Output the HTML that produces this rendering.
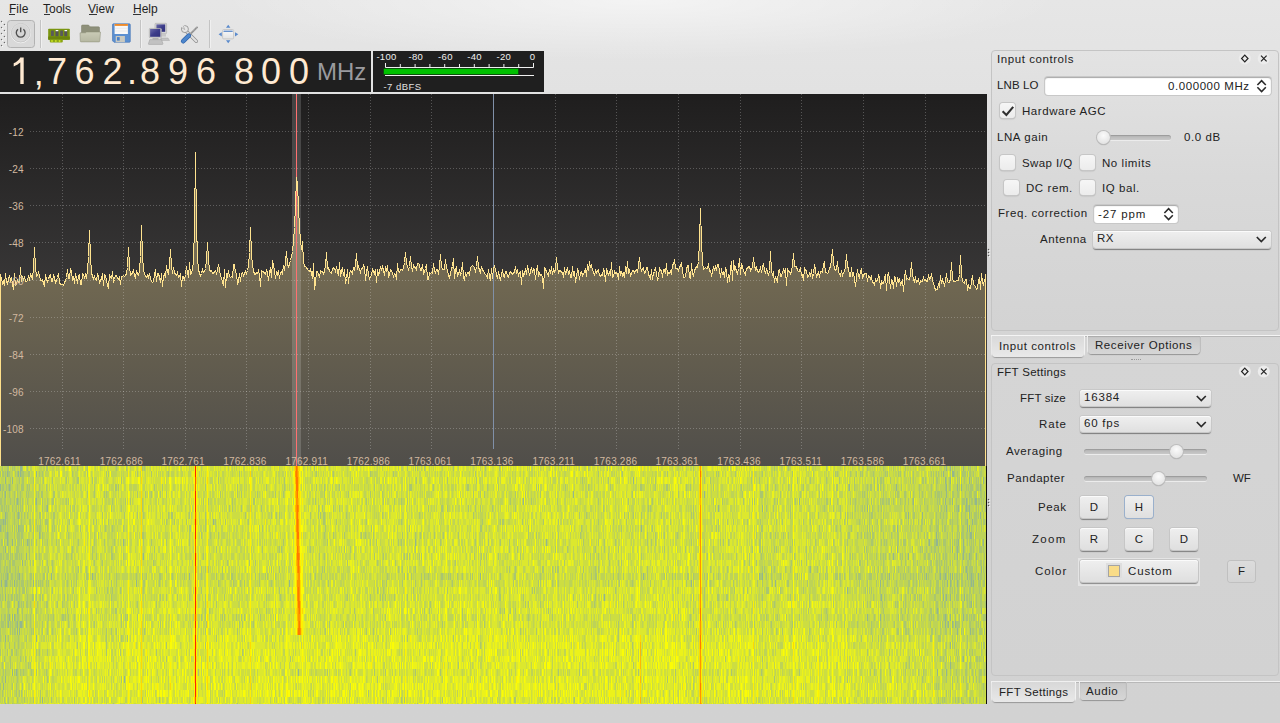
<!DOCTYPE html>
<html><head><meta charset="utf-8">
<style>
*{margin:0;padding:0;box-sizing:border-box}
html,body{width:1280px;height:723px;overflow:hidden}
body{position:relative;font-family:"Liberation Sans",sans-serif;color:#1e1e1e;
 background:
  radial-gradient(ellipse 420px 60px at 640px 0px, rgba(255,255,255,0.55), rgba(255,255,255,0) 100%),
  linear-gradient(to bottom,#e6e6e6 0px,#e2e2e2 90px,#d6d6d6 280px,#d3d3d3 420px,#d2d2d2 723px);}
.a{position:absolute}
.menu{font-size:12px;top:1px;line-height:16px;color:#1e1e1e}
.menu u{text-decoration:none}
.ul{position:absolute;height:1px;top:14px;background:#333}
.t{position:absolute;font-size:11.5px;line-height:14px;color:#222;white-space:nowrap;letter-spacing:0.57px}
.chk{position:absolute;width:15px;height:15px;border-radius:3px;background:linear-gradient(#f6f6f6,#ececec);box-shadow:0 0 0 1px #c6c6c6,0 1px 1.5px rgba(0,0,0,0.3)}
.combo{position:absolute;border-radius:3px;background:linear-gradient(#efefef,#e0e0e0);box-shadow:inset 0 1px 0 #fbfbfb,0 0 0 1px #c8c8c8,0 1.5px 1px rgba(0,0,0,0.42)}
.btn{position:absolute;border-radius:3px;background:linear-gradient(#efefef,#dfdfdf);box-shadow:inset 0 1px 0 #fbfbfb,0 0 0 1px #c6c6c6,0 1.5px 1px rgba(0,0,0,0.4);font-size:11.5px;line-height:22px;text-align:center;color:#222}
.frame{position:absolute;border:1px solid #c4c4c4;border-radius:4px}
.tab{position:absolute;border-radius:0 0 4px 4px}
</style></head><body>

<!-- menu bar -->
<div class="a menu" style="left:9px"><u>F</u>ile</div>
<div class="a menu" style="left:43px"><u>T</u>ools</div>
<div class="a menu" style="left:88px"><u>V</u>iew</div>
<div class="a menu" style="left:133px"><u>H</u>elp</div>
<div class="ul" style="left:9px;width:6px"></div><div class="ul" style="left:44px;width:6px"></div><div class="ul" style="left:89px;width:8px"></div><div class="ul" style="left:133px;width:8px"></div>

<!-- toolbar -->
<svg class="a" style="left:0;top:18px" width="260" height="34" viewBox="0 18 260 34">
 <g fill="#ffffff"><circle cx="2.3" cy="22.3" r="0.6"/><circle cx="5.2" cy="25.3" r="0.6"/><circle cx="2.3" cy="28.3" r="0.6"/><circle cx="5.2" cy="31.3" r="0.6"/><circle cx="2.3" cy="34.3" r="0.6"/><circle cx="5.2" cy="37.3" r="0.6"/><circle cx="2.3" cy="40.3" r="0.6"/><circle cx="5.2" cy="43.3" r="0.6"/><circle cx="2.3" cy="46.3" r="0.6"/></g>
 <g fill="#6a6a6a">
  <circle cx="1.5" cy="21.5" r="0.7"/><circle cx="4.4" cy="24.5" r="0.7"/><circle cx="1.5" cy="27.5" r="0.7"/><circle cx="4.4" cy="30.5" r="0.7"/>
  <circle cx="1.5" cy="33.5" r="0.7"/><circle cx="4.4" cy="36.5" r="0.7"/><circle cx="1.5" cy="39.5" r="0.7"/><circle cx="4.4" cy="42.5" r="0.7"/><circle cx="1.5" cy="45.5" r="0.7"/>
 </g>
 <rect x="7.5" y="20.5" width="27" height="27" rx="3" fill="#d9d9d9" stroke="#b2b2b2"/>
 <circle cx="20.7" cy="33" r="9.8" fill="none" stroke="#f4f4f4" stroke-width="0.9"/>
 <circle cx="20.7" cy="32.6" r="9.4" fill="#dadada" stroke="#c0c0c0" stroke-width="0.7"/>
 <circle cx="20.7" cy="32.6" r="7.6" fill="#d6d6d6"/>
 <path d="M18 29.3 A4.4 4.4 0 1 0 23.4 29.3" fill="none" stroke="#4e4e4e" stroke-width="1.35"/>
 <line x1="20.7" y1="27.6" x2="20.7" y2="32.3" stroke="#4e4e4e" stroke-width="1.35"/>
 <line x1="40.5" y1="20" x2="40.5" y2="48" stroke="#c4c4c4"/><line x1="41.5" y1="20" x2="41.5" y2="48" stroke="#f0f0f0"/>
 <!-- card icon -->
 <defs>
  <linearGradient id="flf" x1="0" y1="0" x2="0" y2="1"><stop offset="0" stop-color="#cacbb6"/><stop offset="1" stop-color="#b6b8a2"/></linearGradient>
  <linearGradient id="scr" x1="0" y1="0" x2="1" y2="1"><stop offset="0" stop-color="#6a6aa8"/><stop offset="0.5" stop-color="#3c3c8a"/><stop offset="1" stop-color="#30307a"/></linearGradient>
  <linearGradient id="win" x1="0" y1="0" x2="0" y2="1"><stop offset="0" stop-color="#fafafa"/><stop offset="1" stop-color="#e2e2e2"/></linearGradient>
 </defs>
 <rect x="48.2" y="28.8" width="21.6" height="10.9" rx="0.8" fill="#7a9510"/>
 <rect x="48.2" y="36.5" width="21.6" height="3.2" fill="#6c840c"/>
 <rect x="49.8" y="39.4" width="13" height="3" rx="1" fill="#8aa414"/>
 <circle cx="52" cy="41" r="1" fill="#c8e020"/><circle cx="55.8" cy="41" r="1" fill="#c8e020"/><circle cx="59.6" cy="41" r="1" fill="#c8e020"/>
 <rect x="51" y="30.5" width="2.8" height="5.6" rx="0.6" fill="#5a5a5a"/><rect x="55.5" y="30.3" width="3" height="6" rx="0.6" fill="#555"/><rect x="55.7" y="30" width="2.6" height="1.2" fill="#fff"/>
 <rect x="60.2" y="30.5" width="2.8" height="5.6" rx="0.6" fill="#5a5a5a"/><rect x="64.3" y="30.3" width="3" height="6" rx="0.6" fill="#555"/><rect x="64.5" y="30" width="2.6" height="1.2" fill="#fff"/>
 <!-- folder -->
 <path d="M81.5 26 Q81.5 25 82.5 25 H88.5 L90 26.8 H98.5 Q99.5 26.8 99.5 27.8 V34 H81.5z" fill="#8e907a" stroke="#7a7c66" stroke-width="0.5"/>
 <path d="M80 32.8 H85.5 L86.5 32 H100.5 L99.8 41.2 Q99.7 41.9 99 41.9 H81 Q80.3 41.9 80.3 41.2z" fill="url(#flf)" stroke="#8a8c76" stroke-width="0.5"/>
 <!-- floppy -->
 <path d="M112.5 24.8 Q112.5 23.8 113.5 23.8 H129.3 Q130.3 23.8 130.3 24.8 V41.3 Q130.3 42.3 129.3 42.3 H114 L112.5 40.8z" fill="#5b8fd0" stroke="#3f70b4" stroke-width="0.6"/>
 <rect x="114.6" y="24" width="13.3" height="10" fill="#f8f8f8"/><rect x="114.6" y="24" width="13.3" height="1.9" fill="#ee8a2a"/>
 <line x1="114.8" y1="28.3" x2="127.8" y2="28.3" stroke="#dcdcdc" stroke-width="0.5"/><line x1="114.8" y1="31" x2="127.8" y2="31" stroke="#dcdcdc" stroke-width="0.5"/>
 <rect x="115.7" y="36" width="9.2" height="6.2" fill="#c9c9c0"/><rect x="117" y="37.1" width="2.7" height="3.5" fill="#4a80c8"/>
 <line x1="140.5" y1="20" x2="140.5" y2="48" stroke="#c4c4c4"/><line x1="141.5" y1="20" x2="141.5" y2="48" stroke="#f0f0f0"/>
 <!-- computers -->
 <rect x="155" y="23.3" width="11.6" height="10.3" rx="0.8" fill="#d6d6d6" stroke="#a8a8a8" stroke-width="0.6"/>
 <rect x="156.4" y="24.4" width="8.8" height="7.4" fill="url(#scr)"/>
 <rect x="160" y="33.6" width="6" height="3" fill="#c8c8c8"/><path d="M161 38 h7 l1.5 2.5 h-9z" fill="#c4c4c4" stroke="#a0a0a0" stroke-width="0.4"/>
 <rect x="149.3" y="28.4" width="12.1" height="9.4" rx="0.8" fill="#dadada" stroke="#a4a4a4" stroke-width="0.6"/>
 <rect x="150.1" y="29" width="10.3" height="7.8" fill="url(#scr)"/>
 <rect x="152.5" y="38" width="6" height="1.6" fill="#b0b0b0"/>
 <path d="M149.8 39.6 H161.5 L163 43.8 Q163 44.4 162.3 44.4 H148.9 Q148.3 44.4 148.4 43.8z" fill="#c2c2c2" stroke="#9c9c9c" stroke-width="0.5"/>
 <!-- tools -->
 <path d="M186.3 31.2 L196.3 41.2" stroke="#8c8c8c" stroke-width="3.4" stroke-linecap="round"/>
 <path d="M186.3 31.2 L196.3 41.2" stroke="#e2e2e2" stroke-width="2" stroke-linecap="round"/>
 <circle cx="184.9" cy="29.1" r="3.5" fill="#e6e6e6" stroke="#8a8a8a" stroke-width="0.8"/>
 <path d="M180.6 26.6 L183 24.2 L186.3 28 L184.8 29.5z" fill="#e5e5e5"/>
 <path d="M181.6 27.6 L184.8 29.6 L183.2 25.8" fill="none" stroke="#9a9a9a" stroke-width="0.6"/>
 <path d="M197 27.4 L188.5 35.9" stroke="#8a8a8a" stroke-width="1.9" stroke-linecap="round"/>
 <path d="M197 27.4 L188.5 35.9" stroke="#d4d4d4" stroke-width="0.8" stroke-dasharray="1 1"/>
 <path d="M188.8 35.6 L183.2 41.2" stroke="#2f64ac" stroke-width="4.6" stroke-linecap="round"/>
 <path d="M188.8 35.6 L183.2 41.2" stroke="#4d86cc" stroke-width="3.2" stroke-linecap="round"/>
 <line x1="209.5" y1="20" x2="209.5" y2="48" stroke="#c4c4c4"/><line x1="210.5" y1="20" x2="210.5" y2="48" stroke="#f0f0f0"/>
 <!-- move icon -->
 <rect x="222.6" y="29.5" width="11" height="9.4" rx="1" fill="url(#win)" stroke="#c0c0c0" stroke-width="0.8"/>
 <rect x="223.5" y="30.6" width="9.2" height="1.3" fill="#5a88c8"/>
 <path d="M228.2 24.8 L230.4 27.8 H226z M228.2 43.2 L230.4 40.2 H226z M218.6 34.3 L221.8 32.2 V36.4z M238.3 34.3 L235 32.2 V36.4z" fill="#5a8acc"/>
</svg>

<!-- frequency display -->
<div class="a" style="left:0;top:51px;width:371px;height:41px;background:#1f1f1f"></div>
<div class="a" id="freq" style="left:0;top:51px;width:371px;height:41px;font-size:36px;color:#ffead2;line-height:41px">
 <svg class="a" style="left:0;top:0" width="30" height="41"><path d="M20.3 6.5 H23.7 V33 H20.3 V11.6 C18.6 13.1 16.2 14.5 13.7 15.5 V12.3 C16.6 11 19.2 8.8 20.3 6.5z" fill="#ffead2"/></svg>
 <span class="a" style="left:33.7px;top:1px">,</span><span class="a" style="left:47px">7</span><span class="a" style="left:74.6px">6</span><span class="a" style="left:102.5px">2</span><span class="a" style="left:127px">.</span><span class="a" style="left:140px">8</span><span class="a" style="left:168px">9</span><span class="a" style="left:196px">6</span><span class="a" style="left:234px">8</span><span class="a" style="left:261px">0</span><span class="a" style="left:289px">0</span>
 <span class="a" style="left:317px;font-size:24px;color:#9a9a9e;top:0px">MHz</span>
</div>

<!-- meter -->
<div class="a" style="left:373px;top:51px;width:171px;height:41px;background:#1f1f1f"></div>
<svg class="a" style="left:373px;top:51px" width="171" height="41" viewBox="373 51 171 41">
 <g font-family="Liberation Sans" font-size="9.5" fill="#f0f0f0" text-anchor="middle" letter-spacing="0.3">
  <text x="386.5" y="60">-100</text><text x="415.8" y="60">-80</text><text x="445.4" y="60">-60</text><text x="474.6" y="60">-40</text><text x="503.8" y="60">-20</text><text x="532.5" y="60">0</text>
 </g>
 <path d="M385.5 63 V67.5 H533.5 V63" fill="none" stroke="#f0f0f0"/>
 <g stroke="#f0f0f0"><line x1="400.3" y1="64" x2="400.3" y2="67"/><line x1="415.1" y1="64" x2="415.1" y2="67"/><line x1="429.9" y1="64" x2="429.9" y2="67"/><line x1="444.7" y1="64" x2="444.7" y2="67"/><line x1="459.5" y1="64" x2="459.5" y2="67"/><line x1="474.3" y1="64" x2="474.3" y2="67"/><line x1="489.1" y1="64" x2="489.1" y2="67"/><line x1="503.9" y1="64" x2="503.9" y2="67"/><line x1="518.7" y1="64" x2="518.7" y2="67"/></g>
 <rect x="383.5" y="68.5" width="135" height="6" fill="#00c000" stroke="#0a3a0a" stroke-width="0.6"/>
 <line x1="385" y1="75.5" x2="534" y2="75.5" stroke="#f0f0f0"/>
 <text x="383.5" y="89.5" font-family="Liberation Sans" font-size="9.5" fill="#e0e0e0" letter-spacing="0.45">-7 dBFS</text>
</svg>

<!-- spectrum -->
<svg class="a" style="left:0;top:94px" width="987" height="372" viewBox="0 0 987 372">
 <defs>
  <linearGradient id="bg" x1="0" y1="0" x2="0" y2="1"><stop offset="0" stop-color="#1f1e1e"/><stop offset="1" stop-color="#504e4e"/></linearGradient>
  <linearGradient id="fl" x1="0" y1="0" x2="0" y2="372" gradientUnits="userSpaceOnUse"><stop offset="0" stop-color="#9c8a60"/><stop offset="0.45" stop-color="#736a52"/><stop offset="1" stop-color="#504e4a"/></linearGradient>
 </defs>
 <rect x="0" y="0" width="987" height="372" fill="url(#bg)"/>
 <path d="M0,372 L0.5,187.5 L1.5,184.5 L2.5,189.5 L3.5,187.5 L4.5,191.5 L5.5,179.5 L6.5,187.5 L7.5,189.5 L8.5,185.5 L9.5,181.5 L10.5,186.5 L11.5,183.5 L12.5,190.5 L13.5,195.5 L14.5,179.5 L15.5,191.5 L16.5,190.5 L17.5,186.5 L18.5,188.5 L19.5,188.5 L20.5,173.5 L21.5,187.5 L22.5,182.5 L23.5,186.5 L24.5,182.5 L25.5,187.5 L26.5,187.5 L27.5,186.5 L28.5,181.5 L29.5,186.5 L30.5,180.5 L31.5,182.5 L32.5,184.5 L33.5,174.5 L34.5,153.5 L35.5,173.5 L36.5,182.5 L37.5,181.5 L38.5,178.5 L39.5,181.5 L40.5,186.5 L41.5,186.5 L42.5,185.5 L43.5,189.5 L44.5,191.5 L45.5,180.5 L46.5,185.5 L47.5,187.5 L48.5,185.5 L49.5,181.5 L50.5,180.5 L51.5,187.5 L52.5,187.5 L53.5,180.5 L54.5,184.5 L55.5,188.5 L56.5,186.5 L57.5,183.5 L58.5,179.5 L59.5,188.5 L60.5,190.5 L61.5,190.5 L62.5,190.5 L63.5,191.5 L64.5,188.5 L65.5,186.5 L66.5,183.5 L67.5,175.5 L68.5,184.5 L69.5,184.5 L70.5,174.5 L71.5,177.5 L72.5,186.5 L73.5,182.5 L74.5,189.5 L75.5,179.5 L76.5,183.5 L77.5,189.5 L78.5,181.5 L79.5,180.5 L80.5,190.5 L81.5,190.5 L82.5,179.5 L83.5,180.5 L84.5,183.5 L85.5,180.5 L86.5,184.5 L87.5,176.5 L88.5,162.5 L89.5,136.5 L90.5,163.5 L91.5,178.5 L92.5,182.5 L93.5,184.5 L94.5,182.5 L95.5,185.5 L96.5,186.5 L97.5,180.5 L98.5,182.5 L99.5,189.5 L100.5,186.5 L101.5,184.5 L102.5,179.5 L103.5,191.5 L104.5,180.5 L105.5,181.5 L106.5,186.5 L107.5,191.5 L108.5,193.5 L109.5,180.5 L110.5,183.5 L111.5,184.5 L112.5,177.5 L113.5,188.5 L114.5,185.5 L115.5,181.5 L116.5,181.5 L117.5,184.5 L118.5,185.5 L119.5,182.5 L120.5,190.5 L121.5,182.5 L122.5,182.5 L123.5,181.5 L124.5,182.5 L125.5,181.5 L126.5,179.5 L127.5,173.5 L128.5,153.5 L129.5,172.5 L130.5,181.5 L131.5,180.5 L132.5,178.5 L133.5,176.5 L134.5,181.5 L135.5,184.5 L136.5,176.5 L137.5,180.5 L138.5,181.5 L139.5,176.5 L140.5,162.5 L141.5,131.5 L142.5,161.5 L143.5,176.5 L144.5,179.5 L145.5,182.5 L146.5,183.5 L147.5,181.5 L148.5,183.5 L149.5,179.5 L150.5,184.5 L151.5,187.5 L152.5,188.5 L153.5,187.5 L154.5,180.5 L155.5,175.5 L156.5,187.5 L157.5,179.5 L158.5,179.5 L159.5,183.5 L160.5,188.5 L161.5,179.5 L162.5,192.5 L163.5,182.5 L164.5,180.5 L165.5,182.5 L166.5,171.5 L167.5,177.5 L168.5,179.5 L169.5,171.5 L170.5,155.5 L171.5,171.5 L172.5,179.5 L173.5,173.5 L174.5,178.5 L175.5,180.5 L176.5,181.5 L177.5,178.5 L178.5,183.5 L179.5,182.5 L180.5,179.5 L181.5,192.5 L182.5,182.5 L183.5,182.5 L184.5,186.5 L185.5,180.5 L186.5,172.5 L187.5,178.5 L188.5,183.5 L189.5,168.5 L190.5,180.5 L191.5,179.5 L192.5,175.5 L193.5,167.5 L194.5,131.5 L195.5,58.5 L196.5,129.5 L197.5,164.5 L198.5,175.5 L199.5,179.5 L200.5,181.5 L201.5,179.5 L202.5,175.5 L203.5,178.5 L204.5,177.5 L205.5,174.5 L206.5,166.5 L207.5,148.5 L208.5,165.5 L209.5,175.5 L210.5,177.5 L211.5,176.5 L212.5,179.5 L213.5,179.5 L214.5,177.5 L215.5,176.5 L216.5,179.5 L217.5,176.5 L218.5,170.5 L219.5,175.5 L220.5,181.5 L221.5,184.5 L222.5,187.5 L223.5,191.5 L224.5,175.5 L225.5,193.5 L226.5,180.5 L227.5,182.5 L228.5,176.5 L229.5,182.5 L230.5,183.5 L231.5,182.5 L232.5,183.5 L233.5,170.5 L234.5,170.5 L235.5,178.5 L236.5,179.5 L237.5,190.5 L238.5,186.5 L239.5,179.5 L240.5,187.5 L241.5,179.5 L242.5,178.5 L243.5,181.5 L244.5,179.5 L245.5,177.5 L246.5,179.5 L247.5,176.5 L248.5,172.5 L249.5,158.5 L250.5,133.5 L251.5,160.5 L252.5,171.5 L253.5,176.5 L254.5,180.5 L255.5,180.5 L256.5,178.5 L257.5,179.5 L258.5,176.5 L259.5,181.5 L260.5,192.5 L261.5,176.5 L262.5,177.5 L263.5,177.5 L264.5,179.5 L265.5,180.5 L266.5,176.5 L267.5,178.5 L268.5,186.5 L269.5,178.5 L270.5,173.5 L271.5,183.5 L272.5,166.5 L273.5,171.5 L274.5,176.5 L275.5,184.5 L276.5,177.5 L277.5,180.5 L278.5,176.5 L279.5,184.5 L280.5,178.5 L281.5,177.5 L282.5,179.5 L283.5,171.5 L284.5,176.5 L285.5,167.5 L286.5,157.5 L287.5,169.5 L288.5,173.5 L289.5,169.5 L290.5,166.5 L291.5,162.5 L292.5,157.5 L293.5,147.5 L294.5,133.5 L295.5,111.5 L296.5,83.5 L297.5,89.5 L298.5,113.5 L299.5,133.5 L300.5,145.5 L301.5,155.5 L302.5,147.5 L303.5,167.5 L304.5,172.5 L305.5,172.5 L306.5,173.5 L307.5,175.5 L308.5,176.5 L309.5,177.5 L310.5,175.5 L311.5,179.5 L312.5,184.5 L313.5,169.5 L314.5,195.5 L315.5,188.5 L316.5,177.5 L317.5,177.5 L318.5,180.5 L319.5,183.5 L320.5,176.5 L321.5,177.5 L322.5,177.5 L323.5,179.5 L324.5,177.5 L325.5,171.5 L326.5,158.5 L327.5,174.5 L328.5,173.5 L329.5,177.5 L330.5,178.5 L331.5,179.5 L332.5,175.5 L333.5,173.5 L334.5,174.5 L335.5,177.5 L336.5,172.5 L337.5,177.5 L338.5,181.5 L339.5,168.5 L340.5,182.5 L341.5,177.5 L342.5,173.5 L343.5,181.5 L344.5,175.5 L345.5,189.5 L346.5,184.5 L347.5,175.5 L348.5,189.5 L349.5,179.5 L350.5,176.5 L351.5,177.5 L352.5,179.5 L353.5,173.5 L354.5,176.5 L355.5,170.5 L356.5,159.5 L357.5,174.5 L358.5,172.5 L359.5,175.5 L360.5,178.5 L361.5,174.5 L362.5,174.5 L363.5,171.5 L364.5,173.5 L365.5,186.5 L366.5,178.5 L367.5,172.5 L368.5,181.5 L369.5,184.5 L370.5,182.5 L371.5,181.5 L372.5,174.5 L373.5,177.5 L374.5,179.5 L375.5,175.5 L376.5,188.5 L377.5,175.5 L378.5,180.5 L379.5,178.5 L380.5,172.5 L381.5,175.5 L382.5,172.5 L383.5,176.5 L384.5,181.5 L385.5,172.5 L386.5,177.5 L387.5,171.5 L388.5,182.5 L389.5,180.5 L390.5,175.5 L391.5,176.5 L392.5,179.5 L393.5,182.5 L394.5,179.5 L395.5,180.5 L396.5,185.5 L397.5,169.5 L398.5,177.5 L399.5,178.5 L400.5,175.5 L401.5,175.5 L402.5,176.5 L403.5,173.5 L404.5,168.5 L405.5,158.5 L406.5,169.5 L407.5,172.5 L408.5,175.5 L409.5,172.5 L410.5,162.5 L411.5,173.5 L412.5,176.5 L413.5,171.5 L414.5,173.5 L415.5,173.5 L416.5,175.5 L417.5,169.5 L418.5,169.5 L419.5,170.5 L420.5,176.5 L421.5,176.5 L422.5,170.5 L423.5,179.5 L424.5,177.5 L425.5,174.5 L426.5,170.5 L427.5,185.5 L428.5,185.5 L429.5,178.5 L430.5,179.5 L431.5,178.5 L432.5,179.5 L433.5,169.5 L434.5,176.5 L435.5,178.5 L436.5,175.5 L437.5,175.5 L438.5,180.5 L439.5,171.5 L440.5,160.5 L441.5,172.5 L442.5,175.5 L443.5,175.5 L444.5,175.5 L445.5,165.5 L446.5,173.5 L447.5,176.5 L448.5,181.5 L449.5,183.5 L450.5,179.5 L451.5,174.5 L452.5,172.5 L453.5,164.5 L454.5,184.5 L455.5,176.5 L456.5,172.5 L457.5,182.5 L458.5,179.5 L459.5,176.5 L460.5,180.5 L461.5,178.5 L462.5,168.5 L463.5,182.5 L464.5,186.5 L465.5,178.5 L466.5,181.5 L467.5,178.5 L468.5,178.5 L469.5,181.5 L470.5,173.5 L471.5,172.5 L472.5,171.5 L473.5,172.5 L474.5,173.5 L475.5,178.5 L476.5,172.5 L477.5,162.5 L478.5,172.5 L479.5,176.5 L480.5,178.5 L481.5,172.5 L482.5,176.5 L483.5,176.5 L484.5,179.5 L485.5,180.5 L486.5,181.5 L487.5,183.5 L488.5,175.5 L489.5,182.5 L490.5,186.5 L491.5,174.5 L492.5,184.5 L493.5,174.5 L494.5,172.5 L495.5,175.5 L496.5,180.5 L497.5,184.5 L498.5,177.5 L499.5,182.5 L500.5,186.5 L501.5,180.5 L502.5,175.5 L503.5,182.5 L504.5,183.5 L505.5,177.5 L506.5,177.5 L507.5,182.5 L508.5,183.5 L509.5,179.5 L510.5,177.5 L511.5,178.5 L512.5,180.5 L513.5,179.5 L514.5,177.5 L515.5,172.5 L516.5,178.5 L517.5,176.5 L518.5,181.5 L519.5,178.5 L520.5,177.5 L521.5,190.5 L522.5,176.5 L523.5,181.5 L524.5,179.5 L525.5,174.5 L526.5,180.5 L527.5,171.5 L528.5,176.5 L529.5,181.5 L530.5,177.5 L531.5,173.5 L532.5,178.5 L533.5,174.5 L534.5,175.5 L535.5,185.5 L536.5,177.5 L537.5,171.5 L538.5,182.5 L539.5,179.5 L540.5,181.5 L541.5,180.5 L542.5,183.5 L543.5,194.5 L544.5,173.5 L545.5,174.5 L546.5,178.5 L547.5,179.5 L548.5,181.5 L549.5,175.5 L550.5,179.5 L551.5,172.5 L552.5,180.5 L553.5,175.5 L554.5,177.5 L555.5,175.5 L556.5,163.5 L557.5,173.5 L558.5,178.5 L559.5,176.5 L560.5,176.5 L561.5,178.5 L562.5,178.5 L563.5,183.5 L564.5,173.5 L565.5,180.5 L566.5,176.5 L567.5,174.5 L568.5,179.5 L569.5,176.5 L570.5,183.5 L571.5,183.5 L572.5,172.5 L573.5,181.5 L574.5,177.5 L575.5,188.5 L576.5,182.5 L577.5,175.5 L578.5,177.5 L579.5,185.5 L580.5,178.5 L581.5,177.5 L582.5,181.5 L583.5,179.5 L584.5,178.5 L585.5,174.5 L586.5,182.5 L587.5,170.5 L588.5,176.5 L589.5,167.5 L590.5,173.5 L591.5,170.5 L592.5,176.5 L593.5,177.5 L594.5,181.5 L595.5,176.5 L596.5,178.5 L597.5,176.5 L598.5,175.5 L599.5,181.5 L600.5,182.5 L601.5,180.5 L602.5,181.5 L603.5,175.5 L604.5,177.5 L605.5,187.5 L606.5,175.5 L607.5,177.5 L608.5,181.5 L609.5,177.5 L610.5,181.5 L611.5,168.5 L612.5,183.5 L613.5,182.5 L614.5,177.5 L615.5,179.5 L616.5,178.5 L617.5,180.5 L618.5,185.5 L619.5,172.5 L620.5,181.5 L621.5,177.5 L622.5,181.5 L623.5,179.5 L624.5,183.5 L625.5,172.5 L626.5,179.5 L627.5,167.5 L628.5,179.5 L629.5,175.5 L630.5,181.5 L631.5,179.5 L632.5,176.5 L633.5,176.5 L634.5,178.5 L635.5,176.5 L636.5,175.5 L637.5,178.5 L638.5,171.5 L639.5,163.5 L640.5,171.5 L641.5,177.5 L642.5,174.5 L643.5,173.5 L644.5,179.5 L645.5,178.5 L646.5,173.5 L647.5,173.5 L648.5,180.5 L649.5,182.5 L650.5,185.5 L651.5,175.5 L652.5,185.5 L653.5,179.5 L654.5,177.5 L655.5,173.5 L656.5,179.5 L657.5,186.5 L658.5,183.5 L659.5,173.5 L660.5,176.5 L661.5,176.5 L662.5,183.5 L663.5,175.5 L664.5,175.5 L665.5,179.5 L666.5,169.5 L667.5,181.5 L668.5,178.5 L669.5,179.5 L670.5,177.5 L671.5,179.5 L672.5,170.5 L673.5,170.5 L674.5,165.5 L675.5,174.5 L676.5,174.5 L677.5,174.5 L678.5,176.5 L679.5,173.5 L680.5,171.5 L681.5,169.5 L682.5,176.5 L683.5,183.5 L684.5,183.5 L685.5,182.5 L686.5,175.5 L687.5,171.5 L688.5,171.5 L689.5,183.5 L690.5,184.5 L691.5,169.5 L692.5,179.5 L693.5,182.5 L694.5,176.5 L695.5,174.5 L696.5,172.5 L697.5,173.5 L698.5,167.5 L699.5,146.5 L700.5,114.5 L701.5,147.5 L702.5,168.5 L703.5,175.5 L704.5,174.5 L705.5,173.5 L706.5,174.5 L707.5,174.5 L708.5,169.5 L709.5,177.5 L710.5,176.5 L711.5,181.5 L712.5,178.5 L713.5,172.5 L714.5,176.5 L715.5,172.5 L716.5,175.5 L717.5,170.5 L718.5,170.5 L719.5,176.5 L720.5,183.5 L721.5,174.5 L722.5,180.5 L723.5,177.5 L724.5,183.5 L725.5,173.5 L726.5,176.5 L727.5,188.5 L728.5,180.5 L729.5,187.5 L730.5,175.5 L731.5,167.5 L732.5,186.5 L733.5,166.5 L734.5,175.5 L735.5,173.5 L736.5,177.5 L737.5,180.5 L738.5,174.5 L739.5,164.5 L740.5,180.5 L741.5,169.5 L742.5,172.5 L743.5,177.5 L744.5,178.5 L745.5,180.5 L746.5,174.5 L747.5,174.5 L748.5,172.5 L749.5,172.5 L750.5,176.5 L751.5,174.5 L752.5,173.5 L753.5,163.5 L754.5,171.5 L755.5,175.5 L756.5,173.5 L757.5,177.5 L758.5,178.5 L759.5,176.5 L760.5,173.5 L761.5,178.5 L762.5,173.5 L763.5,169.5 L764.5,176.5 L765.5,178.5 L766.5,175.5 L767.5,177.5 L768.5,181.5 L769.5,176.5 L770.5,157.5 L771.5,177.5 L772.5,180.5 L773.5,178.5 L774.5,188.5 L775.5,182.5 L776.5,185.5 L777.5,188.5 L778.5,176.5 L779.5,175.5 L780.5,182.5 L781.5,182.5 L782.5,178.5 L783.5,175.5 L784.5,177.5 L785.5,175.5 L786.5,191.5 L787.5,175.5 L788.5,177.5 L789.5,177.5 L790.5,179.5 L791.5,177.5 L792.5,170.5 L793.5,159.5 L794.5,172.5 L795.5,172.5 L796.5,172.5 L797.5,176.5 L798.5,177.5 L799.5,177.5 L800.5,173.5 L801.5,181.5 L802.5,180.5 L803.5,186.5 L804.5,174.5 L805.5,176.5 L806.5,176.5 L807.5,183.5 L808.5,182.5 L809.5,179.5 L810.5,182.5 L811.5,175.5 L812.5,184.5 L813.5,179.5 L814.5,170.5 L815.5,175.5 L816.5,183.5 L817.5,180.5 L818.5,178.5 L819.5,183.5 L820.5,177.5 L821.5,177.5 L822.5,178.5 L823.5,170.5 L824.5,168.5 L825.5,178.5 L826.5,178.5 L827.5,179.5 L828.5,178.5 L829.5,173.5 L830.5,173.5 L831.5,165.5 L832.5,155.5 L833.5,167.5 L834.5,175.5 L835.5,176.5 L836.5,174.5 L837.5,167.5 L838.5,178.5 L839.5,179.5 L840.5,182.5 L841.5,176.5 L842.5,181.5 L843.5,178.5 L844.5,177.5 L845.5,172.5 L846.5,160.5 L847.5,173.5 L848.5,173.5 L849.5,182.5 L850.5,182.5 L851.5,173.5 L852.5,181.5 L853.5,179.5 L854.5,184.5 L855.5,192.5 L856.5,183.5 L857.5,175.5 L858.5,181.5 L859.5,183.5 L860.5,177.5 L861.5,175.5 L862.5,183.5 L863.5,181.5 L864.5,179.5 L865.5,179.5 L866.5,179.5 L867.5,187.5 L868.5,181.5 L869.5,182.5 L870.5,184.5 L871.5,182.5 L872.5,188.5 L873.5,188.5 L874.5,191.5 L875.5,185.5 L876.5,187.5 L877.5,186.5 L878.5,181.5 L879.5,183.5 L880.5,194.5 L881.5,187.5 L882.5,189.5 L883.5,189.5 L884.5,184.5 L885.5,180.5 L886.5,196.5 L887.5,182.5 L888.5,178.5 L889.5,184.5 L890.5,194.5 L891.5,185.5 L892.5,186.5 L893.5,194.5 L894.5,182.5 L895.5,183.5 L896.5,192.5 L897.5,183.5 L898.5,187.5 L899.5,184.5 L900.5,191.5 L901.5,188.5 L902.5,185.5 L903.5,197.5 L904.5,184.5 L905.5,176.5 L906.5,185.5 L907.5,184.5 L908.5,185.5 L909.5,185.5 L910.5,180.5 L911.5,168.5 L912.5,181.5 L913.5,184.5 L914.5,188.5 L915.5,182.5 L916.5,188.5 L917.5,187.5 L918.5,185.5 L919.5,190.5 L920.5,186.5 L921.5,187.5 L922.5,187.5 L923.5,183.5 L924.5,186.5 L925.5,185.5 L926.5,187.5 L927.5,187.5 L928.5,180.5 L929.5,185.5 L930.5,184.5 L931.5,179.5 L932.5,186.5 L933.5,189.5 L934.5,192.5 L935.5,196.5 L936.5,195.5 L937.5,195.5 L938.5,189.5 L939.5,193.5 L940.5,181.5 L941.5,189.5 L942.5,185.5 L943.5,188.5 L944.5,191.5 L945.5,186.5 L946.5,179.5 L947.5,187.5 L948.5,188.5 L949.5,188.5 L950.5,184.5 L951.5,168.5 L952.5,184.5 L953.5,187.5 L954.5,187.5 L955.5,187.5 L956.5,186.5 L957.5,186.5 L958.5,186.5 L959.5,180.5 L960.5,161.5 L961.5,179.5 L962.5,187.5 L963.5,188.5 L964.5,189.5 L965.5,185.5 L966.5,185.5 L967.5,196.5 L968.5,191.5 L969.5,194.5 L970.5,194.5 L971.5,187.5 L972.5,181.5 L973.5,190.5 L974.5,191.5 L975.5,192.5 L976.5,195.5 L977.5,194.5 L978.5,186.5 L979.5,184.5 L980.5,195.5 L981.5,179.5 L982.5,188.5 L983.5,191.5 L984.5,185.5 L985.5,185.5 L986,372 Z" fill="url(#fl)"/>
 <g stroke="#ffffff" stroke-opacity="0.24" stroke-width="1" stroke-dasharray="1 2" shape-rendering="crispEdges"><line x1="62.5" y1="0" x2="62.5" y2="355" /><line x1="123.5" y1="0" x2="123.5" y2="355" /><line x1="185.5" y1="0" x2="185.5" y2="355" /><line x1="246.5" y1="0" x2="246.5" y2="355" /><line x1="308.5" y1="0" x2="308.5" y2="355" /><line x1="370.5" y1="0" x2="370.5" y2="355" /><line x1="431.5" y1="0" x2="431.5" y2="355" /><line x1="493.5" y1="0" x2="493.5" y2="355" /><line x1="555.5" y1="0" x2="555.5" y2="355" /><line x1="616.5" y1="0" x2="616.5" y2="355" /><line x1="678.5" y1="0" x2="678.5" y2="355" /><line x1="740.5" y1="0" x2="740.5" y2="355" /><line x1="801.5" y1="0" x2="801.5" y2="355" /><line x1="863.5" y1="0" x2="863.5" y2="355" /><line x1="925.5" y1="0" x2="925.5" y2="355" /><line x1="30" y1="37.5" x2="986" y2="37.5" /><line x1="30" y1="74.5" x2="986" y2="74.5" /><line x1="30" y1="111.5" x2="986" y2="111.5" /><line x1="30" y1="148.5" x2="986" y2="148.5" /><line x1="30" y1="186.5" x2="986" y2="186.5" /><line x1="30" y1="223.5" x2="986" y2="223.5" /><line x1="30" y1="260.5" x2="986" y2="260.5" /><line x1="30" y1="297.5" x2="986" y2="297.5" /><line x1="30" y1="334.5" x2="986" y2="334.5" /></g>
 <rect x="292" y="0" width="9" height="372" fill="#ffffff" opacity="0.16"/>
 <line x1="296.5" y1="0" x2="296.5" y2="372" stroke="#ff7070"/>
 <line x1="493.5" y1="0" x2="493.5" y2="355" stroke="#8090a8"/>
 <polyline points="0.5,187.5 1.5,184.5 2.5,189.5 3.5,187.5 4.5,191.5 5.5,179.5 6.5,187.5 7.5,189.5 8.5,185.5 9.5,181.5 10.5,186.5 11.5,183.5 12.5,190.5 13.5,195.5 14.5,179.5 15.5,191.5 16.5,190.5 17.5,186.5 18.5,188.5 19.5,188.5 20.5,173.5 21.5,187.5 22.5,182.5 23.5,186.5 24.5,182.5 25.5,187.5 26.5,187.5 27.5,186.5 28.5,181.5 29.5,186.5 30.5,180.5 31.5,182.5 32.5,184.5 33.5,174.5 34.5,153.5 35.5,173.5 36.5,182.5 37.5,181.5 38.5,178.5 39.5,181.5 40.5,186.5 41.5,186.5 42.5,185.5 43.5,189.5 44.5,191.5 45.5,180.5 46.5,185.5 47.5,187.5 48.5,185.5 49.5,181.5 50.5,180.5 51.5,187.5 52.5,187.5 53.5,180.5 54.5,184.5 55.5,188.5 56.5,186.5 57.5,183.5 58.5,179.5 59.5,188.5 60.5,190.5 61.5,190.5 62.5,190.5 63.5,191.5 64.5,188.5 65.5,186.5 66.5,183.5 67.5,175.5 68.5,184.5 69.5,184.5 70.5,174.5 71.5,177.5 72.5,186.5 73.5,182.5 74.5,189.5 75.5,179.5 76.5,183.5 77.5,189.5 78.5,181.5 79.5,180.5 80.5,190.5 81.5,190.5 82.5,179.5 83.5,180.5 84.5,183.5 85.5,180.5 86.5,184.5 87.5,176.5 88.5,162.5 89.5,136.5 90.5,163.5 91.5,178.5 92.5,182.5 93.5,184.5 94.5,182.5 95.5,185.5 96.5,186.5 97.5,180.5 98.5,182.5 99.5,189.5 100.5,186.5 101.5,184.5 102.5,179.5 103.5,191.5 104.5,180.5 105.5,181.5 106.5,186.5 107.5,191.5 108.5,193.5 109.5,180.5 110.5,183.5 111.5,184.5 112.5,177.5 113.5,188.5 114.5,185.5 115.5,181.5 116.5,181.5 117.5,184.5 118.5,185.5 119.5,182.5 120.5,190.5 121.5,182.5 122.5,182.5 123.5,181.5 124.5,182.5 125.5,181.5 126.5,179.5 127.5,173.5 128.5,153.5 129.5,172.5 130.5,181.5 131.5,180.5 132.5,178.5 133.5,176.5 134.5,181.5 135.5,184.5 136.5,176.5 137.5,180.5 138.5,181.5 139.5,176.5 140.5,162.5 141.5,131.5 142.5,161.5 143.5,176.5 144.5,179.5 145.5,182.5 146.5,183.5 147.5,181.5 148.5,183.5 149.5,179.5 150.5,184.5 151.5,187.5 152.5,188.5 153.5,187.5 154.5,180.5 155.5,175.5 156.5,187.5 157.5,179.5 158.5,179.5 159.5,183.5 160.5,188.5 161.5,179.5 162.5,192.5 163.5,182.5 164.5,180.5 165.5,182.5 166.5,171.5 167.5,177.5 168.5,179.5 169.5,171.5 170.5,155.5 171.5,171.5 172.5,179.5 173.5,173.5 174.5,178.5 175.5,180.5 176.5,181.5 177.5,178.5 178.5,183.5 179.5,182.5 180.5,179.5 181.5,192.5 182.5,182.5 183.5,182.5 184.5,186.5 185.5,180.5 186.5,172.5 187.5,178.5 188.5,183.5 189.5,168.5 190.5,180.5 191.5,179.5 192.5,175.5 193.5,167.5 194.5,131.5 195.5,58.5 196.5,129.5 197.5,164.5 198.5,175.5 199.5,179.5 200.5,181.5 201.5,179.5 202.5,175.5 203.5,178.5 204.5,177.5 205.5,174.5 206.5,166.5 207.5,148.5 208.5,165.5 209.5,175.5 210.5,177.5 211.5,176.5 212.5,179.5 213.5,179.5 214.5,177.5 215.5,176.5 216.5,179.5 217.5,176.5 218.5,170.5 219.5,175.5 220.5,181.5 221.5,184.5 222.5,187.5 223.5,191.5 224.5,175.5 225.5,193.5 226.5,180.5 227.5,182.5 228.5,176.5 229.5,182.5 230.5,183.5 231.5,182.5 232.5,183.5 233.5,170.5 234.5,170.5 235.5,178.5 236.5,179.5 237.5,190.5 238.5,186.5 239.5,179.5 240.5,187.5 241.5,179.5 242.5,178.5 243.5,181.5 244.5,179.5 245.5,177.5 246.5,179.5 247.5,176.5 248.5,172.5 249.5,158.5 250.5,133.5 251.5,160.5 252.5,171.5 253.5,176.5 254.5,180.5 255.5,180.5 256.5,178.5 257.5,179.5 258.5,176.5 259.5,181.5 260.5,192.5 261.5,176.5 262.5,177.5 263.5,177.5 264.5,179.5 265.5,180.5 266.5,176.5 267.5,178.5 268.5,186.5 269.5,178.5 270.5,173.5 271.5,183.5 272.5,166.5 273.5,171.5 274.5,176.5 275.5,184.5 276.5,177.5 277.5,180.5 278.5,176.5 279.5,184.5 280.5,178.5 281.5,177.5 282.5,179.5 283.5,171.5 284.5,176.5 285.5,167.5 286.5,157.5 287.5,169.5 288.5,173.5 289.5,169.5 290.5,166.5 291.5,162.5 292.5,157.5 293.5,147.5 294.5,133.5 295.5,111.5 296.5,83.5 297.5,89.5 298.5,113.5 299.5,133.5 300.5,145.5 301.5,155.5 302.5,147.5 303.5,167.5 304.5,172.5 305.5,172.5 306.5,173.5 307.5,175.5 308.5,176.5 309.5,177.5 310.5,175.5 311.5,179.5 312.5,184.5 313.5,169.5 314.5,195.5 315.5,188.5 316.5,177.5 317.5,177.5 318.5,180.5 319.5,183.5 320.5,176.5 321.5,177.5 322.5,177.5 323.5,179.5 324.5,177.5 325.5,171.5 326.5,158.5 327.5,174.5 328.5,173.5 329.5,177.5 330.5,178.5 331.5,179.5 332.5,175.5 333.5,173.5 334.5,174.5 335.5,177.5 336.5,172.5 337.5,177.5 338.5,181.5 339.5,168.5 340.5,182.5 341.5,177.5 342.5,173.5 343.5,181.5 344.5,175.5 345.5,189.5 346.5,184.5 347.5,175.5 348.5,189.5 349.5,179.5 350.5,176.5 351.5,177.5 352.5,179.5 353.5,173.5 354.5,176.5 355.5,170.5 356.5,159.5 357.5,174.5 358.5,172.5 359.5,175.5 360.5,178.5 361.5,174.5 362.5,174.5 363.5,171.5 364.5,173.5 365.5,186.5 366.5,178.5 367.5,172.5 368.5,181.5 369.5,184.5 370.5,182.5 371.5,181.5 372.5,174.5 373.5,177.5 374.5,179.5 375.5,175.5 376.5,188.5 377.5,175.5 378.5,180.5 379.5,178.5 380.5,172.5 381.5,175.5 382.5,172.5 383.5,176.5 384.5,181.5 385.5,172.5 386.5,177.5 387.5,171.5 388.5,182.5 389.5,180.5 390.5,175.5 391.5,176.5 392.5,179.5 393.5,182.5 394.5,179.5 395.5,180.5 396.5,185.5 397.5,169.5 398.5,177.5 399.5,178.5 400.5,175.5 401.5,175.5 402.5,176.5 403.5,173.5 404.5,168.5 405.5,158.5 406.5,169.5 407.5,172.5 408.5,175.5 409.5,172.5 410.5,162.5 411.5,173.5 412.5,176.5 413.5,171.5 414.5,173.5 415.5,173.5 416.5,175.5 417.5,169.5 418.5,169.5 419.5,170.5 420.5,176.5 421.5,176.5 422.5,170.5 423.5,179.5 424.5,177.5 425.5,174.5 426.5,170.5 427.5,185.5 428.5,185.5 429.5,178.5 430.5,179.5 431.5,178.5 432.5,179.5 433.5,169.5 434.5,176.5 435.5,178.5 436.5,175.5 437.5,175.5 438.5,180.5 439.5,171.5 440.5,160.5 441.5,172.5 442.5,175.5 443.5,175.5 444.5,175.5 445.5,165.5 446.5,173.5 447.5,176.5 448.5,181.5 449.5,183.5 450.5,179.5 451.5,174.5 452.5,172.5 453.5,164.5 454.5,184.5 455.5,176.5 456.5,172.5 457.5,182.5 458.5,179.5 459.5,176.5 460.5,180.5 461.5,178.5 462.5,168.5 463.5,182.5 464.5,186.5 465.5,178.5 466.5,181.5 467.5,178.5 468.5,178.5 469.5,181.5 470.5,173.5 471.5,172.5 472.5,171.5 473.5,172.5 474.5,173.5 475.5,178.5 476.5,172.5 477.5,162.5 478.5,172.5 479.5,176.5 480.5,178.5 481.5,172.5 482.5,176.5 483.5,176.5 484.5,179.5 485.5,180.5 486.5,181.5 487.5,183.5 488.5,175.5 489.5,182.5 490.5,186.5 491.5,174.5 492.5,184.5 493.5,174.5 494.5,172.5 495.5,175.5 496.5,180.5 497.5,184.5 498.5,177.5 499.5,182.5 500.5,186.5 501.5,180.5 502.5,175.5 503.5,182.5 504.5,183.5 505.5,177.5 506.5,177.5 507.5,182.5 508.5,183.5 509.5,179.5 510.5,177.5 511.5,178.5 512.5,180.5 513.5,179.5 514.5,177.5 515.5,172.5 516.5,178.5 517.5,176.5 518.5,181.5 519.5,178.5 520.5,177.5 521.5,190.5 522.5,176.5 523.5,181.5 524.5,179.5 525.5,174.5 526.5,180.5 527.5,171.5 528.5,176.5 529.5,181.5 530.5,177.5 531.5,173.5 532.5,178.5 533.5,174.5 534.5,175.5 535.5,185.5 536.5,177.5 537.5,171.5 538.5,182.5 539.5,179.5 540.5,181.5 541.5,180.5 542.5,183.5 543.5,194.5 544.5,173.5 545.5,174.5 546.5,178.5 547.5,179.5 548.5,181.5 549.5,175.5 550.5,179.5 551.5,172.5 552.5,180.5 553.5,175.5 554.5,177.5 555.5,175.5 556.5,163.5 557.5,173.5 558.5,178.5 559.5,176.5 560.5,176.5 561.5,178.5 562.5,178.5 563.5,183.5 564.5,173.5 565.5,180.5 566.5,176.5 567.5,174.5 568.5,179.5 569.5,176.5 570.5,183.5 571.5,183.5 572.5,172.5 573.5,181.5 574.5,177.5 575.5,188.5 576.5,182.5 577.5,175.5 578.5,177.5 579.5,185.5 580.5,178.5 581.5,177.5 582.5,181.5 583.5,179.5 584.5,178.5 585.5,174.5 586.5,182.5 587.5,170.5 588.5,176.5 589.5,167.5 590.5,173.5 591.5,170.5 592.5,176.5 593.5,177.5 594.5,181.5 595.5,176.5 596.5,178.5 597.5,176.5 598.5,175.5 599.5,181.5 600.5,182.5 601.5,180.5 602.5,181.5 603.5,175.5 604.5,177.5 605.5,187.5 606.5,175.5 607.5,177.5 608.5,181.5 609.5,177.5 610.5,181.5 611.5,168.5 612.5,183.5 613.5,182.5 614.5,177.5 615.5,179.5 616.5,178.5 617.5,180.5 618.5,185.5 619.5,172.5 620.5,181.5 621.5,177.5 622.5,181.5 623.5,179.5 624.5,183.5 625.5,172.5 626.5,179.5 627.5,167.5 628.5,179.5 629.5,175.5 630.5,181.5 631.5,179.5 632.5,176.5 633.5,176.5 634.5,178.5 635.5,176.5 636.5,175.5 637.5,178.5 638.5,171.5 639.5,163.5 640.5,171.5 641.5,177.5 642.5,174.5 643.5,173.5 644.5,179.5 645.5,178.5 646.5,173.5 647.5,173.5 648.5,180.5 649.5,182.5 650.5,185.5 651.5,175.5 652.5,185.5 653.5,179.5 654.5,177.5 655.5,173.5 656.5,179.5 657.5,186.5 658.5,183.5 659.5,173.5 660.5,176.5 661.5,176.5 662.5,183.5 663.5,175.5 664.5,175.5 665.5,179.5 666.5,169.5 667.5,181.5 668.5,178.5 669.5,179.5 670.5,177.5 671.5,179.5 672.5,170.5 673.5,170.5 674.5,165.5 675.5,174.5 676.5,174.5 677.5,174.5 678.5,176.5 679.5,173.5 680.5,171.5 681.5,169.5 682.5,176.5 683.5,183.5 684.5,183.5 685.5,182.5 686.5,175.5 687.5,171.5 688.5,171.5 689.5,183.5 690.5,184.5 691.5,169.5 692.5,179.5 693.5,182.5 694.5,176.5 695.5,174.5 696.5,172.5 697.5,173.5 698.5,167.5 699.5,146.5 700.5,114.5 701.5,147.5 702.5,168.5 703.5,175.5 704.5,174.5 705.5,173.5 706.5,174.5 707.5,174.5 708.5,169.5 709.5,177.5 710.5,176.5 711.5,181.5 712.5,178.5 713.5,172.5 714.5,176.5 715.5,172.5 716.5,175.5 717.5,170.5 718.5,170.5 719.5,176.5 720.5,183.5 721.5,174.5 722.5,180.5 723.5,177.5 724.5,183.5 725.5,173.5 726.5,176.5 727.5,188.5 728.5,180.5 729.5,187.5 730.5,175.5 731.5,167.5 732.5,186.5 733.5,166.5 734.5,175.5 735.5,173.5 736.5,177.5 737.5,180.5 738.5,174.5 739.5,164.5 740.5,180.5 741.5,169.5 742.5,172.5 743.5,177.5 744.5,178.5 745.5,180.5 746.5,174.5 747.5,174.5 748.5,172.5 749.5,172.5 750.5,176.5 751.5,174.5 752.5,173.5 753.5,163.5 754.5,171.5 755.5,175.5 756.5,173.5 757.5,177.5 758.5,178.5 759.5,176.5 760.5,173.5 761.5,178.5 762.5,173.5 763.5,169.5 764.5,176.5 765.5,178.5 766.5,175.5 767.5,177.5 768.5,181.5 769.5,176.5 770.5,157.5 771.5,177.5 772.5,180.5 773.5,178.5 774.5,188.5 775.5,182.5 776.5,185.5 777.5,188.5 778.5,176.5 779.5,175.5 780.5,182.5 781.5,182.5 782.5,178.5 783.5,175.5 784.5,177.5 785.5,175.5 786.5,191.5 787.5,175.5 788.5,177.5 789.5,177.5 790.5,179.5 791.5,177.5 792.5,170.5 793.5,159.5 794.5,172.5 795.5,172.5 796.5,172.5 797.5,176.5 798.5,177.5 799.5,177.5 800.5,173.5 801.5,181.5 802.5,180.5 803.5,186.5 804.5,174.5 805.5,176.5 806.5,176.5 807.5,183.5 808.5,182.5 809.5,179.5 810.5,182.5 811.5,175.5 812.5,184.5 813.5,179.5 814.5,170.5 815.5,175.5 816.5,183.5 817.5,180.5 818.5,178.5 819.5,183.5 820.5,177.5 821.5,177.5 822.5,178.5 823.5,170.5 824.5,168.5 825.5,178.5 826.5,178.5 827.5,179.5 828.5,178.5 829.5,173.5 830.5,173.5 831.5,165.5 832.5,155.5 833.5,167.5 834.5,175.5 835.5,176.5 836.5,174.5 837.5,167.5 838.5,178.5 839.5,179.5 840.5,182.5 841.5,176.5 842.5,181.5 843.5,178.5 844.5,177.5 845.5,172.5 846.5,160.5 847.5,173.5 848.5,173.5 849.5,182.5 850.5,182.5 851.5,173.5 852.5,181.5 853.5,179.5 854.5,184.5 855.5,192.5 856.5,183.5 857.5,175.5 858.5,181.5 859.5,183.5 860.5,177.5 861.5,175.5 862.5,183.5 863.5,181.5 864.5,179.5 865.5,179.5 866.5,179.5 867.5,187.5 868.5,181.5 869.5,182.5 870.5,184.5 871.5,182.5 872.5,188.5 873.5,188.5 874.5,191.5 875.5,185.5 876.5,187.5 877.5,186.5 878.5,181.5 879.5,183.5 880.5,194.5 881.5,187.5 882.5,189.5 883.5,189.5 884.5,184.5 885.5,180.5 886.5,196.5 887.5,182.5 888.5,178.5 889.5,184.5 890.5,194.5 891.5,185.5 892.5,186.5 893.5,194.5 894.5,182.5 895.5,183.5 896.5,192.5 897.5,183.5 898.5,187.5 899.5,184.5 900.5,191.5 901.5,188.5 902.5,185.5 903.5,197.5 904.5,184.5 905.5,176.5 906.5,185.5 907.5,184.5 908.5,185.5 909.5,185.5 910.5,180.5 911.5,168.5 912.5,181.5 913.5,184.5 914.5,188.5 915.5,182.5 916.5,188.5 917.5,187.5 918.5,185.5 919.5,190.5 920.5,186.5 921.5,187.5 922.5,187.5 923.5,183.5 924.5,186.5 925.5,185.5 926.5,187.5 927.5,187.5 928.5,180.5 929.5,185.5 930.5,184.5 931.5,179.5 932.5,186.5 933.5,189.5 934.5,192.5 935.5,196.5 936.5,195.5 937.5,195.5 938.5,189.5 939.5,193.5 940.5,181.5 941.5,189.5 942.5,185.5 943.5,188.5 944.5,191.5 945.5,186.5 946.5,179.5 947.5,187.5 948.5,188.5 949.5,188.5 950.5,184.5 951.5,168.5 952.5,184.5 953.5,187.5 954.5,187.5 955.5,187.5 956.5,186.5 957.5,186.5 958.5,186.5 959.5,180.5 960.5,161.5 961.5,179.5 962.5,187.5 963.5,188.5 964.5,189.5 965.5,185.5 966.5,185.5 967.5,196.5 968.5,191.5 969.5,194.5 970.5,194.5 971.5,187.5 972.5,181.5 973.5,190.5 974.5,191.5 975.5,192.5 976.5,195.5 977.5,194.5 978.5,186.5 979.5,184.5 980.5,195.5 981.5,179.5 982.5,188.5 983.5,191.5 984.5,185.5 985.5,185.5" fill="none" stroke="#ffe38f" stroke-width="1" shape-rendering="crispEdges"/>
 <line x1="0.5" y1="180" x2="0.5" y2="372" stroke="#ffe08a"/>
 <line x1="985.5" y1="180" x2="985.5" y2="372" stroke="#ffe08a"/>
 <g font-family="Liberation Sans" font-size="10" fill="#d2b9a0"><text x="23.8" y="42.2" text-anchor="end" letter-spacing="0.2">-12</text><text x="23.8" y="79.2" text-anchor="end" letter-spacing="0.2">-24</text><text x="23.8" y="116.2" text-anchor="end" letter-spacing="0.2">-36</text><text x="23.8" y="153.2" text-anchor="end" letter-spacing="0.2">-48</text><text x="23.8" y="191.2" text-anchor="end" letter-spacing="0.2">-60</text><text x="23.8" y="228.2" text-anchor="end" letter-spacing="0.2">-72</text><text x="23.8" y="265.2" text-anchor="end" letter-spacing="0.2">-84</text><text x="23.8" y="302.2" text-anchor="end" letter-spacing="0.2">-96</text><text x="23.8" y="339.2" text-anchor="end" letter-spacing="0.2">-108</text><text x="59.6" y="370.8" text-anchor="middle" letter-spacing="0.2">1762.611</text><text x="121.4" y="370.8" text-anchor="middle" letter-spacing="0.2">1762.686</text><text x="183.1" y="370.8" text-anchor="middle" letter-spacing="0.2">1762.761</text><text x="244.9" y="370.8" text-anchor="middle" letter-spacing="0.2">1762.836</text><text x="306.7" y="370.8" text-anchor="middle" letter-spacing="0.2">1762.911</text><text x="368.4" y="370.8" text-anchor="middle" letter-spacing="0.2">1762.986</text><text x="430.2" y="370.8" text-anchor="middle" letter-spacing="0.2">1763.061</text><text x="491.9" y="370.8" text-anchor="middle" letter-spacing="0.2">1763.136</text><text x="553.7" y="370.8" text-anchor="middle" letter-spacing="0.2">1763.211</text><text x="615.5" y="370.8" text-anchor="middle" letter-spacing="0.2">1763.286</text><text x="677.2" y="370.8" text-anchor="middle" letter-spacing="0.2">1763.361</text><text x="739.0" y="370.8" text-anchor="middle" letter-spacing="0.2">1763.436</text><text x="800.8" y="370.8" text-anchor="middle" letter-spacing="0.2">1763.511</text><text x="862.5" y="370.8" text-anchor="middle" letter-spacing="0.2">1763.586</text><text x="924.3" y="370.8" text-anchor="middle" letter-spacing="0.2">1763.661</text></g>
</svg>

<!-- waterfall -->
<svg class="a" style="left:0;top:466px" width="987" height="238" viewBox="0 0 987 238" shape-rendering="crispEdges">
 <rect x="0" y="0" width="986" height="238" fill="#d8e040"/>
 <g fill="none"><path stroke="#92b68f" stroke-width="5" d="M20 2.5h2m924 0h1m3 0h1m12 0h1"/><path stroke="#92b68f" stroke-width="6" d="M7 8h1m10 0h1m1 0h1m15 0h1m906 0h1m8 0h2m-951 48h1m1 0h1m207 0h1m753 0h1m4 0h1m-951 41h1m-6 48h1m919 0h1m43 0h1m-19 48h1m-922 41h1"/><path stroke="#92b68f" stroke-width="7" d="M5 14.5h1m6 0h1m620 0h1m311 0h1m4 0h1m18 0h1m13 0h1m-984 7h1m8 0h1m839 0h1m46 0h1m49 0h1m10 0h1m3 0h1m18 0h1m-976 7h1m567 0h1m130 0h1m241 0h1m-930 7h1m18 0h1m486 0h1m275 0h1m113 0h1m31 0h1m6 0h1m13 0h1m8 0h2m-930 7h1m670 0h1m43 0h1m104 0h1m78 0h1m11 0h1m7 0h1m2 0h1m-965 7h1m12 0h1m889 0h1m13 0h1m46 0h1m10 0h1m-981 13h1m17 0h1m622 0h1m255 0h1m69 0h1m1 0h1m-963 7h1m31 0h1m896 0h1m33 0h2m-965 7h1m4 0h1m14 0h1m95 0h1m291 0h1m130 0h1m382 0h1m6 0h2m20 0h1m4 0h1m19 0h1m-979 7h1m891 0h1m54 0h1m4 0h1m5 0h1m-938 7h1m116 0h1m749 0h1m14 0h1m48 0h1m5 0h1m5 0h1m6 0h1m-167 13h1m155 0h1m14 0h1m-975 7h1m11 0h1m31 0h1m40 0h1m96 0h1m290 0h1m162 0h1m115 0h1m2 0h1m126 0h1m36 0h1m13 0h1m4 0h1m4 0h1m1 0h1m14 0h1m3 0h1m6 0h1m-978 7h1m3 0h2m7 0h1m18 0h1m102 0h1m152 0h1m401 0h1m83 0h1m104 0h1m66 0h1m2 0h1m6 0h1m13 0h1m1 0h1m-127 7h1m-843 7h1m598 0h1m276 0h1m61 0h1m2 0h1m3 0h1m13 0h1m-947 7h1m952 0h1m-963 13h1m2 0h1m1 0h1m852 0h1m12 0h1m64 0h1m4 0h1m12 0h1m-956 7h1m8 0h1m2 0h2m923 0h1m2 0h1m3 0h1m2 0h1m-939 7h1m1 0h1m937 0h1m12 0h1m-966 7h1m30 0h1m913 7h1m-1 20h1m-939 7h1m3 0h1m281 0h1m638 0h1m8 0h1m-942 7h1m118 0h1m-122 7h1"/><path stroke="#92b68f" stroke-width="1" d="M5 237.5h1m957 0h1"/><path stroke="#a9c670" stroke-width="5" d="M2 2.5h1m4 0h2m3 0h1m1 0h1m7 0h1m4 0h1m18 0h2m29 0h1m9 0h1m28 0h1m9 0h1m15 0h1m1 0h1m169 0h1m92 0h1m7 0h1m1 0h1m6 0h1m28 0h1m31 0h1m13 0h1m88 0h1m18 0h1m85 0h1m80 0h1m13 0h1m37 0h1m40 0h1m15 0h1m9 0h1m11 0h1m38 0h1m7 0h1m1 0h1m13 0h1m1 0h1m5 0h1m4 0h1"/><path stroke="#a9c670" stroke-width="6" d="M0 8h1m1 0h2m1 0h1m2 0h2m5 0h1m1 0h1m3 0h3m4 0h2m9 0h1m2 0h1m29 0h1m14 0h1m18 0h1m1 0h1m28 0h1m13 0h1m16 0h1m70 0h1m76 0h1m16 0h1m36 0h1m22 0h1m81 0h1m122 0h1m23 0h1m44 0h1m48 0h1m1 0h1m16 0h1m26 0h1m29 0h1m20 0h1m21 0h1m1 0h1m12 0h1m5 0h1m3 0h1m1 0h1m10 0h1m11 0h1m1 0h1m10 0h1m1 0h1m3 0h1m8 0h1m17 0h1m1 0h1m2 0h1m1 0h1m2 0h1m8 0h1m3 0h1m2 0h1m4 0h4m1 0h1m1 0h2m2 0h1m6 0h2m-982 48h3m1 0h1m2 0h1m6 0h1m3 0h1m2 0h1m7 0h2m5 0h1m3 0h1m4 0h3m5 0h1m15 0h1m23 0h1m2 0h1m11 0h1m57 0h1m7 0h1m11 0h1m18 0h1m9 0h1m9 0h1m22 0h1m74 0h2m11 0h1m29 0h1m34 0h1m80 0h1m17 0h1m1 0h2m18 0h1m20 0h1m14 0h1m39 0h1m14 0h1m12 0h1m43 0h1m47 0h1m8 0h1m5 0h1m13 0h1m12 0h1m15 0h1m5 0h1m20 0h1m6 0h1m33 0h1m2 0h1m11 0h1m4 0h1m4 0h1m7 0h1m3 0h1m19 0h1m6 0h1m4 0h1m4 0h1m2 0h2m1 0h1m6 0h1m4 0h1m1 0h1m3 0h1m3 0h1m3 0h1m1 0h1m4 0h1m3 0h1m3 0h2m7 0h3m4 0h1m1 0h2m-985 41h1m4 0h1m3 0h2m1 0h3m10 0h1m4 0h1m2 0h1m8 0h1m4 0h1m4 0h1m41 0h1m7 0h1m50 0h1m73 0h1m21 0h1m5 0h1m91 0h1m29 0h1m17 0h1m59 0h1m24 0h1m83 0h1m44 0h1m8 0h1m2 0h1m122 0h1m4 0h1m6 0h1m34 0h1m9 0h1m4 0h1m34 0h1m17 0h2m6 0h1m15 0h1m17 0h1m3 0h1m7 0h1m3 0h1m12 0h2m4 0h2m1 0h1m1 0h1m2 0h1m1 0h1m3 0h1m1 0h1m4 0h1m4 0h1m4 0h2m1 0h1m5 0h1m3 0h2m1 0h1m-976 48h1m9 0h1m3 0h1m8 0h1m4 0h1m30 0h1m28 0h1m18 0h2m88 0h1m3 0h1m56 0h1m87 0h1m18 0h1m50 0h1m4 0h1m32 0h1m37 0h1m3 0h1m5 0h1m4 0h1m32 0h1m129 0h1m14 0h1m41 0h1m72 0h1m17 0h1m29 0h1m26 0h1m17 0h1m3 0h1m2 0h1m21 0h2m4 0h1m1 0h1m15 0h1m2 0h1m4 0h2m8 0h1m-969 48h1m5 0h1m9 0h1m4 0h1m140 0h1m123 0h1m434 0h1m36 0h1m146 0h1m30 0h1m2 0h1m2 0h1m3 0h1m6 0h1m4 0h1m4 0h1m2 0h1m5 0h2m1 0h1m3 0h1m-980 41h1m3 0h1m8 0h1m6 0h1m8 0h1m6 0h1m10 0h1m22 0h1m67 0h1m16 0h1m241 0h1m2 0h1m37 0h1m71 0h2m58 0h1m312 0h1m25 0h1m24 0h1m3 0h1m1 0h1m10 0h1m2 0h1m2 0h1m7 0h2m2 0h1m2 0h1"/><path stroke="#a9c670" stroke-width="7" d="M10 14.5h1m8 0h1m2 0h2m9 0h1m9 0h1m8 0h1m13 0h1m10 0h2m13 0h1m28 0h1m96 0h1m65 0h1m131 0h1m30 0h1m28 0h1m105 0h1m25 0h1m46 0h1m48 0h1m5 0h1m40 0h1m7 0h1m37 0h1m12 0h1m15 0h1m12 0h1m14 0h1m19 0h1m2 0h1m2 0h2m1 0h1m6 0h1m19 0h1m2 0h1m8 0h2m1 0h1m7 0h1m2 0h2m8 0h1m2 0h1m7 0h1m1 0h1m1 0h1m2 0h1m6 0h1m4 0h1m1 0h1m1 0h1m-979 7h2m2 0h1m1 0h1m1 0h1m6 0h1m3 0h3m3 0h1m1 0h1m9 0h1m6 0h1m47 0h1m20 0h2m1 0h1m35 0h1m7 0h1m42 0h1m31 0h1m28 0h1m17 0h1m31 0h1m7 0h1m14 0h1m34 0h1m34 0h3m21 0h1m33 0h2m18 0h1m10 0h1m37 0h1m1 0h1m26 0h1m22 0h1m21 0h1m29 0h2m13 0h1m10 0h2m18 0h1m3 0h1m22 0h1m27 0h1m25 0h1m7 0h1m12 0h1m2 0h1m11 0h1m32 0h2m10 0h1m5 0h1m12 0h1m2 0h2m2 0h1m2 0h2m1 0h1m2 0h1m17 0h1m17 0h1m11 0h1m4 0h1m8 0h1m3 0h2m8 0h1m6 0h1m1 0h1m1 0h3m3 0h3m2 0h1m-980 7h1m1 0h1m4 0h1m4 0h1m2 0h1m2 0h1m5 0h1m1 0h1m7 0h1m1 0h1m2 0h2m10 0h2m32 0h1m6 0h1m9 0h1m1 0h1m30 0h1m7 0h1m5 0h1m8 0h1m5 0h1m53 0h1m16 0h1m3 0h1m15 0h1m17 0h1m7 0h1m40 0h1m23 0h1m21 0h1m11 0h1m90 0h1m6 0h1m3 0h1m30 0h1m9 0h1m14 0h1m91 0h1m45 0h1m63 0h1m17 0h3m17 0h1m19 0h1m18 0h1m42 0h1m1 0h1m2 0h1m15 0h1m11 0h1m1 0h2m5 0h2m4 0h1m2 0h1m5 0h1m2 0h1m8 0h1m3 0h1m1 0h3m1 0h1m10 0h2m3 0h2m6 0h1m3 0h3m2 0h3m3 0h2m2 0h1m-985 7h2m2 0h2m4 0h1m3 0h1m1 0h1m1 0h1m1 0h1m1 0h1m4 0h1m7 0h1m6 0h1m4 0h1m4 0h2m12 0h1m1 0h1m43 0h1m12 0h1m4 0h1m11 0h1m60 0h1m4 0h1m23 0h1m20 0h2m60 0h1m50 0h1m16 0h1m10 0h1m6 0h1m5 0h1m102 0h1m20 0h1m25 0h1m40 0h1m29 0h1m23 0h1m60 0h1m8 0h1m20 0h1m8 0h1m1 0h1m19 0h1m2 0h1m17 0h1m30 0h2m2 0h1m6 0h1m12 0h1m4 0h1m11 0h1m3 0h1m8 0h1m1 0h2m2 0h1m1 0h2m3 0h1m6 0h1m4 0h1m2 0h1m3 0h1m11 0h1m12 0h1m1 0h1m3 0h1m5 0h2m5 0h1m5 0h3m2 0h1m1 0h1m1 0h2m1 0h1m3 0h2m1 0h1m1 0h1m-983 7h2m1 0h1m1 0h1m1 0h1m3 0h1m3 0h1m1 0h1m1 0h1m1 0h1m5 0h1m7 0h1m5 0h1m3 0h1m23 0h1m3 0h1m36 0h1m9 0h1m20 0h1m86 0h1m2 0h1m8 0h1m19 0h1m56 0h1m3 0h1m10 0h1m5 0h1m88 0h1m12 0h2m4 0h1m20 0h1m6 0h1m4 0h1m11 0h1m22 0h1m87 0h1m44 0h1m1 0h1m42 0h1m21 0h1m50 0h1m6 0h1m16 0h1m33 0h1m8 0h1m6 0h1m14 0h1m6 0h1m1 0h1m4 0h1m2 0h1m5 0h1m2 0h1m22 0h1m8 0h1m6 0h1m6 0h1m10 0h1m2 0h1m2 0h1m9 0h1m1 0h2m4 0h1m2 0h1m1 0h2m7 0h1m1 0h1m3 0h1m2 0h1m-980 7h2m6 0h1m2 0h1m1 0h1m1 0h1m2 0h1m2 0h1m11 0h2m12 0h2m47 0h1m21 0h1m12 0h1m5 0h1m24 0h1m2 0h2m16 0h1m15 0h1m39 0h1m25 0h1m4 0h1m2 0h1m30 0h1m7 0h1m1 0h1m2 0h2m21 0h1m35 0h1m36 0h1m53 0h1m105 0h1m6 0h1m37 0h1m3 0h1m4 0h1m7 0h1m19 0h1m29 0h1m1 0h1m96 0h1m27 0h1m21 0h1m4 0h1m1 0h1m4 0h1m16 0h1m1 0h2m10 0h1m21 0h2m6 0h2m21 0h1m3 0h1m2 0h1m2 0h1m5 0h1m4 0h1m3 0h1m3 0h1m5 0h1m2 0h3m1 0h1m4 0h1m-983 13h1m1 0h1m1 0h1m1 0h1m4 0h1m1 0h1m1 0h1m2 0h5m2 0h1m3 0h1m2 0h1m3 0h1m1 0h2m6 0h1m4 0h1m1 0h1m12 0h1m12 0h1m24 0h1m6 0h1m10 0h1m65 0h2m14 0h1m53 0h1m2 0h1m62 0h1m45 0h1m37 0h1m70 0h2m46 0h1m52 0h1m39 0h1m30 0h1m63 0h1m1 0h1m42 0h2m56 0h1m16 0h1m3 0h1m10 0h1m15 0h1m1 0h1m2 0h1m8 0h1m11 0h2m15 0h1m10 0h1m8 0h1m5 0h3m3 0h1m1 0h2m6 0h1m4 0h2m3 0h2m7 0h1m4 0h1m4 0h1m-977 7h2m1 0h1m5 0h1m2 0h3m1 0h2m10 0h1m6 0h1m1 0h1m25 0h1m25 0h1m3 0h1m43 0h2m45 0h1m11 0h1m8 0h1m7 0h1m105 0h1m8 0h1m10 0h1m16 0h1m3 0h1m7 0h1m28 0h1m4 0h1m7 0h1m4 0h1m13 0h1m8 0h1m14 0h1m69 0h1m7 0h1m21 0h1m21 0h1m66 0h1m7 0h1m8 0h1m12 0h1m78 0h1m3 0h1m9 0h1m4 0h1m7 0h1m4 0h1m59 0h2m7 0h1m3 0h1m2 0h1m2 0h1m2 0h1m1 0h2m9 0h1m7 0h1m5 0h2m19 0h1m5 0h1m2 0h1m10 0h1m8 0h1m4 0h1m4 0h1m1 0h1m1 0h3m2 0h2m1 0h1m3 0h1m1 0h1m-975 7h2m1 0h1m3 0h1m6 0h1m1 0h3m1 0h1m1 0h1m4 0h2m1 0h1m4 0h1m5 0h1m4 0h1m8 0h1m21 0h1m15 0h1m9 0h1m9 0h1m28 0h1m7 0h1m14 0h1m22 0h1m93 0h1m43 0h1m42 0h1m5 0h1m21 0h1m2 0h1m38 0h1m34 0h1m12 0h1m11 0h1m8 0h1m73 0h1m14 0h1m5 0h1m10 0h1m31 0h1m3 0h1m3 0h1m35 0h1m12 0h1m15 0h1m2 0h1m4 0h1m30 0h2m31 0h1m22 0h1m17 0h1m13 0h1m23 0h2m8 0h1m2 0h1m1 0h1m10 0h2m4 0h3m22 0h1m5 0h2m3 0h1m3 0h3m4 0h1m1 0h1m1 0h1m1 0h2m9 0h1m1 0h1m1 0h1m1 0h1m1 0h1m3 0h1m2 0h1m-980 7h1m4 0h1m1 0h1m5 0h3m10 0h1m42 0h1m19 0h1m18 0h1m42 0h1m61 0h1m45 0h1m16 0h1m1 0h1m28 0h1m33 0h1m5 0h1m64 0h1m93 0h1m7 0h1m37 0h1m11 0h1m27 0h1m8 0h1m13 0h1m45 0h1m20 0h1m18 0h1m8 0h1m38 0h1m6 0h2m1 0h1m11 0h1m1 0h1m13 0h1m15 0h1m38 0h1m18 0h1m1 0h1m24 0h1m20 0h1m7 0h1m1 0h1m3 0h1m4 0h1m2 0h2m2 0h1m6 0h1m4 0h1m5 0h1m1 0h1m5 0h1m5 0h2m1 0h1m5 0h3m1 0h1m-984 7h2m1 0h1m2 0h3m1 0h1m1 0h1m2 0h3m1 0h1m1 0h1m7 0h1m6 0h1m2 0h1m26 0h1m4 0h1m20 0h1m3 0h1m14 0h2m10 0h1m79 0h1m115 0h1m4 0h1m29 0h1m19 0h1m8 0h1m20 0h1m2 0h1m1 0h1m9 0h1m1 0h1m52 0h1m6 0h1m4 0h1m11 0h1m21 0h1m69 0h1m7 0h1m9 0h1m32 0h1m65 0h1m28 0h1m12 0h1m11 0h1m32 0h1m11 0h1m20 0h1m22 0h1m1 0h1m14 0h1m8 0h1m3 0h1m2 0h1m1 0h1m3 0h1m10 0h1m1 0h1m2 0h1m7 0h1m10 0h2m2 0h2m4 0h1m1 0h1m2 0h1m3 0h1m1 0h2m7 0h1m7 0h1m3 0h1m3 0h2m12 0h1m-985 13h1m3 0h1m1 0h2m1 0h2m4 0h1m2 0h1m29 0h1m3 0h1m25 0h1m7 0h1m79 0h1m34 0h1m3 0h1m2 0h1m13 0h1m48 0h1m7 0h1m42 0h1m1 0h1m73 0h1m3 0h1m12 0h1m93 0h1m5 0h1m26 0h2m8 0h1m2 0h1m1 0h2m24 0h1m11 0h1m2 0h1m48 0h1m62 0h1m16 0h1m34 0h1m1 0h1m6 0h1m2 0h1m10 0h1m4 0h1m18 0h1m7 0h1m8 0h1m22 0h1m24 0h1m3 0h1m4 0h1m10 0h1m3 0h1m5 0h1m3 0h1m11 0h2m2 0h1m4 0h1m1 0h1m4 0h2m1 0h2m3 0h1m1 0h1m1 0h1m8 0h1m5 0h1m1 0h1m1 0h1m1 0h4m3 0h1m6 0h1m-983 7h1m1 0h1m1 0h2m1 0h1m2 0h2m2 0h1m1 0h2m3 0h1m7 0h2m1 0h1m9 0h2m2 0h1m17 0h1m10 0h1m9 0h2m7 0h1m13 0h1m6 0h1m19 0h1m5 0h1m3 0h1m12 0h2m11 0h1m11 0h1m16 0h1m14 0h1m5 0h1m8 0h2m22 0h1m3 0h1m5 0h1m1 0h1m7 0h1m34 0h1m4 0h1m5 0h1m65 0h1m16 0h1m2 0h1m3 0h1m9 0h1m2 0h1m3 0h1m12 0h2m5 0h1m1 0h1m6 0h1m4 0h1m7 0h1m1 0h1m27 0h1m13 0h2m24 0h1m41 0h1m8 0h1m3 0h2m16 0h1m4 0h1m4 0h1m17 0h1m5 0h1m16 0h1m1 0h1m5 0h1m2 0h1m11 0h2m4 0h1m10 0h1m2 0h1m5 0h1m4 0h1m41 0h2m4 0h1m4 0h1m8 0h1m16 0h1m3 0h1m17 0h1m5 0h1m1 0h1m7 0h3m1 0h2m3 0h1m4 0h1m6 0h1m1 0h3m8 0h3m5 0h1m3 0h2m2 0h1m1 0h1m5 0h1m6 0h1m2 0h1m1 0h1m4 0h1m2 0h1m2 0h1m1 0h1m3 0h1m1 0h1m3 0h1m6 0h1m3 0h1m3 0h2m1 0h1m1 0h1m5 0h1m1 0h2m1 0h1m1 0h2m6 0h2m1 0h2m1 0h1m4 0h2m2 0h1m-981 7h1m2 0h1m2 0h1m1 0h1m3 0h2m1 0h1m1 0h3m3 0h1m2 0h1m5 0h1m1 0h1m1 0h1m1 0h1m3 0h1m1 0h1m18 0h1m3 0h1m4 0h1m34 0h1m4 0h1m26 0h2m14 0h1m58 0h1m14 0h1m6 0h1m3 0h1m14 0h1m11 0h1m56 0h1m53 0h1m3 0h1m15 0h1m12 0h1m5 0h1m30 0h1m60 0h1m24 0h1m1 0h1m11 0h1m5 0h1m49 0h1m10 0h1m12 0h1m17 0h1m35 0h1m6 0h1m12 0h1m3 0h1m22 0h1m23 0h1m4 0h1m9 0h1m14 0h2m18 0h1m32 0h1m18 0h1m7 0h1m8 0h1m6 0h1m3 0h1m8 0h1m11 0h2m3 0h1m2 0h1m2 0h1m10 0h1m5 0h3m3 0h1m1 0h1m6 0h1m2 0h1m3 0h1m2 0h2m2 0h1m2 0h1m1 0h1m1 0h1m5 0h3m2 0h2m-983 7h1m2 0h1m6 0h1m3 0h1m2 0h1m2 0h3m1 0h1m9 0h1m15 0h1m20 0h1m22 0h1m10 0h1m4 0h1m7 0h1m22 0h1m57 0h1m77 0h1m97 0h1m5 0h1m29 0h1m33 0h1m51 0h1m32 0h1m1 0h1m80 0h1m88 0h1m29 0h1m8 0h1m3 0h1m18 0h3m11 0h1m22 0h1m61 0h1m1 0h1m1 0h1m1 0h1m8 0h1m13 0h1m2 0h1m10 0h1m3 0h1m3 0h1m7 0h1m5 0h1m5 0h3m1 0h1m1 0h2m6 0h1m1 0h1m1 0h1m2 0h2m5 0h1m4 0h2m2 0h1m5 0h1m1 0h1m-982 7h1m1 0h1m5 0h1m2 0h2m1 0h1m1 0h2m1 0h1m7 0h1m4 0h2m2 0h1m3 0h1m1 0h1m21 0h1m2 0h1m43 0h1m48 0h1m5 0h1m10 0h1m11 0h1m15 0h1m18 0h1m41 0h1m13 0h1m66 0h1m22 0h1m9 0h1m1 0h1m2 0h1m8 0h1m12 0h1m91 0h2m22 0h1m49 0h1m21 0h1m97 0h1m10 0h1m12 0h2m7 0h2m34 0h1m27 0h1m18 0h1m63 0h1m6 0h1m3 0h1m16 0h1m3 0h1m4 0h1m3 0h2m1 0h1m1 0h1m1 0h1m12 0h2m4 0h1m4 0h1m8 0h1m1 0h3m2 0h1m4 0h2m1 0h1m1 0h1m4 0h1m3 0h2m-981 7h1m5 0h3m4 0h1m4 0h1m1 0h1m1 0h1m2 0h2m2 0h1m6 0h1m8 0h2m9 0h1m4 0h1m11 0h1m62 0h1m18 0h1m48 0h1m10 0h1m213 0h1m94 0h1m2 0h1m11 0h1m36 0h1m16 0h1m28 0h1m80 0h1m69 0h1m34 0h1m23 0h1m29 0h1m3 0h1m2 0h1m11 0h1m12 0h1m1 0h1m5 0h1m1 0h1m17 0h1m12 0h2m4 0h1m1 0h2m6 0h1m9 0h2m3 0h1m1 0h2m2 0h1m2 0h1m3 0h2m3 0h1m-985 13h1m2 0h2m1 0h2m6 0h1m1 0h2m3 0h1m3 0h1m3 0h1m17 0h1m4 0h1m8 0h2m1 0h1m2 0h1m5 0h1m46 0h1m3 0h1m1 0h1m9 0h1m63 0h1m3 0h1m16 0h1m1 0h1m11 0h1m4 0h1m2 0h1m15 0h1m14 0h1m79 0h1m29 0h1m76 0h1m45 0h1m19 0h1m23 0h1m79 0h1m57 0h1m75 0h1m10 0h1m8 0h1m12 0h1m21 0h1m5 0h1m46 0h1m9 0h1m13 0h1m3 0h1m4 0h1m13 0h1m7 0h1m1 0h1m1 0h1m3 0h2m4 0h2m1 0h1m8 0h1m3 0h1m6 0h2m1 0h1m1 0h1m1 0h2m3 0h1m4 0h3m-985 7h3m1 0h1m1 0h1m2 0h1m1 0h1m2 0h2m2 0h1m2 0h1m3 0h1m3 0h1m11 0h1m4 0h1m20 0h1m25 0h1m26 0h1m38 0h1m37 0h1m7 0h1m32 0h1m2 0h1m10 0h1m75 0h1m13 0h1m98 0h1m41 0h1m55 0h1m77 0h1m13 0h1m55 0h1m4 0h1m22 0h1m6 0h1m11 0h1m18 0h1m16 0h1m20 0h1m26 0h1m16 0h1m7 0h1m12 0h1m13 0h1m8 0h1m13 0h1m9 0h2m7 0h1m1 0h1m14 0h1m9 0h1m1 0h1m4 0h1m5 0h1m2 0h4m2 0h1m6 0h2m5 0h1m1 0h1m1 0h1m-981 7h1m9 0h1m1 0h1m1 0h2m15 0h1m1 0h1m8 0h1m4 0h1m4 0h1m23 0h1m29 0h1m4 0h1m4 0h1m27 0h1m60 0h1m31 0h1m87 0h1m40 0h1m6 0h1m16 0h1m26 0h1m102 0h1m15 0h1m81 0h1m77 0h1m65 0h1m13 0h1m5 0h1m8 0h1m17 0h1m37 0h1m23 0h1m10 0h2m13 0h2m6 0h2m1 0h1m4 0h1m17 0h2m2 0h1m4 0h1m4 0h2m3 0h1m10 0h1m1 0h1m8 0h2m2 0h1m2 0h3m2 0h1m-985 7h1m7 0h1m9 0h1m7 0h1m79 0h1m14 0h1m5 0h1m88 0h1m190 0h1m45 0h1m164 0h1m242 0h1m10 0h1m5 0h1m2 0h1m27 0h1m20 0h2m6 0h3m11 0h1m4 0h1m9 0h1m8 0h1m-972 7h1m3 0h1m4 0h1m3 0h1m58 0h1m28 0h1m59 0h1m38 0h1m274 0h1m151 0h1m313 0h1m5 0h1m1 0h1m12 0h1m13 0h1m1 0h2m-985 7h1m6 0h1m3 0h2m3 0h1m19 0h1m2 0h1m7 0h1m58 0h1m13 0h1m35 0h1m85 0h1m112 0h1m511 0h1m21 0h1m29 0h1m17 0h1m7 0h1m10 0h1m1 0h1m7 0h1m2 0h1m2 0h1m8 0h1m-980 13h1m7 0h1m17 0h1m1 0h1m427 0h1m174 0h1m59 0h1m195 0h1m16 0h1m2 0h1m35 0h1m20 0h1m2 0h2m-968 7h1m1 0h1m8 0h1m2 0h1m2 0h1m2 0h1m7 0h1m4 0h1m9 0h1m151 0h1m128 0h1m22 0h1m23 0h1m10 0h1m29 0h1m24 0h1m117 0h1m20 0h1m58 0h1m36 0h1m55 0h1m29 0h1m37 0h1m70 0h1m3 0h1m5 0h1m9 0h1m14 0h1m12 0h1m4 0h1m18 0h1m7 0h1m5 0h1m8 0h2m5 0h1m2 0h1m3 0h3m2 0h1m-983 7h1m14 0h1m29 0h1m73 0h1m255 0h1m289 0h1m106 0h1m72 0h1m32 0h1m41 0h1m23 0h1m5 0h1m4 0h1m5 0h1m2 0h1m2 0h1m3 0h1m2 0h1m2 0h1m-980 7h1m11 0h1m3 0h1m5 0h1m670 0h1m242 0h1m1 0h1m13 0h1m13 0h2m15 0h1m-982 7h1m13 0h1m2 0h1m1 0h1m18 0h1m327 0h1m577 0h1m3 0h1m15 0h1"/><path stroke="#a9c670" stroke-width="1" d="M8 237.5h1m3 0h1m100 0h1m123 0h1m179 0h1m255 0h1m49 0h1m125 0h1m81 0h1m5 0h2m1 0h1m21 0h1m8 0h1"/><path stroke="#bdd357" stroke-width="5" d="M1 2.5h1m2 0h3m3 0h1m2 0h1m1 0h1m1 0h2m7 0h1m3 0h2m7 0h3m1 0h2m7 0h2m2 0h1m1 0h1m4 0h2m7 0h1m1 0h1m7 0h1m2 0h2m8 0h1m4 0h1m6 0h1m7 0h1m1 0h1m9 0h1m2 0h1m6 0h1m5 0h1m1 0h1m4 0h1m30 0h1m7 0h1m11 0h1m26 0h1m3 0h1m1 0h1m1 0h1m6 0h2m13 0h1m11 0h1m8 0h1m23 0h1m3 0h1m2 0h1m18 0h1m17 0h1m29 0h1m4 0h1m15 0h1m2 0h2m10 0h1m7 0h1m3 0h1m3 0h1m3 0h1m8 0h1m15 0h1m14 0h1m6 0h1m19 0h1m1 0h1m24 0h1m1 0h1m1 0h2m7 0h1m2 0h1m5 0h1m5 0h1m2 0h1m2 0h1m5 0h1m1 0h1m9 0h1m4 0h2m3 0h1m7 0h1m2 0h1m2 0h1m5 0h1m8 0h1m2 0h1m36 0h1m13 0h1m4 0h2m3 0h1m3 0h1m3 0h2m10 0h2m23 0h1m2 0h1m5 0h1m27 0h1m1 0h1m4 0h2m3 0h2m3 0h2m4 0h1m1 0h2m15 0h1m2 0h1m2 0h2m1 0h1m11 0h1m6 0h1m5 0h1m3 0h1m7 0h1m5 0h2m2 0h2m4 0h3m1 0h1m1 0h1m2 0h1m2 0h1m3 0h2m3 0h1m1 0h1m3 0h1m1 0h2m1 0h1m6 0h2m1 0h1m2 0h1m1 0h1m3 0h1m1 0h4m5 0h1m1 0h1m6 0h3m3 0h1m1 0h1m1 0h1m5 0h5m1 0h1m2 0h2m3 0h1m2 0h1m1 0h2m3 0h2m1 0h2m1 0h1"/><path stroke="#bdd357" stroke-width="6" d="M4 8h1m1 0h1m3 0h3m3 0h1m2 0h1m4 0h4m3 0h2m5 0h1m1 0h2m1 0h1m1 0h4m3 0h1m1 0h1m3 0h2m3 0h2m1 0h2m5 0h1m1 0h3m6 0h2m5 0h1m19 0h6m4 0h1m1 0h1m3 0h1m2 0h1m4 0h1m4 0h1m4 0h1m10 0h1m1 0h1m1 0h1m1 0h1m3 0h2m3 0h3m3 0h1m3 0h2m5 0h3m8 0h1m1 0h1m14 0h1m1 0h1m3 0h2m8 0h1m8 0h1m2 0h1m6 0h2m9 0h1m13 0h1m1 0h2m2 0h2m1 0h1m4 0h1m21 0h1m2 0h1m2 0h1m4 0h1m8 0h1m14 0h1m2 0h1m20 0h2m1 0h4m6 0h1m1 0h1m8 0h2m11 0h2m9 0h2m4 0h1m1 0h1m1 0h1m5 0h1m1 0h1m2 0h2m2 0h1m8 0h1m8 0h1m6 0h1m3 0h1m8 0h1m1 0h2m13 0h2m11 0h1m2 0h1m4 0h1m2 0h1m5 0h1m1 0h2m1 0h1m3 0h1m8 0h1m4 0h1m2 0h1m3 0h1m4 0h2m8 0h1m28 0h1m7 0h2m1 0h1m1 0h1m4 0h1m9 0h2m10 0h1m8 0h1m2 0h2m3 0h1m3 0h2m7 0h1m4 0h1m7 0h1m6 0h1m1 0h1m7 0h2m1 0h2m5 0h1m8 0h1m2 0h1m5 0h1m17 0h1m1 0h2m1 0h3m2 0h1m1 0h1m3 0h1m5 0h2m1 0h1m2 0h1m3 0h1m1 0h1m22 0h1m1 0h1m15 0h1m1 0h1m1 0h1m4 0h1m2 0h1m1 0h1m5 0h1m2 0h1m3 0h1m3 0h1m5 0h1m4 0h2m2 0h3m1 0h1m4 0h1m1 0h1m1 0h2m1 0h1m2 0h1m3 0h1m1 0h2m2 0h1m5 0h1m1 0h1m1 0h2m1 0h1m3 0h3m2 0h1m2 0h2m2 0h1m1 0h1m4 0h1m3 0h1m4 0h4m7 0h2m1 0h2m1 0h1m9 0h2m2 0h1m3 0h1m2 0h2m-978 48h1m1 0h2m2 0h2m1 0h3m2 0h1m1 0h4m6 0h2m1 0h1m2 0h1m3 0h1m5 0h1m3 0h1m1 0h1m2 0h1m1 0h1m2 0h1m4 0h2m4 0h2m27 0h1m1 0h1m8 0h1m1 0h2m1 0h4m2 0h1m17 0h1m19 0h1m1 0h1m2 0h1m4 0h1m5 0h1m3 0h1m16 0h1m6 0h1m7 0h1m5 0h1m17 0h2m7 0h1m6 0h1m11 0h1m3 0h1m5 0h1m2 0h1m4 0h1m22 0h1m2 0h1m2 0h1m5 0h1m5 0h1m4 0h1m9 0h1m6 0h1m6 0h1m7 0h1m2 0h1m12 0h1m7 0h1m11 0h2m2 0h1m4 0h1m17 0h1m3 0h1m9 0h1m1 0h1m1 0h1m6 0h1m2 0h2m3 0h1m21 0h2m16 0h2m8 0h2m5 0h1m9 0h1m1 0h1m5 0h2m25 0h2m1 0h1m3 0h1m2 0h1m13 0h1m5 0h1m3 0h1m8 0h1m16 0h1m10 0h1m9 0h1m2 0h1m2 0h1m15 0h2m14 0h1m1 0h1m6 0h1m4 0h2m8 0h3m1 0h1m2 0h2m2 0h1m8 0h1m13 0h1m5 0h2m12 0h2m3 0h1m4 0h1m3 0h1m2 0h1m4 0h1m10 0h3m6 0h1m9 0h1m3 0h1m9 0h1m2 0h2m2 0h2m1 0h2m2 0h1m1 0h1m5 0h1m10 0h3m1 0h1m1 0h1m4 0h1m2 0h2m3 0h2m3 0h1m1 0h2m3 0h1m9 0h2m1 0h1m3 0h1m1 0h1m3 0h2m14 0h1m1 0h1m1 0h1m1 0h1m2 0h1m1 0h1m3 0h1m1 0h3m3 0h1m1 0h1m1 0h4m1 0h1m3 0h3m5 0h2m1 0h1m3 0h1m1 0h2m4 0h1m-985 41h2m1 0h1m2 0h2m6 0h6m3 0h1m2 0h1m4 0h1m6 0h2m5 0h1m4 0h1m1 0h1m8 0h2m3 0h1m4 0h1m2 0h1m4 0h1m12 0h1m7 0h1m4 0h1m6 0h1m2 0h1m1 0h1m2 0h1m1 0h1m3 0h1m6 0h1m8 0h1m3 0h1m6 0h2m4 0h1m5 0h1m5 0h1m4 0h1m4 0h1m6 0h1m2 0h1m5 0h1m1 0h1m8 0h1m3 0h1m2 0h1m1 0h1m4 0h1m4 0h1m9 0h1m14 0h1m5 0h1m8 0h1m1 0h1m4 0h1m2 0h1m2 0h1m2 0h1m4 0h2m19 0h1m8 0h1m4 0h1m2 0h1m3 0h1m25 0h1m2 0h1m5 0h1m1 0h1m9 0h1m1 0h1m1 0h1m6 0h1m12 0h1m16 0h1m1 0h1m10 0h1m8 0h1m6 0h2m4 0h1m14 0h1m2 0h1m11 0h1m1 0h1m6 0h1m5 0h1m2 0h2m15 0h1m8 0h1m9 0h3m5 0h1m10 0h1m16 0h1m2 0h1m1 0h1m10 0h1m2 0h1m4 0h2m2 0h1m25 0h1m2 0h1m18 0h1m16 0h1m5 0h1m1 0h1m1 0h2m1 0h1m5 0h1m3 0h1m3 0h1m2 0h1m5 0h1m11 0h1m18 0h1m24 0h4m1 0h1m3 0h4m1 0h1m3 0h1m12 0h1m6 0h1m1 0h1m10 0h1m8 0h1m6 0h1m8 0h2m1 0h3m4 0h1m2 0h2m2 0h1m9 0h1m1 0h1m6 0h3m2 0h1m1 0h1m1 0h2m2 0h1m5 0h2m14 0h1m3 0h1m3 0h2m3 0h1m3 0h1m2 0h1m1 0h2m3 0h1m1 0h1m2 0h1m1 0h1m1 0h1m2 0h1m1 0h1m1 0h1m6 0h1m1 0h2m5 0h2m2 0h1m1 0h1m1 0h1m1 0h1m2 0h2m4 0h1m-984 48h5m1 0h1m1 0h1m2 0h1m8 0h1m5 0h1m1 0h2m4 0h1m1 0h2m1 0h2m4 0h2m4 0h2m11 0h1m5 0h1m9 0h1m5 0h1m3 0h1m6 0h1m2 0h1m3 0h2m4 0h3m6 0h1m2 0h1m1 0h1m7 0h1m4 0h1m17 0h1m29 0h1m15 0h1m1 0h1m5 0h1m1 0h1m10 0h1m33 0h1m1 0h1m8 0h2m2 0h1m6 0h1m1 0h1m1 0h1m26 0h1m13 0h1m18 0h1m6 0h1m15 0h1m13 0h1m18 0h1m1 0h2m4 0h1m3 0h1m3 0h1m4 0h1m1 0h1m8 0h1m6 0h1m9 0h1m32 0h1m3 0h1m13 0h1m2 0h1m6 0h1m3 0h1m15 0h1m16 0h1m3 0h1m1 0h1m11 0h1m4 0h1m39 0h1m18 0h1m1 0h3m7 0h1m15 0h1m9 0h1m31 0h1m11 0h2m1 0h1m9 0h1m3 0h1m2 0h1m12 0h1m7 0h2m6 0h1m2 0h1m2 0h1m7 0h1m4 0h1m12 0h2m8 0h1m1 0h1m2 0h1m14 0h1m2 0h2m1 0h1m7 0h2m7 0h1m14 0h2m11 0h2m4 0h1m2 0h2m14 0h1m2 0h1m3 0h1m7 0h1m5 0h2m4 0h3m2 0h1m3 0h1m1 0h1m4 0h1m1 0h5m1 0h1m1 0h1m1 0h2m1 0h2m7 0h2m1 0h2m4 0h1m2 0h5m-979 48h1m2 0h1m3 0h1m7 0h1m3 0h1m1 0h1m2 0h1m2 0h1m1 0h1m4 0h1m2 0h1m25 0h1m10 0h1m34 0h1m1 0h1m22 0h1m10 0h1m12 0h1m14 0h1m5 0h1m9 0h1m9 0h1m3 0h1m3 0h1m29 0h2m19 0h1m9 0h1m21 0h1m16 0h1m56 0h1m74 0h1m20 0h1m18 0h1m38 0h1m31 0h1m41 0h1m13 0h1m23 0h1m5 0h1m14 0h1m32 0h1m18 0h1m7 0h1m31 0h1m53 0h1m16 0h1m2 0h1m7 0h1m12 0h1m6 0h1m1 0h1m19 0h1m14 0h1m3 0h1m9 0h1m9 0h1m3 0h1m2 0h1m5 0h1m1 0h2m7 0h1m1 0h2m1 0h1m1 0h1m1 0h2m1 0h1m3 0h1m6 0h1m2 0h2m15 0h1m2 0h1m1 0h2m-982 41h1m1 0h1m2 0h1m1 0h1m4 0h2m4 0h1m2 0h2m4 0h1m2 0h1m13 0h1m3 0h1m7 0h1m5 0h2m30 0h1m2 0h1m4 0h1m1 0h1m1 0h1m4 0h1m13 0h2m3 0h1m25 0h1m5 0h1m4 0h1m21 0h1m20 0h1m8 0h1m13 0h1m36 0h1m3 0h1m1 0h1m7 0h1m4 0h1m8 0h1m1 0h1m17 0h1m3 0h2m5 0h1m19 0h1m7 0h1m24 0h2m2 0h1m15 0h1m21 0h1m15 0h1m21 0h1m3 0h1m25 0h1m4 0h1m1 0h1m10 0h1m29 0h1m1 0h1m8 0h1m2 0h2m2 0h1m14 0h1m6 0h1m9 0h1m3 0h1m9 0h1m16 0h1m6 0h1m2 0h1m1 0h1m10 0h1m4 0h1m23 0h1m4 0h1m18 0h1m6 0h1m1 0h1m11 0h1m21 0h1m6 0h1m8 0h1m1 0h2m2 0h1m13 0h1m12 0h1m11 0h1m11 0h1m11 0h1m5 0h1m2 0h1m6 0h1m3 0h1m8 0h1m1 0h1m9 0h2m5 0h2m1 0h1m1 0h1m1 0h1m1 0h3m5 0h2m9 0h1m1 0h3m3 0h1m6 0h1m4 0h1m3 0h1m4 0h1m5 0h1m3 0h1m2 0h1m1 0h2m2 0h2m1 0h2m3 0h1m1 0h1m2 0h2m2 0h2m11 0h1m3 0h1"/><path stroke="#bdd357" stroke-width="7" d="M1 14.5h3m2 0h1m1 0h2m6 0h3m2 0h1m6 0h1m1 0h3m3 0h3m1 0h1m1 0h1m22 0h1m2 0h1m4 0h2m1 0h1m17 0h3m9 0h2m5 0h1m9 0h2m20 0h1m20 0h1m36 0h1m1 0h1m4 0h3m7 0h1m2 0h1m15 0h1m4 0h1m8 0h2m4 0h1m2 0h1m12 0h1m3 0h1m25 0h1m1 0h1m2 0h1m11 0h1m5 0h1m4 0h1m8 0h1m7 0h1m1 0h1m13 0h2m6 0h1m1 0h2m1 0h1m3 0h1m1 0h1m15 0h2m3 0h1m2 0h1m5 0h1m3 0h3m6 0h2m9 0h1m2 0h1m15 0h1m7 0h1m12 0h2m1 0h1m14 0h2m1 0h1m8 0h2m4 0h1m7 0h1m2 0h1m2 0h1m20 0h1m2 0h3m2 0h2m4 0h1m11 0h1m3 0h1m3 0h1m1 0h1m4 0h1m6 0h1m2 0h1m1 0h1m13 0h1m1 0h1m8 0h1m1 0h1m5 0h1m10 0h1m3 0h1m28 0h1m12 0h2m7 0h1m10 0h1m3 0h1m10 0h1m3 0h1m14 0h1m6 0h1m1 0h1m10 0h1m5 0h2m5 0h1m2 0h2m3 0h1m2 0h1m13 0h1m3 0h1m3 0h1m6 0h1m6 0h1m5 0h1m11 0h1m1 0h1m1 0h1m9 0h1m2 0h1m2 0h1m5 0h1m1 0h1m8 0h1m11 0h1m2 0h1m3 0h1m2 0h3m1 0h1m3 0h1m2 0h1m10 0h1m2 0h1m1 0h1m6 0h2m1 0h1m1 0h1m4 0h1m5 0h2m2 0h1m4 0h1m1 0h2m3 0h1m2 0h3m1 0h1m3 0h1m2 0h2m-985 7h1m2 0h2m1 0h1m3 0h2m2 0h2m1 0h2m6 0h1m1 0h1m3 0h2m1 0h1m4 0h1m1 0h1m4 0h1m1 0h1m3 0h1m3 0h1m4 0h2m1 0h1m4 0h1m1 0h2m2 0h1m3 0h2m3 0h1m1 0h1m13 0h1m7 0h1m1 0h3m10 0h2m3 0h3m1 0h4m6 0h2m11 0h1m9 0h1m6 0h2m5 0h2m6 0h1m23 0h1m2 0h1m7 0h1m1 0h1m14 0h2m2 0h1m1 0h1m6 0h2m20 0h1m6 0h1m2 0h1m3 0h1m11 0h1m3 0h1m5 0h2m6 0h1m1 0h1m3 0h1m1 0h1m4 0h1m2 0h2m1 0h1m5 0h1m9 0h1m3 0h1m5 0h1m3 0h1m11 0h2m1 0h1m3 0h1m3 0h1m2 0h1m6 0h2m4 0h1m12 0h1m3 0h1m3 0h1m3 0h1m8 0h2m4 0h2m2 0h3m1 0h1m10 0h1m6 0h1m1 0h2m3 0h1m1 0h1m5 0h1m4 0h1m10 0h1m2 0h1m10 0h1m9 0h1m11 0h2m5 0h1m4 0h1m6 0h1m3 0h1m3 0h1m6 0h1m7 0h2m1 0h2m2 0h1m1 0h1m2 0h1m3 0h1m9 0h1m3 0h1m20 0h1m1 0h2m5 0h3m5 0h1m2 0h2m8 0h2m4 0h1m8 0h1m8 0h2m4 0h1m13 0h1m3 0h1m5 0h1m3 0h2m13 0h1m3 0h1m2 0h1m3 0h1m1 0h1m1 0h2m3 0h1m3 0h1m4 0h1m6 0h1m3 0h2m4 0h1m6 0h1m8 0h1m2 0h2m3 0h3m7 0h1m1 0h2m4 0h1m1 0h1m2 0h1m3 0h1m11 0h1m9 0h3m1 0h1m2 0h2m1 0h2m1 0h1m12 0h1m2 0h1m2 0h1m3 0h1m1 0h3m1 0h2m6 0h1m2 0h2m1 0h1m1 0h2m3 0h1m1 0h2m1 0h1m2 0h3m1 0h1m1 0h1m4 0h2m1 0h5m3 0h1m4 0h4m1 0h1m3 0h4m1 0h1m1 0h1m3 0h1m1 0h1m3 0h1m2 0h2m1 0h1m-986 7h2m5 0h2m1 0h1m1 0h2m1 0h1m2 0h2m1 0h2m4 0h1m1 0h5m3 0h1m1 0h1m6 0h2m10 0h2m14 0h1m6 0h2m10 0h1m13 0h2m4 0h1m1 0h1m2 0h1m2 0h1m8 0h1m2 0h1m13 0h1m1 0h2m4 0h3m4 0h1m8 0h1m9 0h1m4 0h1m2 0h1m8 0h1m4 0h2m5 0h1m1 0h2m8 0h1m2 0h1m5 0h3m5 0h1m4 0h1m10 0h1m3 0h1m2 0h1m6 0h1m2 0h2m5 0h1m4 0h1m22 0h1m1 0h2m4 0h1m4 0h3m6 0h1m2 0h1m1 0h1m5 0h1m5 0h1m17 0h2m8 0h1m4 0h1m3 0h1m5 0h1m1 0h1m4 0h2m3 0h1m4 0h2m1 0h1m7 0h1m2 0h1m1 0h1m1 0h1m1 0h4m1 0h1m10 0h1m5 0h1m3 0h1m7 0h1m17 0h1m8 0h1m9 0h1m4 0h2m2 0h1m2 0h3m5 0h1m9 0h2m2 0h1m2 0h1m2 0h1m8 0h3m6 0h1m1 0h2m6 0h1m3 0h1m15 0h3m6 0h1m1 0h2m2 0h1m2 0h2m8 0h1m1 0h1m10 0h1m4 0h1m3 0h1m24 0h1m2 0h1m6 0h1m1 0h1m10 0h1m2 0h1m8 0h1m6 0h1m4 0h1m3 0h1m5 0h1m3 0h1m1 0h1m7 0h3m2 0h1m3 0h2m12 0h1m10 0h2m20 0h1m2 0h2m7 0h1m1 0h1m4 0h1m2 0h1m2 0h1m9 0h1m1 0h1m1 0h1m7 0h1m1 0h1m2 0h4m4 0h1m2 0h1m5 0h1m1 0h3m2 0h1m1 0h1m3 0h1m4 0h2m2 0h1m2 0h1m3 0h2m3 0h1m2 0h1m5 0h1m6 0h1m7 0h1m6 0h1m1 0h1m1 0h1m2 0h3m3 0h1m1 0h1m3 0h1m1 0h4m1 0h2m1 0h1m3 0h3m2 0h1m1 0h2m1 0h1m1 0h3m4 0h1m4 0h1m3 0h2m-982 7h2m3 0h3m1 0h3m5 0h1m3 0h1m1 0h1m2 0h1m3 0h2m3 0h4m3 0h2m2 0h1m2 0h1m3 0h1m4 0h1m1 0h2m1 0h1m8 0h2m10 0h1m9 0h1m5 0h1m2 0h2m1 0h2m3 0h1m2 0h1m3 0h2m1 0h1m3 0h1m4 0h1m10 0h1m6 0h1m4 0h2m1 0h1m3 0h2m2 0h1m5 0h1m1 0h1m5 0h2m7 0h1m11 0h1m8 0h2m2 0h2m2 0h1m5 0h2m8 0h2m13 0h1m12 0h1m15 0h2m13 0h1m14 0h2m2 0h2m4 0h1m5 0h2m1 0h1m1 0h1m5 0h1m21 0h1m4 0h1m2 0h1m2 0h1m4 0h2m7 0h1m2 0h1m1 0h2m9 0h2m2 0h3m4 0h1m4 0h2m8 0h2m1 0h1m12 0h1m1 0h1m4 0h2m8 0h1m3 0h1m4 0h1m6 0h1m1 0h2m4 0h1m8 0h2m6 0h1m1 0h3m6 0h1m3 0h3m4 0h1m1 0h1m2 0h1m2 0h1m4 0h1m1 0h1m10 0h2m1 0h1m14 0h2m14 0h1m19 0h1m2 0h1m4 0h1m6 0h1m5 0h1m10 0h3m3 0h1m4 0h1m3 0h2m2 0h1m6 0h1m1 0h1m6 0h1m4 0h1m2 0h1m11 0h1m5 0h1m10 0h1m6 0h1m4 0h1m7 0h1m1 0h2m6 0h1m1 0h1m12 0h1m9 0h1m1 0h2m1 0h2m1 0h1m7 0h1m4 0h1m6 0h2m1 0h1m1 0h1m1 0h1m2 0h1m5 0h1m1 0h1m2 0h1m8 0h3m1 0h1m2 0h1m8 0h1m4 0h1m6 0h1m2 0h1m3 0h3m1 0h1m1 0h2m2 0h2m1 0h2m1 0h1m4 0h2m2 0h2m2 0h1m2 0h2m1 0h1m3 0h1m2 0h1m2 0h2m2 0h2m1 0h1m14 0h4m2 0h4m1 0h3m1 0h3m1 0h1m1 0h1m1 0h1m3 0h3m6 0h1m1 0h3m1 0h1m3 0h1m4 0h1m2 0h1m3 0h1m2 0h1m1 0h1m1 0h2m-986 7h1m2 0h1m1 0h1m1 0h1m1 0h1m3 0h3m5 0h1m4 0h1m3 0h2m1 0h1m1 0h1m1 0h1m6 0h2m6 0h1m2 0h2m2 0h1m6 0h1m5 0h2m3 0h1m3 0h1m5 0h2m3 0h3m1 0h1m4 0h1m2 0h2m7 0h2m5 0h1m2 0h1m1 0h1m11 0h1m5 0h1m4 0h1m2 0h1m4 0h1m9 0h1m10 0h1m3 0h1m3 0h1m3 0h1m2 0h1m10 0h1m1 0h1m2 0h1m2 0h1m6 0h1m3 0h1m1 0h1m1 0h1m8 0h1m11 0h3m1 0h1m3 0h1m11 0h1m3 0h1m7 0h1m4 0h1m3 0h1m15 0h1m3 0h1m10 0h1m4 0h1m10 0h1m6 0h1m3 0h2m5 0h1m1 0h1m5 0h1m4 0h1m3 0h1m3 0h1m5 0h1m8 0h2m2 0h1m7 0h1m4 0h1m2 0h1m1 0h1m5 0h1m13 0h1m2 0h1m1 0h1m6 0h1m4 0h2m2 0h1m2 0h1m2 0h2m10 0h1m11 0h1m10 0h1m1 0h1m2 0h1m1 0h1m7 0h1m4 0h1m28 0h1m1 0h1m5 0h1m6 0h2m1 0h1m4 0h1m9 0h1m1 0h1m6 0h2m4 0h2m3 0h1m2 0h1m5 0h1m1 0h1m8 0h1m2 0h1m10 0h1m1 0h3m8 0h3m2 0h1m3 0h1m10 0h1m12 0h1m3 0h3m4 0h1m1 0h1m1 0h2m3 0h1m8 0h1m4 0h1m3 0h1m5 0h1m10 0h2m2 0h1m1 0h1m12 0h1m2 0h1m6 0h1m4 0h1m2 0h1m8 0h1m1 0h1m3 0h2m2 0h1m1 0h1m3 0h1m6 0h3m6 0h2m5 0h1m4 0h1m1 0h2m1 0h2m2 0h1m6 0h1m1 0h2m7 0h1m4 0h1m1 0h1m2 0h2m1 0h2m3 0h1m7 0h2m2 0h1m2 0h1m2 0h2m1 0h1m2 0h2m3 0h8m3 0h1m1 0h2m3 0h1m2 0h1m1 0h1m6 0h3m1 0h1m2 0h1m2 0h4m2 0h1m1 0h2m1 0h1m1 0h1m1 0h2m1 0h1m2 0h1m3 0h1m1 0h1m8 0h4m1 0h1m5 0h1m2 0h1m-983 7h3m3 0h3m1 0h2m2 0h1m5 0h1m2 0h1m2 0h1m1 0h1m1 0h2m2 0h2m4 0h2m2 0h1m1 0h1m2 0h1m5 0h1m6 0h1m1 0h1m3 0h1m3 0h1m1 0h2m2 0h1m5 0h2m7 0h1m10 0h1m26 0h1m10 0h1m11 0h1m3 0h1m1 0h1m6 0h1m18 0h1m2 0h1m7 0h1m10 0h1m1 0h1m6 0h1m7 0h1m26 0h2m6 0h1m5 0h2m5 0h1m5 0h1m2 0h1m4 0h1m35 0h1m3 0h1m17 0h1m1 0h1m4 0h1m11 0h1m7 0h1m1 0h1m1 0h1m4 0h1m1 0h1m3 0h1m12 0h2m3 0h1m3 0h1m8 0h1m1 0h1m1 0h1m5 0h1m9 0h2m1 0h1m32 0h1m1 0h1m1 0h3m2 0h1m2 0h1m5 0h1m3 0h1m11 0h1m12 0h1m4 0h1m2 0h2m3 0h1m3 0h1m10 0h1m9 0h1m7 0h1m3 0h1m10 0h1m2 0h1m1 0h1m3 0h1m4 0h1m2 0h1m1 0h1m5 0h1m6 0h1m1 0h1m13 0h1m2 0h1m8 0h1m2 0h2m1 0h1m3 0h1m8 0h2m1 0h2m2 0h1m7 0h1m2 0h1m14 0h1m13 0h2m1 0h2m8 0h1m8 0h1m16 0h1m1 0h1m4 0h1m2 0h1m2 0h1m1 0h2m2 0h1m2 0h1m1 0h1m1 0h1m3 0h1m1 0h1m6 0h1m3 0h1m13 0h1m2 0h2m1 0h1m1 0h1m12 0h1m7 0h1m12 0h1m1 0h1m3 0h2m2 0h1m1 0h1m1 0h2m1 0h1m1 0h1m2 0h1m3 0h2m2 0h1m1 0h2m3 0h4m2 0h1m7 0h2m9 0h1m1 0h1m3 0h1m1 0h1m6 0h2m2 0h5m1 0h1m1 0h3m1 0h2m1 0h2m1 0h1m2 0h1m3 0h3m1 0h1m3 0h3m1 0h2m2 0h1m2 0h1m3 0h1m3 0h1m-980 13h1m1 0h1m3 0h3m18 0h1m1 0h1m3 0h2m1 0h1m2 0h1m3 0h1m2 0h1m4 0h1m2 0h1m1 0h1m16 0h3m8 0h2m2 0h1m3 0h3m3 0h1m3 0h1m1 0h1m1 0h2m1 0h1m1 0h2m2 0h1m6 0h1m1 0h1m6 0h1m3 0h1m5 0h1m21 0h1m5 0h1m5 0h1m4 0h1m4 0h1m12 0h2m1 0h1m5 0h2m4 0h2m4 0h2m6 0h1m4 0h1m1 0h2m4 0h1m5 0h1m17 0h1m2 0h1m5 0h1m34 0h1m3 0h1m3 0h2m15 0h1m2 0h1m6 0h3m1 0h1m4 0h1m2 0h1m7 0h1m7 0h1m8 0h1m11 0h1m2 0h1m9 0h1m13 0h1m6 0h2m4 0h1m5 0h1m6 0h2m6 0h1m11 0h1m2 0h1m15 0h1m2 0h1m7 0h2m3 0h1m3 0h1m6 0h1m17 0h1m25 0h2m12 0h1m2 0h1m7 0h1m3 0h1m3 0h1m5 0h1m1 0h1m4 0h1m6 0h1m2 0h1m2 0h1m1 0h2m6 0h2m2 0h1m1 0h1m2 0h1m2 0h1m1 0h1m2 0h1m3 0h1m3 0h1m2 0h1m9 0h1m2 0h1m10 0h1m3 0h1m4 0h2m2 0h1m1 0h1m10 0h2m5 0h2m12 0h1m6 0h1m3 0h1m7 0h1m2 0h1m6 0h1m1 0h1m2 0h1m8 0h1m4 0h1m2 0h1m13 0h2m9 0h1m4 0h1m3 0h2m10 0h1m3 0h1m4 0h1m1 0h1m1 0h1m1 0h1m10 0h3m8 0h1m1 0h1m1 0h1m1 0h1m8 0h1m1 0h3m1 0h1m1 0h2m1 0h2m1 0h2m5 0h1m2 0h1m1 0h1m1 0h1m1 0h5m3 0h2m1 0h1m1 0h2m1 0h1m1 0h1m3 0h1m2 0h1m1 0h2m1 0h2m10 0h3m2 0h1m9 0h1m2 0h3m5 0h2m4 0h2m3 0h1m-984 7h3m1 0h1m4 0h4m3 0h1m3 0h1m2 0h1m4 0h2m2 0h1m10 0h2m1 0h3m2 0h3m2 0h1m3 0h1m5 0h1m2 0h1m3 0h1m1 0h1m5 0h1m5 0h1m2 0h1m4 0h1m5 0h1m5 0h3m1 0h2m1 0h1m3 0h1m11 0h1m4 0h1m1 0h1m1 0h1m4 0h2m8 0h1m3 0h2m5 0h3m3 0h2m26 0h1m2 0h1m6 0h1m1 0h1m2 0h1m6 0h4m2 0h1m1 0h1m3 0h1m2 0h1m5 0h1m4 0h2m10 0h1m2 0h1m7 0h1m1 0h1m7 0h1m3 0h1m3 0h1m4 0h1m9 0h1m1 0h1m4 0h1m7 0h1m4 0h1m1 0h1m3 0h1m5 0h1m6 0h1m17 0h1m2 0h2m1 0h1m1 0h2m27 0h1m18 0h1m2 0h1m1 0h1m1 0h2m2 0h1m2 0h1m9 0h1m1 0h1m4 0h1m21 0h1m3 0h1m1 0h1m3 0h2m1 0h1m1 0h1m3 0h1m13 0h1m1 0h1m25 0h1m1 0h2m4 0h2m12 0h1m2 0h1m14 0h1m10 0h1m1 0h1m2 0h1m11 0h2m3 0h1m10 0h1m2 0h1m3 0h1m7 0h1m1 0h2m7 0h1m2 0h1m9 0h1m2 0h1m4 0h1m1 0h1m3 0h1m7 0h2m1 0h1m9 0h1m1 0h2m1 0h1m1 0h1m2 0h1m3 0h3m5 0h1m9 0h1m4 0h1m4 0h2m2 0h1m14 0h1m4 0h1m4 0h1m2 0h1m3 0h1m4 0h1m1 0h1m3 0h2m2 0h1m3 0h1m4 0h2m14 0h1m1 0h1m1 0h1m4 0h1m2 0h4m1 0h1m2 0h1m10 0h1m2 0h2m5 0h1m10 0h1m1 0h1m4 0h2m1 0h2m4 0h1m2 0h1m2 0h1m6 0h1m1 0h1m2 0h1m1 0h2m7 0h1m1 0h1m1 0h5m2 0h1m2 0h1m2 0h1m5 0h1m4 0h1m3 0h1m1 0h1m1 0h2m2 0h4m2 0h2m3 0h1m1 0h1m1 0h1m5 0h2m2 0h1m3 0h1m3 0h10m-986 7h1m4 0h2m2 0h3m2 0h1m5 0h1m4 0h2m5 0h2m5 0h1m4 0h3m4 0h2m5 0h2m3 0h1m4 0h1m4 0h1m3 0h1m9 0h1m2 0h1m4 0h2m10 0h2m3 0h2m1 0h1m2 0h1m1 0h1m3 0h2m1 0h1m2 0h2m5 0h1m25 0h1m10 0h1m6 0h1m20 0h1m5 0h4m6 0h1m2 0h1m4 0h2m1 0h1m3 0h1m3 0h4m3 0h1m7 0h1m4 0h1m1 0h2m1 0h1m1 0h1m1 0h1m3 0h1m4 0h1m33 0h1m6 0h1m6 0h3m4 0h1m16 0h3m4 0h1m11 0h1m6 0h1m6 0h1m7 0h1m2 0h1m1 0h1m6 0h1m2 0h2m2 0h1m1 0h1m6 0h1m2 0h1m4 0h1m1 0h1m5 0h1m8 0h1m10 0h2m4 0h2m1 0h2m1 0h1m3 0h1m5 0h1m4 0h2m1 0h1m1 0h1m6 0h2m6 0h1m13 0h2m1 0h1m3 0h1m6 0h3m1 0h1m4 0h1m1 0h1m1 0h1m2 0h1m3 0h1m7 0h1m1 0h2m4 0h1m1 0h1m3 0h1m18 0h1m2 0h1m4 0h1m6 0h1m12 0h1m1 0h2m11 0h1m1 0h1m6 0h1m4 0h1m10 0h1m7 0h1m5 0h1m2 0h1m1 0h2m9 0h1m2 0h1m3 0h1m2 0h1m13 0h1m2 0h1m4 0h1m10 0h1m7 0h1m9 0h1m1 0h1m1 0h1m3 0h2m5 0h1m8 0h1m1 0h2m4 0h2m2 0h1m4 0h1m1 0h1m3 0h1m11 0h1m3 0h1m5 0h1m1 0h1m6 0h3m6 0h1m5 0h2m2 0h2m6 0h1m2 0h3m5 0h1m3 0h4m2 0h1m1 0h1m1 0h1m2 0h1m2 0h1m1 0h1m1 0h1m2 0h1m1 0h1m2 0h1m4 0h2m6 0h3m4 0h3m1 0h1m1 0h1m3 0h2m3 0h2m6 0h1m1 0h2m4 0h2m1 0h1m5 0h1m5 0h2m1 0h1m1 0h1m3 0h1m1 0h1m7 0h1m4 0h1m-986 7h3m1 0h1m4 0h1m4 0h1m4 0h5m2 0h1m1 0h1m3 0h1m5 0h2m2 0h1m3 0h3m4 0h1m3 0h3m4 0h1m1 0h1m4 0h1m1 0h1m2 0h2m7 0h1m7 0h2m1 0h1m7 0h2m2 0h2m2 0h1m2 0h2m4 0h1m1 0h1m6 0h1m4 0h1m7 0h2m5 0h1m7 0h2m6 0h1m5 0h1m3 0h1m4 0h1m2 0h1m4 0h1m3 0h1m9 0h1m5 0h1m3 0h1m5 0h1m6 0h1m9 0h1m3 0h2m2 0h1m2 0h1m3 0h1m1 0h1m23 0h2m3 0h1m24 0h1m1 0h1m3 0h1m5 0h1m16 0h1m2 0h1m1 0h1m4 0h1m7 0h2m4 0h1m4 0h1m4 0h1m6 0h1m4 0h1m6 0h1m11 0h1m5 0h1m6 0h1m3 0h1m6 0h1m2 0h2m3 0h2m1 0h1m13 0h1m11 0h1m2 0h1m5 0h2m1 0h1m1 0h1m1 0h1m1 0h1m6 0h1m2 0h1m23 0h1m5 0h1m2 0h1m12 0h1m1 0h1m5 0h1m6 0h1m5 0h2m3 0h1m5 0h1m4 0h1m3 0h1m4 0h1m1 0h1m8 0h2m6 0h1m6 0h2m11 0h1m10 0h2m3 0h1m3 0h1m5 0h2m2 0h1m2 0h2m3 0h1m2 0h1m5 0h1m8 0h1m2 0h1m8 0h1m5 0h2m1 0h1m3 0h2m14 0h1m15 0h1m6 0h1m9 0h1m15 0h1m3 0h1m6 0h1m1 0h1m6 0h1m1 0h1m1 0h2m5 0h2m5 0h1m3 0h2m2 0h2m1 0h1m14 0h1m2 0h2m11 0h1m2 0h1m5 0h3m8 0h2m1 0h1m1 0h1m3 0h2m2 0h2m3 0h3m7 0h1m2 0h1m3 0h1m1 0h2m3 0h2m7 0h2m1 0h1m2 0h2m1 0h1m1 0h2m1 0h2m2 0h2m3 0h1m1 0h2m1 0h4m5 0h1m3 0h1m1 0h2m2 0h1m1 0h1m1 0h1m2 0h1m1 0h1m1 0h2m4 0h1m1 0h2m-984 7h1m1 0h2m5 0h1m2 0h1m3 0h1m1 0h1m1 0h2m11 0h1m2 0h1m1 0h2m2 0h4m8 0h2m5 0h1m3 0h2m3 0h1m1 0h1m3 0h1m21 0h2m4 0h1m6 0h2m9 0h2m16 0h1m6 0h1m1 0h2m1 0h1m1 0h1m5 0h2m8 0h1m8 0h1m3 0h2m2 0h2m7 0h1m3 0h1m2 0h1m4 0h1m9 0h2m4 0h1m4 0h3m5 0h1m3 0h2m3 0h1m3 0h1m9 0h1m3 0h1m2 0h2m1 0h1m2 0h2m5 0h1m6 0h1m22 0h1m10 0h1m3 0h1m5 0h1m1 0h1m6 0h1m2 0h2m2 0h2m19 0h1m11 0h1m2 0h2m14 0h1m1 0h1m2 0h1m6 0h1m1 0h1m1 0h1m7 0h1m5 0h1m10 0h1m23 0h1m3 0h1m7 0h1m1 0h1m2 0h2m15 0h1m4 0h1m1 0h1m7 0h1m7 0h1m8 0h1m5 0h1m1 0h1m2 0h1m5 0h1m15 0h1m7 0h1m9 0h1m2 0h1m6 0h2m1 0h1m4 0h1m14 0h1m4 0h1m6 0h1m1 0h1m7 0h1m4 0h1m11 0h1m8 0h1m3 0h1m21 0h1m2 0h1m1 0h2m9 0h1m3 0h1m2 0h2m4 0h2m1 0h2m4 0h1m2 0h1m11 0h1m3 0h1m6 0h1m5 0h1m1 0h2m2 0h1m1 0h1m1 0h1m2 0h1m8 0h2m2 0h1m5 0h1m2 0h1m12 0h1m2 0h1m1 0h1m11 0h2m2 0h1m6 0h1m1 0h4m3 0h1m3 0h1m4 0h2m3 0h1m1 0h2m2 0h1m3 0h4m1 0h1m2 0h1m3 0h2m1 0h1m1 0h1m3 0h1m1 0h1m1 0h2m1 0h1m3 0h1m5 0h1m4 0h1m1 0h2m4 0h1m2 0h1m3 0h1m2 0h1m1 0h1m4 0h2m1 0h1m1 0h1m1 0h1m2 0h1m1 0h2m1 0h1m2 0h2m2 0h2m3 0h2m1 0h2m3 0h2m1 0h1m1 0h2m1 0h2m1 0h1m-983 13h3m1 0h1m2 0h1m3 0h3m1 0h2m4 0h2m2 0h2m2 0h1m6 0h3m2 0h1m1 0h2m1 0h1m5 0h1m8 0h2m3 0h1m4 0h2m1 0h3m2 0h2m3 0h1m1 0h1m2 0h1m4 0h2m3 0h1m1 0h1m2 0h2m2 0h1m1 0h1m4 0h1m8 0h1m4 0h1m6 0h2m10 0h3m4 0h1m1 0h1m21 0h1m17 0h1m4 0h1m6 0h1m1 0h1m5 0h1m6 0h1m2 0h2m1 0h1m1 0h1m1 0h1m3 0h1m5 0h1m8 0h1m4 0h1m6 0h2m1 0h1m3 0h1m8 0h1m1 0h1m3 0h2m1 0h1m21 0h1m1 0h1m3 0h1m7 0h1m1 0h1m7 0h3m3 0h1m3 0h3m11 0h1m1 0h2m1 0h1m13 0h1m1 0h2m1 0h2m12 0h1m1 0h1m5 0h1m1 0h2m2 0h2m8 0h2m4 0h1m4 0h2m13 0h1m3 0h1m30 0h1m1 0h1m19 0h2m6 0h1m1 0h1m6 0h2m8 0h1m6 0h1m12 0h1m8 0h1m12 0h2m3 0h1m8 0h1m1 0h1m1 0h2m1 0h1m2 0h1m4 0h1m3 0h2m3 0h1m2 0h1m1 0h2m1 0h1m6 0h1m5 0h1m1 0h1m3 0h2m10 0h1m10 0h1m3 0h2m9 0h1m8 0h1m3 0h2m10 0h1m7 0h1m6 0h2m3 0h1m4 0h1m3 0h1m18 0h2m1 0h1m5 0h2m3 0h2m6 0h1m1 0h1m10 0h1m4 0h1m16 0h1m5 0h3m3 0h1m2 0h1m3 0h1m3 0h1m3 0h3m6 0h1m5 0h1m3 0h2m1 0h1m2 0h4m6 0h1m1 0h1m4 0h1m2 0h1m3 0h2m1 0h1m2 0h2m4 0h2m1 0h4m3 0h2m1 0h2m2 0h3m2 0h2m3 0h1m3 0h2m1 0h1m1 0h1m10 0h1m1 0h1m1 0h1m2 0h1m1 0h2m4 0h2m1 0h2m5 0h1m5 0h2m4 0h1m3 0h2m-986 7h1m1 0h1m1 0h1m5 0h1m2 0h2m1 0h1m3 0h2m1 0h1m2 0h2m1 0h1m5 0h3m1 0h2m1 0h1m3 0h1m6 0h2m2 0h2m3 0h1m4 0h2m1 0h1m2 0h2m2 0h1m6 0h1m3 0h1m1 0h1m2 0h2m3 0h1m3 0h1m1 0h1m1 0h1m7 0h1m2 0h3m2 0h6m2 0h2m1 0h1m1 0h1m1 0h1m1 0h1m4 0h2m5 0h2m1 0h1m6 0h2m3 0h1m1 0h1m2 0h1m1 0h1m3 0h1m2 0h1m1 0h1m3 0h1m11 0h1m1 0h1m1 0h1m1 0h2m5 0h4m5 0h2m1 0h1m3 0h3m3 0h3m2 0h2m1 0h2m4 0h1m3 0h1m9 0h3m4 0h1m4 0h1m2 0h1m1 0h1m1 0h1m2 0h1m6 0h1m14 0h1m1 0h1m6 0h1m3 0h2m5 0h1m1 0h1m1 0h2m1 0h2m1 0h2m4 0h3m1 0h1m2 0h1m5 0h2m6 0h1m2 0h1m3 0h2m6 0h1m2 0h1m1 0h1m3 0h1m1 0h2m1 0h1m3 0h1m2 0h1m3 0h1m5 0h1m4 0h1m1 0h1m9 0h3m1 0h1m2 0h1m1 0h1m2 0h1m2 0h1m2 0h2m1 0h1m2 0h1m3 0h1m4 0h1m2 0h1m4 0h2m10 0h1m4 0h1m2 0h1m1 0h1m2 0h1m2 0h1m4 0h1m13 0h1m9 0h1m2 0h2m4 0h1m1 0h1m1 0h1m2 0h1m1 0h1m1 0h1m2 0h1m1 0h1m1 0h1m1 0h2m3 0h2m5 0h2m4 0h1m1 0h1m2 0h1m9 0h1m7 0h2m3 0h1m2 0h4m1 0h1m3 0h1m6 0h1m1 0h2m7 0h3m1 0h2m2 0h1m7 0h2m5 0h1m3 0h1m5 0h3m5 0h1m7 0h4m1 0h1m2 0h1m5 0h1m2 0h5m3 0h1m3 0h1m9 0h1m2 0h2m2 0h1m1 0h3m2 0h3m1 0h4m5 0h1m2 0h1m1 0h1m16 0h1m2 0h1m3 0h1m1 0h1m1 0h4m1 0h1m1 0h1m4 0h4m2 0h2m3 0h1m4 0h1m3 0h3m1 0h2m6 0h1m2 0h1m2 0h1m6 0h1m8 0h1m2 0h1m4 0h3m2 0h1m5 0h2m1 0h1m1 0h3m4 0h3m4 0h1m2 0h2m3 0h1m2 0h1m4 0h2m3 0h2m1 0h1m1 0h4m1 0h2m1 0h2m3 0h2m4 0h1m1 0h1m1 0h4m3 0h3m2 0h2m6 0h1m5 0h1m2 0h1m5 0h3m1 0h1m5 0h1m2 0h1m1 0h1m2 0h2m-984 7h1m1 0h2m4 0h2m1 0h1m3 0h1m2 0h1m1 0h1m4 0h2m1 0h2m1 0h1m3 0h1m3 0h1m1 0h1m1 0h1m3 0h1m6 0h2m6 0h3m1 0h1m1 0h1m4 0h2m10 0h1m1 0h1m5 0h2m1 0h1m7 0h1m3 0h1m5 0h1m8 0h1m8 0h1m5 0h1m9 0h1m4 0h1m2 0h1m1 0h1m1 0h1m1 0h1m2 0h2m5 0h1m1 0h1m2 0h1m2 0h1m2 0h1m4 0h3m9 0h1m3 0h2m4 0h1m8 0h2m4 0h1m4 0h2m2 0h3m4 0h1m5 0h2m6 0h1m1 0h1m11 0h2m1 0h1m3 0h1m1 0h1m2 0h1m1 0h1m8 0h1m12 0h1m2 0h1m1 0h2m2 0h1m3 0h2m2 0h3m5 0h1m2 0h2m5 0h2m1 0h1m10 0h1m19 0h1m1 0h2m5 0h2m14 0h1m11 0h1m12 0h1m5 0h1m1 0h1m7 0h3m8 0h1m6 0h1m10 0h1m5 0h1m2 0h2m3 0h3m2 0h1m7 0h1m1 0h2m3 0h1m12 0h2m1 0h1m2 0h1m6 0h1m13 0h1m2 0h1m6 0h1m1 0h1m1 0h1m6 0h1m4 0h3m7 0h1m2 0h1m2 0h2m1 0h1m7 0h2m1 0h1m3 0h1m1 0h1m5 0h2m3 0h1m1 0h1m7 0h2m2 0h2m1 0h1m7 0h2m11 0h1m6 0h1m6 0h1m3 0h1m9 0h1m7 0h1m14 0h1m3 0h1m1 0h1m1 0h1m5 0h1m3 0h3m4 0h1m5 0h2m1 0h1m4 0h1m4 0h2m15 0h2m3 0h1m20 0h1m3 0h1m2 0h1m1 0h1m1 0h1m5 0h4m1 0h1m3 0h2m2 0h1m4 0h1m6 0h1m6 0h1m8 0h1m3 0h1m1 0h2m3 0h3m2 0h1m2 0h3m6 0h1m3 0h1m3 0h1m1 0h2m1 0h1m2 0h2m1 0h1m1 0h4m1 0h4m4 0h1m1 0h2m1 0h1m3 0h1m1 0h2m1 0h4m1 0h1m1 0h1m6 0h1m2 0h1m1 0h2m6 0h1m2 0h1m2 0h1m3 0h2m1 0h2m1 0h1m4 0h3m5 0h1m-983 7h2m2 0h1m2 0h1m1 0h1m5 0h1m2 0h1m1 0h1m6 0h2m3 0h1m7 0h2m2 0h1m1 0h2m3 0h1m6 0h1m3 0h2m3 0h1m4 0h1m8 0h1m3 0h2m12 0h1m4 0h1m3 0h1m1 0h2m3 0h2m4 0h1m20 0h1m1 0h1m4 0h1m1 0h1m22 0h2m13 0h2m2 0h1m15 0h1m3 0h2m1 0h1m5 0h1m2 0h1m6 0h1m5 0h1m2 0h1m2 0h1m3 0h1m3 0h2m12 0h1m6 0h1m10 0h1m3 0h1m3 0h1m12 0h1m1 0h1m2 0h1m2 0h1m2 0h1m6 0h1m6 0h1m7 0h1m5 0h1m2 0h1m7 0h1m3 0h1m5 0h3m5 0h2m3 0h1m1 0h1m3 0h1m3 0h1m8 0h1m5 0h1m7 0h1m5 0h1m1 0h2m3 0h1m4 0h1m7 0h2m5 0h1m41 0h1m1 0h1m2 0h1m8 0h1m3 0h1m4 0h1m7 0h1m18 0h3m1 0h1m5 0h1m11 0h1m5 0h1m4 0h1m4 0h1m8 0h1m2 0h1m4 0h1m3 0h1m20 0h1m23 0h1m1 0h1m4 0h2m4 0h1m10 0h1m7 0h1m2 0h1m1 0h2m14 0h1m8 0h1m7 0h1m7 0h1m4 0h1m6 0h3m18 0h1m7 0h1m2 0h1m1 0h1m11 0h1m4 0h2m9 0h1m6 0h1m1 0h1m3 0h1m3 0h2m1 0h4m5 0h1m15 0h1m6 0h2m2 0h3m1 0h1m1 0h3m2 0h1m1 0h1m1 0h2m8 0h1m2 0h1m2 0h1m2 0h4m6 0h1m2 0h1m2 0h1m6 0h1m1 0h1m3 0h1m1 0h1m15 0h1m2 0h2m1 0h1m3 0h1m4 0h4m1 0h1m1 0h1m3 0h1m5 0h1m1 0h1m1 0h3m4 0h1m1 0h5m1 0h1m-980 7h1m1 0h1m3 0h1m1 0h2m4 0h1m2 0h1m1 0h2m3 0h2m1 0h4m3 0h1m3 0h1m3 0h1m3 0h2m2 0h1m6 0h1m3 0h2m4 0h1m1 0h1m1 0h1m1 0h1m1 0h1m17 0h2m9 0h2m2 0h1m2 0h5m6 0h1m18 0h2m1 0h1m5 0h1m2 0h1m1 0h1m2 0h1m2 0h2m8 0h1m17 0h1m7 0h2m2 0h1m5 0h3m3 0h1m16 0h2m4 0h1m1 0h1m2 0h1m3 0h2m4 0h1m15 0h2m9 0h1m1 0h1m2 0h1m5 0h1m2 0h1m11 0h1m18 0h2m3 0h1m1 0h1m13 0h2m2 0h1m7 0h1m1 0h1m7 0h1m6 0h1m8 0h1m5 0h1m1 0h1m10 0h1m8 0h1m1 0h3m1 0h2m1 0h1m21 0h1m10 0h1m16 0h1m7 0h1m13 0h1m10 0h1m5 0h1m11 0h1m14 0h1m1 0h1m1 0h1m2 0h2m1 0h1m11 0h1m2 0h1m2 0h1m2 0h1m11 0h1m4 0h1m1 0h1m1 0h1m1 0h1m3 0h1m3 0h2m1 0h1m1 0h1m9 0h1m2 0h1m1 0h1m4 0h1m7 0h2m7 0h1m5 0h1m12 0h1m2 0h1m9 0h2m8 0h1m1 0h1m5 0h2m6 0h1m4 0h1m3 0h1m11 0h1m3 0h1m6 0h1m2 0h1m3 0h1m2 0h1m2 0h1m12 0h1m1 0h2m1 0h1m13 0h1m1 0h2m8 0h2m5 0h2m3 0h1m13 0h3m1 0h1m4 0h1m1 0h2m2 0h1m1 0h1m2 0h1m1 0h1m3 0h1m7 0h1m4 0h1m3 0h1m2 0h1m5 0h1m1 0h1m2 0h2m2 0h1m1 0h1m5 0h1m2 0h2m2 0h1m1 0h1m5 0h1m2 0h1m3 0h1m1 0h1m1 0h1m4 0h1m6 0h1m5 0h1m2 0h5m2 0h4m2 0h1m4 0h3m2 0h1m9 0h2m4 0h1m1 0h1m2 0h1m1 0h1m1 0h3m4 0h2m-986 7h1m4 0h1m4 0h1m6 0h1m2 0h1m1 0h1m5 0h2m1 0h1m6 0h1m1 0h1m3 0h1m11 0h1m6 0h2m1 0h2m2 0h1m6 0h1m8 0h2m21 0h1m1 0h1m1 0h1m3 0h1m3 0h1m3 0h1m4 0h1m5 0h1m6 0h1m15 0h1m13 0h1m13 0h1m10 0h1m4 0h1m9 0h1m14 0h1m9 0h2m7 0h1m16 0h1m1 0h1m8 0h1m5 0h2m23 0h1m3 0h1m1 0h1m5 0h1m3 0h2m10 0h1m9 0h1m21 0h1m6 0h1m3 0h1m4 0h2m6 0h1m10 0h1m5 0h1m7 0h1m8 0h2m3 0h1m11 0h2m6 0h1m2 0h1m31 0h1m6 0h1m1 0h1m6 0h1m8 0h2m2 0h1m1 0h1m7 0h1m19 0h1m4 0h1m3 0h1m8 0h1m2 0h1m19 0h1m6 0h2m2 0h1m3 0h2m15 0h1m1 0h1m8 0h1m5 0h1m19 0h1m1 0h1m8 0h1m3 0h1m4 0h1m4 0h1m7 0h2m2 0h1m2 0h1m1 0h1m7 0h1m6 0h2m1 0h1m4 0h1m4 0h1m6 0h1m3 0h1m11 0h1m5 0h1m1 0h1m1 0h1m2 0h1m2 0h1m3 0h1m5 0h2m1 0h1m15 0h1m7 0h1m3 0h1m2 0h1m3 0h1m25 0h1m7 0h1m2 0h1m5 0h1m2 0h1m12 0h1m6 0h1m1 0h1m1 0h2m2 0h1m1 0h1m9 0h1m1 0h1m7 0h1m1 0h2m2 0h2m1 0h1m3 0h1m2 0h1m4 0h1m1 0h2m2 0h1m1 0h1m2 0h1m1 0h2m5 0h2m1 0h1m4 0h1m1 0h1m8 0h1m1 0h1m6 0h1m1 0h3m2 0h3m-983 13h2m6 0h1m5 0h1m2 0h1m4 0h2m1 0h3m1 0h1m1 0h1m1 0h2m1 0h3m2 0h1m1 0h1m1 0h1m2 0h3m8 0h1m2 0h1m2 0h1m5 0h1m1 0h1m4 0h2m10 0h1m7 0h1m1 0h1m1 0h1m1 0h1m2 0h1m1 0h1m1 0h1m2 0h1m6 0h1m2 0h1m3 0h1m12 0h1m1 0h1m1 0h1m1 0h2m3 0h1m1 0h1m3 0h1m5 0h1m2 0h1m7 0h2m6 0h2m2 0h1m3 0h1m4 0h2m2 0h1m1 0h1m4 0h1m5 0h1m4 0h1m7 0h1m3 0h2m4 0h2m5 0h1m3 0h1m3 0h1m4 0h1m5 0h1m1 0h1m3 0h1m2 0h1m4 0h1m10 0h1m15 0h1m4 0h1m5 0h1m3 0h1m3 0h1m5 0h1m5 0h1m3 0h1m6 0h2m13 0h1m3 0h1m6 0h2m5 0h1m1 0h1m18 0h2m3 0h2m5 0h2m6 0h1m2 0h1m1 0h1m2 0h1m4 0h1m2 0h1m3 0h1m6 0h5m2 0h1m8 0h2m6 0h2m1 0h2m3 0h1m2 0h2m17 0h1m10 0h3m3 0h1m2 0h1m4 0h1m1 0h1m3 0h1m3 0h1m2 0h1m8 0h1m14 0h2m4 0h1m2 0h1m10 0h1m1 0h1m4 0h1m2 0h1m3 0h1m4 0h1m6 0h1m8 0h1m1 0h1m12 0h2m5 0h1m2 0h1m4 0h2m1 0h1m3 0h1m7 0h2m7 0h1m1 0h1m4 0h1m8 0h1m1 0h1m4 0h1m5 0h2m2 0h1m5 0h1m5 0h3m4 0h1m1 0h1m2 0h1m8 0h2m4 0h1m5 0h1m2 0h1m1 0h1m3 0h2m1 0h2m2 0h2m4 0h1m1 0h2m2 0h1m9 0h1m1 0h2m10 0h1m2 0h1m11 0h2m5 0h2m7 0h1m2 0h2m1 0h2m2 0h2m6 0h3m3 0h1m6 0h1m2 0h2m3 0h1m1 0h1m2 0h1m2 0h1m1 0h1m2 0h4m2 0h1m3 0h2m2 0h2m1 0h2m3 0h2m3 0h2m1 0h3m4 0h3m2 0h1m1 0h1m1 0h1m1 0h1m4 0h3m5 0h1m1 0h1m2 0h1m1 0h1m3 0h1m2 0h2m1 0h2m4 0h1m1 0h1m2 0h2m4 0h2m-983 7h1m3 0h1m4 0h1m1 0h1m1 0h2m3 0h1m4 0h1m3 0h1m1 0h1m1 0h1m1 0h1m1 0h3m1 0h1m8 0h1m2 0h3m3 0h3m1 0h1m7 0h1m3 0h3m4 0h1m6 0h1m3 0h1m1 0h1m2 0h1m6 0h1m19 0h1m1 0h2m15 0h1m2 0h1m5 0h2m5 0h1m3 0h1m3 0h1m1 0h1m2 0h1m11 0h1m4 0h1m1 0h1m12 0h2m15 0h1m1 0h1m6 0h1m2 0h1m1 0h1m13 0h1m2 0h2m18 0h1m3 0h1m2 0h2m3 0h2m25 0h1m1 0h1m2 0h1m7 0h2m2 0h1m17 0h2m2 0h1m2 0h1m1 0h1m4 0h1m2 0h1m7 0h1m3 0h1m2 0h1m2 0h1m2 0h1m2 0h1m5 0h1m1 0h1m1 0h1m5 0h1m5 0h2m5 0h1m3 0h1m1 0h1m7 0h1m8 0h1m5 0h1m12 0h1m4 0h2m1 0h1m1 0h1m6 0h1m1 0h1m3 0h1m18 0h2m13 0h1m8 0h1m4 0h1m4 0h1m9 0h1m14 0h1m2 0h1m3 0h1m7 0h1m17 0h1m1 0h3m1 0h1m18 0h1m16 0h1m8 0h1m4 0h1m1 0h1m3 0h1m2 0h1m6 0h2m8 0h1m4 0h1m11 0h1m12 0h2m13 0h1m6 0h1m2 0h1m3 0h1m3 0h1m8 0h1m1 0h1m2 0h3m6 0h1m2 0h1m7 0h1m9 0h2m8 0h2m2 0h1m2 0h1m11 0h1m3 0h1m11 0h2m2 0h1m3 0h1m7 0h1m6 0h2m1 0h4m3 0h1m3 0h1m1 0h1m2 0h3m2 0h3m1 0h3m2 0h1m1 0h3m1 0h1m5 0h1m3 0h2m4 0h1m2 0h1m1 0h1m1 0h1m7 0h2m1 0h3m1 0h1m2 0h2m3 0h5m5 0h2m1 0h1m3 0h1m15 0h1m4 0h3m1 0h1m1 0h1m5 0h2m-983 7h4m7 0h1m7 0h1m2 0h1m2 0h1m1 0h2m1 0h1m5 0h2m1 0h1m4 0h1m1 0h1m2 0h1m1 0h1m1 0h1m6 0h2m7 0h1m1 0h2m6 0h2m2 0h1m1 0h1m14 0h1m12 0h1m8 0h1m8 0h1m8 0h1m2 0h1m14 0h1m5 0h1m1 0h1m17 0h1m4 0h1m9 0h1m1 0h1m5 0h2m7 0h1m2 0h2m4 0h1m11 0h1m25 0h1m6 0h1m7 0h1m2 0h2m29 0h1m5 0h1m3 0h1m4 0h1m10 0h1m3 0h1m2 0h2m7 0h1m13 0h1m5 0h1m31 0h1m6 0h1m5 0h1m7 0h1m7 0h1m17 0h1m45 0h1m4 0h1m2 0h1m4 0h1m8 0h1m1 0h1m17 0h1m10 0h2m2 0h2m8 0h1m22 0h1m5 0h3m1 0h1m26 0h1m3 0h1m14 0h2m6 0h1m6 0h2m11 0h1m10 0h1m17 0h1m5 0h2m4 0h1m2 0h1m1 0h1m2 0h1m5 0h1m5 0h1m10 0h1m3 0h1m3 0h1m10 0h1m4 0h2m4 0h1m32 0h1m13 0h1m23 0h1m3 0h1m4 0h1m4 0h1m2 0h2m1 0h1m1 0h1m1 0h1m2 0h1m4 0h1m5 0h1m1 0h1m7 0h1m3 0h1m2 0h1m3 0h1m1 0h1m7 0h1m1 0h2m1 0h2m1 0h2m2 0h1m6 0h2m3 0h1m1 0h2m4 0h1m2 0h5m1 0h1m3 0h1m3 0h1m2 0h1m1 0h1m2 0h2m6 0h1m-982 7h1m1 0h1m3 0h1m4 0h1m1 0h4m1 0h1m4 0h2m3 0h3m9 0h1m1 0h2m1 0h1m1 0h1m7 0h1m5 0h1m5 0h2m4 0h1m11 0h1m7 0h1m10 0h1m5 0h3m2 0h1m1 0h1m3 0h2m1 0h1m4 0h1m12 0h1m45 0h1m7 0h1m24 0h1m14 0h1m4 0h1m1 0h1m8 0h1m12 0h2m3 0h1m3 0h1m3 0h1m3 0h1m26 0h1m20 0h1m41 0h1m3 0h2m3 0h1m3 0h1m15 0h1m1 0h1m14 0h2m12 0h1m33 0h1m10 0h1m1 0h1m32 0h1m14 0h1m9 0h1m45 0h1m32 0h1m12 0h2m52 0h1m2 0h1m2 0h1m7 0h1m23 0h1m4 0h1m31 0h1m2 0h1m26 0h2m10 0h1m6 0h2m2 0h1m6 0h1m3 0h1m1 0h2m20 0h1m9 0h1m9 0h1m16 0h2m4 0h1m2 0h1m6 0h2m1 0h1m6 0h1m7 0h1m6 0h1m9 0h3m4 0h2m2 0h1m7 0h2m3 0h1m2 0h3m1 0h1m2 0h3m1 0h1m1 0h1m1 0h1m5 0h1m-984 7h1m3 0h1m10 0h1m1 0h1m1 0h1m1 0h3m2 0h1m4 0h1m7 0h1m12 0h2m8 0h1m24 0h1m6 0h1m24 0h1m16 0h1m43 0h1m67 0h1m23 0h1m1 0h1m26 0h1m74 0h1m9 0h1m49 0h1m1 0h1m23 0h1m7 0h1m10 0h1m2 0h1m22 0h1m38 0h1m24 0h1m10 0h1m2 0h1m18 0h1m11 0h1m25 0h1m9 0h1m35 0h1m4 0h1m10 0h1m11 0h1m48 0h1m9 0h1m2 0h1m1 0h3m23 0h1m9 0h1m31 0h1m4 0h2m4 0h1m11 0h1m6 0h1m1 0h2m1 0h1m11 0h1m4 0h1m3 0h1m13 0h1m3 0h2m1 0h1m9 0h3m5 0h1m1 0h1m3 0h1m6 0h1m4 0h1m4 0h1m3 0h2m4 0h1m1 0h2m-978 7h1m2 0h1m8 0h2m1 0h2m1 0h2m3 0h1m12 0h1m3 0h1m9 0h2m19 0h1m6 0h1m4 0h1m1 0h1m23 0h2m2 0h1m7 0h1m19 0h1m42 0h1m2 0h1m22 0h1m11 0h1m18 0h1m31 0h1m7 0h2m8 0h1m1 0h1m25 0h2m6 0h1m69 0h1m1 0h1m17 0h1m9 0h1m11 0h1m34 0h1m7 0h1m12 0h1m22 0h1m1 0h1m25 0h1m9 0h1m5 0h2m19 0h1m12 0h1m14 0h1m2 0h1m9 0h1m5 0h2m4 0h1m2 0h1m5 0h1m3 0h1m66 0h1m11 0h1m18 0h1m4 0h1m1 0h1m2 0h1m4 0h3m5 0h2m1 0h1m22 0h1m27 0h1m17 0h1m35 0h2m1 0h1m8 0h1m3 0h2m2 0h1m2 0h1m4 0h1m3 0h1m1 0h1m10 0h1m1 0h1m7 0h1m2 0h1m4 0h2m1 0h1m7 0h1m7 0h3m5 0h2m2 0h2m6 0h1m2 0h1m-985 13h1m1 0h1m1 0h4m3 0h1m4 0h1m1 0h1m5 0h2m2 0h1m8 0h2m2 0h2m4 0h1m6 0h1m10 0h1m6 0h1m13 0h1m8 0h1m16 0h1m2 0h1m6 0h1m13 0h1m26 0h1m12 0h1m23 0h1m10 0h1m3 0h1m11 0h1m3 0h1m32 0h1m14 0h1m3 0h1m4 0h1m45 0h1m15 0h1m22 0h1m8 0h2m14 0h1m1 0h1m28 0h1m1 0h1m15 0h1m21 0h1m1 0h1m7 0h2m33 0h1m15 0h1m20 0h1m26 0h1m2 0h1m32 0h2m4 0h1m57 0h1m10 0h1m60 0h1m10 0h1m3 0h2m6 0h1m5 0h3m28 0h1m15 0h1m8 0h2m9 0h1m11 0h1m1 0h1m9 0h2m1 0h1m3 0h1m1 0h1m22 0h1m1 0h1m2 0h1m5 0h2m6 0h1m1 0h1m10 0h2m7 0h1m1 0h1m1 0h1m2 0h4m2 0h1m7 0h1m1 0h1m3 0h1m2 0h1m1 0h2m1 0h1m3 0h3m-986 7h1m1 0h1m3 0h4m5 0h1m2 0h1m2 0h2m1 0h3m3 0h1m1 0h2m5 0h1m4 0h1m2 0h1m4 0h1m4 0h1m9 0h1m5 0h1m1 0h2m3 0h1m6 0h1m6 0h1m13 0h1m16 0h1m4 0h1m12 0h1m3 0h1m9 0h1m8 0h1m6 0h1m27 0h1m13 0h1m6 0h1m1 0h1m3 0h1m3 0h1m21 0h1m2 0h1m8 0h1m15 0h3m7 0h1m2 0h1m15 0h1m3 0h2m7 0h2m3 0h1m6 0h1m1 0h1m7 0h1m2 0h1m33 0h1m8 0h1m2 0h1m3 0h1m13 0h1m11 0h1m5 0h1m30 0h1m7 0h1m15 0h1m10 0h1m11 0h1m1 0h1m3 0h1m7 0h1m7 0h2m7 0h1m10 0h1m11 0h1m3 0h1m1 0h1m12 0h1m10 0h2m5 0h1m20 0h1m1 0h1m11 0h1m19 0h1m37 0h1m1 0h1m1 0h1m6 0h1m4 0h1m2 0h1m4 0h2m8 0h1m6 0h1m19 0h1m7 0h1m12 0h1m6 0h1m6 0h1m1 0h1m53 0h1m1 0h1m1 0h1m6 0h1m3 0h2m5 0h1m7 0h2m4 0h1m7 0h1m7 0h1m3 0h1m1 0h1m6 0h1m1 0h2m1 0h1m3 0h1m4 0h3m3 0h1m12 0h2m2 0h1m5 0h3m1 0h3m1 0h2m4 0h1m1 0h1m1 0h1m1 0h1m4 0h1m4 0h1m1 0h1m-985 7h1m1 0h1m4 0h1m2 0h1m1 0h1m2 0h1m1 0h1m2 0h1m5 0h1m4 0h1m11 0h1m3 0h1m3 0h2m33 0h1m8 0h1m5 0h1m1 0h1m6 0h1m1 0h1m11 0h1m25 0h1m6 0h1m9 0h1m7 0h1m33 0h1m11 0h1m11 0h1m9 0h1m4 0h1m3 0h1m30 0h1m81 0h1m34 0h1m11 0h1m28 0h1m31 0h1m5 0h1m21 0h1m35 0h1m15 0h1m53 0h1m7 0h1m15 0h1m10 0h1m29 0h1m1 0h1m10 0h1m6 0h2m17 0h1m6 0h1m6 0h2m34 0h1m27 0h1m19 0h1m19 0h1m5 0h1m3 0h1m3 0h1m6 0h1m10 0h1m14 0h1m3 0h1m8 0h2m5 0h1m6 0h2m3 0h1m7 0h1m5 0h1m1 0h1m6 0h1m3 0h4m2 0h4m4 0h1m3 0h1m3 0h1m2 0h1m3 0h1m12 0h1m1 0h2m-977 7h1m1 0h1m3 0h1m5 0h2m9 0h2m1 0h1m10 0h1m8 0h1m35 0h1m23 0h1m4 0h1m8 0h1m11 0h1m30 0h1m32 0h1m3 0h1m4 0h1m12 0h1m11 0h1m15 0h1m44 0h1m14 0h1m38 0h1m32 0h1m1 0h1m38 0h1m8 0h1m66 0h1m54 0h1m2 0h1m25 0h3m21 0h1m6 0h1m26 0h1m43 0h1m3 0h1m20 0h1m11 0h1m38 0h1m8 0h1m29 0h1m1 0h1m1 0h1m20 0h1m17 0h1m9 0h1m12 0h1m12 0h2m1 0h1m1 0h1m11 0h1m3 0h1m6 0h1m12 0h1m6 0h1m1 0h1m3 0h2m1 0h1m1 0h1m2 0h1m1 0h1m5 0h1m5 0h1m1 0h2m8 0h1m3 0h1m4 0h1m1 0h1m1 0h2m1 0h1m-985 7h1m2 0h1m1 0h1m1 0h1m2 0h1m1 0h1m1 0h2m2 0h1m3 0h1m1 0h1m1 0h1m19 0h2m5 0h1m22 0h1m18 0h1m8 0h1m40 0h1m9 0h1m42 0h1m11 0h1m11 0h1m1 0h1m50 0h1m3 0h1m28 0h1m1 0h1m2 0h1m35 0h1m36 0h1m12 0h1m2 0h1m4 0h1m49 0h1m4 0h1m35 0h1m1 0h1m125 0h1m2 0h1m3 0h1m29 0h1m5 0h1m3 0h1m4 0h1m7 0h1m5 0h2m22 0h1m23 0h1m30 0h1m3 0h1m4 0h1m1 0h1m7 0h1m34 0h1m10 0h1m20 0h2m8 0h1m15 0h1m20 0h1m2 0h1m6 0h2m6 0h1m1 0h1m12 0h1m10 0h1m6 0h1m8 0h2m4 0h3m6 0h3m1 0h2"/><path stroke="#bdd357" stroke-width="1" d="M1 237.5h1m5 0h1m5 0h2m1 0h5m1 0h1m6 0h1m6 0h1m5 0h1m4 0h1m16 0h1m9 0h1m3 0h1m27 0h1m13 0h1m3 0h1m41 0h1m92 0h1m24 0h1m8 0h1m24 0h2m34 0h1m22 0h1m24 0h1m21 0h1m3 0h1m11 0h1m16 0h1m3 0h1m37 0h1m28 0h1m32 0h1m21 0h1m34 0h1m36 0h1m47 0h2m1 0h1m6 0h1m22 0h1m2 0h1m12 0h1m19 0h1m12 0h1m13 0h1m9 0h2m8 0h1m2 0h1m1 0h2m1 0h1m20 0h1m9 0h1m5 0h1m2 0h1m4 0h1m5 0h1m7 0h1m18 0h1m4 0h1m2 0h1m1 0h2m1 0h1m9 0h2m9 0h1m2 0h2m2 0h1m5 0h1m4 0h1m3 0h1m3 0h1m3 0h1m9 0h1m1 0h1m2 0h2"/><path stroke="#ccdd42" stroke-width="5" d="M0 2.5h1m2 0h1m7 0h1m4 0h1m2 0h1m8 0h1m6 0h1m1 0h2m3 0h1m6 0h3m2 0h1m2 0h1m1 0h1m2 0h1m4 0h1m3 0h1m1 0h1m1 0h2m1 0h1m1 0h2m12 0h1m2 0h1m3 0h2m1 0h1m3 0h1m1 0h5m3 0h1m2 0h3m7 0h3m2 0h1m10 0h1m1 0h1m3 0h1m2 0h1m2 0h1m1 0h1m3 0h2m1 0h2m2 0h3m1 0h2m2 0h1m5 0h1m4 0h1m1 0h1m3 0h1m4 0h1m7 0h4m1 0h1m2 0h1m1 0h1m3 0h2m5 0h1m7 0h1m11 0h3m5 0h1m2 0h3m2 0h3m4 0h1m5 0h3m1 0h1m4 0h1m2 0h1m11 0h1m11 0h1m1 0h1m1 0h1m3 0h2m2 0h1m1 0h1m2 0h1m1 0h1m5 0h3m1 0h2m1 0h1m4 0h1m2 0h2m2 0h1m2 0h1m10 0h1m1 0h1m2 0h1m7 0h1m1 0h1m5 0h1m7 0h1m7 0h1m6 0h2m2 0h1m8 0h1m3 0h1m5 0h1m6 0h1m1 0h1m1 0h1m4 0h1m5 0h1m2 0h3m1 0h1m1 0h1m1 0h1m1 0h1m5 0h1m1 0h1m1 0h1m5 0h2m14 0h1m1 0h1m2 0h1m1 0h1m4 0h1m2 0h1m10 0h1m3 0h1m2 0h1m4 0h3m3 0h1m1 0h1m9 0h1m9 0h1m1 0h1m1 0h1m3 0h2m6 0h1m1 0h3m3 0h1m2 0h2m1 0h1m1 0h1m3 0h1m1 0h3m1 0h2m1 0h2m3 0h1m2 0h3m11 0h1m2 0h1m2 0h2m1 0h2m9 0h2m6 0h3m3 0h2m2 0h2m6 0h2m5 0h2m1 0h2m5 0h3m5 0h1m4 0h1m3 0h1m1 0h3m5 0h1m5 0h1m1 0h1m1 0h1m2 0h1m1 0h1m2 0h2m3 0h1m4 0h1m1 0h3m1 0h1m7 0h1m1 0h1m3 0h2m3 0h1m14 0h1m1 0h1m1 0h1m1 0h1m8 0h1m1 0h4m10 0h1m2 0h1m3 0h3m1 0h2m2 0h1m2 0h1m1 0h1m2 0h3m10 0h1m4 0h1m1 0h1m1 0h1m3 0h1m1 0h2m3 0h2m2 0h1m3 0h1m8 0h2m1 0h1m2 0h1m1 0h2m1 0h1m1 0h1m1 0h1m1 0h1m4 0h1m7 0h5m4 0h2m4 0h1m2 0h1m1 0h1m8 0h1m3 0h2m3 0h1m1 0h1m10 0h1"/><path stroke="#ccdd42" stroke-width="6" d="M14 8h1m15 0h1m2 0h1m3 0h1m15 0h1m8 0h1m2 0h1m2 0h1m5 0h1m5 0h2m1 0h1m8 0h1m1 0h5m1 0h1m3 0h1m12 0h3m2 0h1m1 0h3m2 0h1m8 0h1m3 0h1m1 0h1m2 0h1m1 0h1m4 0h1m4 0h1m3 0h1m5 0h1m4 0h1m1 0h1m1 0h1m1 0h1m3 0h1m18 0h1m1 0h1m3 0h1m2 0h1m1 0h2m3 0h1m4 0h2m2 0h1m1 0h2m1 0h3m1 0h1m5 0h1m1 0h3m1 0h1m4 0h1m1 0h2m1 0h3m4 0h2m1 0h3m3 0h1m4 0h2m5 0h2m12 0h1m1 0h2m2 0h1m2 0h2m2 0h1m5 0h2m3 0h1m1 0h1m1 0h2m3 0h1m1 0h2m1 0h1m1 0h2m1 0h3m1 0h2m4 0h1m2 0h1m1 0h2m2 0h5m5 0h1m5 0h1m7 0h1m1 0h1m2 0h1m1 0h1m2 0h1m1 0h1m1 0h4m2 0h1m2 0h2m1 0h1m1 0h1m1 0h1m8 0h1m4 0h2m1 0h1m4 0h1m2 0h1m4 0h1m1 0h1m1 0h2m3 0h4m4 0h5m1 0h1m1 0h1m3 0h1m1 0h2m1 0h1m4 0h1m1 0h1m1 0h4m4 0h1m3 0h1m1 0h1m3 0h3m2 0h2m4 0h1m4 0h1m3 0h1m1 0h1m5 0h1m3 0h1m3 0h1m1 0h1m10 0h2m1 0h1m1 0h2m2 0h4m3 0h1m6 0h1m1 0h2m2 0h1m1 0h1m4 0h2m1 0h2m2 0h1m1 0h1m3 0h1m2 0h1m3 0h1m4 0h2m8 0h1m1 0h1m2 0h2m5 0h3m1 0h2m1 0h5m1 0h2m3 0h2m3 0h1m7 0h2m2 0h1m3 0h1m1 0h1m1 0h1m1 0h1m10 0h2m4 0h1m5 0h5m4 0h1m1 0h1m3 0h1m6 0h1m1 0h3m1 0h1m1 0h1m1 0h1m3 0h1m2 0h1m9 0h2m1 0h1m5 0h2m1 0h1m6 0h1m5 0h1m3 0h3m1 0h2m5 0h1m1 0h1m2 0h1m4 0h1m1 0h3m2 0h1m3 0h5m2 0h1m3 0h1m9 0h1m2 0h1m2 0h1m2 0h2m2 0h3m3 0h2m3 0h1m1 0h1m3 0h1m5 0h4m1 0h1m1 0h1m7 0h3m1 0h1m2 0h1m3 0h1m1 0h1m10 0h2m3 0h1m2 0h1m3 0h1m2 0h1m2 0h1m1 0h1m2 0h1m2 0h1m1 0h1m6 0h1m16 0h1m7 0h1m1 0h2m6 0h2m-976 48h2m14 0h3m2 0h1m5 0h1m1 0h1m1 0h1m2 0h1m6 0h1m4 0h1m8 0h1m9 0h2m4 0h2m1 0h2m1 0h1m2 0h2m2 0h1m3 0h1m6 0h1m3 0h3m13 0h3m1 0h1m2 0h1m2 0h4m1 0h1m4 0h1m9 0h5m8 0h2m1 0h1m1 0h1m2 0h2m10 0h1m2 0h1m8 0h4m4 0h1m1 0h1m1 0h1m3 0h1m1 0h1m4 0h1m3 0h1m1 0h2m1 0h1m3 0h1m5 0h1m1 0h2m6 0h1m2 0h2m1 0h1m2 0h2m1 0h1m2 0h1m9 0h2m4 0h1m4 0h1m5 0h1m9 0h1m1 0h1m1 0h1m3 0h1m1 0h3m1 0h1m2 0h2m4 0h1m6 0h2m2 0h2m2 0h1m1 0h3m1 0h2m3 0h1m2 0h1m1 0h1m2 0h1m2 0h1m7 0h3m2 0h1m1 0h2m1 0h1m5 0h1m5 0h1m1 0h1m3 0h1m2 0h1m2 0h1m2 0h2m4 0h1m1 0h5m2 0h1m1 0h1m1 0h1m4 0h1m1 0h1m4 0h1m1 0h1m4 0h1m4 0h1m4 0h1m2 0h1m2 0h3m3 0h1m1 0h1m1 0h1m2 0h1m6 0h3m5 0h6m7 0h1m1 0h2m2 0h3m1 0h1m2 0h1m5 0h1m7 0h1m4 0h1m2 0h4m5 0h1m2 0h1m3 0h1m8 0h3m1 0h1m2 0h2m1 0h2m7 0h1m1 0h1m5 0h1m4 0h2m1 0h3m2 0h1m9 0h1m1 0h2m1 0h1m1 0h1m6 0h2m2 0h3m3 0h1m1 0h1m4 0h2m1 0h1m1 0h1m1 0h3m3 0h2m5 0h1m5 0h1m1 0h2m1 0h1m1 0h1m7 0h1m3 0h2m4 0h2m4 0h1m3 0h1m1 0h2m3 0h1m2 0h2m2 0h1m1 0h1m2 0h1m2 0h1m2 0h1m3 0h1m2 0h2m5 0h2m1 0h1m2 0h1m4 0h1m2 0h1m1 0h1m1 0h4m3 0h1m6 0h1m3 0h1m4 0h1m11 0h1m2 0h1m2 0h3m5 0h1m2 0h3m2 0h2m6 0h2m5 0h2m3 0h1m1 0h1m8 0h5m5 0h1m6 0h1m4 0h2m10 0h1m2 0h2m3 0h2m7 0h1m2 0h1m1 0h1m6 0h1m1 0h1m2 0h1m3 0h1m15 0h2m18 0h1m8 0h2m8 0h1m3 0h1m-980 41h1m2 0h1m4 0h1m11 0h1m2 0h1m2 0h1m6 0h3m9 0h2m4 0h1m1 0h1m1 0h1m5 0h1m1 0h1m1 0h3m2 0h2m1 0h2m3 0h2m2 0h1m1 0h1m3 0h1m3 0h2m3 0h1m3 0h2m1 0h3m1 0h2m7 0h1m3 0h2m4 0h1m5 0h1m3 0h1m1 0h1m1 0h2m2 0h4m4 0h1m5 0h1m1 0h1m3 0h1m2 0h1m6 0h1m2 0h1m4 0h1m18 0h1m2 0h1m3 0h1m6 0h2m4 0h2m3 0h1m2 0h3m1 0h1m3 0h2m1 0h1m12 0h1m2 0h2m4 0h2m3 0h2m9 0h2m1 0h1m6 0h1m11 0h2m1 0h1m1 0h1m2 0h2m2 0h1m1 0h1m3 0h2m1 0h1m2 0h2m2 0h1m3 0h1m1 0h1m3 0h4m8 0h2m5 0h2m2 0h1m1 0h1m8 0h1m2 0h1m3 0h1m4 0h1m2 0h1m4 0h2m3 0h1m1 0h2m1 0h1m2 0h1m2 0h1m2 0h1m2 0h1m1 0h1m3 0h2m1 0h1m3 0h1m2 0h1m1 0h1m5 0h1m4 0h1m2 0h1m1 0h2m3 0h2m1 0h1m2 0h2m2 0h1m5 0h1m1 0h2m1 0h1m8 0h1m9 0h1m2 0h2m4 0h2m1 0h3m1 0h1m1 0h1m1 0h1m3 0h1m9 0h1m5 0h1m5 0h1m1 0h1m4 0h2m2 0h2m2 0h1m1 0h2m5 0h1m7 0h2m6 0h5m4 0h1m3 0h1m6 0h2m3 0h1m1 0h1m1 0h2m1 0h1m1 0h1m1 0h1m3 0h1m6 0h1m1 0h2m2 0h3m1 0h2m1 0h1m11 0h2m3 0h2m7 0h2m8 0h1m2 0h1m8 0h1m1 0h1m8 0h1m1 0h4m3 0h1m4 0h1m1 0h1m3 0h1m1 0h2m5 0h2m2 0h3m1 0h2m2 0h1m1 0h1m1 0h2m2 0h1m2 0h2m7 0h1m1 0h3m6 0h3m1 0h1m1 0h1m8 0h1m2 0h1m2 0h1m8 0h1m4 0h1m3 0h1m1 0h2m1 0h1m3 0h3m5 0h1m2 0h2m9 0h1m2 0h1m2 0h2m2 0h2m1 0h1m3 0h1m1 0h1m4 0h2m4 0h2m1 0h1m1 0h1m2 0h1m2 0h2m2 0h1m6 0h3m1 0h1m1 0h3m3 0h2m6 0h1m1 0h1m1 0h3m1 0h2m8 0h1m8 0h1m4 0h1m4 0h3m5 0h1m1 0h2m7 0h1m1 0h1m7 0h1m2 0h1m-986 48h1m5 0h1m3 0h2m1 0h4m2 0h1m3 0h4m5 0h1m6 0h1m2 0h3m3 0h2m6 0h1m1 0h3m1 0h1m5 0h2m3 0h3m9 0h1m4 0h1m8 0h1m4 0h1m2 0h3m4 0h1m4 0h1m2 0h1m1 0h1m6 0h1m3 0h1m1 0h1m5 0h1m2 0h1m4 0h1m2 0h2m1 0h2m3 0h1m3 0h2m6 0h1m1 0h1m5 0h1m6 0h1m13 0h1m7 0h1m3 0h2m1 0h1m3 0h1m1 0h1m2 0h1m1 0h2m1 0h1m3 0h1m2 0h1m3 0h4m1 0h1m2 0h1m1 0h1m1 0h2m3 0h3m4 0h1m2 0h1m4 0h2m1 0h1m1 0h1m3 0h1m5 0h2m1 0h2m17 0h2m3 0h3m2 0h1m2 0h1m1 0h1m1 0h1m8 0h1m3 0h1m6 0h1m5 0h1m11 0h2m5 0h5m4 0h1m2 0h1m5 0h1m4 0h1m5 0h1m6 0h1m5 0h2m10 0h1m11 0h1m1 0h1m4 0h1m1 0h3m2 0h3m7 0h1m1 0h1m4 0h1m1 0h1m1 0h2m3 0h1m1 0h1m8 0h1m2 0h1m2 0h1m3 0h1m1 0h1m4 0h1m5 0h1m5 0h2m5 0h2m2 0h1m6 0h1m1 0h2m1 0h2m12 0h1m3 0h2m3 0h1m5 0h1m2 0h1m3 0h1m3 0h1m2 0h1m1 0h1m2 0h1m1 0h1m1 0h1m1 0h1m1 0h3m4 0h2m6 0h2m2 0h1m4 0h2m1 0h2m8 0h1m1 0h2m3 0h3m7 0h1m9 0h1m3 0h1m5 0h2m5 0h1m4 0h1m1 0h2m1 0h1m3 0h3m5 0h8m8 0h1m1 0h2m3 0h2m6 0h2m1 0h2m6 0h1m3 0h2m6 0h1m3 0h1m5 0h2m2 0h2m3 0h3m4 0h4m2 0h1m5 0h1m4 0h1m4 0h2m4 0h2m2 0h2m7 0h1m4 0h1m1 0h1m6 0h1m1 0h3m1 0h1m4 0h3m1 0h1m1 0h1m6 0h1m1 0h2m1 0h4m1 0h1m8 0h1m3 0h6m4 0h1m1 0h1m1 0h1m3 0h2m3 0h1m1 0h3m2 0h2m1 0h1m4 0h2m3 0h2m3 0h1m8 0h1m16 0h2m1 0h1m4 0h1m2 0h2m13 0h2m-986 48h1m2 0h1m2 0h3m2 0h6m1 0h2m2 0h1m12 0h1m2 0h1m1 0h4m4 0h1m2 0h1m2 0h1m3 0h1m13 0h3m2 0h2m1 0h2m4 0h2m5 0h1m12 0h1m5 0h1m3 0h1m1 0h1m2 0h1m2 0h1m7 0h2m11 0h1m11 0h1m4 0h2m9 0h2m2 0h1m2 0h1m1 0h2m5 0h1m2 0h2m9 0h1m11 0h2m15 0h1m5 0h1m2 0h1m1 0h1m11 0h1m1 0h1m3 0h1m1 0h1m5 0h1m5 0h1m1 0h1m4 0h1m1 0h2m19 0h1m1 0h1m5 0h1m4 0h2m4 0h2m12 0h2m3 0h1m1 0h1m6 0h1m2 0h1m6 0h1m1 0h1m5 0h1m2 0h2m2 0h1m2 0h1m2 0h1m2 0h1m2 0h2m10 0h2m1 0h1m3 0h1m1 0h2m4 0h1m9 0h1m2 0h1m5 0h1m4 0h1m6 0h1m9 0h2m4 0h1m5 0h2m4 0h1m2 0h3m1 0h1m1 0h1m8 0h2m3 0h2m10 0h1m14 0h1m10 0h1m3 0h3m1 0h1m17 0h1m6 0h2m2 0h2m1 0h1m3 0h1m4 0h1m10 0h1m1 0h1m2 0h1m1 0h1m17 0h1m7 0h1m1 0h1m17 0h1m11 0h1m8 0h1m16 0h1m10 0h1m5 0h1m6 0h1m19 0h1m8 0h1m7 0h1m5 0h1m1 0h1m3 0h1m3 0h1m1 0h2m2 0h1m2 0h1m10 0h1m1 0h1m2 0h1m1 0h1m9 0h1m4 0h1m2 0h1m2 0h1m1 0h1m5 0h2m2 0h1m1 0h1m17 0h1m5 0h1m1 0h1m4 0h1m2 0h1m1 0h1m1 0h1m1 0h2m2 0h2m1 0h1m3 0h3m1 0h2m4 0h1m3 0h2m2 0h1m1 0h1m1 0h1m6 0h2m5 0h2m2 0h2m1 0h1m5 0h1m2 0h1m1 0h1m4 0h1m1 0h1m6 0h1m6 0h2m2 0h1m4 0h1m2 0h1m6 0h1m1 0h1m8 0h1m2 0h1m-985 41h1m7 0h3m4 0h1m2 0h2m2 0h1m1 0h2m2 0h1m1 0h2m3 0h2m1 0h1m5 0h3m4 0h2m4 0h2m7 0h3m1 0h2m3 0h1m1 0h2m3 0h2m2 0h2m2 0h1m1 0h1m1 0h2m4 0h1m5 0h2m3 0h5m20 0h1m10 0h1m11 0h1m2 0h1m2 0h1m1 0h1m3 0h1m1 0h1m2 0h1m3 0h2m4 0h1m2 0h1m14 0h1m6 0h1m3 0h2m5 0h2m1 0h2m1 0h1m4 0h2m1 0h2m4 0h1m2 0h1m10 0h1m1 0h2m2 0h1m17 0h1m6 0h1m1 0h2m1 0h1m3 0h1m1 0h1m10 0h2m3 0h1m3 0h2m3 0h1m2 0h1m5 0h1m1 0h1m1 0h2m3 0h1m3 0h1m7 0h1m1 0h1m2 0h1m8 0h1m1 0h1m2 0h2m2 0h1m2 0h1m13 0h1m1 0h3m7 0h2m2 0h1m2 0h1m3 0h1m1 0h3m7 0h1m4 0h2m14 0h1m3 0h2m19 0h2m3 0h1m2 0h2m1 0h1m3 0h1m7 0h1m1 0h1m2 0h2m4 0h1m12 0h3m4 0h1m1 0h1m5 0h3m7 0h1m4 0h1m6 0h1m6 0h1m2 0h1m14 0h2m3 0h1m2 0h1m5 0h1m9 0h1m4 0h1m1 0h1m1 0h2m13 0h1m8 0h2m3 0h2m6 0h1m1 0h1m2 0h1m4 0h1m4 0h1m18 0h1m1 0h1m2 0h2m1 0h1m1 0h1m3 0h1m2 0h1m3 0h2m2 0h1m1 0h1m6 0h2m1 0h1m9 0h1m2 0h1m5 0h1m6 0h1m8 0h1m3 0h1m3 0h1m1 0h1m2 0h2m2 0h2m1 0h1m1 0h3m1 0h1m1 0h1m1 0h3m5 0h1m4 0h1m1 0h2m1 0h1m1 0h1m12 0h1m9 0h1m1 0h2m2 0h2m2 0h2m4 0h1m5 0h1m4 0h3m1 0h1m3 0h2m2 0h1m8 0h1m3 0h1m3 0h1m8 0h1m7 0h1m4 0h2m1 0h2m3 0h1m2 0h1m1 0h1m4 0h1m1 0h1m2 0h1m2 0h1m1 0h1m1 0h1m5 0h2m5 0h1m1 0h1m7 0h2m2 0h1m2 0h2m2 0h1m1 0h1m2 0h3m1 0h2"/><path stroke="#ccdd42" stroke-width="7" d="M0 14.5h1m3 0h1m2 0h1m3 0h1m1 0h3m4 0h1m3 0h3m2 0h1m5 0h1m3 0h1m7 0h1m1 0h1m1 0h1m3 0h5m1 0h1m10 0h1m2 0h1m4 0h1m3 0h2m1 0h2m2 0h1m6 0h1m5 0h2m2 0h1m3 0h1m1 0h2m1 0h1m7 0h1m4 0h1m9 0h1m2 0h2m6 0h1m1 0h1m1 0h6m3 0h1m2 0h2m3 0h3m6 0h1m3 0h1m2 0h2m2 0h1m4 0h1m2 0h1m1 0h1m6 0h1m4 0h2m5 0h2m1 0h1m2 0h1m2 0h1m14 0h2m1 0h1m3 0h1m2 0h1m1 0h1m2 0h1m8 0h2m2 0h1m2 0h1m1 0h1m2 0h1m1 0h1m5 0h1m1 0h1m11 0h1m2 0h1m1 0h2m1 0h2m2 0h1m3 0h1m4 0h1m4 0h1m17 0h1m1 0h1m4 0h1m4 0h4m1 0h2m2 0h2m2 0h2m4 0h1m3 0h1m3 0h1m5 0h1m1 0h1m2 0h2m1 0h1m3 0h1m2 0h1m3 0h2m14 0h1m2 0h1m4 0h1m4 0h2m2 0h1m6 0h1m1 0h1m1 0h1m13 0h1m2 0h1m1 0h1m6 0h1m5 0h2m2 0h1m14 0h2m4 0h3m12 0h2m3 0h1m3 0h1m6 0h1m3 0h2m3 0h1m10 0h1m4 0h2m3 0h2m2 0h1m3 0h1m1 0h1m1 0h1m6 0h1m1 0h1m1 0h2m7 0h1m1 0h1m2 0h1m4 0h2m1 0h1m3 0h2m7 0h1m8 0h2m3 0h1m2 0h2m2 0h2m2 0h1m6 0h1m6 0h3m4 0h1m3 0h1m6 0h1m1 0h1m6 0h2m4 0h1m1 0h1m5 0h2m1 0h3m1 0h1m2 0h1m3 0h1m1 0h1m3 0h1m3 0h1m1 0h1m1 0h1m3 0h1m4 0h3m1 0h1m4 0h2m1 0h3m1 0h1m3 0h1m2 0h2m2 0h3m7 0h2m3 0h1m1 0h1m5 0h2m1 0h1m1 0h1m2 0h1m4 0h2m1 0h1m1 0h1m2 0h1m4 0h2m2 0h4m8 0h2m1 0h2m5 0h1m1 0h1m3 0h2m2 0h1m3 0h1m2 0h4m7 0h2m4 0h1m1 0h1m4 0h3m2 0h1m1 0h1m1 0h1m2 0h1m3 0h1m1 0h1m4 0h1m1 0h3m2 0h1m2 0h1m5 0h1m1 0h1m2 0h1m6 0h1m1 0h1m2 0h1m4 0h1m9 0h1m4 0h2m10 0h1m-967 7h2m5 0h1m3 0h2m4 0h2m4 0h1m1 0h1m2 0h1m1 0h2m6 0h2m2 0h1m2 0h4m2 0h1m1 0h2m1 0h1m5 0h1m2 0h1m4 0h1m6 0h3m2 0h1m4 0h1m3 0h1m1 0h1m3 0h1m6 0h1m2 0h2m10 0h1m4 0h2m3 0h1m3 0h1m2 0h1m3 0h1m1 0h1m2 0h3m3 0h2m1 0h2m3 0h1m2 0h1m1 0h2m5 0h2m4 0h1m1 0h2m3 0h1m2 0h4m9 0h1m2 0h1m1 0h2m1 0h2m1 0h1m3 0h1m3 0h1m1 0h2m3 0h1m2 0h1m2 0h1m2 0h2m2 0h1m4 0h2m2 0h1m1 0h2m2 0h3m4 0h1m1 0h1m2 0h1m3 0h1m3 0h1m3 0h2m10 0h1m3 0h3m4 0h1m5 0h1m1 0h1m5 0h1m1 0h1m6 0h1m3 0h3m3 0h3m1 0h2m2 0h3m2 0h3m2 0h3m1 0h2m2 0h1m2 0h1m1 0h2m4 0h1m1 0h1m1 0h2m5 0h1m1 0h2m5 0h1m1 0h1m5 0h2m1 0h2m1 0h1m2 0h2m6 0h1m4 0h1m2 0h2m1 0h1m3 0h2m3 0h1m6 0h1m1 0h1m3 0h2m1 0h1m3 0h2m3 0h1m6 0h1m1 0h1m5 0h4m3 0h1m3 0h4m4 0h4m2 0h1m4 0h1m2 0h1m2 0h3m1 0h3m11 0h1m5 0h3m3 0h1m1 0h2m2 0h2m1 0h1m1 0h1m2 0h1m3 0h1m5 0h3m8 0h1m1 0h1m10 0h2m4 0h1m1 0h1m1 0h1m2 0h1m1 0h2m6 0h2m3 0h2m1 0h1m3 0h1m7 0h3m3 0h1m4 0h1m1 0h1m1 0h1m3 0h1m2 0h1m2 0h1m13 0h1m3 0h1m1 0h1m2 0h5m3 0h2m6 0h1m4 0h2m1 0h1m1 0h1m2 0h4m2 0h3m1 0h2m3 0h1m5 0h3m1 0h1m1 0h1m8 0h1m6 0h1m1 0h1m1 0h2m2 0h1m3 0h1m1 0h1m2 0h1m1 0h2m3 0h1m3 0h2m13 0h1m3 0h1m1 0h1m5 0h1m3 0h1m1 0h1m2 0h1m3 0h1m4 0h1m2 0h1m4 0h1m3 0h2m5 0h1m5 0h1m4 0h1m2 0h2m8 0h1m2 0h1m2 0h2m2 0h1m6 0h2m2 0h2m2 0h1m2 0h1m1 0h1m2 0h3m4 0h1m1 0h2m3 0h1m3 0h1m1 0h1m3 0h1m7 0h1m4 0h1m21 0h1m9 0h1m-982 7h1m2 0h1m4 0h1m11 0h3m9 0h1m4 0h1m2 0h3m2 0h1m3 0h1m4 0h1m3 0h1m2 0h1m1 0h2m2 0h1m1 0h2m2 0h3m1 0h1m5 0h1m3 0h3m2 0h1m4 0h1m2 0h1m1 0h1m5 0h2m1 0h1m1 0h1m5 0h4m1 0h1m3 0h1m3 0h1m3 0h2m1 0h2m2 0h1m5 0h1m1 0h1m4 0h1m8 0h1m3 0h1m2 0h1m1 0h1m2 0h1m1 0h3m5 0h1m8 0h3m3 0h2m2 0h1m4 0h1m1 0h1m1 0h1m5 0h1m2 0h1m1 0h2m4 0h1m2 0h1m6 0h2m1 0h2m1 0h4m3 0h1m1 0h1m5 0h3m1 0h2m6 0h1m2 0h2m7 0h2m11 0h2m7 0h1m3 0h1m1 0h1m4 0h1m3 0h2m4 0h1m3 0h2m5 0h2m1 0h1m3 0h1m7 0h1m3 0h1m2 0h1m1 0h1m3 0h1m3 0h3m5 0h1m1 0h2m11 0h1m2 0h2m8 0h1m1 0h2m3 0h1m1 0h1m8 0h1m1 0h2m5 0h1m1 0h1m5 0h1m1 0h1m1 0h1m1 0h1m2 0h1m5 0h2m1 0h1m1 0h1m2 0h1m8 0h1m5 0h2m1 0h1m1 0h1m1 0h1m1 0h1m3 0h2m1 0h1m6 0h1m3 0h3m3 0h1m1 0h1m2 0h1m6 0h1m1 0h2m1 0h1m2 0h1m5 0h1m6 0h1m9 0h1m2 0h1m1 0h3m3 0h1m3 0h2m2 0h1m1 0h1m6 0h2m2 0h1m1 0h1m2 0h2m2 0h1m3 0h4m2 0h1m5 0h1m3 0h2m14 0h1m4 0h1m1 0h4m1 0h4m4 0h2m2 0h1m1 0h2m1 0h1m5 0h1m5 0h1m2 0h1m5 0h1m1 0h1m1 0h2m4 0h1m4 0h1m1 0h1m4 0h1m1 0h5m1 0h1m1 0h1m1 0h1m2 0h1m1 0h1m1 0h2m3 0h2m3 0h1m6 0h3m3 0h1m3 0h1m2 0h1m3 0h1m3 0h2m1 0h2m2 0h2m1 0h2m2 0h1m1 0h3m2 0h1m5 0h1m1 0h1m1 0h1m4 0h1m6 0h2m1 0h3m2 0h1m8 0h1m5 0h1m1 0h1m8 0h2m2 0h2m1 0h2m1 0h2m1 0h1m3 0h1m4 0h1m4 0h3m2 0h2m4 0h1m1 0h1m2 0h2m2 0h2m3 0h1m4 0h3m3 0h2m3 0h1m2 0h4m1 0h1m3 0h1m2 0h1m4 0h2m15 0h1m13 0h1m8 0h1m6 0h1m5 0h1m-980 7h1m8 0h1m5 0h1m4 0h1m2 0h3m11 0h1m2 0h1m2 0h1m6 0h1m1 0h2m1 0h1m2 0h1m2 0h1m2 0h1m2 0h1m3 0h1m3 0h1m1 0h3m1 0h1m2 0h2m2 0h1m2 0h1m6 0h1m2 0h1m2 0h2m2 0h1m3 0h2m2 0h1m1 0h1m8 0h1m11 0h1m3 0h1m1 0h1m1 0h2m9 0h2m3 0h1m3 0h1m4 0h1m3 0h2m2 0h1m1 0h1m2 0h1m1 0h1m5 0h1m5 0h1m3 0h1m2 0h1m4 0h1m1 0h5m4 0h1m2 0h1m1 0h1m4 0h2m1 0h2m4 0h2m2 0h1m4 0h3m1 0h1m2 0h2m1 0h2m3 0h1m9 0h2m1 0h1m3 0h2m1 0h1m14 0h2m2 0h1m5 0h1m3 0h1m2 0h1m9 0h2m3 0h1m3 0h1m4 0h1m1 0h2m2 0h3m2 0h2m1 0h1m8 0h2m4 0h2m1 0h1m9 0h1m2 0h1m2 0h2m3 0h1m10 0h1m1 0h1m3 0h1m2 0h1m5 0h1m2 0h1m4 0h1m1 0h2m3 0h1m1 0h2m1 0h1m2 0h3m2 0h1m3 0h1m6 0h1m3 0h1m1 0h2m4 0h1m2 0h1m4 0h3m4 0h1m2 0h3m1 0h1m3 0h1m4 0h1m2 0h2m3 0h2m1 0h1m6 0h1m2 0h2m1 0h1m1 0h1m2 0h2m4 0h1m4 0h1m3 0h1m2 0h1m2 0h3m6 0h1m1 0h1m1 0h1m2 0h1m3 0h2m1 0h3m1 0h2m2 0h1m3 0h3m1 0h1m1 0h1m4 0h1m1 0h1m3 0h1m2 0h1m2 0h4m3 0h1m3 0h1m2 0h1m5 0h1m4 0h2m1 0h1m8 0h1m1 0h1m3 0h1m2 0h1m1 0h1m1 0h1m2 0h1m3 0h1m2 0h1m1 0h2m2 0h1m1 0h1m1 0h1m1 0h4m4 0h1m1 0h1m3 0h2m1 0h3m1 0h1m2 0h1m5 0h2m3 0h1m1 0h1m2 0h1m4 0h1m6 0h1m3 0h1m2 0h1m8 0h1m3 0h1m5 0h1m1 0h3m2 0h1m2 0h1m2 0h1m1 0h3m2 0h1m2 0h1m1 0h1m4 0h1m4 0h1m4 0h2m2 0h1m1 0h2m1 0h1m4 0h1m1 0h2m1 0h1m2 0h2m4 0h3m4 0h1m5 0h1m1 0h1m7 0h1m2 0h2m2 0h1m4 0h1m6 0h1m15 0h1m2 0h1m3 0h1m3 0h1m2 0h2m1 0h3m3 0h1m1 0h2m10 0h1m3 0h1m10 0h1m6 0h1m2 0h1m13 0h1m-959 7h2m5 0h1m1 0h1m3 0h1m1 0h1m3 0h1m8 0h2m3 0h1m4 0h1m2 0h1m2 0h1m3 0h1m1 0h1m1 0h3m2 0h2m7 0h1m1 0h1m12 0h1m3 0h1m1 0h2m1 0h1m5 0h2m4 0h1m3 0h2m1 0h1m2 0h1m1 0h1m5 0h2m2 0h2m13 0h1m3 0h1m1 0h1m3 0h2m1 0h1m2 0h1m2 0h1m2 0h1m1 0h1m4 0h3m1 0h1m3 0h1m3 0h1m2 0h1m4 0h1m1 0h3m6 0h2m1 0h2m1 0h2m3 0h1m4 0h1m2 0h1m1 0h1m2 0h2m2 0h2m1 0h1m1 0h1m3 0h1m7 0h1m1 0h2m2 0h1m1 0h3m1 0h1m1 0h1m1 0h1m1 0h2m1 0h1m4 0h4m5 0h3m13 0h2m4 0h2m3 0h1m6 0h1m10 0h1m2 0h1m2 0h2m3 0h1m5 0h1m2 0h1m2 0h1m2 0h1m3 0h1m2 0h1m1 0h1m2 0h2m1 0h4m3 0h2m7 0h1m2 0h1m3 0h2m2 0h2m3 0h1m6 0h1m1 0h1m3 0h2m2 0h3m3 0h1m1 0h2m16 0h1m2 0h1m2 0h2m3 0h3m1 0h3m3 0h1m2 0h1m1 0h1m1 0h1m4 0h4m2 0h3m5 0h1m8 0h1m3 0h2m2 0h1m1 0h1m2 0h3m1 0h2m2 0h1m1 0h1m2 0h1m4 0h2m1 0h1m5 0h1m1 0h2m4 0h1m4 0h1m1 0h1m2 0h1m1 0h1m3 0h2m1 0h2m1 0h1m2 0h2m1 0h2m2 0h1m5 0h2m3 0h1m1 0h2m6 0h3m3 0h2m1 0h1m2 0h1m1 0h1m5 0h1m2 0h1m5 0h1m2 0h1m1 0h1m3 0h1m3 0h1m2 0h1m1 0h3m4 0h1m1 0h2m6 0h1m1 0h1m11 0h1m1 0h1m1 0h1m6 0h1m1 0h1m3 0h1m2 0h1m1 0h2m1 0h3m4 0h1m4 0h5m5 0h2m3 0h2m2 0h1m2 0h1m1 0h3m5 0h1m3 0h1m1 0h2m3 0h1m2 0h1m1 0h1m1 0h1m1 0h2m8 0h1m2 0h1m1 0h1m5 0h2m7 0h1m1 0h2m2 0h1m3 0h1m3 0h2m1 0h1m5 0h1m2 0h2m2 0h1m2 0h1m3 0h2m2 0h1m2 0h3m5 0h1m2 0h1m3 0h1m2 0h1m3 0h1m4 0h2m2 0h1m5 0h1m1 0h2m2 0h3m8 0h1m3 0h1m2 0h3m4 0h1m1 0h2m1 0h3m5 0h2m1 0h2m14 0h1m2 0h1m11 0h2m9 0h1m2 0h1m1 0h2m2 0h1m-984 7h1m10 0h1m3 0h1m4 0h1m2 0h1m2 0h1m2 0h1m5 0h1m2 0h1m5 0h1m2 0h1m2 0h1m1 0h1m2 0h2m1 0h1m3 0h2m3 0h2m2 0h2m2 0h1m7 0h1m1 0h1m5 0h4m1 0h1m7 0h2m2 0h2m3 0h3m1 0h1m1 0h1m1 0h3m5 0h1m6 0h1m2 0h2m1 0h1m2 0h1m2 0h1m2 0h1m3 0h1m10 0h1m7 0h2m4 0h1m4 0h2m5 0h1m8 0h1m4 0h1m2 0h1m5 0h1m4 0h1m1 0h1m1 0h1m3 0h2m2 0h8m1 0h1m1 0h2m1 0h1m1 0h2m1 0h2m8 0h1m2 0h2m1 0h1m2 0h1m1 0h1m4 0h1m2 0h1m1 0h2m4 0h1m1 0h1m2 0h1m7 0h1m1 0h1m7 0h1m2 0h2m5 0h2m4 0h1m2 0h2m1 0h1m3 0h1m1 0h2m1 0h2m1 0h1m2 0h1m6 0h1m9 0h1m4 0h1m1 0h2m1 0h1m1 0h1m1 0h1m6 0h2m2 0h1m6 0h1m1 0h1m1 0h1m6 0h2m2 0h1m1 0h5m2 0h1m3 0h1m1 0h3m2 0h1m5 0h1m3 0h1m5 0h1m2 0h1m3 0h1m2 0h1m3 0h2m3 0h2m5 0h2m3 0h1m3 0h2m6 0h1m1 0h1m1 0h1m3 0h5m5 0h1m1 0h1m1 0h1m3 0h1m1 0h2m1 0h1m2 0h1m1 0h1m7 0h1m5 0h1m4 0h1m5 0h1m3 0h1m2 0h2m1 0h1m1 0h2m5 0h1m9 0h1m3 0h1m2 0h1m2 0h1m3 0h1m1 0h1m1 0h2m1 0h1m4 0h1m2 0h1m2 0h2m4 0h1m1 0h1m4 0h2m2 0h2m5 0h2m3 0h2m9 0h1m1 0h1m3 0h2m7 0h1m4 0h1m1 0h3m2 0h1m4 0h2m1 0h1m1 0h1m1 0h1m1 0h1m3 0h1m3 0h4m1 0h1m12 0h1m5 0h1m1 0h1m1 0h1m2 0h5m3 0h1m13 0h1m4 0h2m1 0h1m2 0h2m2 0h1m1 0h1m3 0h1m1 0h1m3 0h3m2 0h1m3 0h1m2 0h2m2 0h1m2 0h1m1 0h3m5 0h1m1 0h1m5 0h4m1 0h3m1 0h1m7 0h1m4 0h1m7 0h1m1 0h1m4 0h2m1 0h1m4 0h1m1 0h1m1 0h1m4 0h1m2 0h2m1 0h1m4 0h1m4 0h1m3 0h1m1 0h1m1 0h2m2 0h1m2 0h1m2 0h1m1 0h1m5 0h1m1 0h1m1 0h1m1 0h1m1 0h2m2 0h2m24 0h1m18 0h1m6 0h1m2 0h1m1 0h2m-980 13h1m4 0h1m3 0h1m1 0h1m24 0h2m7 0h1m3 0h1m3 0h1m1 0h4m3 0h2m4 0h1m3 0h1m3 0h1m2 0h1m5 0h1m5 0h1m4 0h1m4 0h1m7 0h2m1 0h3m4 0h1m1 0h1m2 0h1m3 0h1m3 0h1m3 0h1m1 0h2m4 0h2m1 0h1m2 0h1m1 0h1m1 0h2m4 0h3m9 0h1m1 0h2m1 0h2m13 0h1m5 0h1m1 0h1m5 0h1m5 0h1m8 0h2m1 0h2m1 0h1m6 0h2m1 0h1m1 0h1m1 0h1m3 0h1m1 0h1m9 0h1m4 0h1m3 0h1m3 0h1m2 0h2m2 0h2m2 0h3m17 0h3m5 0h1m4 0h1m2 0h2m1 0h3m1 0h1m8 0h1m2 0h2m6 0h1m11 0h1m3 0h3m5 0h1m3 0h1m1 0h2m1 0h1m2 0h2m2 0h1m2 0h1m7 0h2m1 0h1m1 0h1m4 0h1m2 0h1m1 0h2m6 0h4m5 0h1m3 0h1m3 0h4m1 0h1m4 0h3m2 0h1m1 0h2m1 0h2m5 0h2m3 0h1m1 0h1m6 0h1m1 0h2m2 0h1m1 0h2m7 0h2m3 0h1m10 0h1m2 0h1m1 0h1m2 0h1m2 0h1m6 0h2m1 0h2m1 0h2m1 0h1m3 0h1m1 0h1m1 0h1m1 0h1m1 0h1m4 0h1m4 0h1m4 0h1m5 0h1m3 0h1m3 0h3m5 0h1m1 0h3m1 0h1m1 0h2m1 0h1m2 0h1m6 0h1m1 0h2m4 0h1m2 0h1m4 0h1m4 0h1m2 0h2m4 0h1m1 0h1m4 0h1m11 0h1m1 0h1m2 0h1m1 0h1m2 0h1m1 0h1m1 0h1m3 0h3m3 0h2m7 0h2m2 0h1m4 0h1m3 0h4m3 0h2m3 0h2m1 0h2m5 0h1m7 0h1m4 0h1m5 0h1m1 0h3m7 0h1m5 0h1m5 0h1m2 0h1m1 0h1m1 0h1m2 0h1m1 0h1m1 0h4m2 0h1m1 0h2m2 0h3m2 0h3m1 0h1m1 0h1m3 0h1m3 0h2m1 0h2m2 0h1m2 0h1m10 0h2m1 0h1m4 0h2m4 0h1m1 0h3m3 0h1m1 0h1m1 0h1m1 0h1m3 0h2m3 0h1m8 0h1m2 0h1m2 0h1m1 0h1m6 0h1m3 0h1m5 0h1m1 0h1m2 0h1m1 0h1m2 0h1m3 0h3m2 0h1m4 0h1m6 0h2m1 0h1m5 0h2m2 0h4m2 0h1m8 0h1m1 0h1m3 0h2m1 0h1m2 0h1m1 0h1m2 0h1m-983 7h1m9 0h1m1 0h1m8 0h3m3 0h2m3 0h4m2 0h1m3 0h1m9 0h1m5 0h3m3 0h1m2 0h2m2 0h1m1 0h3m1 0h1m4 0h1m2 0h1m2 0h2m3 0h1m3 0h1m1 0h1m1 0h1m5 0h1m2 0h1m1 0h2m4 0h3m2 0h2m1 0h1m1 0h1m1 0h1m2 0h1m13 0h2m1 0h1m2 0h1m3 0h1m1 0h3m3 0h2m4 0h1m3 0h1m1 0h1m1 0h2m2 0h1m3 0h1m1 0h1m5 0h1m5 0h2m6 0h2m2 0h1m2 0h1m5 0h2m5 0h1m1 0h2m1 0h2m1 0h2m2 0h1m4 0h1m1 0h2m1 0h1m2 0h1m2 0h2m1 0h1m2 0h1m2 0h1m5 0h1m2 0h1m3 0h2m1 0h1m3 0h1m2 0h1m8 0h1m2 0h1m1 0h2m4 0h2m1 0h2m2 0h2m1 0h1m3 0h2m2 0h1m3 0h1m1 0h1m2 0h1m5 0h3m2 0h1m3 0h1m2 0h1m9 0h1m2 0h2m2 0h1m1 0h3m1 0h2m1 0h5m1 0h1m3 0h1m4 0h3m3 0h1m3 0h1m2 0h1m2 0h1m2 0h1m7 0h2m1 0h1m4 0h1m1 0h1m1 0h3m4 0h1m3 0h1m1 0h1m2 0h3m1 0h1m3 0h1m1 0h1m2 0h2m8 0h1m4 0h1m1 0h1m6 0h3m3 0h1m1 0h2m3 0h1m2 0h1m3 0h1m2 0h4m1 0h6m5 0h1m1 0h1m8 0h2m1 0h2m3 0h1m1 0h1m2 0h1m6 0h2m1 0h1m1 0h1m2 0h1m4 0h1m1 0h2m1 0h1m3 0h1m1 0h1m2 0h2m2 0h1m1 0h2m1 0h1m3 0h2m3 0h1m3 0h1m2 0h2m2 0h1m1 0h2m5 0h4m4 0h1m1 0h1m1 0h2m2 0h2m1 0h1m3 0h4m5 0h1m1 0h1m8 0h1m4 0h1m5 0h2m1 0h1m2 0h3m4 0h1m4 0h1m7 0h3m1 0h1m4 0h1m3 0h1m3 0h2m3 0h1m5 0h1m2 0h1m3 0h1m3 0h1m1 0h2m2 0h2m5 0h2m2 0h1m2 0h2m1 0h1m1 0h1m4 0h1m1 0h1m5 0h1m1 0h1m2 0h1m1 0h1m2 0h1m5 0h4m1 0h1m3 0h1m1 0h1m2 0h3m2 0h1m6 0h2m2 0h1m1 0h1m2 0h1m2 0h1m1 0h1m5 0h2m4 0h1m3 0h3m2 0h1m2 0h1m13 0h1m1 0h1m2 0h2m1 0h2m2 0h1m1 0h1m2 0h1m2 0h1m4 0h1m2 0h1m8 0h1m1 0h1m3 0h1m1 0h3m4 0h1m1 0h1m1 0h1m1 0h1m7 0h1m5 0h1m2 0h1m3 0h1m-943 7h1m10 0h1m5 0h1m4 0h1m1 0h2m4 0h1m4 0h2m3 0h3m1 0h1m3 0h2m1 0h4m1 0h1m1 0h1m2 0h3m2 0h4m2 0h1m7 0h1m4 0h1m2 0h3m1 0h1m3 0h3m5 0h1m3 0h1m7 0h1m5 0h2m1 0h1m1 0h1m3 0h3m2 0h2m1 0h4m1 0h1m2 0h1m1 0h1m4 0h2m4 0h1m1 0h1m1 0h1m1 0h1m8 0h1m1 0h1m1 0h2m4 0h2m3 0h3m6 0h2m3 0h1m2 0h1m1 0h1m5 0h1m1 0h1m3 0h1m1 0h1m5 0h1m2 0h1m1 0h1m5 0h2m13 0h2m1 0h1m1 0h2m1 0h2m1 0h1m1 0h2m1 0h2m2 0h2m3 0h1m9 0h3m4 0h1m3 0h2m2 0h2m1 0h2m3 0h1m4 0h2m2 0h2m1 0h1m3 0h1m1 0h1m1 0h1m3 0h3m11 0h1m2 0h1m1 0h1m2 0h1m1 0h1m6 0h4m4 0h1m7 0h1m1 0h1m2 0h1m3 0h1m3 0h3m5 0h1m1 0h2m3 0h1m4 0h2m2 0h1m1 0h1m6 0h1m3 0h3m19 0h2m5 0h1m4 0h1m11 0h1m2 0h1m7 0h1m2 0h1m7 0h1m2 0h1m4 0h1m2 0h1m3 0h1m1 0h3m2 0h1m3 0h1m3 0h1m2 0h1m1 0h3m1 0h1m4 0h1m2 0h1m1 0h1m3 0h1m1 0h1m6 0h1m1 0h1m1 0h1m2 0h4m4 0h3m7 0h1m4 0h1m5 0h2m6 0h1m1 0h1m1 0h2m3 0h1m3 0h1m2 0h2m4 0h2m1 0h1m1 0h1m1 0h1m1 0h2m4 0h2m6 0h3m3 0h1m4 0h3m2 0h1m1 0h2m1 0h2m1 0h1m3 0h2m2 0h1m3 0h2m2 0h2m3 0h1m5 0h1m4 0h1m2 0h1m6 0h2m2 0h1m2 0h2m3 0h1m1 0h1m5 0h1m1 0h1m3 0h1m6 0h4m3 0h1m2 0h1m1 0h1m3 0h2m1 0h1m1 0h1m2 0h1m1 0h1m7 0h1m1 0h1m6 0h1m2 0h2m4 0h1m4 0h1m1 0h1m4 0h1m7 0h1m1 0h1m6 0h1m1 0h4m2 0h1m3 0h5m2 0h2m7 0h1m3 0h1m3 0h1m5 0h2m1 0h1m2 0h1m1 0h1m9 0h1m7 0h1m3 0h1m3 0h1m1 0h1m2 0h1m4 0h2m8 0h1m5 0h1m4 0h1m5 0h1m5 0h1m2 0h1m5 0h1m1 0h3m5 0h1m-979 7h1m5 0h1m2 0h1m8 0h2m1 0h1m2 0h2m1 0h1m1 0h2m4 0h1m1 0h1m1 0h1m6 0h1m1 0h1m8 0h1m1 0h1m8 0h1m3 0h1m2 0h1m5 0h1m2 0h1m4 0h1m6 0h1m4 0h1m2 0h1m2 0h1m3 0h1m6 0h2m3 0h1m1 0h1m4 0h2m4 0h1m2 0h1m6 0h1m9 0h1m4 0h2m5 0h1m2 0h3m2 0h1m2 0h2m3 0h1m1 0h1m4 0h2m1 0h3m2 0h1m5 0h2m1 0h1m5 0h1m1 0h1m2 0h1m2 0h2m1 0h5m1 0h1m4 0h2m2 0h1m7 0h1m6 0h1m6 0h3m1 0h1m1 0h1m8 0h2m4 0h2m2 0h1m14 0h1m2 0h2m2 0h1m1 0h1m2 0h5m1 0h2m3 0h1m1 0h1m1 0h1m2 0h1m9 0h2m1 0h1m4 0h1m1 0h1m2 0h1m4 0h2m5 0h4m2 0h1m1 0h1m1 0h3m1 0h1m2 0h2m2 0h3m1 0h1m3 0h3m3 0h1m2 0h2m6 0h2m19 0h1m1 0h1m1 0h1m2 0h3m3 0h1m1 0h2m2 0h2m2 0h1m4 0h1m1 0h1m4 0h1m8 0h3m2 0h1m1 0h1m1 0h1m5 0h1m3 0h2m3 0h1m1 0h1m4 0h1m2 0h1m2 0h1m3 0h1m3 0h4m1 0h1m4 0h3m4 0h1m5 0h2m5 0h3m1 0h1m5 0h2m7 0h2m3 0h1m1 0h6m5 0h1m1 0h1m4 0h1m1 0h1m5 0h1m1 0h1m1 0h2m6 0h2m5 0h1m7 0h1m3 0h3m5 0h1m7 0h1m1 0h1m6 0h1m3 0h2m2 0h1m2 0h2m2 0h1m3 0h1m4 0h1m1 0h2m2 0h1m7 0h3m2 0h3m1 0h4m2 0h2m1 0h1m1 0h1m10 0h1m2 0h2m2 0h1m2 0h3m1 0h1m3 0h1m1 0h1m7 0h3m2 0h1m2 0h2m1 0h1m1 0h1m7 0h2m8 0h1m5 0h1m1 0h1m11 0h1m2 0h3m4 0h1m1 0h1m1 0h1m2 0h2m2 0h3m1 0h2m2 0h1m4 0h1m1 0h2m1 0h2m3 0h4m6 0h1m1 0h1m2 0h2m6 0h3m3 0h1m4 0h2m4 0h3m1 0h1m3 0h2m2 0h1m3 0h1m1 0h1m10 0h1m10 0h2m1 0h1m11 0h1m11 0h1m1 0h1m6 0h1m2 0h1m-970 7h1m3 0h1m10 0h2m1 0h2m1 0h4m3 0h1m5 0h1m4 0h2m2 0h2m1 0h1m4 0h1m3 0h2m3 0h2m4 0h1m5 0h2m1 0h2m4 0h2m1 0h3m1 0h2m3 0h3m2 0h3m5 0h4m2 0h1m4 0h2m2 0h1m5 0h2m1 0h1m4 0h1m2 0h1m2 0h1m9 0h2m3 0h3m1 0h1m3 0h2m1 0h2m2 0h1m1 0h1m4 0h2m2 0h1m1 0h1m7 0h1m6 0h2m1 0h3m2 0h4m2 0h1m1 0h2m2 0h2m4 0h1m2 0h2m1 0h3m3 0h2m1 0h1m1 0h1m2 0h2m3 0h1m3 0h2m6 0h1m1 0h1m4 0h1m5 0h1m5 0h3m11 0h1m2 0h2m1 0h1m4 0h2m1 0h1m3 0h1m2 0h1m2 0h1m1 0h1m6 0h2m1 0h1m2 0h1m3 0h2m6 0h2m4 0h4m2 0h1m1 0h1m7 0h1m1 0h2m7 0h2m2 0h1m1 0h2m14 0h1m7 0h1m5 0h1m1 0h1m2 0h1m2 0h1m5 0h1m1 0h2m1 0h2m2 0h1m1 0h1m3 0h1m1 0h1m1 0h1m1 0h2m4 0h1m3 0h1m5 0h2m11 0h1m4 0h1m3 0h1m1 0h1m2 0h3m1 0h1m1 0h1m1 0h1m3 0h1m1 0h2m4 0h1m5 0h1m2 0h1m2 0h4m3 0h2m3 0h3m1 0h3m1 0h1m4 0h1m3 0h2m1 0h1m2 0h2m3 0h1m2 0h3m4 0h1m3 0h1m3 0h1m4 0h1m1 0h1m2 0h4m3 0h4m2 0h1m2 0h1m5 0h1m1 0h1m2 0h1m2 0h3m7 0h1m1 0h2m1 0h1m1 0h1m1 0h1m1 0h1m2 0h2m1 0h1m3 0h1m3 0h1m4 0h2m1 0h2m3 0h2m2 0h3m7 0h1m8 0h2m6 0h1m3 0h4m6 0h3m1 0h2m1 0h2m3 0h1m3 0h1m9 0h1m3 0h1m8 0h1m4 0h1m2 0h1m1 0h2m2 0h1m5 0h1m4 0h2m7 0h2m4 0h1m4 0h2m3 0h1m2 0h2m1 0h1m2 0h1m6 0h2m3 0h1m8 0h1m2 0h1m5 0h1m2 0h1m1 0h1m1 0h1m3 0h1m1 0h1m6 0h1m1 0h1m2 0h1m9 0h1m2 0h1m4 0h1m2 0h1m3 0h2m1 0h1m11 0h2m1 0h2m3 0h1m6 0h1m14 0h1m2 0h1m1 0h1m7 0h1m17 0h1m2 0h1m2 0h1m-975 13h1m7 0h3m2 0h2m2 0h1m2 0h3m2 0h1m4 0h1m1 0h1m2 0h1m7 0h1m3 0h2m4 0h1m1 0h1m1 0h1m2 0h1m22 0h1m2 0h1m6 0h1m5 0h1m1 0h3m3 0h1m1 0h1m3 0h1m1 0h1m6 0h1m2 0h1m3 0h1m1 0h1m1 0h4m9 0h1m1 0h1m4 0h1m3 0h1m3 0h3m1 0h1m1 0h1m2 0h1m2 0h3m1 0h6m3 0h1m4 0h1m1 0h1m4 0h1m4 0h1m1 0h1m2 0h1m12 0h1m1 0h1m2 0h1m4 0h1m1 0h1m3 0h1m2 0h3m1 0h1m1 0h1m2 0h2m13 0h2m1 0h1m2 0h1m1 0h1m2 0h1m3 0h1m12 0h2m2 0h2m1 0h1m3 0h1m1 0h1m1 0h1m1 0h2m1 0h1m4 0h1m1 0h2m1 0h2m6 0h1m2 0h3m8 0h1m1 0h1m2 0h1m1 0h1m5 0h1m1 0h1m2 0h3m1 0h1m1 0h1m1 0h1m7 0h2m1 0h1m2 0h1m1 0h1m13 0h1m6 0h5m2 0h1m6 0h1m3 0h1m1 0h4m2 0h1m3 0h1m5 0h2m2 0h2m2 0h1m3 0h1m2 0h2m2 0h1m1 0h2m1 0h3m1 0h1m4 0h6m3 0h2m1 0h2m1 0h3m5 0h1m14 0h1m4 0h3m1 0h1m3 0h2m6 0h1m1 0h3m12 0h2m2 0h8m10 0h2m1 0h1m1 0h1m1 0h1m10 0h1m3 0h1m2 0h1m9 0h1m2 0h1m7 0h2m5 0h1m3 0h1m3 0h1m1 0h3m5 0h2m3 0h1m4 0h1m3 0h1m1 0h1m2 0h1m3 0h1m2 0h1m2 0h2m3 0h1m2 0h2m1 0h1m1 0h1m3 0h1m1 0h3m6 0h2m1 0h1m5 0h1m1 0h1m1 0h1m4 0h1m7 0h2m2 0h2m1 0h2m2 0h1m8 0h1m3 0h1m3 0h1m4 0h1m3 0h2m1 0h3m5 0h3m2 0h1m1 0h1m3 0h1m2 0h2m1 0h2m5 0h1m1 0h1m4 0h1m3 0h1m10 0h1m5 0h2m2 0h1m1 0h1m1 0h1m3 0h2m3 0h1m1 0h1m5 0h1m1 0h2m1 0h1m3 0h1m2 0h1m5 0h1m3 0h1m2 0h1m2 0h2m9 0h1m8 0h1m3 0h1m5 0h1m2 0h2m6 0h1m1 0h1m2 0h1m2 0h2m6 0h1m1 0h1m2 0h1m1 0h1m7 0h1m8 0h1m3 0h3m2 0h1m-974 7h1m14 0h1m3 0h1m3 0h1m5 0h1m2 0h1m7 0h2m1 0h1m6 0h1m1 0h1m1 0h2m4 0h1m1 0h2m2 0h1m2 0h1m1 0h2m9 0h1m5 0h1m2 0h2m3 0h1m1 0h2m1 0h1m1 0h2m1 0h1m4 0h2m7 0h1m2 0h1m1 0h1m3 0h1m1 0h1m2 0h1m4 0h2m5 0h4m5 0h1m2 0h1m1 0h1m4 0h2m2 0h2m1 0h1m1 0h1m1 0h1m2 0h1m1 0h2m1 0h1m3 0h1m1 0h1m3 0h1m4 0h3m6 0h2m5 0h1m1 0h1m10 0h1m5 0h2m1 0h1m1 0h2m2 0h1m4 0h2m1 0h1m3 0h1m5 0h2m5 0h1m3 0h2m1 0h2m2 0h1m2 0h3m9 0h2m3 0h2m1 0h1m4 0h2m2 0h1m1 0h3m1 0h1m4 0h1m5 0h1m1 0h1m4 0h1m2 0h1m1 0h2m1 0h1m3 0h1m1 0h1m1 0h1m3 0h1m1 0h2m3 0h1m1 0h1m2 0h1m1 0h2m3 0h3m6 0h3m4 0h3m1 0h1m8 0h1m1 0h1m1 0h5m1 0h2m6 0h1m2 0h1m1 0h1m2 0h2m5 0h1m1 0h1m3 0h2m2 0h1m3 0h2m2 0h1m4 0h1m5 0h1m1 0h1m2 0h1m2 0h1m1 0h2m6 0h1m3 0h1m4 0h3m4 0h2m2 0h1m6 0h3m6 0h3m4 0h1m1 0h2m3 0h1m1 0h1m9 0h1m4 0h1m1 0h2m4 0h2m2 0h1m1 0h2m2 0h1m1 0h3m2 0h1m1 0h1m1 0h3m1 0h1m7 0h1m6 0h3m1 0h2m2 0h2m4 0h1m4 0h2m7 0h1m1 0h1m2 0h1m1 0h1m5 0h2m2 0h2m5 0h2m7 0h1m1 0h2m1 0h2m6 0h1m2 0h1m1 0h1m3 0h1m12 0h1m1 0h1m3 0h2m3 0h1m2 0h1m21 0h1m2 0h1m1 0h1m2 0h1m1 0h1m1 0h2m1 0h4m5 0h2m2 0h1m2 0h1m2 0h1m1 0h1m9 0h1m1 0h1m4 0h1m3 0h1m6 0h1m7 0h1m2 0h4m3 0h2m11 0h1m6 0h1m11 0h2m2 0h1m5 0h1m8 0h1m5 0h2m6 0h1m3 0h1m3 0h2m2 0h2m21 0h1m1 0h1m9 0h2m12 0h1m3 0h1m1 0h1m6 0h1m2 0h1m12 0h1m8 0h1m-973 7h1m10 0h1m7 0h1m4 0h1m6 0h2m3 0h1m1 0h3m2 0h4m9 0h1m5 0h1m2 0h1m3 0h1m1 0h1m1 0h1m4 0h2m2 0h1m2 0h1m1 0h1m5 0h2m5 0h1m1 0h1m1 0h3m1 0h1m2 0h3m3 0h2m1 0h2m2 0h1m1 0h1m2 0h1m2 0h1m3 0h4m1 0h1m12 0h2m4 0h1m4 0h1m2 0h1m2 0h2m1 0h1m3 0h1m5 0h1m1 0h1m1 0h2m5 0h2m1 0h2m1 0h3m4 0h2m1 0h1m4 0h1m9 0h1m2 0h1m3 0h1m4 0h4m1 0h1m1 0h1m1 0h1m3 0h3m1 0h1m4 0h1m1 0h1m1 0h1m1 0h2m1 0h1m1 0h1m3 0h1m1 0h2m11 0h2m2 0h1m5 0h1m2 0h2m3 0h1m3 0h1m1 0h1m1 0h1m6 0h4m2 0h1m1 0h1m1 0h4m2 0h1m3 0h1m2 0h1m1 0h1m2 0h2m2 0h6m5 0h2m4 0h1m3 0h3m2 0h4m2 0h2m5 0h3m3 0h1m2 0h3m1 0h1m1 0h1m5 0h2m1 0h1m1 0h2m2 0h1m1 0h1m4 0h2m1 0h4m2 0h2m1 0h2m2 0h1m1 0h2m1 0h1m1 0h2m1 0h2m2 0h1m1 0h1m3 0h3m3 0h1m3 0h1m1 0h1m1 0h2m1 0h1m2 0h3m1 0h1m3 0h2m5 0h1m4 0h1m4 0h2m1 0h1m1 0h1m2 0h5m13 0h1m2 0h1m4 0h5m1 0h4m3 0h1m1 0h2m1 0h1m2 0h1m2 0h2m5 0h2m1 0h1m1 0h1m2 0h1m3 0h1m1 0h1m1 0h1m2 0h1m4 0h1m6 0h1m3 0h1m3 0h1m4 0h2m2 0h1m1 0h1m3 0h1m1 0h3m6 0h2m1 0h1m1 0h1m6 0h1m1 0h1m3 0h1m1 0h1m2 0h1m8 0h3m5 0h4m3 0h3m7 0h1m1 0h1m7 0h1m3 0h4m4 0h1m7 0h2m2 0h2m3 0h1m3 0h2m1 0h3m2 0h3m2 0h1m5 0h1m1 0h1m1 0h2m1 0h2m1 0h1m1 0h1m2 0h3m2 0h2m2 0h1m1 0h1m3 0h3m6 0h1m1 0h2m4 0h1m3 0h1m5 0h1m1 0h1m1 0h1m1 0h1m1 0h1m2 0h1m2 0h2m2 0h1m3 0h1m1 0h1m2 0h1m5 0h2m6 0h4m1 0h1m3 0h1m2 0h2m6 0h2m4 0h1m4 0h1m6 0h1m9 0h1m1 0h1m2 0h1m6 0h1m1 0h2m3 0h1m1 0h1m6 0h2m2 0h1m2 0h1m21 0h1m3 0h1m-979 7h1m2 0h1m1 0h1m1 0h1m2 0h1m3 0h1m3 0h1m7 0h2m12 0h1m1 0h1m2 0h2m5 0h1m8 0h1m1 0h1m1 0h2m1 0h1m3 0h2m3 0h1m2 0h1m3 0h1m6 0h1m2 0h1m3 0h2m2 0h2m6 0h2m2 0h1m1 0h1m3 0h4m2 0h1m2 0h2m3 0h1m1 0h1m7 0h2m1 0h1m3 0h5m1 0h1m5 0h1m1 0h2m1 0h1m1 0h1m2 0h1m1 0h1m5 0h1m3 0h1m2 0h1m6 0h3m4 0h1m5 0h1m3 0h1m3 0h3m1 0h2m2 0h1m1 0h1m3 0h2m2 0h1m1 0h1m2 0h1m6 0h1m5 0h1m2 0h1m1 0h1m7 0h1m1 0h1m1 0h1m3 0h1m1 0h1m2 0h1m5 0h1m16 0h1m1 0h1m1 0h2m4 0h2m3 0h1m1 0h2m1 0h2m3 0h1m2 0h2m1 0h2m2 0h1m2 0h1m2 0h1m2 0h2m3 0h2m3 0h1m1 0h1m1 0h1m6 0h1m1 0h1m9 0h2m2 0h2m7 0h1m4 0h4m1 0h1m2 0h2m5 0h2m5 0h1m5 0h1m4 0h2m7 0h1m8 0h1m1 0h1m4 0h1m9 0h4m1 0h2m4 0h2m5 0h1m1 0h1m9 0h2m4 0h1m2 0h1m3 0h1m1 0h1m1 0h1m6 0h1m1 0h1m1 0h1m3 0h1m1 0h1m7 0h1m1 0h2m4 0h1m2 0h4m3 0h1m2 0h2m4 0h3m6 0h2m5 0h1m1 0h1m2 0h1m2 0h1m5 0h1m2 0h1m4 0h1m1 0h1m1 0h1m4 0h1m4 0h1m3 0h1m2 0h1m1 0h3m4 0h1m6 0h1m1 0h3m3 0h1m4 0h3m1 0h1m1 0h1m2 0h1m3 0h1m1 0h1m10 0h1m1 0h1m1 0h1m6 0h2m10 0h1m1 0h1m1 0h1m5 0h1m2 0h2m2 0h1m4 0h1m1 0h2m4 0h1m5 0h1m4 0h1m3 0h1m6 0h1m1 0h2m1 0h2m3 0h1m7 0h1m1 0h1m2 0h1m4 0h1m3 0h2m1 0h2m2 0h2m4 0h1m1 0h1m1 0h1m1 0h1m1 0h1m2 0h1m4 0h1m3 0h1m4 0h3m1 0h1m4 0h1m1 0h1m2 0h4m8 0h1m8 0h1m1 0h1m7 0h1m1 0h1m1 0h2m1 0h1m3 0h1m4 0h1m1 0h1m1 0h2m1 0h1m2 0h1m3 0h2m2 0h1m4 0h2m3 0h2m2 0h2m1 0h2m3 0h1m1 0h1m24 0h1m2 0h1m2 0h1m8 0h1m2 0h1m10 0h2m1 0h1m-982 7h1m1 0h1m6 0h1m8 0h1m1 0h1m13 0h1m10 0h1m3 0h3m1 0h1m1 0h2m8 0h1m1 0h1m3 0h1m1 0h1m2 0h3m7 0h4m2 0h3m1 0h4m3 0h2m8 0h2m1 0h2m3 0h3m1 0h1m3 0h1m1 0h4m1 0h1m6 0h4m1 0h2m1 0h1m1 0h1m9 0h1m5 0h1m5 0h3m1 0h3m1 0h1m3 0h2m4 0h1m2 0h1m12 0h1m1 0h2m1 0h5m3 0h1m1 0h3m3 0h1m1 0h1m3 0h2m2 0h2m2 0h2m1 0h1m1 0h1m2 0h2m1 0h1m1 0h2m1 0h1m2 0h1m2 0h4m1 0h1m6 0h2m1 0h1m2 0h1m3 0h1m10 0h2m2 0h1m1 0h4m1 0h3m1 0h2m2 0h2m3 0h1m2 0h1m1 0h1m1 0h2m4 0h1m1 0h1m1 0h1m6 0h1m2 0h1m1 0h1m1 0h1m3 0h1m1 0h2m3 0h1m1 0h3m1 0h1m1 0h1m1 0h1m4 0h1m2 0h2m1 0h1m1 0h2m1 0h1m2 0h2m1 0h1m2 0h1m1 0h1m16 0h1m1 0h2m1 0h2m2 0h1m1 0h1m2 0h5m1 0h1m2 0h2m1 0h3m2 0h3m1 0h2m1 0h1m1 0h2m2 0h2m4 0h1m1 0h2m2 0h1m2 0h1m1 0h1m1 0h1m1 0h1m1 0h1m5 0h1m1 0h1m11 0h1m2 0h1m8 0h1m2 0h1m3 0h3m3 0h1m3 0h1m8 0h5m4 0h1m1 0h1m3 0h1m2 0h1m2 0h1m4 0h2m1 0h1m4 0h1m10 0h1m2 0h1m8 0h1m2 0h3m10 0h1m2 0h1m1 0h1m1 0h2m3 0h2m6 0h4m3 0h3m1 0h1m3 0h1m8 0h1m1 0h1m7 0h1m1 0h1m9 0h1m8 0h1m5 0h1m2 0h2m4 0h2m8 0h2m1 0h2m2 0h1m2 0h2m1 0h1m1 0h1m9 0h1m2 0h3m2 0h2m4 0h1m2 0h4m3 0h2m2 0h1m1 0h1m2 0h2m2 0h1m1 0h1m3 0h1m1 0h2m4 0h1m2 0h2m3 0h3m2 0h1m1 0h1m3 0h1m1 0h2m1 0h1m1 0h1m2 0h1m4 0h1m4 0h3m1 0h1m3 0h2m2 0h4m1 0h3m2 0h1m1 0h2m1 0h1m2 0h1m1 0h2m2 0h1m2 0h1m1 0h3m3 0h1m3 0h2m1 0h1m4 0h2m2 0h1m3 0h1m3 0h1m1 0h1m2 0h1m5 0h1m4 0h2m2 0h2m15 0h1m6 0h1m1 0h1m1 0h1m3 0h1m5 0h1m6 0h1m9 0h2m-982 7h1m1 0h1m1 0h1m4 0h1m1 0h1m1 0h2m7 0h2m6 0h2m1 0h2m2 0h1m2 0h2m1 0h1m2 0h1m2 0h3m1 0h1m9 0h1m2 0h1m4 0h1m2 0h1m4 0h1m3 0h1m5 0h1m2 0h2m2 0h1m3 0h1m1 0h1m1 0h1m1 0h1m3 0h1m5 0h1m1 0h1m3 0h1m2 0h1m4 0h2m1 0h1m2 0h1m3 0h1m2 0h3m2 0h1m4 0h1m2 0h1m1 0h1m3 0h1m1 0h1m1 0h1m3 0h1m1 0h3m3 0h1m8 0h1m9 0h1m2 0h1m7 0h1m7 0h1m3 0h1m6 0h1m2 0h6m3 0h4m3 0h1m9 0h2m3 0h1m4 0h1m11 0h1m2 0h1m6 0h1m2 0h1m13 0h1m3 0h1m1 0h1m5 0h1m5 0h1m1 0h1m1 0h1m3 0h1m1 0h2m5 0h1m2 0h1m3 0h2m3 0h1m2 0h1m1 0h1m2 0h1m2 0h1m1 0h2m1 0h2m14 0h2m1 0h1m1 0h2m4 0h1m1 0h1m2 0h3m3 0h2m7 0h1m1 0h3m4 0h2m3 0h1m1 0h1m4 0h1m1 0h1m2 0h2m6 0h1m1 0h1m3 0h1m1 0h1m2 0h1m4 0h1m1 0h1m3 0h4m3 0h1m6 0h2m6 0h1m2 0h2m1 0h4m3 0h1m3 0h1m1 0h1m3 0h1m2 0h2m4 0h1m3 0h2m4 0h2m2 0h2m3 0h1m11 0h1m1 0h1m8 0h1m3 0h1m7 0h1m4 0h1m6 0h1m2 0h1m1 0h1m2 0h1m2 0h1m4 0h1m3 0h1m1 0h1m5 0h1m2 0h1m4 0h1m1 0h1m2 0h1m7 0h2m5 0h1m2 0h1m1 0h1m2 0h1m4 0h1m3 0h1m8 0h1m4 0h1m1 0h2m4 0h1m5 0h1m3 0h1m6 0h1m1 0h1m1 0h1m5 0h1m1 0h1m1 0h1m2 0h1m2 0h1m9 0h2m3 0h1m4 0h1m1 0h1m1 0h1m8 0h1m1 0h1m6 0h1m2 0h1m5 0h4m1 0h2m1 0h1m12 0h2m2 0h1m2 0h1m13 0h1m2 0h1m3 0h1m1 0h1m3 0h1m3 0h1m1 0h1m1 0h1m1 0h1m6 0h1m1 0h2m5 0h1m1 0h3m3 0h2m1 0h1m5 0h1m8 0h1m1 0h1m1 0h1m3 0h1m1 0h2m5 0h2m2 0h1m2 0h1m2 0h1m5 0h3m1 0h2m2 0h3m1 0h1m2 0h2m6 0h1m3 0h1m2 0h1m4 0h1m1 0h2m1 0h1m1 0h2m4 0h2m-966 13h1m5 0h1m13 0h2m1 0h1m8 0h1m8 0h2m1 0h1m1 0h1m2 0h1m4 0h1m1 0h2m1 0h2m5 0h1m2 0h2m1 0h1m5 0h1m4 0h1m1 0h3m2 0h2m2 0h3m1 0h1m6 0h1m2 0h1m6 0h1m1 0h1m2 0h1m3 0h1m6 0h1m10 0h1m3 0h1m1 0h1m2 0h1m3 0h1m3 0h1m1 0h3m4 0h1m3 0h1m6 0h2m1 0h2m3 0h1m2 0h1m1 0h1m4 0h1m13 0h1m4 0h1m1 0h1m2 0h1m3 0h1m8 0h2m1 0h1m4 0h1m5 0h1m5 0h1m6 0h3m4 0h1m2 0h1m8 0h1m1 0h1m5 0h1m2 0h1m1 0h1m10 0h1m1 0h1m1 0h1m3 0h1m1 0h1m3 0h2m1 0h3m1 0h1m1 0h1m1 0h1m1 0h1m5 0h2m2 0h2m3 0h1m2 0h1m2 0h2m4 0h1m2 0h1m3 0h1m1 0h2m1 0h1m7 0h2m4 0h1m9 0h1m3 0h1m4 0h2m5 0h2m3 0h1m2 0h1m1 0h1m2 0h1m1 0h1m4 0h1m1 0h2m6 0h1m1 0h1m4 0h1m5 0h1m3 0h3m3 0h1m2 0h1m1 0h1m2 0h1m2 0h1m3 0h1m3 0h1m2 0h1m2 0h1m1 0h2m5 0h2m1 0h1m15 0h1m1 0h1m4 0h1m2 0h1m3 0h1m1 0h1m1 0h1m6 0h1m8 0h2m2 0h2m2 0h1m2 0h1m1 0h1m5 0h1m4 0h1m5 0h1m2 0h1m1 0h1m1 0h1m5 0h1m2 0h1m2 0h2m3 0h5m2 0h8m7 0h1m1 0h1m4 0h1m3 0h2m6 0h1m1 0h2m4 0h1m1 0h1m2 0h1m1 0h1m8 0h2m6 0h2m8 0h2m4 0h1m1 0h1m2 0h1m5 0h2m4 0h1m2 0h1m1 0h1m1 0h1m5 0h2m1 0h1m1 0h1m2 0h1m2 0h5m3 0h3m4 0h1m12 0h1m8 0h2m5 0h1m4 0h1m4 0h1m1 0h1m3 0h5m2 0h1m2 0h2m1 0h3m1 0h3m2 0h2m2 0h1m2 0h2m3 0h4m1 0h1m5 0h1m7 0h2m1 0h1m4 0h1m1 0h1m1 0h4m1 0h1m1 0h1m3 0h3m9 0h1m2 0h1m5 0h1m1 0h3m9 0h2m3 0h1m1 0h1m2 0h1m3 0h1m2 0h1m3 0h2m7 0h2m5 0h1m13 0h1m11 0h1m10 0h1m-974 7h1m18 0h1m2 0h1m3 0h1m5 0h1m1 0h2m1 0h2m1 0h1m7 0h1m8 0h1m3 0h1m3 0h1m14 0h1m3 0h1m11 0h1m1 0h3m1 0h1m3 0h1m2 0h1m1 0h1m2 0h1m8 0h3m1 0h1m1 0h1m1 0h1m5 0h1m3 0h1m5 0h1m11 0h1m3 0h1m3 0h1m3 0h1m2 0h3m1 0h1m4 0h1m2 0h1m6 0h1m1 0h1m3 0h1m3 0h2m1 0h1m5 0h2m3 0h2m1 0h3m1 0h1m6 0h1m2 0h1m5 0h1m2 0h1m4 0h1m2 0h1m1 0h4m1 0h2m2 0h1m7 0h2m3 0h2m2 0h1m2 0h1m1 0h2m1 0h1m17 0h1m1 0h1m4 0h1m1 0h1m1 0h1m11 0h2m1 0h2m2 0h2m4 0h2m1 0h2m3 0h1m5 0h1m1 0h1m1 0h3m4 0h2m2 0h1m2 0h1m7 0h3m5 0h1m2 0h2m1 0h1m1 0h2m1 0h2m3 0h1m2 0h1m2 0h2m5 0h1m2 0h1m2 0h1m4 0h1m1 0h1m2 0h2m6 0h5m2 0h2m2 0h1m6 0h1m14 0h2m2 0h1m1 0h1m2 0h2m5 0h2m6 0h2m1 0h1m1 0h1m2 0h1m6 0h1m10 0h2m1 0h1m1 0h1m2 0h1m5 0h2m2 0h2m1 0h1m1 0h1m2 0h1m1 0h1m3 0h2m4 0h1m1 0h2m3 0h2m1 0h2m1 0h3m2 0h1m1 0h1m2 0h1m3 0h1m1 0h1m1 0h1m2 0h1m4 0h1m1 0h2m2 0h1m4 0h1m1 0h3m2 0h1m3 0h2m3 0h2m3 0h2m1 0h1m4 0h1m1 0h3m2 0h1m11 0h2m1 0h1m1 0h1m2 0h2m5 0h1m2 0h3m3 0h1m14 0h2m3 0h1m1 0h3m4 0h1m5 0h1m7 0h1m2 0h1m1 0h3m1 0h1m5 0h1m7 0h1m3 0h1m1 0h2m1 0h1m1 0h1m3 0h3m1 0h1m1 0h1m3 0h3m1 0h1m2 0h1m5 0h1m4 0h1m2 0h6m3 0h1m1 0h1m1 0h1m3 0h4m3 0h1m11 0h2m1 0h1m7 0h1m4 0h2m2 0h3m1 0h1m1 0h1m4 0h1m4 0h1m6 0h1m3 0h1m1 0h5m3 0h1m2 0h2m6 0h1m4 0h1m7 0h1m3 0h1m1 0h2m3 0h2m5 0h2m9 0h1m4 0h1m6 0h1m1 0h3m1 0h2m5 0h1m4 0h1m1 0h1m3 0h1m-985 7h1m4 0h2m1 0h1m1 0h1m4 0h1m1 0h1m1 0h1m1 0h2m1 0h2m1 0h1m6 0h2m8 0h1m8 0h1m2 0h1m3 0h1m4 0h2m4 0h1m2 0h1m1 0h1m2 0h1m10 0h1m2 0h1m1 0h1m1 0h1m1 0h1m2 0h3m2 0h3m1 0h2m4 0h1m1 0h1m2 0h1m6 0h1m4 0h3m2 0h1m2 0h1m3 0h1m3 0h2m2 0h1m1 0h1m1 0h1m2 0h1m1 0h2m5 0h1m2 0h1m5 0h1m7 0h2m7 0h2m1 0h1m7 0h1m3 0h1m1 0h1m1 0h1m7 0h1m8 0h2m6 0h1m4 0h1m4 0h4m5 0h3m3 0h2m3 0h1m1 0h1m1 0h2m4 0h1m6 0h1m17 0h2m1 0h1m1 0h1m1 0h1m1 0h1m1 0h1m4 0h1m4 0h1m5 0h1m3 0h1m4 0h1m6 0h1m10 0h1m1 0h1m1 0h2m6 0h1m1 0h1m4 0h2m4 0h4m5 0h1m1 0h1m4 0h1m5 0h1m1 0h2m3 0h1m4 0h2m3 0h1m1 0h3m4 0h3m2 0h1m2 0h2m1 0h1m2 0h2m9 0h1m2 0h2m10 0h1m6 0h1m1 0h1m3 0h1m6 0h1m8 0h1m4 0h1m2 0h1m4 0h1m5 0h1m6 0h1m1 0h4m6 0h1m5 0h3m2 0h2m10 0h2m1 0h2m5 0h2m1 0h1m1 0h1m6 0h2m1 0h1m4 0h1m8 0h2m4 0h2m3 0h1m1 0h1m1 0h1m4 0h1m1 0h1m2 0h1m5 0h1m1 0h1m10 0h1m5 0h2m6 0h1m18 0h1m2 0h1m5 0h1m1 0h1m1 0h3m3 0h1m4 0h1m2 0h1m6 0h1m9 0h1m1 0h1m1 0h1m4 0h1m2 0h1m5 0h1m1 0h3m2 0h1m5 0h1m1 0h1m1 0h1m9 0h1m1 0h1m2 0h1m4 0h1m1 0h1m7 0h3m1 0h1m1 0h1m3 0h2m2 0h1m2 0h3m3 0h1m1 0h1m2 0h1m1 0h2m5 0h4m6 0h1m5 0h1m2 0h1m4 0h1m3 0h1m4 0h3m8 0h1m3 0h1m2 0h1m1 0h2m1 0h1m2 0h1m4 0h2m10 0h1m2 0h1m5 0h1m3 0h3m1 0h1m9 0h1m1 0h1m2 0h2m3 0h2m2 0h1m4 0h2m10 0h1m5 0h1m1 0h2m8 0h2m6 0h1m-984 7h1m1 0h1m1 0h1m2 0h2m2 0h1m6 0h3m5 0h1m10 0h2m1 0h1m7 0h1m1 0h2m1 0h1m2 0h1m4 0h1m1 0h3m8 0h2m9 0h1m5 0h1m1 0h2m4 0h3m4 0h2m10 0h1m12 0h1m3 0h1m4 0h1m4 0h3m1 0h1m1 0h1m1 0h1m2 0h1m17 0h4m6 0h1m4 0h1m8 0h2m3 0h2m7 0h1m3 0h1m5 0h1m14 0h1m1 0h1m10 0h1m2 0h2m5 0h2m1 0h1m3 0h2m11 0h1m10 0h1m1 0h1m1 0h2m1 0h1m2 0h1m3 0h1m1 0h1m3 0h1m1 0h1m2 0h1m6 0h1m1 0h1m1 0h1m7 0h1m3 0h1m4 0h2m2 0h1m5 0h1m3 0h1m7 0h2m5 0h1m7 0h1m4 0h1m12 0h1m15 0h2m2 0h1m3 0h1m1 0h3m7 0h1m1 0h1m2 0h1m2 0h1m2 0h1m6 0h1m2 0h2m3 0h1m4 0h1m6 0h1m5 0h2m5 0h1m3 0h2m13 0h1m1 0h1m10 0h1m2 0h1m1 0h2m2 0h1m6 0h1m3 0h1m2 0h2m13 0h1m3 0h1m1 0h1m2 0h1m1 0h1m3 0h1m5 0h1m2 0h2m1 0h1m7 0h2m2 0h2m8 0h1m3 0h3m12 0h1m16 0h2m3 0h1m1 0h1m13 0h1m2 0h1m3 0h1m1 0h3m2 0h2m6 0h1m1 0h2m1 0h1m1 0h1m1 0h2m5 0h1m1 0h1m2 0h1m2 0h2m1 0h2m3 0h1m4 0h1m1 0h1m7 0h1m1 0h1m5 0h1m1 0h1m10 0h1m1 0h1m3 0h2m3 0h1m1 0h2m1 0h1m1 0h3m1 0h1m3 0h4m7 0h2m5 0h1m7 0h1m3 0h1m3 0h1m7 0h1m7 0h2m2 0h3m4 0h1m2 0h1m3 0h2m2 0h1m3 0h1m1 0h1m1 0h1m7 0h1m1 0h1m3 0h3m3 0h1m1 0h2m2 0h1m1 0h2m1 0h2m1 0h1m1 0h4m4 0h3m1 0h1m2 0h4m1 0h1m2 0h1m1 0h3m2 0h1m5 0h1m1 0h1m9 0h1m2 0h1m1 0h3m1 0h1m4 0h1m6 0h1m2 0h1m3 0h1m1 0h1m4 0h2m1 0h1m1 0h2m-985 7h2m3 0h3m1 0h4m2 0h1m3 0h1m3 0h1m2 0h4m2 0h1m1 0h1m2 0h1m1 0h1m6 0h1m3 0h1m9 0h1m3 0h1m10 0h1m3 0h1m4 0h1m21 0h1m3 0h1m1 0h2m1 0h1m3 0h1m16 0h1m2 0h1m5 0h1m4 0h2m7 0h1m20 0h1m5 0h1m1 0h1m13 0h1m5 0h2m7 0h1m5 0h1m6 0h2m3 0h1m3 0h1m1 0h1m4 0h1m17 0h2m2 0h1m9 0h1m3 0h1m8 0h1m2 0h1m2 0h1m4 0h1m4 0h1m1 0h1m3 0h2m2 0h2m2 0h4m4 0h1m1 0h1m13 0h1m1 0h1m1 0h1m9 0h1m1 0h1m1 0h1m1 0h2m6 0h1m7 0h1m2 0h1m3 0h1m9 0h1m2 0h1m12 0h1m6 0h1m3 0h1m5 0h1m2 0h1m5 0h1m2 0h1m9 0h1m2 0h1m9 0h1m6 0h1m27 0h1m5 0h1m1 0h1m3 0h1m10 0h1m1 0h1m1 0h1m6 0h1m3 0h1m8 0h1m5 0h1m1 0h1m15 0h2m4 0h1m4 0h1m8 0h1m2 0h1m1 0h4m1 0h1m4 0h1m4 0h1m4 0h1m5 0h1m3 0h1m4 0h1m12 0h1m2 0h1m3 0h1m6 0h1m1 0h1m12 0h1m4 0h1m5 0h2m1 0h1m5 0h1m2 0h1m7 0h1m3 0h1m6 0h1m7 0h1m2 0h1m3 0h1m4 0h1m1 0h1m14 0h1m1 0h1m1 0h3m1 0h1m3 0h1m1 0h1m2 0h1m1 0h1m3 0h1m1 0h1m10 0h2m3 0h2m2 0h1m3 0h1m9 0h2m5 0h1m5 0h3m1 0h1m2 0h2m1 0h2m2 0h1m4 0h1m3 0h1m1 0h1m3 0h3m2 0h6m1 0h1m1 0h2m1 0h1m1 0h1m1 0h2m4 0h1m1 0h2m4 0h1m3 0h1m3 0h1m2 0h1m3 0h1m2 0h1m1 0h1m2 0h1m2 0h1m2 0h1m1 0h1m4 0h1m1 0h4m2 0h1m4 0h2m1 0h1m4 0h2m4 0h1m1 0h1m1 0h3m2 0h2m1 0h1m3 0h1m2 0h2m3 0h1m-975 7h2m1 0h1m2 0h2m8 0h1m2 0h1m1 0h1m2 0h1m1 0h2m2 0h1m3 0h1m2 0h1m2 0h4m1 0h2m4 0h3m5 0h1m3 0h4m16 0h1m5 0h1m1 0h1m7 0h1m11 0h1m3 0h1m5 0h2m5 0h1m12 0h1m5 0h1m8 0h2m1 0h1m5 0h2m6 0h2m3 0h1m15 0h2m1 0h4m1 0h1m10 0h1m14 0h2m6 0h1m5 0h1m3 0h1m2 0h1m1 0h1m6 0h2m7 0h1m18 0h1m9 0h1m7 0h1m1 0h1m2 0h2m10 0h1m2 0h1m2 0h1m7 0h1m1 0h1m4 0h1m1 0h1m1 0h1m1 0h1m14 0h2m2 0h1m12 0h1m2 0h1m4 0h1m5 0h2m3 0h1m1 0h1m2 0h2m1 0h1m2 0h1m10 0h2m5 0h1m1 0h1m1 0h1m6 0h1m1 0h1m9 0h1m2 0h1m4 0h1m1 0h1m1 0h1m1 0h1m4 0h1m7 0h2m15 0h3m1 0h2m5 0h1m3 0h1m1 0h1m12 0h1m7 0h1m2 0h2m1 0h2m3 0h1m4 0h1m1 0h1m2 0h1m2 0h1m8 0h1m3 0h1m15 0h1m5 0h1m12 0h1m9 0h1m11 0h1m22 0h1m2 0h1m7 0h1m2 0h1m20 0h1m1 0h2m1 0h1m2 0h1m6 0h2m8 0h1m10 0h1m2 0h1m3 0h1m12 0h1m5 0h1m9 0h1m1 0h1m6 0h1m10 0h1m9 0h3m8 0h1m3 0h2m12 0h1m1 0h1m5 0h1m2 0h1m7 0h1m1 0h1m6 0h1m8 0h2m1 0h2m7 0h1m1 0h1m2 0h3m3 0h1m2 0h1m1 0h1m1 0h1m4 0h1m2 0h1m12 0h1m1 0h2m10 0h2m1 0h1m1 0h1m1 0h4m2 0h1m4 0h2m1 0h1m5 0h3m1 0h1m2 0h1m1 0h1m3 0h1m5 0h1m5 0h1m2 0h4m3 0h2m-985 13h1m8 0h1m1 0h1m2 0h1m1 0h1m1 0h1m1 0h1m1 0h3m2 0h1m8 0h1m4 0h1m4 0h1m6 0h1m8 0h1m13 0h2m3 0h1m8 0h2m2 0h1m9 0h1m4 0h1m7 0h1m6 0h1m4 0h2m12 0h1m1 0h1m8 0h1m1 0h1m3 0h2m4 0h1m14 0h1m6 0h1m16 0h1m12 0h1m3 0h1m1 0h1m11 0h1m14 0h1m14 0h2m1 0h1m1 0h1m3 0h1m19 0h3m7 0h1m5 0h2m1 0h2m8 0h1m7 0h1m13 0h1m1 0h3m14 0h1m7 0h1m12 0h1m2 0h1m1 0h1m11 0h1m2 0h2m1 0h1m14 0h4m12 0h1m1 0h1m1 0h1m5 0h1m6 0h1m5 0h1m4 0h1m4 0h1m4 0h1m8 0h2m1 0h1m4 0h1m6 0h1m5 0h1m5 0h1m11 0h1m13 0h1m2 0h1m2 0h1m11 0h1m4 0h1m2 0h1m4 0h1m14 0h1m11 0h1m5 0h1m8 0h1m12 0h2m7 0h1m11 0h1m4 0h1m4 0h1m9 0h2m13 0h2m4 0h1m14 0h2m1 0h1m2 0h2m2 0h1m2 0h1m2 0h2m11 0h5m2 0h1m2 0h1m6 0h1m4 0h4m2 0h1m24 0h1m9 0h1m2 0h2m4 0h3m2 0h1m5 0h1m3 0h1m3 0h1m6 0h1m12 0h1m5 0h1m4 0h1m7 0h2m5 0h2m4 0h1m5 0h1m2 0h1m3 0h1m5 0h1m2 0h1m2 0h1m6 0h1m3 0h1m4 0h4m3 0h1m2 0h1m1 0h3m1 0h1m1 0h1m2 0h4m1 0h2m3 0h1m1 0h1m5 0h2m1 0h2m2 0h3m7 0h2m4 0h1m2 0h2m-982 7h1m2 0h1m5 0h1m8 0h1m7 0h1m1 0h1m8 0h1m1 0h1m1 0h2m1 0h1m2 0h1m4 0h1m1 0h2m2 0h1m2 0h1m1 0h1m9 0h1m6 0h2m2 0h2m1 0h1m2 0h1m1 0h1m1 0h2m2 0h1m1 0h1m9 0h2m1 0h1m1 0h1m1 0h1m4 0h2m1 0h1m6 0h1m2 0h2m4 0h1m2 0h1m5 0h1m4 0h1m5 0h2m4 0h1m7 0h1m4 0h1m2 0h1m2 0h2m2 0h2m10 0h1m4 0h3m9 0h1m10 0h1m6 0h2m1 0h3m1 0h1m1 0h3m1 0h3m14 0h2m3 0h1m1 0h2m2 0h1m1 0h1m8 0h2m1 0h1m3 0h1m1 0h3m3 0h1m3 0h2m1 0h2m3 0h6m11 0h2m3 0h2m2 0h1m7 0h1m2 0h1m3 0h5m3 0h2m3 0h2m4 0h1m2 0h2m7 0h2m10 0h2m1 0h1m1 0h2m6 0h1m2 0h1m1 0h1m4 0h1m1 0h1m1 0h2m2 0h2m7 0h1m5 0h1m5 0h2m2 0h1m3 0h1m1 0h2m1 0h1m4 0h1m2 0h1m1 0h1m4 0h2m4 0h1m8 0h1m1 0h2m20 0h1m7 0h2m4 0h1m1 0h3m2 0h1m2 0h1m1 0h1m5 0h1m4 0h1m2 0h2m3 0h1m2 0h1m7 0h1m6 0h4m1 0h1m9 0h2m3 0h1m2 0h3m1 0h4m2 0h3m6 0h1m5 0h2m3 0h1m4 0h1m2 0h1m2 0h3m1 0h1m1 0h1m7 0h1m2 0h2m1 0h1m3 0h3m8 0h1m5 0h1m3 0h1m3 0h1m1 0h1m3 0h2m1 0h2m3 0h1m2 0h1m1 0h1m4 0h1m2 0h1m2 0h1m1 0h1m3 0h2m1 0h2m4 0h1m2 0h1m5 0h1m1 0h1m3 0h1m2 0h2m2 0h1m8 0h1m1 0h1m2 0h2m1 0h1m2 0h2m1 0h3m1 0h1m1 0h1m3 0h3m11 0h1m1 0h2m5 0h1m2 0h1m1 0h3m2 0h2m3 0h4m6 0h1m3 0h1m1 0h3m1 0h2m3 0h1m2 0h1m1 0h2m3 0h1m3 0h1m9 0h2m1 0h2m8 0h1m1 0h1m5 0h1m2 0h3m4 0h1m6 0h1m6 0h1m2 0h2m2 0h2m4 0h1m3 0h1m2 0h2m1 0h1m11 0h2m3 0h1m7 0h2m4 0h1m-983 7h1m3 0h1m1 0h2m1 0h2m1 0h1m1 0h2m3 0h2m1 0h1m3 0h1m1 0h2m3 0h1m4 0h5m3 0h1m4 0h1m2 0h3m3 0h1m2 0h1m10 0h1m7 0h1m1 0h1m6 0h2m1 0h2m3 0h2m5 0h1m10 0h1m1 0h1m3 0h1m5 0h1m12 0h1m13 0h1m5 0h1m2 0h1m18 0h1m1 0h1m2 0h1m11 0h1m3 0h1m5 0h2m5 0h2m1 0h1m2 0h1m7 0h2m7 0h2m9 0h1m2 0h1m1 0h1m11 0h2m1 0h1m12 0h1m2 0h1m6 0h1m12 0h1m3 0h1m4 0h1m1 0h1m2 0h1m5 0h2m8 0h1m2 0h1m2 0h1m1 0h1m20 0h1m3 0h1m11 0h1m1 0h1m4 0h1m3 0h1m7 0h1m4 0h1m7 0h1m1 0h3m1 0h2m1 0h1m2 0h1m13 0h1m8 0h2m10 0h1m4 0h2m1 0h1m17 0h1m1 0h1m5 0h2m2 0h1m5 0h1m2 0h2m2 0h1m17 0h1m1 0h1m2 0h1m5 0h2m2 0h1m3 0h3m2 0h1m8 0h2m7 0h1m4 0h1m9 0h1m4 0h3m2 0h1m2 0h1m2 0h1m5 0h1m4 0h1m3 0h1m1 0h1m4 0h2m5 0h1m7 0h1m10 0h1m12 0h1m12 0h1m9 0h1m1 0h1m5 0h1m6 0h1m1 0h1m1 0h1m15 0h1m10 0h1m1 0h1m2 0h1m10 0h2m2 0h1m1 0h1m10 0h1m8 0h1m1 0h1m9 0h1m2 0h2m1 0h1m10 0h1m6 0h1m1 0h1m1 0h1m2 0h1m1 0h1m2 0h3m4 0h1m5 0h1m1 0h1m5 0h1m3 0h1m5 0h2m2 0h1m5 0h9m1 0h1m7 0h2m2 0h1m1 0h1m4 0h1m1 0h1m1 0h1m1 0h2m1 0h1m4 0h1m2 0h1m3 0h1m3 0h1m1 0h1m2 0h1m5 0h2m2 0h2m11 0h3m3 0h1m1 0h2m2 0h1m2 0h1m1 0h1m2 0h1m2 0h1m1 0h1m2 0h1m1 0h1m6 0h1m-984 7h2m1 0h1m1 0h1m1 0h3m3 0h2m3 0h1m1 0h1m4 0h1m9 0h1m3 0h2m2 0h1m1 0h2m4 0h3m3 0h2m2 0h2m3 0h3m2 0h1m3 0h1m18 0h2m9 0h1m1 0h1m5 0h1m2 0h1m2 0h2m1 0h1m9 0h1m13 0h1m3 0h1m12 0h2m7 0h1m9 0h4m11 0h1m3 0h1m9 0h1m3 0h1m3 0h1m3 0h1m9 0h1m2 0h1m4 0h1m19 0h1m5 0h1m1 0h1m1 0h1m2 0h1m2 0h2m3 0h2m8 0h1m1 0h1m2 0h1m1 0h1m9 0h1m2 0h1m8 0h2m3 0h1m1 0h1m2 0h1m6 0h1m2 0h1m5 0h1m8 0h1m6 0h1m5 0h1m3 0h1m2 0h1m3 0h1m4 0h2m1 0h1m9 0h1m1 0h1m2 0h1m9 0h1m2 0h1m21 0h1m7 0h1m5 0h1m8 0h1m25 0h1m3 0h1m3 0h1m2 0h1m2 0h1m17 0h1m19 0h1m6 0h1m18 0h1m1 0h1m10 0h2m7 0h1m3 0h1m6 0h1m3 0h2m9 0h1m2 0h1m3 0h1m1 0h1m5 0h2m1 0h2m4 0h1m5 0h1m3 0h1m3 0h1m5 0h1m5 0h1m1 0h1m6 0h1m4 0h1m1 0h1m1 0h1m4 0h1m1 0h1m4 0h1m8 0h1m1 0h1m1 0h1m4 0h2m1 0h1m5 0h1m8 0h3m2 0h1m3 0h1m4 0h1m5 0h3m1 0h1m3 0h2m1 0h1m8 0h1m5 0h1m7 0h1m1 0h1m1 0h1m3 0h1m2 0h1m10 0h1m12 0h1m1 0h1m3 0h1m1 0h1m7 0h3m1 0h1m11 0h2m2 0h1m2 0h2m1 0h1m3 0h1m3 0h4m1 0h1m1 0h3m3 0h1m1 0h1m1 0h1m7 0h2m11 0h1m1 0h2m1 0h1m3 0h2m1 0h1m2 0h1m1 0h1m1 0h2m1 0h1m2 0h1m10 0h1m1 0h5m5 0h1m1 0h1m4 0h4m4 0h1m3 0h3m1 0h1m1 0h1m4 0h1m-985 7h1m6 0h2m7 0h1m10 0h1m1 0h1m1 0h2m2 0h1m1 0h1m3 0h1m2 0h1m3 0h1m1 0h1m3 0h1m6 0h1m7 0h1m3 0h1m2 0h1m9 0h1m4 0h2m2 0h2m7 0h2m6 0h2m1 0h2m1 0h3m4 0h1m3 0h2m2 0h1m1 0h1m5 0h2m3 0h1m8 0h1m11 0h1m4 0h2m4 0h1m9 0h1m3 0h1m8 0h1m2 0h1m6 0h1m2 0h1m2 0h4m10 0h1m3 0h1m11 0h1m2 0h1m5 0h1m4 0h1m8 0h1m11 0h1m6 0h1m2 0h1m9 0h1m16 0h1m1 0h2m1 0h1m1 0h1m1 0h1m9 0h1m1 0h1m8 0h1m4 0h1m10 0h1m3 0h1m2 0h2m1 0h1m3 0h1m9 0h1m10 0h1m2 0h1m13 0h1m1 0h2m3 0h1m2 0h2m2 0h1m7 0h1m3 0h1m3 0h2m3 0h1m1 0h1m9 0h1m4 0h2m3 0h1m12 0h2m9 0h1m15 0h2m6 0h1m7 0h1m6 0h1m1 0h1m2 0h1m4 0h1m3 0h1m4 0h1m2 0h1m16 0h1m3 0h2m1 0h1m6 0h1m5 0h1m3 0h1m2 0h1m1 0h1m8 0h1m16 0h1m2 0h1m5 0h1m5 0h2m2 0h1m3 0h1m4 0h1m16 0h1m7 0h1m2 0h1m2 0h1m6 0h1m5 0h1m5 0h1m2 0h1m9 0h1m1 0h2m3 0h1m5 0h1m14 0h2m6 0h3m4 0h2m4 0h1m11 0h1m3 0h1m16 0h2m3 0h4m12 0h2m15 0h1m7 0h1m3 0h1m3 0h2m3 0h2m8 0h1m3 0h1m1 0h1m1 0h1m1 0h1m1 0h1m4 0h1m2 0h1m1 0h2m3 0h1m3 0h1m2 0h2m3 0h1m7 0h1m6 0h1m3 0h1m2 0h2m1 0h1m1 0h1m1 0h2m1 0h1m3 0h1m2 0h3m2 0h3m2 0h2m3 0h1m1 0h1m3 0h1m2 0h3m3 0h1m2 0h1"/><path stroke="#ccdd42" stroke-width="1" d="M2 237.5h3m1 0h1m2 0h2m4 0h1m7 0h1m3 0h1m2 0h4m5 0h2m2 0h1m10 0h1m4 0h1m1 0h2m5 0h1m1 0h1m1 0h1m3 0h1m10 0h1m2 0h1m3 0h1m6 0h1m10 0h1m1 0h1m6 0h3m10 0h2m7 0h3m5 0h1m1 0h1m13 0h2m19 0h2m11 0h3m1 0h1m4 0h1m1 0h1m9 0h1m2 0h2m2 0h1m2 0h1m1 0h1m1 0h1m2 0h1m4 0h1m1 0h1m2 0h1m10 0h1m9 0h1m7 0h1m1 0h2m6 0h1m3 0h1m2 0h1m2 0h1m1 0h1m8 0h2m4 0h1m6 0h1m6 0h1m19 0h1m12 0h1m11 0h1m8 0h1m1 0h2m1 0h1m4 0h1m3 0h1m3 0h1m7 0h1m4 0h2m16 0h1m14 0h1m4 0h1m2 0h1m2 0h1m3 0h1m5 0h1m5 0h1m1 0h1m5 0h1m3 0h1m8 0h1m4 0h1m1 0h1m5 0h1m1 0h1m4 0h1m13 0h1m4 0h1m2 0h2m2 0h1m1 0h1m2 0h1m7 0h1m2 0h1m4 0h1m10 0h2m1 0h1m11 0h1m5 0h1m3 0h1m6 0h1m4 0h1m9 0h2m8 0h3m8 0h1m5 0h1m5 0h1m3 0h1m10 0h1m1 0h1m7 0h1m1 0h1m6 0h1m2 0h2m1 0h1m13 0h1m1 0h1m1 0h1m3 0h1m4 0h3m4 0h1m12 0h1m7 0h1m5 0h2m4 0h1m1 0h1m7 0h2m1 0h1m3 0h1m6 0h1m4 0h2m4 0h1m2 0h1m4 0h1m3 0h2m2 0h1m1 0h1m2 0h1m3 0h2m4 0h1m2 0h1m3 0h1m3 0h1m3 0h1m2 0h1m17 0h2m2 0h1m1 0h2m1 0h1m5 0h1m4 0h4m4 0h1m4 0h1m2 0h1m2 0h1m1 0h2m2 0h2m3 0h1m9 0h2m1 0h2m3 0h1m1 0h1m2 0h2m8 0h1m1 0h3m3 0h1m1 0h2m1 0h1m5 0h1m2 0h2m1 0h1m1 0h2m1 0h2m3 0h1m1 0h2"/><path stroke="#dce82e" stroke-width="5" d="M9 2.5h1m13 0h2m4 0h1m2 0h2m2 0h1m8 0h1m2 0h1m6 0h1m5 0h1m4 0h1m1 0h1m10 0h1m3 0h1m7 0h2m3 0h1m2 0h1m3 0h1m1 0h1m3 0h1m10 0h1m3 0h1m4 0h1m4 0h1m3 0h1m1 0h1m5 0h1m1 0h1m3 0h1m1 0h2m1 0h2m3 0h3m6 0h1m3 0h1m2 0h1m4 0h2m2 0h2m1 0h1m1 0h1m7 0h1m2 0h4m1 0h2m6 0h2m1 0h1m1 0h3m3 0h1m1 0h1m3 0h1m1 0h1m1 0h2m2 0h1m4 0h2m1 0h1m5 0h2m3 0h2m3 0h2m4 0h2m2 0h3m5 0h1m3 0h2m1 0h1m2 0h1m11 0h1m2 0h2m1 0h1m1 0h1m5 0h1m1 0h3m7 0h2m1 0h1m2 0h4m3 0h1m4 0h1m1 0h2m2 0h1m5 0h1m2 0h1m1 0h2m1 0h2m1 0h2m1 0h1m2 0h1m1 0h1m2 0h3m4 0h3m1 0h1m1 0h1m8 0h2m1 0h2m2 0h1m7 0h1m7 0h1m1 0h1m1 0h1m4 0h1m1 0h2m2 0h4m2 0h1m1 0h1m2 0h1m5 0h1m1 0h1m1 0h1m4 0h1m1 0h1m3 0h1m2 0h1m2 0h1m5 0h2m1 0h2m2 0h2m1 0h2m4 0h4m4 0h1m2 0h1m1 0h1m1 0h2m1 0h1m2 0h2m2 0h1m4 0h1m2 0h2m4 0h1m7 0h1m5 0h2m1 0h2m1 0h1m5 0h1m1 0h2m1 0h1m1 0h1m5 0h1m4 0h1m8 0h1m3 0h1m15 0h1m9 0h1m5 0h3m1 0h1m1 0h1m2 0h1m2 0h1m1 0h1m6 0h5m3 0h1m2 0h5m5 0h1m7 0h1m1 0h1m1 0h1m3 0h1m2 0h1m3 0h1m10 0h1m3 0h1m1 0h1m1 0h1m3 0h1m2 0h1m3 0h1m1 0h1m4 0h1m1 0h1m2 0h1m4 0h1m3 0h1m3 0h2m3 0h3m8 0h2m1 0h1m12 0h1m2 0h1m4 0h2m1 0h2m1 0h1m2 0h1m1 0h1m1 0h1m3 0h1m2 0h1m8 0h1m1 0h4m5 0h1m3 0h2m9 0h2m1 0h1m1 0h1m4 0h2m2 0h2m2 0h2m12 0h1m13 0h1m3 0h1m2 0h1m1 0h2m23 0h4m1 0h1m6 0h1m39 0h1"/><path stroke="#dce82e" stroke-width="6" d="M1 8h1m11 0h1m21 0h1m8 0h1m4 0h1m1 0h1m4 0h1m12 0h1m1 0h1m6 0h1m3 0h1m7 0h1m8 0h1m1 0h2m2 0h1m1 0h1m1 0h1m10 0h1m10 0h1m1 0h1m2 0h1m2 0h1m3 0h1m2 0h1m1 0h1m1 0h1m1 0h2m1 0h1m5 0h1m2 0h2m4 0h1m4 0h1m3 0h1m3 0h1m1 0h3m3 0h1m5 0h2m1 0h1m1 0h1m1 0h1m1 0h1m3 0h2m1 0h1m6 0h2m4 0h2m1 0h1m6 0h1m1 0h1m1 0h1m1 0h1m5 0h1m4 0h1m1 0h1m2 0h1m4 0h1m1 0h1m2 0h1m3 0h1m4 0h1m6 0h1m4 0h1m1 0h2m12 0h1m2 0h2m3 0h1m3 0h1m1 0h1m2 0h1m1 0h1m1 0h1m8 0h1m2 0h1m1 0h1m10 0h2m2 0h1m5 0h2m6 0h1m8 0h1m1 0h4m1 0h1m2 0h1m1 0h2m8 0h1m5 0h1m7 0h1m1 0h1m1 0h1m2 0h4m3 0h1m1 0h1m2 0h1m2 0h1m1 0h1m4 0h1m1 0h2m3 0h1m3 0h2m5 0h1m1 0h1m7 0h1m15 0h1m1 0h1m4 0h1m2 0h1m3 0h1m1 0h1m2 0h2m3 0h1m4 0h3m2 0h2m2 0h1m1 0h1m5 0h1m1 0h1m3 0h1m2 0h2m1 0h1m2 0h2m4 0h1m6 0h1m13 0h1m2 0h2m1 0h1m3 0h1m3 0h4m2 0h1m3 0h1m5 0h1m4 0h1m4 0h1m1 0h1m5 0h2m1 0h2m1 0h1m6 0h1m1 0h1m7 0h1m19 0h1m1 0h3m5 0h1m5 0h1m1 0h1m2 0h6m5 0h1m6 0h1m8 0h2m4 0h1m3 0h1m1 0h1m1 0h2m12 0h2m1 0h1m2 0h1m14 0h2m3 0h1m1 0h1m2 0h1m1 0h1m2 0h1m1 0h1m3 0h2m3 0h1m4 0h1m1 0h1m1 0h1m2 0h1m1 0h3m9 0h2m6 0h1m3 0h1m2 0h2m2 0h1m5 0h2m15 0h1m6 0h1m3 0h1m19 0h1m13 0h1m3 0h1m1 0h1m11 0h1m2 0h1m27 0h1m16 0h1m9 0h1m-960 48h1m23 0h1m11 0h1m2 0h1m1 0h1m2 0h2m1 0h1m4 0h2m4 0h1m5 0h1m2 0h1m1 0h1m3 0h1m2 0h1m1 0h1m1 0h1m1 0h1m4 0h1m5 0h1m1 0h1m2 0h1m5 0h1m6 0h2m7 0h1m3 0h2m1 0h1m2 0h2m1 0h3m5 0h1m2 0h1m16 0h2m1 0h3m3 0h2m1 0h2m3 0h1m6 0h1m4 0h1m1 0h1m5 0h1m1 0h1m2 0h1m5 0h1m4 0h3m1 0h1m5 0h1m2 0h1m2 0h1m1 0h1m1 0h1m3 0h1m1 0h2m2 0h1m4 0h2m1 0h2m1 0h1m10 0h1m1 0h1m1 0h2m1 0h1m8 0h1m7 0h1m1 0h1m16 0h2m2 0h2m3 0h1m3 0h1m1 0h1m6 0h1m1 0h1m2 0h1m1 0h1m2 0h1m2 0h1m3 0h1m1 0h3m3 0h2m6 0h3m1 0h1m1 0h4m2 0h1m1 0h1m6 0h1m6 0h3m2 0h1m10 0h1m2 0h3m1 0h1m2 0h1m6 0h1m1 0h1m1 0h1m6 0h2m2 0h1m1 0h2m3 0h3m1 0h1m1 0h1m2 0h1m2 0h2m6 0h2m13 0h1m3 0h1m7 0h1m2 0h1m2 0h3m4 0h1m1 0h2m2 0h1m4 0h2m7 0h2m4 0h1m4 0h1m11 0h1m6 0h2m1 0h4m3 0h4m3 0h1m1 0h1m6 0h1m5 0h2m1 0h2m2 0h1m6 0h2m1 0h1m1 0h1m2 0h1m6 0h1m5 0h1m5 0h1m1 0h1m3 0h2m3 0h1m6 0h2m6 0h1m1 0h1m2 0h1m1 0h1m2 0h1m1 0h1m7 0h1m2 0h1m13 0h1m11 0h1m4 0h2m1 0h1m1 0h1m1 0h1m3 0h2m8 0h1m1 0h1m1 0h2m13 0h1m2 0h2m1 0h1m2 0h1m4 0h2m2 0h3m4 0h4m2 0h1m6 0h2m5 0h1m3 0h2m4 0h1m13 0h1m2 0h1m6 0h3m12 0h1m1 0h2m11 0h2m4 0h1m5 0h2m3 0h2m12 0h1m2 0h1m2 0h1m1 0h1m2 0h1m6 0h1m1 0h1m3 0h2m12 0h2m-928 41h1m6 0h1m2 0h1m9 0h1m1 0h1m1 0h1m4 0h1m4 0h1m1 0h1m2 0h1m4 0h1m5 0h1m14 0h1m1 0h1m3 0h1m4 0h3m3 0h1m6 0h1m3 0h2m1 0h1m4 0h1m8 0h1m5 0h2m7 0h1m5 0h1m4 0h3m1 0h1m1 0h1m1 0h1m3 0h1m3 0h4m2 0h2m2 0h3m1 0h1m2 0h2m1 0h1m3 0h1m1 0h1m1 0h4m5 0h2m3 0h1m1 0h1m4 0h1m1 0h1m6 0h1m7 0h2m2 0h1m1 0h1m2 0h1m2 0h2m1 0h1m1 0h1m5 0h4m8 0h1m1 0h1m2 0h2m6 0h2m14 0h1m4 0h1m2 0h1m2 0h2m1 0h1m2 0h2m11 0h3m1 0h1m2 0h1m8 0h1m2 0h1m3 0h1m1 0h2m4 0h1m4 0h6m9 0h2m4 0h1m3 0h1m3 0h2m7 0h2m1 0h2m2 0h1m2 0h1m8 0h1m2 0h1m5 0h1m1 0h1m1 0h2m2 0h3m13 0h1m1 0h2m2 0h2m3 0h2m2 0h1m4 0h1m1 0h3m1 0h1m2 0h1m1 0h3m3 0h1m1 0h1m5 0h2m2 0h1m3 0h1m1 0h1m1 0h1m1 0h1m1 0h1m1 0h6m1 0h2m1 0h1m1 0h3m4 0h2m1 0h1m7 0h2m2 0h1m8 0h2m4 0h1m1 0h1m4 0h1m1 0h3m5 0h1m2 0h1m2 0h2m1 0h1m2 0h1m4 0h3m3 0h1m2 0h1m1 0h1m5 0h1m2 0h1m3 0h1m4 0h1m9 0h2m1 0h3m1 0h1m1 0h1m8 0h4m2 0h1m3 0h1m8 0h1m1 0h2m4 0h1m2 0h1m2 0h2m1 0h1m9 0h1m1 0h1m1 0h3m4 0h2m2 0h1m2 0h4m3 0h1m12 0h1m3 0h1m6 0h2m13 0h1m6 0h1m2 0h1m1 0h1m2 0h2m9 0h1m3 0h2m1 0h1m1 0h1m3 0h1m5 0h1m2 0h2m3 0h1m1 0h2m2 0h1m11 0h1m9 0h1m2 0h1m8 0h2m3 0h1m16 0h2m4 0h3m3 0h1m7 0h1m3 0h2m19 0h1m18 0h1m8 0h1m16 0h1m-958 48h1m7 0h1m21 0h1m3 0h2m1 0h1m3 0h1m1 0h2m1 0h1m3 0h1m1 0h1m6 0h1m2 0h2m8 0h1m1 0h2m1 0h1m2 0h1m1 0h2m13 0h2m2 0h1m4 0h1m7 0h1m1 0h1m2 0h1m4 0h2m1 0h2m1 0h1m2 0h1m5 0h3m9 0h3m1 0h1m1 0h1m2 0h2m1 0h2m3 0h1m1 0h1m2 0h1m3 0h2m2 0h1m4 0h1m6 0h2m2 0h1m2 0h1m5 0h1m1 0h1m2 0h1m1 0h3m1 0h1m2 0h1m1 0h1m4 0h1m1 0h1m2 0h1m1 0h1m8 0h3m5 0h1m14 0h4m2 0h1m12 0h5m1 0h1m2 0h2m4 0h2m1 0h1m4 0h1m2 0h2m2 0h1m1 0h1m1 0h3m2 0h5m3 0h2m2 0h2m1 0h2m2 0h3m3 0h2m8 0h1m1 0h2m2 0h1m2 0h1m1 0h2m2 0h3m12 0h1m2 0h1m6 0h1m3 0h1m1 0h1m1 0h1m2 0h1m1 0h5m4 0h1m1 0h2m12 0h1m1 0h1m1 0h1m1 0h1m1 0h1m4 0h1m3 0h1m3 0h1m4 0h1m3 0h2m3 0h1m5 0h1m17 0h3m3 0h4m6 0h3m1 0h1m10 0h1m1 0h1m1 0h1m2 0h1m1 0h1m2 0h1m5 0h1m1 0h1m6 0h1m2 0h2m2 0h2m1 0h2m1 0h1m2 0h1m1 0h1m1 0h1m3 0h1m4 0h1m4 0h1m1 0h3m3 0h1m2 0h4m2 0h1m3 0h1m3 0h3m1 0h1m8 0h4m1 0h1m3 0h1m1 0h1m2 0h3m1 0h1m3 0h2m2 0h1m2 0h1m3 0h1m11 0h2m4 0h1m14 0h1m2 0h1m1 0h1m1 0h1m2 0h1m1 0h1m3 0h1m3 0h1m5 0h3m1 0h1m2 0h3m2 0h1m3 0h2m1 0h1m5 0h2m3 0h2m2 0h1m1 0h1m4 0h3m4 0h2m1 0h2m4 0h4m1 0h1m1 0h1m6 0h1m2 0h1m3 0h5m1 0h1m6 0h1m1 0h1m2 0h1m7 0h1m4 0h1m3 0h1m1 0h1m1 0h1m1 0h2m3 0h1m2 0h1m4 0h1m3 0h4m12 0h4m1 0h1m3 0h1m6 0h1m13 0h2m12 0h1m4 0h1m7 0h1m1 0h1m1 0h1m8 0h1m10 0h1m2 0h2m6 0h2m-960 48h1m2 0h2m1 0h1m2 0h1m3 0h1m6 0h1m1 0h2m4 0h2m1 0h1m6 0h3m1 0h2m1 0h2m24 0h1m2 0h1m3 0h1m1 0h1m3 0h1m5 0h2m3 0h1m3 0h1m1 0h2m2 0h3m2 0h1m4 0h1m2 0h3m4 0h1m1 0h2m3 0h1m1 0h1m5 0h1m2 0h1m4 0h1m3 0h1m10 0h2m8 0h2m3 0h1m1 0h1m1 0h1m3 0h3m1 0h1m2 0h2m4 0h3m1 0h1m3 0h1m1 0h1m1 0h1m8 0h1m2 0h2m2 0h2m1 0h1m7 0h1m8 0h1m6 0h4m1 0h1m4 0h2m3 0h2m2 0h1m2 0h1m7 0h1m1 0h1m1 0h1m2 0h2m3 0h1m1 0h1m4 0h2m2 0h1m1 0h4m4 0h1m2 0h1m1 0h2m1 0h1m4 0h1m1 0h2m1 0h1m1 0h1m5 0h2m2 0h1m7 0h1m2 0h1m2 0h1m1 0h2m2 0h1m1 0h1m1 0h4m4 0h1m2 0h2m5 0h3m1 0h6m10 0h2m3 0h1m3 0h2m7 0h1m1 0h1m1 0h1m5 0h1m2 0h2m1 0h1m5 0h2m1 0h1m8 0h1m1 0h1m3 0h2m3 0h1m4 0h1m1 0h1m5 0h1m5 0h1m5 0h1m1 0h1m4 0h5m1 0h1m3 0h2m3 0h1m2 0h3m1 0h2m2 0h2m1 0h2m1 0h2m2 0h2m2 0h1m9 0h1m3 0h3m4 0h5m1 0h1m1 0h1m1 0h1m4 0h1m1 0h2m2 0h1m1 0h1m2 0h2m1 0h3m2 0h1m1 0h2m6 0h1m1 0h2m4 0h1m1 0h1m2 0h3m1 0h1m1 0h1m2 0h2m2 0h1m4 0h1m1 0h1m1 0h1m6 0h1m3 0h5m1 0h1m2 0h2m3 0h3m11 0h2m3 0h1m3 0h4m1 0h3m2 0h2m4 0h1m2 0h3m1 0h1m2 0h2m2 0h2m1 0h4m2 0h1m2 0h1m2 0h1m3 0h1m5 0h2m1 0h1m1 0h8m4 0h1m1 0h1m1 0h1m1 0h1m3 0h1m3 0h4m2 0h1m1 0h2m1 0h1m1 0h1m6 0h1m7 0h2m1 0h1m3 0h1m1 0h1m3 0h1m1 0h1m7 0h1m1 0h2m1 0h2m1 0h1m1 0h1m4 0h1m3 0h1m1 0h1m1 0h1m3 0h1m2 0h1m2 0h1m2 0h1m4 0h1m1 0h1m4 0h5m4 0h2m4 0h1m2 0h1m5 0h1m2 0h1m1 0h1m20 0h1m14 0h1m1 0h2m2 0h1m-970 41h1m10 0h2m12 0h1m6 0h1m5 0h1m1 0h1m5 0h2m3 0h2m1 0h1m6 0h2m4 0h1m4 0h1m4 0h1m9 0h1m8 0h2m4 0h1m11 0h1m2 0h1m2 0h2m2 0h1m3 0h1m1 0h3m2 0h3m2 0h4m4 0h3m1 0h1m1 0h2m5 0h1m8 0h1m1 0h2m2 0h2m3 0h1m1 0h1m1 0h1m3 0h1m4 0h2m4 0h2m1 0h1m4 0h1m2 0h2m5 0h2m5 0h1m3 0h1m6 0h4m1 0h1m2 0h3m1 0h1m1 0h4m1 0h1m2 0h2m1 0h1m1 0h2m3 0h2m2 0h1m1 0h1m1 0h1m3 0h1m3 0h1m4 0h1m2 0h2m4 0h2m3 0h1m1 0h1m4 0h2m1 0h2m7 0h1m4 0h1m1 0h1m6 0h1m4 0h1m2 0h1m3 0h1m3 0h1m2 0h1m2 0h3m1 0h3m1 0h1m1 0h1m6 0h1m5 0h2m2 0h1m1 0h1m4 0h1m4 0h1m7 0h2m2 0h1m2 0h1m2 0h1m3 0h1m2 0h1m4 0h1m1 0h2m4 0h2m1 0h1m3 0h1m2 0h1m2 0h1m1 0h1m3 0h1m3 0h1m1 0h1m3 0h3m1 0h2m5 0h2m1 0h1m3 0h1m1 0h1m3 0h1m10 0h1m4 0h2m4 0h1m3 0h2m1 0h2m3 0h4m3 0h1m1 0h1m6 0h1m1 0h2m3 0h1m8 0h1m4 0h2m1 0h1m2 0h1m2 0h1m7 0h1m3 0h1m2 0h2m3 0h1m1 0h1m1 0h3m2 0h1m1 0h1m3 0h2m2 0h2m4 0h1m2 0h1m3 0h1m2 0h2m1 0h2m4 0h1m2 0h1m4 0h1m1 0h1m2 0h1m2 0h1m3 0h1m2 0h1m1 0h1m2 0h1m4 0h1m1 0h2m3 0h1m4 0h1m2 0h3m3 0h1m1 0h1m11 0h1m3 0h1m3 0h2m3 0h1m3 0h1m5 0h3m1 0h3m1 0h1m1 0h1m4 0h1m4 0h1m2 0h2m1 0h1m1 0h2m5 0h1m1 0h1m1 0h3m3 0h2m6 0h1m5 0h1m8 0h2m3 0h2m1 0h1m4 0h1m9 0h1m1 0h2m3 0h1m1 0h4m7 0h1m10 0h1m2 0h3m3 0h3m5 0h1m5 0h1m3 0h1m1 0h1m1 0h1m8 0h1m3 0h4m1 0h1m4 0h1m4 0h2m1 0h1m9 0h1m2 0h1m2 0h3m4 0h1m1 0h1m24 0h1m13 0h1m3 0h1"/><path stroke="#dce82e" stroke-width="7" d="M41 14.5h1m2 0h1m1 0h1m1 0h1m1 0h1m2 0h2m7 0h3m2 0h1m1 0h3m9 0h3m2 0h1m3 0h1m6 0h1m2 0h2m1 0h1m5 0h3m4 0h1m2 0h1m2 0h1m6 0h1m1 0h1m2 0h4m4 0h1m3 0h2m1 0h2m1 0h1m1 0h1m7 0h2m7 0h1m5 0h1m2 0h1m2 0h1m6 0h2m6 0h2m1 0h1m2 0h1m3 0h1m7 0h1m2 0h1m5 0h2m1 0h2m1 0h2m1 0h4m2 0h4m3 0h1m13 0h1m1 0h3m5 0h2m4 0h1m2 0h1m1 0h1m2 0h1m1 0h2m1 0h1m1 0h1m8 0h1m2 0h1m12 0h2m1 0h1m2 0h1m1 0h1m1 0h1m7 0h1m2 0h4m1 0h4m1 0h1m2 0h1m3 0h4m11 0h1m16 0h1m1 0h1m1 0h1m7 0h1m8 0h1m1 0h1m2 0h1m3 0h2m3 0h1m1 0h1m1 0h1m4 0h2m1 0h1m1 0h2m8 0h1m1 0h3m1 0h1m4 0h1m3 0h2m4 0h2m2 0h1m3 0h1m8 0h1m5 0h1m1 0h4m3 0h1m5 0h1m2 0h1m9 0h1m1 0h3m1 0h1m6 0h1m2 0h1m2 0h2m5 0h1m1 0h1m2 0h1m6 0h1m5 0h1m3 0h1m3 0h3m5 0h2m7 0h1m1 0h2m2 0h1m1 0h1m3 0h2m3 0h1m1 0h1m2 0h1m3 0h1m7 0h1m5 0h1m1 0h1m2 0h1m1 0h1m2 0h3m4 0h1m1 0h1m13 0h1m3 0h1m2 0h2m4 0h1m4 0h1m3 0h3m1 0h1m2 0h1m1 0h1m3 0h2m9 0h3m10 0h2m1 0h3m5 0h1m2 0h1m2 0h1m5 0h1m1 0h3m8 0h1m7 0h1m1 0h2m3 0h1m8 0h1m1 0h2m11 0h2m6 0h1m1 0h1m2 0h2m6 0h1m2 0h1m2 0h3m11 0h4m7 0h1m4 0h1m1 0h1m1 0h1m2 0h1m2 0h1m1 0h1m2 0h1m5 0h1m2 0h2m8 0h1m1 0h3m5 0h1m3 0h1m2 0h1m8 0h1m7 0h1m7 0h2m5 0h1m5 0h1m12 0h1m2 0h1m15 0h1m9 0h1m-946 7h1m7 0h1m2 0h1m5 0h1m1 0h1m11 0h1m2 0h1m2 0h1m2 0h1m1 0h1m2 0h1m1 0h1m1 0h1m6 0h1m2 0h2m1 0h1m2 0h1m2 0h1m2 0h1m5 0h1m4 0h1m3 0h1m2 0h2m12 0h1m4 0h1m1 0h2m1 0h1m1 0h1m4 0h1m3 0h1m1 0h1m5 0h1m1 0h1m4 0h1m6 0h1m3 0h1m1 0h1m1 0h1m7 0h1m4 0h1m1 0h1m1 0h3m9 0h1m6 0h1m1 0h1m1 0h1m1 0h1m4 0h1m4 0h1m3 0h1m7 0h2m2 0h2m1 0h1m2 0h1m4 0h1m1 0h2m3 0h2m1 0h2m4 0h1m1 0h1m1 0h1m2 0h1m6 0h1m5 0h1m6 0h1m1 0h1m1 0h2m4 0h1m5 0h1m3 0h2m10 0h2m3 0h1m2 0h1m5 0h1m3 0h1m7 0h2m4 0h1m4 0h1m2 0h1m4 0h1m1 0h1m6 0h1m8 0h1m5 0h1m2 0h1m1 0h1m3 0h1m1 0h3m7 0h2m9 0h1m3 0h1m3 0h1m4 0h1m1 0h1m9 0h2m6 0h1m4 0h3m7 0h1m4 0h1m5 0h2m5 0h2m6 0h1m3 0h1m7 0h1m1 0h1m7 0h1m5 0h1m4 0h2m13 0h1m1 0h2m3 0h4m5 0h1m2 0h1m5 0h1m1 0h3m1 0h4m2 0h1m9 0h1m1 0h1m2 0h6m2 0h3m6 0h1m1 0h1m5 0h1m3 0h1m1 0h1m4 0h1m3 0h1m1 0h1m9 0h2m1 0h1m3 0h2m1 0h2m8 0h1m11 0h2m2 0h2m2 0h1m14 0h1m7 0h1m1 0h1m1 0h1m2 0h1m14 0h1m3 0h2m1 0h1m8 0h1m5 0h1m1 0h1m2 0h1m2 0h1m9 0h1m1 0h2m3 0h2m4 0h3m1 0h1m2 0h1m5 0h1m4 0h1m2 0h1m6 0h1m1 0h2m1 0h1m6 0h1m2 0h1m6 0h2m14 0h1m9 0h1m3 0h1m11 0h1m3 0h1m27 0h1m16 0h1m8 0h1m-945 7h1m32 0h1m1 0h1m3 0h2m3 0h1m2 0h1m1 0h1m2 0h2m1 0h1m3 0h1m3 0h1m3 0h1m1 0h1m10 0h1m1 0h1m2 0h2m6 0h1m7 0h1m1 0h2m5 0h1m5 0h1m1 0h1m1 0h1m1 0h1m5 0h1m16 0h1m2 0h1m2 0h1m6 0h1m1 0h1m10 0h2m3 0h1m4 0h1m4 0h1m5 0h1m2 0h1m3 0h1m5 0h1m1 0h1m2 0h1m1 0h1m11 0h1m1 0h2m3 0h1m8 0h1m4 0h1m2 0h1m9 0h1m1 0h2m7 0h1m6 0h2m7 0h2m3 0h1m1 0h1m2 0h1m1 0h1m3 0h1m1 0h1m11 0h1m3 0h2m2 0h1m2 0h2m5 0h1m2 0h1m1 0h1m2 0h1m4 0h1m4 0h1m1 0h1m1 0h1m1 0h1m1 0h1m9 0h1m4 0h1m1 0h2m4 0h1m1 0h1m3 0h2m5 0h1m1 0h1m2 0h1m1 0h1m4 0h1m10 0h2m1 0h1m2 0h1m2 0h2m9 0h2m2 0h1m9 0h2m1 0h1m3 0h2m5 0h2m5 0h1m1 0h1m1 0h1m6 0h1m3 0h1m2 0h1m11 0h1m1 0h1m7 0h1m6 0h1m2 0h1m3 0h1m1 0h1m3 0h1m2 0h3m4 0h2m1 0h2m6 0h2m2 0h2m2 0h2m3 0h2m16 0h1m9 0h1m2 0h1m1 0h2m1 0h2m3 0h1m2 0h4m5 0h1m4 0h1m2 0h1m4 0h1m5 0h3m3 0h1m4 0h1m1 0h1m2 0h1m3 0h1m4 0h2m5 0h1m3 0h1m2 0h1m2 0h1m8 0h1m1 0h2m9 0h1m6 0h1m1 0h1m8 0h2m4 0h1m6 0h2m3 0h1m1 0h2m5 0h1m4 0h1m6 0h1m2 0h1m9 0h1m2 0h1m2 0h1m1 0h1m7 0h1m1 0h2m7 0h1m4 0h1m1 0h1m1 0h1m2 0h4m5 0h1m5 0h1m24 0h1m1 0h1m8 0h2m8 0h1m4 0h1m5 0h1m8 0h1m16 0h1m24 0h1m-928 7h1m25 0h1m6 0h1m13 0h1m4 0h1m1 0h3m1 0h1m5 0h1m3 0h2m1 0h1m2 0h4m15 0h1m11 0h1m1 0h1m2 0h4m2 0h1m3 0h1m1 0h3m3 0h1m6 0h3m5 0h2m2 0h1m3 0h3m1 0h1m4 0h1m2 0h1m4 0h1m5 0h1m3 0h1m3 0h1m6 0h1m2 0h1m9 0h2m1 0h1m6 0h2m2 0h1m2 0h4m5 0h1m6 0h1m1 0h1m3 0h1m2 0h1m1 0h1m3 0h3m3 0h1m2 0h1m6 0h1m10 0h1m1 0h3m5 0h1m2 0h1m2 0h1m1 0h1m1 0h2m5 0h1m3 0h1m3 0h1m2 0h2m3 0h3m1 0h1m3 0h1m3 0h1m7 0h1m2 0h1m1 0h1m8 0h1m1 0h1m5 0h1m3 0h2m1 0h1m3 0h1m12 0h1m5 0h1m2 0h1m1 0h3m7 0h2m2 0h1m3 0h1m5 0h1m6 0h2m2 0h1m2 0h1m4 0h1m2 0h2m1 0h1m7 0h2m2 0h3m3 0h2m3 0h1m10 0h1m1 0h1m11 0h1m8 0h1m8 0h1m2 0h2m1 0h1m7 0h2m1 0h1m2 0h1m5 0h2m2 0h1m1 0h1m1 0h1m1 0h2m3 0h1m6 0h1m2 0h1m2 0h1m1 0h1m3 0h1m4 0h1m3 0h1m3 0h1m1 0h2m1 0h1m5 0h1m3 0h2m3 0h1m1 0h1m5 0h1m1 0h2m4 0h2m7 0h1m1 0h1m8 0h1m2 0h1m1 0h2m5 0h1m2 0h2m1 0h1m1 0h1m6 0h1m1 0h1m2 0h1m10 0h1m1 0h1m6 0h1m2 0h1m8 0h4m4 0h1m1 0h1m1 0h2m3 0h1m3 0h1m4 0h1m2 0h1m4 0h1m7 0h2m11 0h1m15 0h1m1 0h1m1 0h1m9 0h1m1 0h1m22 0h2m1 0h3m6 0h1m18 0h1m1 0h1m2 0h1m3 0h1m10 0h1m25 0h1m6 0h1m17 0h1m11 0h1m6 0h1m-934 7h1m4 0h1m7 0h2m11 0h1m3 0h1m3 0h1m7 0h1m5 0h1m3 0h1m2 0h1m1 0h3m3 0h1m8 0h1m2 0h2m4 0h2m5 0h1m2 0h1m7 0h2m4 0h2m2 0h1m1 0h3m3 0h3m3 0h1m1 0h1m1 0h1m2 0h1m3 0h1m5 0h1m1 0h1m4 0h3m6 0h2m2 0h2m8 0h1m1 0h1m4 0h1m1 0h1m7 0h1m2 0h1m3 0h1m1 0h1m7 0h1m4 0h1m2 0h1m4 0h2m6 0h2m5 0h1m16 0h2m7 0h1m1 0h1m4 0h1m8 0h1m1 0h1m3 0h1m2 0h1m2 0h2m6 0h1m6 0h1m1 0h2m4 0h1m1 0h1m5 0h1m3 0h1m1 0h1m5 0h1m2 0h1m2 0h1m2 0h1m2 0h1m2 0h1m9 0h1m3 0h1m1 0h1m8 0h2m6 0h1m3 0h1m1 0h1m1 0h2m1 0h1m3 0h1m7 0h1m1 0h1m5 0h1m1 0h4m3 0h2m5 0h1m12 0h1m4 0h1m2 0h2m3 0h1m1 0h1m1 0h1m5 0h2m5 0h1m1 0h1m2 0h1m2 0h3m4 0h1m2 0h1m5 0h1m3 0h1m2 0h1m2 0h1m1 0h1m2 0h2m1 0h1m6 0h1m1 0h1m1 0h1m4 0h2m1 0h2m5 0h2m3 0h1m1 0h1m2 0h1m5 0h1m2 0h1m5 0h3m4 0h1m1 0h1m4 0h1m10 0h1m4 0h1m2 0h1m1 0h3m3 0h1m5 0h2m1 0h2m1 0h1m5 0h1m6 0h1m3 0h4m5 0h5m1 0h1m1 0h1m1 0h3m3 0h3m7 0h1m1 0h1m2 0h1m5 0h1m2 0h1m7 0h1m1 0h1m3 0h2m5 0h2m6 0h1m3 0h1m2 0h2m6 0h2m3 0h2m12 0h1m1 0h1m7 0h1m1 0h1m9 0h1m2 0h1m2 0h2m3 0h2m7 0h3m3 0h1m14 0h1m2 0h1m7 0h2m6 0h1m1 0h1m17 0h1m10 0h1m20 0h1m10 0h1m24 0h1m13 0h1m-953 7h1m29 0h1m17 0h1m9 0h1m1 0h1m3 0h1m7 0h1m7 0h2m1 0h1m3 0h1m1 0h1m7 0h1m1 0h2m9 0h2m3 0h1m1 0h1m1 0h1m4 0h3m2 0h1m4 0h1m10 0h1m3 0h1m1 0h3m2 0h3m3 0h3m1 0h1m2 0h1m2 0h1m3 0h1m1 0h1m2 0h3m2 0h1m5 0h1m4 0h1m1 0h1m1 0h3m8 0h1m3 0h2m4 0h1m1 0h2m3 0h2m8 0h1m1 0h1m10 0h1m3 0h2m1 0h1m2 0h1m2 0h1m11 0h1m8 0h1m4 0h1m9 0h1m3 0h4m2 0h2m2 0h2m1 0h1m6 0h1m1 0h1m5 0h3m1 0h1m5 0h1m5 0h3m4 0h7m3 0h3m1 0h1m8 0h1m3 0h1m6 0h5m2 0h1m11 0h1m15 0h1m4 0h1m1 0h1m1 0h2m2 0h1m5 0h3m4 0h2m2 0h2m1 0h1m4 0h1m1 0h1m2 0h4m4 0h1m8 0h2m1 0h1m2 0h1m3 0h1m7 0h1m3 0h1m6 0h1m5 0h1m2 0h1m1 0h1m2 0h1m3 0h1m3 0h3m2 0h3m2 0h1m1 0h2m2 0h1m1 0h1m2 0h1m7 0h1m1 0h1m1 0h1m1 0h1m1 0h2m1 0h2m1 0h1m1 0h2m6 0h1m1 0h1m1 0h1m9 0h1m1 0h1m1 0h1m3 0h1m2 0h1m1 0h1m4 0h1m2 0h1m10 0h1m3 0h1m5 0h1m2 0h1m1 0h2m3 0h3m3 0h1m2 0h1m5 0h1m10 0h1m1 0h1m2 0h1m1 0h1m5 0h1m1 0h1m8 0h1m2 0h1m2 0h1m3 0h4m2 0h1m1 0h2m1 0h1m1 0h1m1 0h1m8 0h1m1 0h7m1 0h1m3 0h1m25 0h1m5 0h1m2 0h1m6 0h2m1 0h2m1 0h1m4 0h1m7 0h1m1 0h1m5 0h1m5 0h1m1 0h1m2 0h1m2 0h3m3 0h2m8 0h1m7 0h1m20 0h1m7 0h1m1 0h1m1 0h1m1 0h1m5 0h2m7 0h1m8 0h1m13 0h1m13 0h2m1 0h1m7 0h2m7 0h1m-956 13h1m11 0h1m1 0h1m4 0h1m11 0h1m1 0h1m19 0h1m3 0h1m1 0h2m7 0h1m16 0h1m2 0h1m1 0h1m6 0h1m10 0h1m7 0h1m1 0h1m3 0h2m2 0h2m6 0h3m2 0h1m1 0h2m1 0h1m1 0h1m2 0h3m4 0h1m2 0h5m8 0h2m1 0h1m2 0h1m1 0h1m5 0h1m2 0h1m8 0h1m5 0h1m1 0h2m2 0h3m9 0h1m2 0h2m4 0h1m1 0h1m7 0h1m2 0h1m2 0h2m3 0h1m4 0h2m1 0h2m2 0h2m2 0h2m2 0h2m4 0h3m9 0h2m1 0h1m4 0h2m3 0h1m5 0h1m6 0h1m1 0h1m1 0h2m1 0h2m2 0h2m2 0h1m3 0h1m3 0h2m1 0h2m1 0h1m5 0h1m4 0h2m8 0h1m11 0h1m3 0h1m2 0h3m2 0h1m4 0h1m10 0h2m1 0h1m7 0h3m2 0h2m1 0h1m6 0h1m4 0h1m3 0h1m2 0h1m5 0h4m4 0h1m2 0h1m1 0h1m1 0h2m3 0h1m3 0h1m4 0h2m1 0h2m6 0h1m3 0h6m3 0h2m6 0h2m1 0h1m4 0h1m2 0h1m2 0h1m2 0h1m1 0h3m1 0h1m1 0h1m1 0h1m1 0h1m1 0h1m4 0h2m1 0h1m1 0h4m4 0h1m2 0h3m1 0h1m6 0h3m14 0h1m1 0h1m1 0h1m8 0h1m4 0h1m1 0h2m3 0h1m1 0h1m2 0h1m11 0h1m1 0h1m4 0h1m1 0h2m2 0h1m2 0h1m2 0h1m4 0h1m1 0h1m1 0h1m1 0h2m5 0h1m5 0h2m6 0h1m4 0h1m3 0h1m6 0h1m3 0h1m6 0h1m2 0h1m3 0h1m1 0h2m3 0h4m1 0h1m2 0h1m2 0h1m5 0h1m2 0h1m4 0h3m1 0h1m3 0h1m2 0h1m3 0h1m1 0h1m2 0h1m13 0h1m4 0h1m5 0h1m5 0h1m1 0h1m8 0h1m2 0h1m1 0h1m1 0h1m1 0h1m7 0h4m7 0h1m3 0h2m9 0h1m4 0h1m17 0h1m35 0h1m11 0h1m20 0h1m23 0h1m-958 7h1m21 0h2m3 0h1m2 0h1m1 0h1m4 0h1m7 0h1m6 0h1m2 0h2m2 0h1m6 0h1m5 0h1m3 0h1m1 0h2m12 0h2m3 0h2m6 0h1m5 0h1m1 0h1m5 0h4m23 0h1m1 0h1m1 0h1m3 0h1m2 0h2m1 0h2m2 0h1m1 0h1m3 0h1m5 0h1m2 0h1m1 0h1m6 0h1m1 0h1m2 0h1m7 0h1m1 0h2m7 0h1m3 0h1m1 0h1m7 0h1m1 0h1m8 0h2m2 0h1m2 0h1m2 0h1m4 0h1m1 0h1m5 0h1m2 0h1m17 0h2m1 0h1m2 0h1m6 0h1m9 0h2m4 0h2m1 0h1m2 0h1m4 0h2m2 0h2m2 0h1m1 0h1m3 0h1m16 0h1m2 0h1m7 0h2m2 0h1m1 0h1m4 0h1m1 0h1m2 0h1m2 0h2m2 0h1m4 0h1m10 0h1m1 0h2m8 0h1m10 0h1m3 0h1m2 0h1m2 0h1m2 0h1m2 0h1m1 0h2m2 0h1m3 0h1m8 0h1m1 0h1m4 0h2m1 0h1m2 0h2m3 0h1m1 0h1m1 0h1m1 0h1m5 0h1m6 0h2m9 0h1m1 0h1m8 0h1m2 0h1m1 0h1m2 0h1m2 0h1m1 0h1m2 0h1m1 0h1m4 0h1m1 0h2m1 0h1m2 0h1m1 0h1m5 0h1m3 0h2m4 0h1m1 0h1m4 0h1m1 0h1m1 0h1m1 0h1m1 0h2m3 0h1m6 0h3m5 0h1m5 0h1m9 0h1m5 0h1m1 0h1m10 0h1m3 0h2m1 0h1m16 0h1m4 0h1m1 0h1m11 0h1m4 0h1m3 0h1m3 0h1m2 0h1m3 0h1m3 0h1m2 0h1m1 0h2m4 0h1m1 0h1m2 0h1m3 0h1m15 0h1m3 0h1m6 0h2m13 0h4m6 0h2m5 0h1m4 0h1m10 0h1m1 0h1m1 0h2m2 0h1m3 0h1m2 0h2m7 0h3m9 0h1m7 0h1m3 0h1m3 0h1m6 0h1m12 0h2m1 0h1m3 0h1m5 0h1m3 0h1m8 0h1m7 0h1m7 0h1m11 0h1m-938 7h1m5 0h1m17 0h1m9 0h1m21 0h1m10 0h1m2 0h1m1 0h1m2 0h1m5 0h1m1 0h1m6 0h1m9 0h1m2 0h1m2 0h1m3 0h1m5 0h3m7 0h1m4 0h1m8 0h1m1 0h2m9 0h1m1 0h2m3 0h1m7 0h3m4 0h1m5 0h1m2 0h2m4 0h1m7 0h2m3 0h1m3 0h3m5 0h2m8 0h1m4 0h1m2 0h1m1 0h1m3 0h2m4 0h1m1 0h1m1 0h1m1 0h1m4 0h1m5 0h1m1 0h1m9 0h2m9 0h1m4 0h3m2 0h2m4 0h1m2 0h1m8 0h1m3 0h1m3 0h1m7 0h1m7 0h1m1 0h1m1 0h1m3 0h3m11 0h1m2 0h2m5 0h3m6 0h3m11 0h1m4 0h2m2 0h1m5 0h1m3 0h1m1 0h1m3 0h1m3 0h3m2 0h1m1 0h2m4 0h2m5 0h1m5 0h1m1 0h1m1 0h1m3 0h1m1 0h1m4 0h1m6 0h1m1 0h1m1 0h1m4 0h1m2 0h2m2 0h3m1 0h2m1 0h1m1 0h3m6 0h1m1 0h2m16 0h1m2 0h1m1 0h1m4 0h1m3 0h1m7 0h1m4 0h2m3 0h6m5 0h1m6 0h1m5 0h1m1 0h1m3 0h1m3 0h1m2 0h3m1 0h1m4 0h1m2 0h1m3 0h1m2 0h3m2 0h1m2 0h2m2 0h1m1 0h2m6 0h1m4 0h1m7 0h2m1 0h1m3 0h1m1 0h1m8 0h1m11 0h1m12 0h1m2 0h1m3 0h1m2 0h2m2 0h1m1 0h1m2 0h1m2 0h1m2 0h2m2 0h2m6 0h2m1 0h1m2 0h1m1 0h1m6 0h1m5 0h2m4 0h2m5 0h1m1 0h1m6 0h1m1 0h1m7 0h4m1 0h1m1 0h4m3 0h1m3 0h2m5 0h2m1 0h1m6 0h2m3 0h2m5 0h1m10 0h1m10 0h1m11 0h1m2 0h1m13 0h1m5 0h1m2 0h1m4 0h1m3 0h3m9 0h1m27 0h1m29 0h1m-975 7h1m3 0h1m1 0h1m23 0h1m2 0h1m8 0h3m3 0h2m3 0h3m4 0h1m1 0h1m5 0h1m3 0h2m2 0h2m3 0h1m2 0h1m5 0h5m1 0h1m2 0h1m11 0h2m2 0h1m4 0h1m4 0h3m3 0h1m1 0h1m5 0h1m4 0h1m1 0h1m1 0h3m2 0h2m7 0h1m1 0h1m3 0h1m4 0h1m6 0h2m2 0h1m12 0h1m3 0h1m1 0h1m4 0h1m1 0h2m4 0h2m13 0h2m8 0h2m2 0h1m2 0h3m1 0h2m2 0h2m1 0h2m3 0h1m1 0h1m1 0h2m3 0h1m6 0h2m2 0h1m13 0h1m8 0h1m1 0h1m1 0h1m6 0h1m2 0h3m1 0h1m1 0h1m2 0h1m2 0h1m1 0h2m3 0h1m4 0h1m11 0h1m3 0h2m10 0h1m5 0h1m1 0h1m3 0h1m4 0h1m1 0h1m9 0h2m10 0h1m2 0h1m1 0h1m3 0h1m1 0h1m4 0h2m12 0h1m2 0h1m2 0h2m5 0h1m2 0h1m1 0h1m3 0h1m7 0h2m5 0h1m3 0h1m2 0h4m1 0h1m5 0h1m4 0h1m1 0h1m2 0h1m2 0h1m4 0h1m3 0h1m8 0h1m5 0h1m4 0h1m1 0h1m3 0h1m9 0h3m4 0h2m1 0h3m3 0h2m9 0h1m5 0h1m1 0h2m1 0h1m3 0h2m4 0h1m4 0h1m2 0h1m1 0h1m3 0h4m4 0h1m5 0h1m4 0h1m3 0h1m2 0h2m2 0h2m5 0h1m1 0h2m2 0h2m10 0h1m2 0h1m3 0h1m1 0h1m18 0h1m9 0h1m2 0h1m1 0h1m2 0h2m1 0h4m1 0h1m2 0h1m22 0h1m1 0h1m4 0h1m1 0h1m8 0h1m2 0h3m3 0h1m5 0h1m2 0h1m2 0h1m1 0h1m1 0h1m2 0h2m2 0h1m9 0h1m1 0h1m2 0h1m1 0h1m1 0h1m8 0h1m3 0h1m4 0h1m4 0h1m9 0h1m1 0h1m7 0h1m4 0h2m10 0h1m1 0h1m13 0h1m7 0h1m1 0h1m6 0h1m27 0h1m1 0h1m-912 7h1m8 0h1m2 0h1m3 0h2m1 0h2m10 0h1m2 0h2m1 0h2m2 0h1m2 0h2m22 0h1m9 0h1m11 0h4m2 0h1m6 0h1m7 0h1m1 0h1m1 0h3m4 0h1m3 0h1m2 0h1m3 0h1m3 0h1m3 0h2m7 0h1m4 0h1m2 0h1m3 0h1m10 0h1m7 0h1m3 0h1m2 0h1m4 0h2m8 0h1m7 0h1m2 0h3m1 0h2m3 0h1m1 0h2m5 0h1m4 0h1m1 0h1m1 0h1m1 0h2m1 0h1m16 0h2m2 0h1m1 0h1m1 0h1m3 0h1m2 0h2m7 0h1m4 0h1m4 0h1m4 0h1m6 0h3m3 0h4m4 0h2m1 0h1m3 0h2m2 0h1m4 0h1m2 0h1m2 0h1m3 0h1m1 0h1m2 0h2m1 0h2m4 0h1m6 0h1m1 0h1m1 0h1m10 0h1m2 0h1m2 0h3m1 0h1m7 0h1m6 0h1m8 0h4m2 0h1m4 0h1m6 0h1m5 0h1m1 0h1m4 0h1m1 0h1m1 0h1m4 0h1m7 0h1m1 0h1m9 0h1m2 0h4m1 0h1m3 0h1m5 0h1m4 0h2m9 0h1m1 0h2m2 0h2m4 0h2m3 0h1m2 0h2m4 0h2m4 0h1m1 0h1m1 0h1m8 0h1m6 0h1m6 0h1m2 0h1m1 0h2m2 0h1m3 0h1m3 0h1m3 0h2m3 0h1m5 0h1m1 0h1m1 0h1m3 0h1m3 0h1m2 0h1m3 0h1m3 0h3m2 0h1m2 0h2m3 0h2m3 0h1m3 0h2m9 0h1m21 0h1m9 0h2m2 0h3m3 0h1m1 0h1m3 0h1m1 0h1m3 0h4m5 0h1m1 0h1m3 0h1m4 0h1m3 0h2m3 0h1m1 0h2m2 0h1m4 0h2m3 0h3m1 0h1m1 0h1m7 0h2m2 0h1m2 0h1m1 0h1m3 0h1m4 0h2m2 0h1m8 0h1m1 0h1m2 0h1m5 0h1m10 0h1m10 0h1m7 0h1m21 0h3m4 0h2m13 0h1m3 0h1m5 0h1m16 0h1m15 0h1m-946 13h1m10 0h1m8 0h3m3 0h1m1 0h1m2 0h2m3 0h1m3 0h2m3 0h1m7 0h1m5 0h1m3 0h2m4 0h1m2 0h1m5 0h1m7 0h1m1 0h1m1 0h1m1 0h1m1 0h1m3 0h1m1 0h1m1 0h2m2 0h1m7 0h1m4 0h1m4 0h1m6 0h1m1 0h2m1 0h1m1 0h1m14 0h2m15 0h2m5 0h1m4 0h1m1 0h1m1 0h1m4 0h2m4 0h1m3 0h1m5 0h1m1 0h1m1 0h2m4 0h1m9 0h1m5 0h1m11 0h1m2 0h1m2 0h1m4 0h1m7 0h1m11 0h2m4 0h1m13 0h2m5 0h1m2 0h2m3 0h1m1 0h1m7 0h1m1 0h1m1 0h1m1 0h1m2 0h1m5 0h1m1 0h1m1 0h1m1 0h1m4 0h1m1 0h1m5 0h1m2 0h2m2 0h1m1 0h2m8 0h4m5 0h1m3 0h2m8 0h2m3 0h1m1 0h1m3 0h1m4 0h1m4 0h1m2 0h1m1 0h1m7 0h2m5 0h2m3 0h1m1 0h1m6 0h1m3 0h1m8 0h2m2 0h1m2 0h1m3 0h1m2 0h1m2 0h3m3 0h1m1 0h4m3 0h4m6 0h1m4 0h1m2 0h2m1 0h1m6 0h1m1 0h1m2 0h3m15 0h2m2 0h2m1 0h1m2 0h1m9 0h1m3 0h2m3 0h1m5 0h1m2 0h1m1 0h1m6 0h1m1 0h2m1 0h2m2 0h1m1 0h1m7 0h3m5 0h1m2 0h1m3 0h3m1 0h1m2 0h1m5 0h1m1 0h1m3 0h1m5 0h1m4 0h1m6 0h1m11 0h3m2 0h1m2 0h1m1 0h1m2 0h1m4 0h1m4 0h1m3 0h4m7 0h1m3 0h1m5 0h2m1 0h1m9 0h2m12 0h3m12 0h1m1 0h2m2 0h1m2 0h2m4 0h1m6 0h1m4 0h2m3 0h1m2 0h1m5 0h1m2 0h1m4 0h1m1 0h1m4 0h1m11 0h1m9 0h1m3 0h1m1 0h1m23 0h1m5 0h1m22 0h1m20 0h1m-931 7h1m22 0h1m6 0h2m3 0h1m5 0h1m12 0h1m2 0h2m1 0h1m10 0h1m2 0h1m11 0h1m16 0h1m18 0h1m2 0h1m12 0h1m23 0h1m4 0h1m22 0h1m3 0h1m5 0h1m10 0h1m3 0h1m4 0h1m7 0h2m1 0h1m9 0h1m2 0h1m2 0h1m6 0h1m6 0h1m2 0h1m16 0h1m5 0h1m15 0h1m5 0h1m3 0h1m1 0h1m5 0h1m6 0h1m3 0h1m1 0h1m1 0h1m1 0h1m4 0h1m3 0h1m1 0h2m5 0h1m8 0h1m5 0h2m8 0h1m3 0h1m20 0h1m22 0h1m1 0h1m7 0h2m3 0h1m1 0h1m1 0h1m1 0h1m11 0h1m2 0h1m2 0h1m1 0h1m2 0h1m5 0h4m2 0h2m4 0h2m7 0h1m5 0h1m13 0h1m1 0h1m1 0h1m1 0h1m8 0h1m5 0h1m2 0h1m6 0h1m6 0h1m3 0h1m9 0h1m1 0h1m5 0h1m8 0h1m7 0h1m1 0h2m5 0h1m2 0h1m3 0h1m7 0h1m3 0h1m3 0h1m2 0h1m9 0h1m8 0h1m15 0h1m18 0h2m2 0h1m5 0h2m1 0h1m3 0h2m3 0h1m6 0h2m3 0h1m4 0h1m18 0h1m14 0h1m1 0h1m11 0h1m19 0h1m5 0h1m3 0h4m6 0h1m4 0h1m2 0h3m16 0h1m10 0h1m15 0h1m24 0h1m-868 7h1m9 0h2m3 0h1m4 0h1m1 0h1m4 0h1m1 0h3m15 0h1m1 0h1m1 0h3m1 0h1m3 0h2m1 0h1m7 0h1m1 0h1m4 0h1m1 0h1m5 0h1m4 0h1m6 0h1m9 0h1m3 0h1m1 0h2m4 0h1m9 0h1m2 0h1m3 0h1m5 0h2m9 0h1m9 0h1m3 0h1m5 0h1m2 0h3m3 0h1m4 0h1m5 0h1m1 0h1m15 0h3m21 0h3m5 0h1m18 0h1m2 0h1m4 0h1m24 0h1m5 0h1m1 0h1m1 0h1m1 0h2m1 0h1m2 0h1m2 0h1m11 0h1m8 0h2m4 0h1m9 0h2m1 0h1m3 0h1m3 0h1m4 0h1m3 0h1m1 0h3m10 0h1m4 0h1m11 0h1m8 0h1m1 0h1m5 0h2m32 0h2m2 0h3m8 0h1m1 0h2m2 0h1m3 0h1m9 0h1m3 0h1m2 0h1m24 0h1m2 0h1m1 0h1m2 0h1m5 0h1m1 0h1m2 0h1m1 0h1m5 0h2m5 0h1m2 0h1m2 0h1m1 0h1m7 0h2m3 0h1m8 0h1m5 0h1m1 0h1m3 0h1m1 0h3m3 0h1m1 0h1m2 0h1m1 0h3m3 0h2m4 0h2m1 0h3m3 0h1m6 0h1m14 0h1m7 0h2m1 0h1m1 0h1m10 0h2m2 0h1m2 0h1m1 0h2m3 0h1m2 0h1m3 0h1m8 0h1m7 0h2m2 0h1m3 0h1m2 0h1m2 0h1m13 0h1m4 0h1m5 0h1m8 0h1m2 0h1m2 0h1m2 0h1m2 0h2m5 0h1m1 0h1m4 0h2m2 0h2m2 0h2m7 0h1m7 0h1m10 0h1m10 0h1m20 0h1m6 0h1m41 0h1m24 0h1m-975 7h1m2 0h1m10 0h1m5 0h1m1 0h1m3 0h1m4 0h1m10 0h1m2 0h2m1 0h2m4 0h1m8 0h1m3 0h1m3 0h1m8 0h3m1 0h1m2 0h1m1 0h1m2 0h1m5 0h1m8 0h1m8 0h1m2 0h2m3 0h2m8 0h1m6 0h1m6 0h1m1 0h5m1 0h1m4 0h1m4 0h1m2 0h1m1 0h2m1 0h1m1 0h1m14 0h3m3 0h1m1 0h1m6 0h2m7 0h1m4 0h1m4 0h1m3 0h1m2 0h1m1 0h2m4 0h1m2 0h1m2 0h1m4 0h4m3 0h1m1 0h1m3 0h1m1 0h1m2 0h1m1 0h2m1 0h1m3 0h1m1 0h1m19 0h2m13 0h1m1 0h1m2 0h1m2 0h1m2 0h1m8 0h1m3 0h1m1 0h1m4 0h1m5 0h2m5 0h1m1 0h1m2 0h2m12 0h2m1 0h1m3 0h1m12 0h2m1 0h1m3 0h1m1 0h1m3 0h2m1 0h2m3 0h2m2 0h3m2 0h2m1 0h2m4 0h2m1 0h1m1 0h1m1 0h2m1 0h1m2 0h4m9 0h3m3 0h5m7 0h1m1 0h1m6 0h2m2 0h1m2 0h1m4 0h1m1 0h2m2 0h1m7 0h2m1 0h1m2 0h1m1 0h1m7 0h1m4 0h2m5 0h1m3 0h1m2 0h2m6 0h4m3 0h3m1 0h1m3 0h1m3 0h1m2 0h3m2 0h2m1 0h4m6 0h3m1 0h1m2 0h1m1 0h3m1 0h2m6 0h3m1 0h1m2 0h1m7 0h1m5 0h1m6 0h1m1 0h2m2 0h2m1 0h1m2 0h1m1 0h1m2 0h1m2 0h1m5 0h2m1 0h1m1 0h1m3 0h1m1 0h3m7 0h1m2 0h1m1 0h1m2 0h2m3 0h1m2 0h1m13 0h3m1 0h1m1 0h1m6 0h1m2 0h3m1 0h1m6 0h1m5 0h1m1 0h1m2 0h1m9 0h2m3 0h1m6 0h1m1 0h1m8 0h1m9 0h3m2 0h1m7 0h1m4 0h1m2 0h1m14 0h1m3 0h2m7 0h1m1 0h1m9 0h1m8 0h1m1 0h1m9 0h1m6 0h1m10 0h1m2 0h1m2 0h1m1 0h1m5 0h1m2 0h1m6 0h1m6 0h1m13 0h1m21 0h1m-962 7h1m13 0h1m3 0h1m2 0h1m1 0h1m5 0h1m3 0h1m8 0h2m6 0h1m4 0h1m4 0h6m10 0h1m4 0h1m5 0h1m8 0h1m4 0h1m5 0h3m1 0h1m9 0h1m1 0h1m14 0h1m2 0h2m2 0h1m2 0h1m2 0h1m1 0h1m1 0h1m9 0h1m12 0h1m1 0h2m7 0h1m10 0h1m1 0h1m1 0h1m7 0h1m2 0h1m4 0h1m10 0h1m3 0h1m1 0h1m4 0h1m11 0h2m8 0h1m1 0h1m1 0h1m2 0h1m18 0h1m3 0h1m2 0h1m5 0h1m6 0h1m3 0h3m1 0h1m1 0h1m4 0h1m1 0h1m1 0h1m2 0h1m7 0h1m2 0h1m1 0h1m7 0h1m1 0h1m2 0h1m4 0h1m10 0h1m2 0h1m7 0h3m8 0h1m1 0h2m1 0h1m2 0h1m2 0h2m1 0h1m2 0h1m7 0h1m12 0h1m4 0h1m2 0h2m2 0h1m2 0h1m1 0h1m2 0h1m2 0h2m1 0h1m1 0h1m1 0h1m3 0h1m1 0h2m2 0h1m3 0h2m1 0h2m1 0h2m2 0h2m1 0h5m1 0h1m3 0h1m1 0h3m3 0h3m2 0h1m3 0h2m2 0h1m8 0h2m4 0h1m1 0h1m9 0h1m5 0h1m4 0h1m1 0h1m3 0h1m1 0h1m5 0h1m8 0h2m4 0h1m1 0h2m1 0h1m7 0h1m4 0h1m4 0h1m2 0h1m8 0h1m3 0h1m1 0h1m1 0h1m4 0h2m1 0h1m2 0h1m2 0h3m4 0h1m1 0h4m1 0h1m1 0h2m1 0h2m4 0h2m1 0h1m11 0h2m2 0h4m3 0h1m14 0h1m3 0h1m1 0h2m5 0h1m3 0h2m3 0h1m9 0h2m3 0h2m8 0h1m1 0h1m1 0h1m9 0h1m5 0h3m3 0h1m2 0h1m15 0h1m1 0h1m4 0h1m6 0h2m3 0h1m10 0h1m4 0h1m1 0h1m27 0h3m3 0h1m12 0h1m4 0h1m5 0h1m2 0h1m15 0h1m18 0h1m13 0h1m-972 7h1m37 0h1m7 0h1m8 0h4m7 0h1m2 0h1m2 0h1m4 0h1m1 0h1m5 0h1m4 0h1m2 0h2m1 0h1m5 0h1m1 0h1m6 0h3m2 0h1m3 0h1m2 0h1m2 0h1m1 0h1m2 0h1m4 0h1m4 0h1m3 0h2m1 0h2m4 0h1m3 0h2m6 0h1m1 0h1m5 0h3m1 0h2m1 0h3m1 0h1m1 0h4m3 0h1m2 0h2m2 0h1m1 0h1m1 0h2m2 0h1m1 0h2m1 0h1m1 0h3m1 0h1m2 0h2m3 0h1m13 0h2m4 0h6m3 0h3m2 0h1m1 0h1m1 0h2m2 0h1m4 0h2m4 0h2m3 0h1m1 0h1m11 0h3m3 0h1m5 0h1m4 0h2m2 0h1m3 0h1m2 0h1m6 0h3m2 0h1m2 0h3m2 0h3m1 0h2m1 0h1m1 0h1m2 0h1m10 0h1m3 0h4m2 0h2m7 0h2m1 0h1m9 0h1m4 0h4m1 0h1m5 0h1m9 0h1m1 0h1m1 0h1m10 0h1m7 0h1m5 0h1m1 0h1m1 0h2m3 0h1m1 0h1m5 0h2m1 0h1m4 0h1m5 0h1m3 0h2m8 0h2m3 0h1m4 0h2m2 0h1m3 0h1m1 0h1m3 0h1m3 0h1m1 0h1m2 0h1m5 0h1m4 0h2m1 0h3m1 0h1m1 0h1m2 0h1m2 0h4m2 0h1m3 0h2m1 0h3m1 0h2m1 0h1m4 0h1m6 0h1m10 0h1m2 0h2m6 0h2m4 0h2m1 0h1m1 0h1m1 0h1m4 0h2m1 0h2m2 0h1m1 0h2m3 0h1m4 0h1m2 0h3m5 0h1m2 0h1m6 0h1m6 0h2m3 0h1m1 0h2m3 0h1m5 0h1m3 0h1m7 0h1m5 0h1m6 0h3m1 0h3m4 0h2m1 0h1m1 0h2m3 0h1m1 0h2m5 0h1m3 0h1m2 0h1m3 0h2m10 0h1m4 0h3m7 0h1m9 0h1m1 0h1m3 0h1m1 0h2m1 0h1m3 0h1m1 0h1m1 0h1m1 0h1m1 0h1m1 0h1m7 0h1m1 0h1m1 0h1m2 0h2m5 0h1m1 0h1m16 0h1m3 0h1m3 0h1m8 0h3m11 0h1m8 0h1m2 0h1m19 0h1m14 0h1m22 0h1m1 0h1m-964 13h1m1 0h1m23 0h1m17 0h1m2 0h1m12 0h1m5 0h1m4 0h1m1 0h1m3 0h1m4 0h1m5 0h1m1 0h1m1 0h1m3 0h1m2 0h1m1 0h1m1 0h1m3 0h1m10 0h1m3 0h4m3 0h1m11 0h1m12 0h1m1 0h1m3 0h1m3 0h2m4 0h1m2 0h1m3 0h1m2 0h1m8 0h1m2 0h1m4 0h1m1 0h1m1 0h1m1 0h1m2 0h1m5 0h1m2 0h2m1 0h3m11 0h1m3 0h1m3 0h1m3 0h3m1 0h1m7 0h1m4 0h1m6 0h1m1 0h1m1 0h3m1 0h1m2 0h1m1 0h1m24 0h1m8 0h1m5 0h4m3 0h1m3 0h3m4 0h2m2 0h1m1 0h2m1 0h2m2 0h2m4 0h1m1 0h2m2 0h2m4 0h1m1 0h1m3 0h2m2 0h3m2 0h2m1 0h1m8 0h1m7 0h2m4 0h1m4 0h1m7 0h2m1 0h1m4 0h1m1 0h1m15 0h1m8 0h1m10 0h1m5 0h1m4 0h2m1 0h2m2 0h1m3 0h3m5 0h1m5 0h1m3 0h1m2 0h2m5 0h1m3 0h2m1 0h2m3 0h2m1 0h2m5 0h1m2 0h2m1 0h2m6 0h1m3 0h2m2 0h1m1 0h3m1 0h2m5 0h3m1 0h1m2 0h1m1 0h1m11 0h1m10 0h1m2 0h3m3 0h2m5 0h1m3 0h1m1 0h1m3 0h1m4 0h1m2 0h1m2 0h1m1 0h1m1 0h3m2 0h1m1 0h1m7 0h1m4 0h1m1 0h1m1 0h2m5 0h1m1 0h1m2 0h1m9 0h2m2 0h1m2 0h1m1 0h1m4 0h2m6 0h1m2 0h2m7 0h1m5 0h2m1 0h1m1 0h1m2 0h1m1 0h1m7 0h1m3 0h2m9 0h2m2 0h1m2 0h1m12 0h1m1 0h1m7 0h1m4 0h1m6 0h1m9 0h1m2 0h2m5 0h1m6 0h1m6 0h1m6 0h1m12 0h2m1 0h1m10 0h1m20 0h1m8 0h1m27 0h1m2 0h1m1 0h1m3 0h1m22 0h1m-932 7h2m4 0h2m5 0h1m1 0h1m1 0h1m3 0h1m1 0h1m3 0h2m3 0h2m1 0h2m2 0h1m3 0h1m2 0h1m1 0h1m1 0h2m6 0h1m2 0h2m1 0h2m1 0h1m1 0h2m2 0h1m13 0h1m1 0h1m9 0h2m4 0h4m5 0h1m3 0h1m4 0h1m1 0h1m10 0h3m3 0h1m1 0h1m6 0h1m12 0h5m3 0h1m3 0h1m5 0h1m1 0h1m1 0h1m5 0h1m1 0h1m1 0h1m1 0h1m10 0h1m8 0h1m1 0h2m1 0h2m6 0h1m6 0h1m1 0h1m15 0h3m8 0h1m4 0h1m3 0h1m2 0h1m1 0h1m1 0h2m5 0h2m15 0h3m1 0h1m7 0h2m1 0h1m3 0h1m2 0h1m3 0h1m2 0h1m4 0h1m2 0h1m3 0h1m7 0h1m7 0h1m2 0h1m5 0h2m1 0h1m2 0h1m2 0h3m5 0h1m3 0h1m1 0h1m1 0h1m5 0h1m4 0h1m2 0h1m6 0h6m1 0h1m3 0h1m6 0h1m1 0h1m3 0h5m4 0h2m4 0h1m1 0h1m1 0h1m3 0h1m1 0h2m6 0h3m1 0h2m4 0h1m1 0h2m3 0h1m1 0h1m2 0h2m2 0h1m1 0h1m1 0h1m10 0h3m1 0h1m3 0h2m2 0h1m2 0h1m3 0h2m1 0h1m1 0h1m8 0h1m1 0h1m3 0h1m1 0h1m4 0h2m1 0h1m1 0h1m2 0h1m6 0h3m8 0h1m5 0h3m7 0h1m3 0h5m6 0h1m4 0h1m2 0h1m1 0h3m2 0h1m7 0h1m1 0h2m1 0h1m4 0h1m7 0h1m1 0h1m4 0h1m3 0h1m2 0h1m2 0h1m2 0h1m2 0h1m4 0h1m3 0h1m1 0h1m1 0h1m8 0h2m1 0h1m1 0h1m6 0h1m1 0h1m5 0h1m1 0h1m1 0h1m5 0h1m1 0h2m10 0h1m1 0h2m7 0h2m5 0h1m6 0h1m3 0h1m2 0h1m2 0h1m2 0h2m4 0h1m2 0h2m18 0h1m28 0h1m5 0h1m7 0h1m4 0h1m1 0h2m23 0h1m9 0h1m8 0h1m21 0h1m-975 7h1m28 0h1m2 0h1m3 0h1m11 0h1m1 0h2m5 0h1m2 0h1m1 0h1m7 0h1m4 0h2m1 0h1m6 0h1m1 0h1m3 0h1m1 0h1m5 0h1m6 0h1m6 0h2m2 0h2m4 0h1m17 0h2m5 0h1m1 0h1m2 0h1m1 0h1m3 0h1m1 0h1m3 0h1m2 0h3m2 0h4m2 0h1m2 0h1m1 0h1m9 0h1m1 0h1m12 0h1m1 0h2m2 0h1m4 0h1m2 0h2m2 0h2m1 0h1m3 0h1m2 0h1m2 0h2m5 0h2m1 0h1m4 0h2m3 0h1m1 0h1m3 0h1m3 0h2m5 0h1m3 0h2m2 0h2m9 0h2m2 0h1m1 0h1m1 0h1m3 0h1m1 0h2m1 0h1m1 0h1m6 0h1m4 0h2m4 0h1m3 0h1m4 0h3m1 0h1m12 0h2m2 0h1m5 0h1m3 0h3m7 0h2m5 0h2m2 0h1m3 0h1m4 0h3m2 0h1m1 0h1m3 0h2m1 0h1m4 0h3m3 0h1m2 0h1m3 0h1m5 0h3m1 0h1m2 0h2m1 0h2m2 0h1m3 0h2m3 0h1m1 0h3m4 0h1m1 0h2m2 0h3m1 0h1m3 0h2m1 0h3m3 0h1m13 0h2m2 0h1m3 0h1m2 0h1m4 0h2m1 0h1m1 0h1m1 0h1m7 0h1m11 0h2m2 0h1m3 0h1m5 0h1m3 0h3m1 0h2m4 0h2m3 0h3m3 0h1m3 0h3m4 0h2m6 0h1m1 0h1m3 0h2m2 0h1m1 0h1m2 0h1m1 0h1m1 0h1m1 0h6m4 0h2m6 0h1m5 0h1m2 0h1m1 0h1m1 0h3m2 0h3m1 0h1m2 0h1m3 0h1m3 0h1m3 0h1m6 0h1m2 0h1m2 0h2m4 0h1m5 0h1m1 0h1m3 0h1m2 0h1m1 0h1m7 0h2m1 0h1m7 0h1m8 0h2m2 0h3m3 0h1m5 0h1m5 0h1m1 0h2m1 0h2m8 0h1m3 0h2m6 0h1m3 0h1m2 0h1m1 0h1m3 0h2m7 0h1m2 0h2m1 0h4m2 0h2m1 0h1m4 0h2m2 0h3m4 0h1m1 0h2m2 0h1m6 0h1m2 0h1m7 0h1m1 0h1m3 0h1m1 0h3m3 0h1m11 0h2m8 0h1m2 0h1m2 0h1m55 0h1m-973 7h1m11 0h1m3 0h1m4 0h2m1 0h1m1 0h1m7 0h1m1 0h1m1 0h1m1 0h1m2 0h1m4 0h1m1 0h1m2 0h1m6 0h3m1 0h1m2 0h1m2 0h2m9 0h1m7 0h1m3 0h1m2 0h1m6 0h2m1 0h1m6 0h1m1 0h1m2 0h1m6 0h1m2 0h1m4 0h3m3 0h1m3 0h1m2 0h1m1 0h2m1 0h2m1 0h5m10 0h3m2 0h1m2 0h1m1 0h1m1 0h1m5 0h1m3 0h2m5 0h5m1 0h1m3 0h1m9 0h3m1 0h2m3 0h1m1 0h1m5 0h3m2 0h1m2 0h1m5 0h1m12 0h1m2 0h1m3 0h2m2 0h2m4 0h3m1 0h1m1 0h1m4 0h1m3 0h2m9 0h2m1 0h2m1 0h2m2 0h1m1 0h1m1 0h1m2 0h1m1 0h1m6 0h3m4 0h1m1 0h2m6 0h1m1 0h2m1 0h1m1 0h1m3 0h3m3 0h1m3 0h1m4 0h1m1 0h1m1 0h2m1 0h1m1 0h1m1 0h3m1 0h1m5 0h1m1 0h2m2 0h2m1 0h2m6 0h2m5 0h1m1 0h1m3 0h1m1 0h1m5 0h1m2 0h1m2 0h1m1 0h1m8 0h2m1 0h2m5 0h1m7 0h1m3 0h4m12 0h2m1 0h2m1 0h1m2 0h1m1 0h1m4 0h2m1 0h2m1 0h1m9 0h5m3 0h1m1 0h1m4 0h4m1 0h2m1 0h2m3 0h3m3 0h1m2 0h1m2 0h1m3 0h1m1 0h2m1 0h2m5 0h3m1 0h2m6 0h1m8 0h1m1 0h1m5 0h1m2 0h1m1 0h1m2 0h1m7 0h2m7 0h2m4 0h1m3 0h3m1 0h2m1 0h1m1 0h3m6 0h2m6 0h1m2 0h1m2 0h1m1 0h1m11 0h1m7 0h1m2 0h2m2 0h1m3 0h2m1 0h1m6 0h1m1 0h1m7 0h2m6 0h5m2 0h1m3 0h1m7 0h2m1 0h1m4 0h1m3 0h1m1 0h1m1 0h1m5 0h1m2 0h1m7 0h1m2 0h1m3 0h1m1 0h1m1 0h1m3 0h1m1 0h1m1 0h3m2 0h2m2 0h1m2 0h1m1 0h1m7 0h1m7 0h1m8 0h1m4 0h1m2 0h2m5 0h1m1 0h1m1 0h1m3 0h1m1 0h1m22 0h1m14 0h1m2 0h1m3 0h1m3 0h2m11 0h1m3 0h1m2 0h1m12 0h1m16 0h1m2 0h1m-979 7h1m21 0h1m10 0h1m4 0h6m1 0h2m5 0h2m1 0h2m3 0h2m1 0h1m1 0h2m1 0h4m4 0h1m1 0h2m3 0h1m3 0h3m2 0h1m5 0h1m3 0h1m2 0h1m1 0h1m4 0h1m1 0h1m3 0h2m1 0h2m3 0h4m2 0h1m6 0h1m1 0h2m1 0h1m1 0h2m2 0h1m1 0h2m1 0h1m2 0h1m1 0h1m1 0h1m3 0h1m4 0h1m2 0h3m2 0h2m1 0h2m3 0h3m5 0h2m1 0h2m9 0h1m1 0h3m2 0h1m1 0h2m2 0h1m1 0h3m3 0h1m1 0h1m1 0h1m1 0h1m4 0h2m3 0h1m5 0h10m2 0h1m2 0h2m1 0h1m1 0h3m2 0h1m1 0h1m1 0h1m3 0h1m7 0h1m9 0h1m5 0h1m3 0h1m3 0h2m7 0h1m1 0h1m1 0h2m7 0h3m2 0h1m1 0h1m1 0h2m1 0h2m2 0h1m6 0h1m4 0h1m2 0h1m3 0h5m5 0h2m11 0h2m2 0h1m2 0h4m1 0h2m3 0h2m1 0h1m3 0h2m2 0h1m10 0h2m5 0h1m1 0h3m2 0h1m2 0h1m4 0h1m11 0h1m4 0h2m2 0h1m2 0h2m4 0h2m1 0h1m2 0h2m1 0h1m2 0h1m2 0h1m2 0h1m2 0h2m2 0h1m2 0h1m2 0h2m7 0h1m2 0h1m3 0h2m2 0h2m3 0h1m2 0h3m6 0h1m1 0h1m2 0h1m2 0h1m1 0h2m4 0h2m4 0h1m1 0h1m2 0h5m3 0h1m2 0h1m8 0h1m2 0h1m1 0h1m5 0h1m1 0h1m1 0h3m3 0h1m2 0h2m3 0h1m2 0h1m2 0h1m2 0h2m2 0h1m5 0h1m1 0h1m2 0h1m3 0h2m3 0h3m6 0h3m10 0h1m5 0h1m12 0h1m2 0h3m3 0h1m1 0h1m1 0h2m2 0h2m1 0h2m2 0h3m5 0h4m1 0h2m13 0h1m2 0h1m2 0h1m1 0h1m2 0h1m10 0h2m2 0h1m10 0h1m1 0h1m1 0h1m1 0h1m3 0h3m1 0h1m4 0h1m1 0h1m2 0h1m1 0h2m5 0h1m7 0h1m4 0h1m2 0h1m2 0h1m1 0h1m5 0h1m9 0h1m4 0h1m1 0h1m12 0h2m1 0h1m5 0h1m5 0h1m3 0h1m1 0h1m1 0h2m4 0h1m2 0h1m3 0h1m2 0h1m4 0h1m5 0h1m25 0h1m3 0h1m5 0h2m4 0h1m1 0h1m2 0h1m-985 7h1m6 0h1m4 0h1m9 0h1m2 0h1m1 0h1m6 0h1m5 0h1m8 0h2m5 0h1m2 0h2m1 0h3m4 0h2m2 0h1m2 0h2m3 0h1m7 0h1m4 0h2m7 0h2m3 0h1m3 0h1m2 0h1m4 0h1m8 0h1m2 0h2m2 0h1m2 0h1m1 0h1m4 0h1m1 0h1m1 0h3m1 0h1m1 0h2m4 0h1m1 0h3m3 0h5m3 0h2m1 0h3m3 0h1m15 0h1m1 0h1m8 0h1m1 0h2m3 0h1m5 0h1m4 0h2m5 0h1m5 0h2m7 0h2m1 0h1m1 0h1m3 0h1m1 0h2m1 0h1m3 0h1m2 0h5m1 0h1m5 0h1m2 0h2m3 0h3m5 0h2m2 0h1m1 0h2m3 0h2m1 0h1m1 0h1m4 0h1m7 0h1m2 0h1m4 0h1m4 0h1m1 0h1m1 0h1m1 0h1m1 0h1m1 0h2m4 0h1m10 0h1m2 0h1m1 0h1m1 0h2m3 0h1m10 0h1m3 0h1m8 0h1m1 0h1m2 0h2m1 0h1m2 0h1m1 0h1m4 0h2m1 0h1m1 0h1m1 0h1m1 0h2m5 0h1m4 0h3m2 0h1m2 0h1m1 0h1m2 0h1m1 0h1m1 0h1m3 0h1m2 0h1m1 0h2m3 0h1m12 0h1m1 0h1m9 0h3m1 0h1m1 0h2m2 0h1m8 0h1m1 0h1m3 0h1m1 0h1m1 0h3m2 0h1m11 0h1m4 0h1m3 0h1m1 0h3m4 0h1m5 0h1m11 0h1m5 0h1m4 0h1m1 0h1m1 0h1m1 0h2m10 0h1m1 0h1m1 0h1m4 0h1m3 0h1m7 0h1m5 0h1m5 0h1m1 0h1m1 0h1m9 0h1m3 0h1m1 0h2m3 0h1m1 0h1m1 0h2m4 0h1m2 0h2m6 0h1m3 0h1m3 0h1m3 0h2m1 0h3m2 0h1m1 0h1m6 0h1m8 0h1m1 0h1m1 0h1m2 0h3m1 0h1m1 0h1m2 0h1m6 0h1m1 0h2m2 0h1m1 0h1m3 0h1m2 0h2m2 0h1m1 0h4m5 0h1m2 0h2m4 0h1m2 0h1m1 0h1m3 0h2m2 0h5m2 0h2m6 0h4m3 0h1m1 0h1m1 0h3m1 0h1m4 0h1m6 0h1m1 0h3m1 0h1m2 0h1m3 0h5m4 0h1m5 0h2m6 0h1m1 0h2m1 0h1m7 0h2m1 0h2m2 0h1m5 0h1m1 0h1m2 0h2m14 0h1m3 0h1m10 0h1m3 0h1m1 0h1m5 0h1m5 0h1m2 0h1m11 0h1m-968 13h1m7 0h1m9 0h1m1 0h1m11 0h1m1 0h1m1 0h1m1 0h1m2 0h1m2 0h3m4 0h2m1 0h1m2 0h2m2 0h1m3 0h1m1 0h1m3 0h2m7 0h1m6 0h3m2 0h3m3 0h2m1 0h2m2 0h1m2 0h1m3 0h1m1 0h1m4 0h1m1 0h1m1 0h1m3 0h1m1 0h1m3 0h1m2 0h2m1 0h1m2 0h1m2 0h1m6 0h1m1 0h2m3 0h2m2 0h1m1 0h1m1 0h1m1 0h3m5 0h4m4 0h1m9 0h1m1 0h1m2 0h1m3 0h1m1 0h1m1 0h1m3 0h1m5 0h1m6 0h4m3 0h3m5 0h2m5 0h2m1 0h1m8 0h1m1 0h1m3 0h2m1 0h3m6 0h2m1 0h1m4 0h2m1 0h1m1 0h2m5 0h1m7 0h2m1 0h3m3 0h3m3 0h1m4 0h1m4 0h3m1 0h1m4 0h1m2 0h2m5 0h1m3 0h2m4 0h1m4 0h1m2 0h1m1 0h1m4 0h2m3 0h1m1 0h1m2 0h1m6 0h1m6 0h1m5 0h1m1 0h2m1 0h1m6 0h1m3 0h2m2 0h1m3 0h1m5 0h1m1 0h1m3 0h3m5 0h1m3 0h1m5 0h1m3 0h1m6 0h2m1 0h1m3 0h1m1 0h1m2 0h1m2 0h1m1 0h3m2 0h1m2 0h1m1 0h1m1 0h3m2 0h2m2 0h6m1 0h2m1 0h1m2 0h1m3 0h3m1 0h2m8 0h1m2 0h2m1 0h1m1 0h2m1 0h1m1 0h1m2 0h1m4 0h2m2 0h1m3 0h1m2 0h1m1 0h1m3 0h1m2 0h1m1 0h3m2 0h1m2 0h1m5 0h5m1 0h1m4 0h1m4 0h2m2 0h1m2 0h1m2 0h1m1 0h1m4 0h1m1 0h2m4 0h2m3 0h1m5 0h1m1 0h1m1 0h1m10 0h1m1 0h2m1 0h1m3 0h2m1 0h1m1 0h1m2 0h1m5 0h1m8 0h1m3 0h2m5 0h1m2 0h1m1 0h1m1 0h2m1 0h1m1 0h2m5 0h1m6 0h2m2 0h1m3 0h1m5 0h2m3 0h3m3 0h3m4 0h2m5 0h2m1 0h1m1 0h2m1 0h2m7 0h1m1 0h1m7 0h1m1 0h2m6 0h1m5 0h1m4 0h1m1 0h2m5 0h2m3 0h1m4 0h3m3 0h1m3 0h1m4 0h2m1 0h1m4 0h1m3 0h1m4 0h2m1 0h1m4 0h4m1 0h1m2 0h1m2 0h2m1 0h1m5 0h1m1 0h1m7 0h1m6 0h1m3 0h1m29 0h1m6 0h1m6 0h1m4 0h1m-970 7h1m1 0h1m14 0h1m12 0h1m12 0h1m3 0h1m1 0h2m1 0h1m1 0h1m2 0h3m1 0h1m4 0h3m4 0h1m7 0h1m4 0h2m1 0h1m1 0h3m1 0h1m2 0h1m3 0h1m1 0h1m4 0h2m5 0h1m3 0h2m1 0h2m4 0h1m3 0h1m5 0h1m4 0h1m2 0h3m4 0h1m1 0h1m4 0h1m1 0h2m3 0h2m5 0h1m2 0h2m6 0h1m1 0h1m5 0h1m5 0h2m3 0h4m3 0h1m1 0h1m1 0h1m1 0h1m5 0h3m6 0h1m1 0h1m8 0h1m2 0h6m1 0h1m1 0h1m4 0h1m1 0h1m2 0h2m8 0h2m5 0h1m8 0h2m2 0h1m6 0h1m8 0h1m2 0h1m3 0h2m1 0h1m8 0h1m1 0h2m1 0h2m3 0h1m2 0h1m1 0h1m7 0h1m2 0h3m4 0h2m1 0h1m3 0h1m1 0h1m3 0h1m2 0h1m2 0h1m1 0h2m2 0h1m2 0h1m4 0h5m3 0h1m1 0h1m1 0h1m1 0h1m4 0h1m2 0h1m3 0h3m2 0h1m2 0h1m1 0h1m3 0h2m1 0h1m3 0h2m1 0h3m6 0h1m1 0h1m3 0h1m1 0h1m2 0h1m1 0h1m2 0h1m1 0h1m2 0h1m1 0h1m1 0h2m1 0h1m4 0h1m1 0h2m1 0h2m1 0h1m1 0h1m1 0h3m1 0h1m4 0h2m2 0h1m4 0h1m2 0h1m5 0h1m7 0h4m3 0h3m2 0h1m2 0h1m1 0h1m5 0h6m1 0h2m8 0h1m1 0h1m2 0h1m2 0h1m6 0h1m1 0h1m4 0h1m4 0h1m9 0h1m1 0h2m1 0h2m8 0h1m3 0h1m1 0h1m4 0h1m3 0h1m3 0h1m1 0h1m1 0h1m3 0h1m1 0h2m6 0h3m1 0h2m2 0h3m2 0h3m2 0h1m12 0h2m2 0h1m4 0h1m2 0h1m2 0h1m7 0h1m7 0h3m2 0h1m1 0h1m1 0h3m1 0h1m12 0h1m2 0h5m4 0h1m4 0h1m3 0h1m9 0h1m4 0h2m1 0h2m1 0h3m5 0h1m1 0h2m2 0h1m2 0h1m3 0h1m3 0h1m1 0h1m4 0h1m2 0h3m19 0h1m2 0h1m4 0h2m4 0h3m2 0h1m5 0h1m2 0h2m1 0h2m3 0h1m2 0h1m3 0h1m4 0h1m4 0h1m3 0h1m1 0h1m4 0h1m1 0h1m4 0h1m3 0h3m11 0h1m7 0h1m9 0h1m3 0h1m-951 7h2m4 0h2m3 0h3m7 0h1m4 0h1m6 0h3m2 0h1m2 0h3m1 0h1m2 0h1m3 0h1m3 0h2m1 0h1m1 0h1m2 0h1m1 0h1m16 0h4m1 0h1m1 0h1m3 0h1m1 0h1m9 0h3m3 0h2m2 0h1m2 0h1m3 0h1m1 0h2m2 0h3m1 0h1m1 0h2m2 0h1m2 0h2m3 0h3m3 0h2m1 0h2m1 0h1m6 0h1m7 0h3m1 0h1m1 0h1m10 0h2m8 0h1m2 0h1m10 0h2m2 0h1m2 0h1m4 0h1m2 0h1m5 0h2m1 0h2m1 0h2m3 0h1m3 0h1m1 0h1m1 0h3m1 0h1m2 0h1m2 0h2m1 0h2m3 0h2m4 0h1m2 0h1m6 0h3m4 0h1m2 0h2m2 0h1m2 0h1m2 0h1m5 0h1m5 0h1m1 0h3m2 0h2m1 0h2m1 0h2m2 0h1m2 0h1m2 0h3m2 0h1m1 0h2m2 0h1m6 0h4m1 0h1m1 0h1m4 0h1m5 0h1m1 0h1m2 0h1m4 0h1m5 0h1m8 0h6m2 0h2m1 0h1m3 0h1m3 0h2m2 0h1m1 0h1m3 0h2m6 0h1m2 0h1m2 0h1m2 0h2m1 0h2m1 0h2m1 0h1m2 0h1m5 0h1m1 0h1m2 0h2m1 0h1m6 0h1m5 0h2m4 0h1m1 0h2m2 0h5m1 0h1m1 0h1m4 0h1m1 0h1m5 0h1m9 0h2m2 0h2m5 0h2m1 0h2m2 0h3m1 0h4m3 0h1m2 0h3m4 0h2m1 0h1m3 0h1m5 0h1m2 0h2m4 0h1m1 0h1m1 0h1m5 0h4m3 0h1m8 0h1m2 0h1m1 0h1m4 0h2m3 0h2m1 0h1m1 0h1m5 0h2m4 0h1m5 0h2m1 0h1m3 0h1m1 0h1m3 0h1m2 0h1m3 0h1m6 0h3m1 0h2m1 0h3m13 0h2m7 0h1m2 0h1m3 0h2m8 0h4m1 0h1m1 0h2m1 0h6m1 0h1m1 0h1m3 0h2m2 0h3m1 0h1m5 0h2m6 0h2m6 0h1m1 0h1m3 0h1m2 0h1m1 0h2m3 0h1m5 0h1m1 0h1m2 0h1m2 0h1m4 0h1m5 0h1m1 0h1m2 0h2m1 0h1m3 0h1m9 0h1m1 0h1m2 0h1m2 0h1m2 0h2m1 0h1m6 0h1m3 0h1m6 0h2m2 0h1m1 0h1m1 0h1m1 0h1m1 0h1m1 0h1m5 0h2m1 0h1m10 0h1m27 0h1m2 0h1m2 0h1m7 0h2m1 0h1m-963 7h1m1 0h1m1 0h1m2 0h1m1 0h1m2 0h1m1 0h2m4 0h1m1 0h1m3 0h1m6 0h2m2 0h2m2 0h1m1 0h1m7 0h1m3 0h3m2 0h1m4 0h1m1 0h3m1 0h1m2 0h3m1 0h1m2 0h1m2 0h1m1 0h1m2 0h1m2 0h1m2 0h1m5 0h1m9 0h1m1 0h1m2 0h1m4 0h2m2 0h1m1 0h1m3 0h1m4 0h2m1 0h1m3 0h2m1 0h1m4 0h1m1 0h2m2 0h3m5 0h3m2 0h1m5 0h2m2 0h2m3 0h2m3 0h1m3 0h1m1 0h1m2 0h1m3 0h1m2 0h1m1 0h2m5 0h2m1 0h1m2 0h2m2 0h2m3 0h3m2 0h3m2 0h1m2 0h1m7 0h1m10 0h1m2 0h3m8 0h1m1 0h1m2 0h1m1 0h3m5 0h2m3 0h2m3 0h2m4 0h1m4 0h1m2 0h1m2 0h1m1 0h1m1 0h1m3 0h1m6 0h1m8 0h2m6 0h1m8 0h1m5 0h1m1 0h4m3 0h2m8 0h1m1 0h1m1 0h1m1 0h1m5 0h1m1 0h1m1 0h1m2 0h1m2 0h2m4 0h2m1 0h1m1 0h2m2 0h1m3 0h3m1 0h1m1 0h2m2 0h1m5 0h3m1 0h1m4 0h3m2 0h1m2 0h1m2 0h4m3 0h1m6 0h1m4 0h1m2 0h1m1 0h1m2 0h1m1 0h2m4 0h1m1 0h1m1 0h1m6 0h3m4 0h2m3 0h2m2 0h1m7 0h1m2 0h1m6 0h2m5 0h2m1 0h1m1 0h1m13 0h2m1 0h2m1 0h1m1 0h1m2 0h1m8 0h1m2 0h1m5 0h1m2 0h1m2 0h1m1 0h2m2 0h1m9 0h1m3 0h1m1 0h1m1 0h2m2 0h2m1 0h1m2 0h1m1 0h2m2 0h1m1 0h6m2 0h1m1 0h1m1 0h1m8 0h1m7 0h3m7 0h1m1 0h1m7 0h1m5 0h1m2 0h1m1 0h1m6 0h1m1 0h3m4 0h1m2 0h4m5 0h2m8 0h1m2 0h1m3 0h2m1 0h1m1 0h1m2 0h2m9 0h1m2 0h1m4 0h2m6 0h4m2 0h2m1 0h1m3 0h1m7 0h2m3 0h1m9 0h1m1 0h1m2 0h1m1 0h1m2 0h1m3 0h1m4 0h3m1 0h1m12 0h1m8 0h1m2 0h1m6 0h2m2 0h5m6 0h1m4 0h1m1 0h1m2 0h1m7 0h1m8 0h2m9 0h1m1 0h1m7 0h1m7 0h1m1 0h1m-968 7h1m1 0h1m6 0h1m6 0h1m4 0h1m3 0h1m9 0h1m1 0h1m1 0h2m3 0h1m3 0h1m1 0h1m1 0h1m1 0h2m3 0h6m2 0h2m2 0h1m6 0h1m2 0h2m12 0h4m6 0h3m6 0h1m4 0h3m1 0h1m4 0h2m1 0h1m1 0h1m2 0h1m3 0h1m4 0h1m1 0h1m1 0h1m5 0h1m2 0h1m9 0h1m3 0h1m3 0h1m1 0h1m1 0h1m5 0h3m6 0h3m1 0h2m6 0h1m2 0h1m8 0h1m6 0h1m2 0h3m3 0h1m2 0h1m3 0h1m2 0h1m2 0h1m2 0h1m3 0h1m1 0h1m2 0h1m4 0h1m6 0h1m1 0h1m1 0h1m3 0h2m6 0h1m4 0h1m2 0h2m7 0h1m1 0h2m2 0h1m2 0h2m1 0h1m2 0h1m10 0h2m3 0h1m4 0h1m1 0h1m4 0h1m1 0h1m2 0h2m5 0h2m3 0h1m1 0h1m5 0h1m1 0h1m3 0h3m5 0h1m5 0h1m5 0h1m8 0h2m1 0h1m1 0h1m6 0h1m5 0h1m10 0h1m1 0h1m2 0h2m2 0h2m2 0h1m4 0h1m3 0h1m3 0h3m3 0h2m3 0h1m1 0h2m10 0h3m9 0h1m1 0h1m2 0h1m3 0h2m2 0h1m1 0h2m7 0h1m3 0h1m1 0h1m1 0h1m7 0h1m1 0h2m1 0h1m1 0h1m2 0h1m3 0h1m3 0h1m2 0h1m1 0h1m1 0h1m1 0h1m1 0h1m1 0h2m2 0h2m2 0h1m2 0h2m2 0h1m2 0h2m8 0h1m3 0h1m8 0h1m4 0h3m1 0h1m2 0h1m2 0h1m6 0h1m3 0h1m7 0h1m1 0h1m1 0h1m4 0h1m2 0h1m1 0h1m3 0h1m1 0h1m4 0h1m4 0h1m2 0h1m5 0h1m4 0h2m1 0h1m4 0h1m3 0h1m4 0h2m4 0h1m1 0h2m1 0h1m1 0h1m2 0h1m5 0h1m3 0h1m3 0h1m1 0h1m5 0h1m4 0h2m2 0h1m4 0h1m5 0h1m3 0h1m3 0h1m1 0h1m3 0h1m7 0h1m3 0h1m1 0h1m1 0h1m1 0h1m6 0h2m4 0h1m5 0h4m6 0h2m5 0h1m2 0h1m1 0h1m1 0h2m1 0h1m2 0h1m1 0h1m1 0h1m1 0h1m5 0h1m3 0h1m2 0h2m1 0h1m2 0h1m1 0h1m1 0h1m1 0h1m3 0h1m1 0h1m1 0h2m2 0h1m1 0h1m2 0h2m2 0h2m2 0h1m3 0h1m1 0h1m3 0h1m2 0h1m5 0h1m1 0h1m1 0h3m7 0h1m4 0h1m2 0h1m26 0h2"/><path stroke="#dce82e" stroke-width="1" d="M0 237.5h1m10 0h1m9 0h1m4 0h1m1 0h1m8 0h2m2 0h1m2 0h1m1 0h1m1 0h2m1 0h3m1 0h3m2 0h1m2 0h1m1 0h3m1 0h1m5 0h1m4 0h2m3 0h2m4 0h1m1 0h1m1 0h1m1 0h1m1 0h2m3 0h1m3 0h4m3 0h1m9 0h3m1 0h1m1 0h1m1 0h1m2 0h4m2 0h1m3 0h1m2 0h1m2 0h1m1 0h1m1 0h1m3 0h1m4 0h1m3 0h1m1 0h2m4 0h1m4 0h2m8 0h1m4 0h1m2 0h1m3 0h1m4 0h1m4 0h3m1 0h2m3 0h2m2 0h1m5 0h1m4 0h1m1 0h3m2 0h1m1 0h2m4 0h5m3 0h2m2 0h1m2 0h1m2 0h3m1 0h3m1 0h1m2 0h1m6 0h2m3 0h1m2 0h1m3 0h1m12 0h1m1 0h2m2 0h1m2 0h2m2 0h2m2 0h1m4 0h1m2 0h1m2 0h1m1 0h2m1 0h2m1 0h1m5 0h2m1 0h2m2 0h1m1 0h3m1 0h3m1 0h1m6 0h1m1 0h1m1 0h1m2 0h1m3 0h1m2 0h3m7 0h1m1 0h2m2 0h3m5 0h1m7 0h1m3 0h1m2 0h1m1 0h2m1 0h1m2 0h3m6 0h2m14 0h2m1 0h1m3 0h1m1 0h1m2 0h1m2 0h1m1 0h3m4 0h5m2 0h1m6 0h1m2 0h1m1 0h1m1 0h1m2 0h1m4 0h2m2 0h1m7 0h1m8 0h1m3 0h1m3 0h3m1 0h1m2 0h1m2 0h1m1 0h1m2 0h2m2 0h1m7 0h1m6 0h1m1 0h1m1 0h2m2 0h4m2 0h2m2 0h3m3 0h1m1 0h1m2 0h3m1 0h1m3 0h1m3 0h2m3 0h2m5 0h1m2 0h1m3 0h2m6 0h2m9 0h1m1 0h2m2 0h1m8 0h2m1 0h1m2 0h2m1 0h2m2 0h1m4 0h1m1 0h1m8 0h1m2 0h1m1 0h1m3 0h1m2 0h3m5 0h1m2 0h1m2 0h3m3 0h1m3 0h1m4 0h1m3 0h1m5 0h1m1 0h1m2 0h1m1 0h1m1 0h2m1 0h1m5 0h1m1 0h1m1 0h3m1 0h1m4 0h2m3 0h1m1 0h1m1 0h2m2 0h2m3 0h2m5 0h1m1 0h1m8 0h1m11 0h2m1 0h2m2 0h1m2 0h3m2 0h1m1 0h1m1 0h1m1 0h2m1 0h1m1 0h1m3 0h1m4 0h1m2 0h2m1 0h1m2 0h2m7 0h2m1 0h1m1 0h1m2 0h2m1 0h1m2 0h1m6 0h1m1 0h1m2 0h1m5 0h2m5 0h1m6 0h1m6 0h1m2 0h1m5 0h2m2 0h1m4 0h1m6 0h1m7 0h1m2 0h2"/><path stroke="#ecf21a" stroke-width="5" d="M25 2.5h1m8 0h1m25 0h1m4 0h1m24 0h1m2 0h1m4 0h1m7 0h1m12 0h1m5 0h1m2 0h1m6 0h1m3 0h1m11 0h1m8 0h1m6 0h1m2 0h1m11 0h1m2 0h1m12 0h2m14 0h1m11 0h1m3 0h1m9 0h1m1 0h1m2 0h1m2 0h1m5 0h1m2 0h1m15 0h1m4 0h1m6 0h2m4 0h1m10 0h1m3 0h1m5 0h1m2 0h1m10 0h2m8 0h1m17 0h1m4 0h1m2 0h1m2 0h1m5 0h1m9 0h1m4 0h1m6 0h1m3 0h1m1 0h2m3 0h1m5 0h1m3 0h1m1 0h1m6 0h1m2 0h2m6 0h1m1 0h1m1 0h1m8 0h1m7 0h2m2 0h1m1 0h1m3 0h1m11 0h1m1 0h1m3 0h1m12 0h1m12 0h1m2 0h1m9 0h1m3 0h1m8 0h1m3 0h1m4 0h2m7 0h1m9 0h1m1 0h2m5 0h1m4 0h1m2 0h1m10 0h1m4 0h1m8 0h1m17 0h1m2 0h1m3 0h1m3 0h1m1 0h1m9 0h1m2 0h1m9 0h1m8 0h1m5 0h1m9 0h1m23 0h3m3 0h1m1 0h1m1 0h1m1 0h1m19 0h1m1 0h1m5 0h1m6 0h1m4 0h1m8 0h1m8 0h1m14 0h1m2 0h1m1 0h1m8 0h1m2 0h1m10 0h1m6 0h1m3 0h1m10 0h1m32 0h1m11 0h1m28 0h1m42 0h1m16 0h1"/><path stroke="#ecf21a" stroke-width="6" d="M50 8h1m4 0h1m1 0h1m12 0h1m8 0h1m6 0h1m1 0h1m4 0h1m9 0h1m28 0h1m1 0h1m22 0h1m34 0h2m14 0h1m8 0h1m46 0h1m8 0h2m25 0h1m5 0h1m21 0h1m14 0h1m9 0h1m4 0h1m9 0h1m29 0h1m6 0h1m6 0h1m61 0h1m2 0h1m2 0h1m2 0h1m11 0h2m8 0h1m20 0h1m10 0h1m3 0h1m9 0h1m1 0h1m16 0h1m5 0h2m23 0h1m2 0h1m2 0h2m16 0h1m9 0h1m1 0h1m19 0h1m3 0h2m11 0h1m2 0h1m2 0h1m13 0h1m26 0h1m5 0h1m9 0h1m1 0h1m1 0h1m4 0h1m3 0h1m28 0h1m15 0h1m4 0h1m16 0h1m14 0h1m10 0h1m67 0h1m15 0h1m20 0h1m-900 48h2m10 0h1m8 0h1m7 0h1m1 0h1m19 0h1m6 0h1m14 0h1m24 0h1m3 0h1m9 0h1m3 0h1m9 0h1m3 0h1m7 0h1m10 0h1m22 0h1m2 0h1m1 0h1m4 0h1m9 0h1m31 0h1m1 0h1m4 0h3m8 0h1m1 0h1m8 0h2m1 0h1m11 0h1m2 0h1m5 0h1m4 0h1m61 0h1m14 0h1m5 0h1m7 0h1m13 0h1m1 0h1m6 0h1m3 0h1m1 0h1m22 0h1m2 0h1m11 0h2m6 0h1m20 0h1m5 0h1m10 0h1m8 0h2m3 0h2m2 0h2m1 0h1m2 0h1m2 0h1m10 0h1m4 0h1m13 0h1m13 0h2m2 0h1m7 0h1m5 0h1m10 0h2m5 0h1m14 0h1m3 0h2m3 0h1m2 0h1m2 0h1m11 0h1m4 0h1m2 0h1m28 0h1m4 0h1m26 0h1m14 0h1m11 0h1m4 0h1m16 0h1m8 0h1m10 0h1m2 0h1m17 0h1m2 0h1m25 0h1m13 0h1m5 0h1m6 0h1m3 0h1m21 0h1m34 0h1m-926 41h1m8 0h1m14 0h1m1 0h1m16 0h2m3 0h2m4 0h2m28 0h1m9 0h1m2 0h2m1 0h1m3 0h1m27 0h1m2 0h1m17 0h1m17 0h1m7 0h1m6 0h1m7 0h1m2 0h1m3 0h1m9 0h1m11 0h1m10 0h1m3 0h1m17 0h1m1 0h2m6 0h1m24 0h1m3 0h1m8 0h1m1 0h1m4 0h1m1 0h1m1 0h2m1 0h1m9 0h1m11 0h1m5 0h1m4 0h2m5 0h1m11 0h1m7 0h1m2 0h1m5 0h1m5 0h1m1 0h1m7 0h1m12 0h1m4 0h1m11 0h1m8 0h1m11 0h1m4 0h2m51 0h3m9 0h1m2 0h2m4 0h3m1 0h1m16 0h1m11 0h1m18 0h1m3 0h1m1 0h1m8 0h1m6 0h1m3 0h1m5 0h1m1 0h1m2 0h3m6 0h1m4 0h1m4 0h1m8 0h1m1 0h1m21 0h1m7 0h1m3 0h1m8 0h1m7 0h1m2 0h1m10 0h1m28 0h1m3 0h2m6 0h2m1 0h1m3 0h1m7 0h1m3 0h1m1 0h1m27 0h1m3 0h1m11 0h1m33 0h1m34 0h1m-895 48h1m11 0h1m5 0h1m24 0h3m1 0h1m5 0h1m6 0h1m16 0h1m16 0h1m1 0h2m1 0h1m7 0h1m1 0h1m6 0h1m13 0h3m2 0h3m7 0h1m6 0h1m1 0h1m3 0h2m6 0h2m7 0h1m10 0h1m1 0h1m3 0h1m12 0h1m19 0h1m14 0h2m2 0h1m4 0h1m2 0h1m17 0h1m12 0h1m9 0h1m3 0h1m2 0h2m1 0h1m14 0h1m6 0h1m2 0h2m8 0h2m11 0h1m8 0h1m4 0h1m7 0h1m7 0h1m3 0h1m7 0h1m10 0h1m14 0h2m4 0h1m9 0h2m2 0h1m4 0h1m1 0h1m4 0h1m1 0h1m2 0h2m2 0h1m1 0h1m9 0h3m3 0h2m13 0h1m3 0h1m4 0h1m1 0h1m1 0h1m2 0h1m2 0h1m7 0h1m1 0h1m4 0h1m2 0h1m4 0h1m1 0h1m2 0h1m2 0h1m3 0h1m8 0h1m6 0h1m5 0h1m1 0h1m8 0h1m3 0h1m23 0h2m7 0h1m1 0h1m1 0h1m3 0h2m10 0h2m4 0h2m3 0h3m2 0h1m2 0h1m24 0h1m1 0h1m12 0h1m1 0h1m9 0h1m16 0h1m2 0h1m31 0h1m13 0h1m5 0h1m18 0h2m4 0h1m6 0h2m32 0h1m33 0h1m2 0h1m-916 48h1m30 0h1m12 0h1m3 0h2m5 0h2m1 0h3m9 0h1m3 0h1m3 0h1m3 0h3m2 0h1m1 0h3m1 0h1m1 0h2m1 0h3m1 0h1m1 0h1m3 0h1m7 0h1m2 0h1m1 0h1m4 0h2m6 0h1m4 0h1m5 0h1m6 0h2m4 0h1m1 0h1m3 0h1m3 0h3m6 0h1m5 0h1m1 0h1m12 0h1m8 0h1m4 0h1m5 0h2m1 0h1m3 0h1m1 0h3m3 0h1m1 0h2m4 0h1m2 0h2m2 0h1m3 0h1m2 0h1m7 0h2m2 0h1m3 0h3m1 0h1m9 0h2m3 0h1m3 0h2m2 0h1m1 0h1m1 0h2m9 0h1m6 0h1m1 0h1m16 0h1m1 0h1m5 0h1m1 0h2m1 0h1m6 0h1m2 0h1m5 0h1m8 0h1m5 0h1m14 0h2m8 0h1m17 0h2m1 0h1m5 0h2m6 0h2m2 0h2m2 0h1m1 0h1m1 0h1m2 0h2m5 0h1m1 0h1m3 0h1m10 0h1m6 0h1m4 0h1m1 0h1m2 0h1m1 0h1m1 0h4m3 0h1m1 0h2m1 0h3m3 0h1m1 0h1m1 0h2m5 0h1m19 0h1m5 0h1m11 0h1m3 0h1m1 0h1m3 0h1m4 0h3m16 0h1m3 0h1m3 0h2m2 0h1m4 0h1m1 0h1m2 0h2m5 0h1m2 0h1m4 0h1m1 0h2m5 0h1m5 0h1m2 0h1m1 0h1m2 0h1m1 0h1m3 0h3m4 0h1m5 0h1m6 0h2m3 0h1m5 0h2m2 0h1m2 0h2m3 0h2m4 0h1m9 0h1m2 0h2m6 0h1m2 0h1m14 0h1m3 0h1m4 0h2m5 0h1m9 0h1m1 0h1m7 0h3m9 0h1m15 0h1m1 0h1m2 0h2m2 0h1m1 0h3m1 0h1m2 0h2m5 0h1m5 0h1m10 0h1m9 0h1m9 0h1m4 0h1m2 0h1m6 0h1m21 0h1m4 0h1m19 0h1m1 0h1m4 0h1m10 0h1m8 0h1m9 0h1m-979 41h1m31 0h1m21 0h2m4 0h1m6 0h1m3 0h1m3 0h2m3 0h1m11 0h1m4 0h1m14 0h1m2 0h2m6 0h1m2 0h1m3 0h1m12 0h2m3 0h1m6 0h1m3 0h1m12 0h1m6 0h1m5 0h1m7 0h4m5 0h2m3 0h1m6 0h1m9 0h1m5 0h1m8 0h1m6 0h1m12 0h1m2 0h2m10 0h1m1 0h1m11 0h1m8 0h2m2 0h1m1 0h1m11 0h1m4 0h1m1 0h1m2 0h1m2 0h1m1 0h1m3 0h1m2 0h1m4 0h1m3 0h1m7 0h1m3 0h1m7 0h1m6 0h1m1 0h1m7 0h1m1 0h3m5 0h1m3 0h1m7 0h1m2 0h1m1 0h1m9 0h1m1 0h1m7 0h2m6 0h1m2 0h1m1 0h1m2 0h1m3 0h1m1 0h2m4 0h1m5 0h1m11 0h1m5 0h2m3 0h3m5 0h1m3 0h2m4 0h1m4 0h1m2 0h1m10 0h1m2 0h1m1 0h2m9 0h1m2 0h1m3 0h1m7 0h1m2 0h1m2 0h1m4 0h1m2 0h3m3 0h2m5 0h1m14 0h1m8 0h1m1 0h1m7 0h1m1 0h2m8 0h1m1 0h2m14 0h1m8 0h1m4 0h2m4 0h1m4 0h1m3 0h1m4 0h2m4 0h1m2 0h1m12 0h1m5 0h1m2 0h1m1 0h1m1 0h1m2 0h1m8 0h1m3 0h1m5 0h1m1 0h1m2 0h1m8 0h1m17 0h1m5 0h1m5 0h1m8 0h1m7 0h1m4 0h1m1 0h2m1 0h3m4 0h2m7 0h1m19 0h1m12 0h1m6 0h1m25 0h1m2 0h2m16 0h2m13 0h1m18 0h1"/><path stroke="#ecf21a" stroke-width="7" d="M27 14.5h1m17 0h1m14 0h1m18 0h1m13 0h1m5 0h1m2 0h1m15 0h1m1 0h1m5 0h2m4 0h2m14 0h1m27 0h1m1 0h2m4 0h1m1 0h2m5 0h1m12 0h1m6 0h1m3 0h1m15 0h1m4 0h1m12 0h1m4 0h1m1 0h1m7 0h3m5 0h1m11 0h1m6 0h1m19 0h2m1 0h1m4 0h1m4 0h1m3 0h1m1 0h1m1 0h1m2 0h1m25 0h1m7 0h1m3 0h1m4 0h2m8 0h1m2 0h1m1 0h2m6 0h1m10 0h1m10 0h1m12 0h1m4 0h1m1 0h1m8 0h1m1 0h1m2 0h2m2 0h3m4 0h1m2 0h1m3 0h2m4 0h1m1 0h2m2 0h1m11 0h4m6 0h1m4 0h2m7 0h1m4 0h1m2 0h1m1 0h1m3 0h4m2 0h1m5 0h1m5 0h1m2 0h2m3 0h1m1 0h1m7 0h1m12 0h1m13 0h1m8 0h2m1 0h1m10 0h2m8 0h1m6 0h2m6 0h1m3 0h1m2 0h3m2 0h1m2 0h2m2 0h1m6 0h1m2 0h1m5 0h1m1 0h1m4 0h1m16 0h1m16 0h1m2 0h1m4 0h1m3 0h1m2 0h1m36 0h1m8 0h1m8 0h1m20 0h1m16 0h1m7 0h1m5 0h1m71 0h1m30 0h1m-902 7h1m37 0h2m17 0h1m14 0h1m5 0h1m10 0h1m11 0h1m27 0h1m2 0h1m3 0h1m11 0h1m12 0h1m2 0h1m2 0h1m8 0h1m3 0h1m5 0h1m14 0h1m19 0h1m32 0h1m5 0h1m15 0h1m4 0h1m8 0h1m34 0h1m17 0h1m2 0h1m3 0h1m2 0h1m26 0h2m7 0h1m3 0h1m13 0h1m2 0h1m3 0h1m12 0h2m16 0h1m20 0h2m5 0h1m9 0h1m1 0h1m1 0h1m6 0h1m1 0h1m9 0h1m3 0h1m46 0h1m6 0h1m43 0h1m11 0h1m5 0h2m3 0h1m2 0h1m21 0h1m7 0h1m4 0h1m8 0h1m3 0h1m22 0h1m2 0h1m4 0h1m5 0h1m22 0h1m3 0h1m23 0h1m11 0h1m2 0h1m8 0h1m1 0h1m28 0h1m3 0h1m-846 7h1m15 0h1m11 0h1m21 0h1m3 0h1m8 0h1m1 0h1m10 0h1m18 0h1m23 0h1m9 0h1m1 0h1m3 0h2m2 0h1m4 0h2m5 0h1m5 0h1m1 0h1m23 0h1m1 0h1m14 0h1m1 0h1m26 0h1m16 0h1m5 0h4m15 0h1m8 0h1m10 0h2m3 0h1m10 0h1m8 0h1m2 0h1m1 0h2m1 0h1m1 0h2m18 0h2m6 0h1m5 0h2m12 0h1m1 0h1m14 0h1m10 0h1m8 0h2m3 0h1m6 0h1m3 0h1m2 0h1m1 0h1m5 0h1m1 0h1m2 0h1m3 0h1m13 0h2m8 0h1m10 0h1m9 0h1m14 0h2m7 0h1m30 0h1m6 0h1m2 0h2m12 0h1m15 0h1m3 0h1m7 0h1m3 0h1m1 0h2m1 0h1m11 0h1m14 0h1m4 0h1m1 0h2m7 0h1m10 0h1m27 0h1m19 0h1m27 0h2m8 0h1m3 0h1m6 0h1m8 0h1m1 0h1m12 0h1m2 0h1m17 0h1m7 0h1m6 0h1m57 0h1m48 0h1m16 0h1m-937 7h1m12 0h1m14 0h1m2 0h1m30 0h1m11 0h1m10 0h1m11 0h2m17 0h1m12 0h1m14 0h1m4 0h1m6 0h1m2 0h1m3 0h1m25 0h1m24 0h1m13 0h1m2 0h2m11 0h2m39 0h1m3 0h2m5 0h1m3 0h1m1 0h1m16 0h1m2 0h1m11 0h1m5 0h1m23 0h2m1 0h1m9 0h1m9 0h1m1 0h1m2 0h1m4 0h1m23 0h2m10 0h1m19 0h1m12 0h1m13 0h1m19 0h1m2 0h1m9 0h1m6 0h1m13 0h2m11 0h1m2 0h1m10 0h1m4 0h1m18 0h1m8 0h1m13 0h2m6 0h1m3 0h1m1 0h1m31 0h1m19 0h1m5 0h1m13 0h1m2 0h1m6 0h1m2 0h1m2 0h1m26 0h1m6 0h1m12 0h1m10 0h1m1 0h1m20 0h1m13 0h1m49 0h1m17 0h1m-891 7h1m24 0h1m15 0h1m5 0h1m8 0h1m2 0h1m63 0h1m10 0h1m4 0h2m7 0h1m54 0h1m15 0h1m14 0h1m6 0h1m3 0h1m4 0h1m3 0h1m7 0h1m6 0h1m6 0h1m1 0h1m6 0h1m5 0h1m1 0h1m2 0h1m4 0h3m4 0h1m10 0h1m5 0h1m2 0h1m5 0h1m4 0h1m15 0h1m4 0h1m1 0h1m1 0h1m3 0h1m2 0h1m22 0h1m3 0h1m23 0h1m7 0h1m5 0h1m40 0h1m3 0h1m1 0h1m9 0h1m8 0h1m4 0h1m3 0h1m5 0h1m9 0h1m50 0h1m2 0h1m4 0h2m13 0h1m103 0h1m10 0h1m4 0h1m11 0h1m5 0h1m13 0h1m2 0h1m4 0h1m19 0h1m10 0h1m11 0h1m17 0h1m21 0h1m-828 7h1m3 0h1m14 0h1m17 0h1m18 0h1m1 0h1m3 0h1m3 0h1m23 0h2m1 0h1m3 0h1m8 0h1m1 0h1m11 0h1m14 0h1m1 0h1m2 0h1m8 0h1m6 0h1m10 0h1m2 0h1m2 0h1m1 0h1m4 0h1m25 0h1m8 0h1m2 0h1m13 0h2m11 0h1m4 0h1m12 0h2m26 0h1m8 0h1m11 0h1m2 0h1m24 0h1m14 0h1m3 0h1m3 0h3m6 0h1m9 0h1m10 0h1m2 0h1m11 0h1m4 0h1m5 0h2m3 0h1m31 0h1m7 0h3m4 0h1m3 0h1m1 0h1m11 0h1m3 0h1m10 0h1m8 0h1m2 0h1m9 0h1m8 0h1m19 0h1m8 0h1m5 0h1m11 0h1m5 0h1m4 0h1m4 0h1m5 0h1m23 0h1m2 0h1m1 0h1m4 0h1m3 0h1m24 0h1m6 0h1m5 0h1m16 0h2m12 0h1m4 0h2m10 0h1m4 0h1m10 0h1m30 0h1m13 0h1m1 0h2m8 0h1m3 0h1m-823 13h1m3 0h1m20 0h2m6 0h1m7 0h1m5 0h1m7 0h1m3 0h2m3 0h1m3 0h2m5 0h1m22 0h1m9 0h1m13 0h1m23 0h1m26 0h1m10 0h1m4 0h2m11 0h1m5 0h1m16 0h1m2 0h1m2 0h2m7 0h1m2 0h1m22 0h1m14 0h1m7 0h1m3 0h1m3 0h1m29 0h1m7 0h3m1 0h1m12 0h2m6 0h2m2 0h2m2 0h1m3 0h1m15 0h2m1 0h1m2 0h1m4 0h1m15 0h1m9 0h1m10 0h1m11 0h1m4 0h1m23 0h1m17 0h1m1 0h2m6 0h1m26 0h1m5 0h1m9 0h1m19 0h1m8 0h1m5 0h1m1 0h1m1 0h1m27 0h1m5 0h1m4 0h1m6 0h2m10 0h1m14 0h1m7 0h1m28 0h1m4 0h1m1 0h1m1 0h1m4 0h1m9 0h1m23 0h2m10 0h1m14 0h1m18 0h1m7 0h1m55 0h1m16 0h1m4 0h1m-837 7h1m18 0h1m67 0h1m2 0h1m1 0h1m3 0h1m14 0h1m2 0h1m20 0h1m45 0h1m9 0h1m1 0h1m8 0h1m5 0h1m2 0h1m14 0h1m2 0h1m22 0h1m10 0h1m12 0h1m9 0h1m3 0h1m3 0h1m12 0h1m2 0h1m19 0h1m9 0h1m6 0h1m23 0h1m9 0h1m2 0h1m1 0h1m8 0h1m3 0h1m7 0h1m4 0h1m7 0h2m6 0h1m14 0h1m3 0h1m13 0h2m6 0h1m7 0h1m2 0h1m1 0h1m18 0h2m24 0h1m14 0h1m12 0h1m13 0h1m25 0h1m1 0h1m3 0h1m4 0h1m2 0h1m6 0h1m1 0h2m26 0h1m4 0h1m2 0h1m6 0h1m2 0h1m9 0h1m1 0h2m12 0h1m7 0h1m22 0h1m15 0h1m19 0h1m11 0h1m11 0h1m82 0h1m30 0h1m13 0h1m-972 7h1m37 0h1m28 0h1m18 0h1m2 0h1m7 0h1m47 0h1m15 0h2m14 0h1m1 0h2m3 0h1m28 0h1m18 0h1m7 0h1m4 0h1m9 0h1m27 0h2m6 0h1m7 0h1m10 0h1m14 0h1m10 0h3m1 0h1m14 0h2m5 0h1m2 0h1m2 0h1m5 0h1m12 0h1m1 0h1m29 0h1m5 0h1m25 0h3m3 0h1m5 0h1m5 0h1m4 0h1m5 0h1m2 0h1m3 0h1m4 0h1m28 0h2m34 0h1m17 0h1m1 0h1m18 0h2m5 0h1m4 0h1m45 0h1m2 0h2m12 0h1m6 0h1m1 0h1m30 0h1m11 0h1m11 0h1m2 0h1m19 0h1m45 0h1m11 0h1m8 0h1m9 0h1m4 0h1m76 0h1m39 0h1m-927 7h1m9 0h1m23 0h1m1 0h1m11 0h1m3 0h1m27 0h1m5 0h1m18 0h1m7 0h3m13 0h2m8 0h1m9 0h1m12 0h1m2 0h1m27 0h1m2 0h1m14 0h1m19 0h1m19 0h2m5 0h1m1 0h1m7 0h3m1 0h1m50 0h1m1 0h1m2 0h2m7 0h2m5 0h1m14 0h1m6 0h1m4 0h2m10 0h1m4 0h2m3 0h1m3 0h1m3 0h1m3 0h1m1 0h1m1 0h1m1 0h2m5 0h1m8 0h1m4 0h1m10 0h1m23 0h2m2 0h1m1 0h1m4 0h1m13 0h2m7 0h1m6 0h1m6 0h1m42 0h1m17 0h1m8 0h1m5 0h1m5 0h1m3 0h2m9 0h1m14 0h1m11 0h2m8 0h1m3 0h1m4 0h1m15 0h1m17 0h1m2 0h1m7 0h1m4 0h1m1 0h2m3 0h1m5 0h1m2 0h1m22 0h1m11 0h1m2 0h1m15 0h1m4 0h1m6 0h1m17 0h1m3 0h1m42 0h1m23 0h1m46 0h1m-911 7h1m37 0h1m10 0h1m5 0h1m13 0h1m2 0h1m6 0h1m1 0h1m8 0h1m5 0h1m1 0h1m50 0h1m6 0h1m7 0h1m62 0h1m2 0h1m13 0h1m6 0h1m1 0h1m10 0h1m11 0h1m4 0h2m3 0h1m4 0h1m29 0h1m3 0h1m2 0h1m11 0h1m7 0h1m3 0h1m5 0h1m2 0h1m8 0h1m2 0h1m4 0h1m19 0h1m1 0h2m4 0h1m1 0h1m9 0h1m2 0h1m1 0h1m3 0h1m4 0h1m7 0h2m21 0h1m4 0h2m10 0h1m29 0h1m10 0h1m8 0h1m14 0h1m10 0h1m6 0h1m8 0h1m14 0h1m14 0h1m7 0h1m1 0h1m3 0h1m12 0h1m17 0h2m6 0h1m2 0h1m12 0h1m20 0h1m5 0h1m28 0h1m1 0h1m20 0h1m11 0h1m8 0h1m21 0h1m19 0h1m34 0h1m-865 13h2m43 0h1m3 0h2m6 0h1m7 0h1m3 0h1m4 0h1m13 0h1m5 0h1m5 0h1m4 0h1m12 0h1m1 0h2m5 0h1m7 0h1m1 0h1m3 0h1m1 0h1m1 0h1m7 0h1m29 0h1m5 0h2m2 0h1m15 0h1m5 0h1m8 0h1m5 0h2m2 0h1m1 0h1m1 0h1m14 0h1m4 0h1m16 0h1m2 0h1m4 0h1m33 0h1m20 0h1m23 0h1m3 0h1m7 0h1m19 0h1m14 0h1m1 0h2m4 0h1m4 0h2m5 0h3m5 0h1m5 0h1m5 0h1m9 0h1m24 0h1m16 0h1m1 0h1m13 0h1m13 0h2m12 0h1m20 0h1m4 0h1m5 0h1m2 0h1m7 0h1m2 0h1m13 0h1m13 0h1m1 0h1m8 0h1m4 0h1m6 0h1m3 0h1m3 0h1m4 0h1m7 0h1m23 0h1m7 0h1m3 0h1m7 0h2m14 0h1m12 0h1m7 0h1m16 0h2m24 0h1m6 0h1m1 0h1m3 0h1m7 0h1m16 0h1m11 0h1m16 0h1m6 0h1m21 0h1m-873 7h1m57 0h1m49 0h1m11 0h1m10 0h1m29 0h1m23 0h1m56 0h1m6 0h1m18 0h1m95 0h1m26 0h1m40 0h1m3 0h1m7 0h1m7 0h1m20 0h1m3 0h1m1 0h1m8 0h1m21 0h2m6 0h1m14 0h1m60 0h1m16 0h1m1 0h1m24 0h1m5 0h1m48 0h1m19 0h1m23 0h1m17 0h1m1 0h1m3 0h2m24 0h1m-799 7h1m48 0h1m4 0h3m55 0h1m8 0h1m15 0h1m4 0h1m29 0h1m31 0h1m10 0h1m17 0h1m6 0h1m19 0h1m11 0h1m2 0h1m16 0h1m4 0h2m2 0h1m14 0h1m11 0h1m4 0h1m7 0h1m5 0h1m10 0h1m5 0h1m6 0h1m6 0h1m22 0h2m9 0h1m12 0h1m1 0h1m15 0h1m9 0h1m1 0h1m3 0h1m11 0h1m8 0h1m3 0h1m13 0h1m6 0h1m2 0h1m1 0h1m2 0h1m1 0h2m66 0h1m2 0h1m1 0h1m13 0h1m26 0h1m10 0h1m8 0h2m9 0h1m22 0h1m3 0h1m31 0h2m30 0h1m38 0h1m3 0h1m3 0h1m-798 7h1m2 0h1m11 0h1m3 0h1m6 0h1m8 0h1m6 0h1m6 0h1m3 0h1m1 0h1m31 0h1m11 0h1m3 0h1m1 0h1m5 0h1m6 0h1m25 0h1m6 0h1m5 0h1m4 0h1m8 0h1m5 0h1m15 0h1m27 0h1m2 0h1m7 0h1m18 0h1m3 0h1m26 0h2m1 0h1m6 0h1m12 0h2m1 0h1m12 0h1m4 0h1m6 0h1m10 0h1m7 0h1m3 0h1m1 0h1m1 0h1m2 0h1m7 0h1m21 0h1m16 0h2m7 0h1m10 0h2m4 0h1m5 0h1m11 0h2m2 0h1m13 0h1m10 0h1m1 0h1m1 0h1m1 0h1m1 0h1m17 0h2m8 0h1m1 0h1m8 0h1m14 0h1m7 0h1m16 0h1m3 0h1m16 0h1m3 0h1m5 0h1m13 0h2m5 0h1m12 0h1m3 0h1m6 0h1m1 0h1m3 0h1m1 0h1m5 0h1m25 0h1m2 0h1m1 0h1m2 0h1m5 0h1m5 0h1m3 0h2m3 0h1m19 0h1m1 0h1m4 0h1m8 0h1m36 0h2m3 0h1m2 0h1m1 0h1m9 0h1m2 0h1m55 0h2m23 0h1m-883 7h1m4 0h1m10 0h1m60 0h1m16 0h1m18 0h1m10 0h2m4 0h1m6 0h1m3 0h1m6 0h1m12 0h1m4 0h1m21 0h1m21 0h1m7 0h1m10 0h1m1 0h1m9 0h1m8 0h1m10 0h1m14 0h1m6 0h1m7 0h1m23 0h2m34 0h1m6 0h1m1 0h1m29 0h1m12 0h1m3 0h1m7 0h1m10 0h1m17 0h1m5 0h1m10 0h1m40 0h1m5 0h1m2 0h1m8 0h1m2 0h1m2 0h1m4 0h1m3 0h2m5 0h1m12 0h1m1 0h1m8 0h1m7 0h2m1 0h1m4 0h1m8 0h1m2 0h1m5 0h1m8 0h1m3 0h1m5 0h1m3 0h1m5 0h1m33 0h1m20 0h1m8 0h1m5 0h2m1 0h1m21 0h1m11 0h1m38 0h1m11 0h1m10 0h1m58 0h1m-891 7h1m37 0h1m3 0h1m16 0h1m6 0h1m5 0h1m5 0h1m1 0h1m7 0h2m1 0h1m18 0h1m17 0h1m12 0h2m8 0h1m1 0h1m1 0h1m2 0h1m12 0h1m27 0h1m12 0h2m4 0h1m9 0h1m8 0h1m7 0h1m13 0h2m3 0h2m8 0h3m3 0h1m1 0h2m12 0h1m5 0h1m1 0h2m8 0h1m3 0h1m1 0h1m4 0h1m3 0h1m19 0h1m2 0h1m7 0h1m2 0h2m21 0h1m1 0h1m9 0h1m7 0h1m4 0h1m4 0h1m8 0h1m7 0h2m3 0h1m3 0h1m1 0h1m1 0h1m9 0h1m2 0h1m10 0h1m2 0h1m3 0h2m3 0h1m24 0h1m9 0h1m3 0h1m1 0h1m8 0h1m4 0h1m6 0h1m13 0h1m1 0h1m1 0h1m12 0h3m12 0h2m1 0h3m6 0h1m7 0h1m12 0h1m3 0h1m8 0h1m9 0h1m6 0h1m3 0h1m1 0h2m3 0h1m2 0h1m1 0h1m15 0h1m10 0h1m3 0h1m3 0h1m4 0h1m2 0h1m1 0h1m10 0h1m4 0h1m12 0h1m7 0h1m1 0h1m5 0h1m11 0h1m5 0h1m2 0h1m1 0h1m1 0h1m3 0h1m7 0h1m6 0h1m1 0h1m1 0h1m3 0h1m5 0h1m4 0h1m8 0h1m5 0h1m5 0h1m2 0h1m3 0h1m1 0h1m7 0h2m3 0h1m14 0h1m6 0h1m60 0h2m-886 13h1m20 0h1m21 0h1m12 0h1m6 0h1m4 0h1m8 0h1m3 0h2m5 0h1m8 0h2m38 0h1m5 0h1m20 0h1m11 0h1m12 0h1m3 0h1m16 0h1m7 0h2m7 0h1m3 0h1m1 0h1m1 0h1m1 0h1m1 0h1m12 0h1m48 0h1m8 0h1m3 0h1m4 0h1m4 0h1m4 0h1m3 0h1m2 0h1m6 0h1m8 0h1m2 0h1m12 0h1m9 0h1m1 0h1m12 0h1m9 0h1m6 0h1m2 0h1m4 0h1m6 0h1m4 0h2m1 0h2m1 0h1m7 0h1m21 0h1m2 0h1m2 0h1m17 0h1m9 0h1m24 0h2m24 0h1m3 0h1m7 0h1m3 0h1m23 0h1m3 0h1m7 0h1m29 0h1m36 0h1m6 0h1m4 0h2m14 0h1m7 0h1m31 0h1m28 0h1m2 0h1m4 0h1m47 0h1m60 0h1m16 0h1m-954 7h1m20 0h1m14 0h1m4 0h1m12 0h2m18 0h1m2 0h1m7 0h1m14 0h1m7 0h1m1 0h1m4 0h2m3 0h1m14 0h1m1 0h1m13 0h1m2 0h2m17 0h1m4 0h1m8 0h1m24 0h1m1 0h1m5 0h1m10 0h2m6 0h1m2 0h1m25 0h1m2 0h1m7 0h2m3 0h2m4 0h1m2 0h1m1 0h1m11 0h1m4 0h1m27 0h1m16 0h1m2 0h1m6 0h1m8 0h1m9 0h1m9 0h1m5 0h1m7 0h1m1 0h1m9 0h1m13 0h1m3 0h1m13 0h1m4 0h1m20 0h1m7 0h1m3 0h1m2 0h1m1 0h2m1 0h1m16 0h1m14 0h1m3 0h1m1 0h1m39 0h1m1 0h1m1 0h1m17 0h2m11 0h1m1 0h1m17 0h1m13 0h1m11 0h1m5 0h1m6 0h1m1 0h1m6 0h1m3 0h1m9 0h1m2 0h1m6 0h1m1 0h1m16 0h1m16 0h1m30 0h1m1 0h1m16 0h1m2 0h1m11 0h1m1 0h1m2 0h1m9 0h1m56 0h1m8 0h1m-869 7h1m5 0h2m13 0h1m4 0h1m18 0h1m1 0h1m1 0h1m4 0h1m19 0h1m1 0h1m7 0h1m1 0h1m2 0h1m1 0h1m4 0h1m6 0h1m1 0h1m5 0h1m17 0h1m2 0h1m3 0h1m13 0h1m5 0h1m11 0h1m3 0h1m9 0h2m2 0h2m9 0h1m2 0h2m12 0h1m1 0h1m9 0h1m7 0h1m9 0h1m4 0h1m2 0h1m7 0h1m22 0h1m4 0h2m1 0h1m3 0h2m3 0h1m2 0h1m6 0h1m1 0h1m1 0h3m3 0h1m11 0h1m2 0h1m5 0h1m8 0h1m3 0h1m2 0h1m2 0h3m39 0h2m5 0h1m1 0h1m10 0h1m3 0h3m5 0h3m5 0h1m6 0h1m1 0h1m2 0h1m5 0h1m1 0h1m5 0h2m3 0h2m6 0h1m2 0h1m10 0h1m3 0h1m1 0h1m5 0h1m2 0h1m2 0h2m2 0h1m9 0h3m4 0h1m4 0h1m4 0h1m4 0h1m14 0h1m2 0h1m3 0h1m1 0h1m13 0h1m6 0h1m1 0h1m9 0h1m4 0h1m1 0h2m1 0h1m8 0h1m1 0h1m3 0h1m6 0h1m2 0h2m3 0h1m7 0h1m9 0h1m4 0h1m2 0h1m1 0h2m9 0h1m4 0h1m3 0h2m7 0h1m2 0h1m2 0h1m4 0h1m3 0h1m5 0h1m6 0h1m10 0h1m9 0h1m1 0h1m5 0h1m10 0h1m8 0h1m5 0h1m1 0h1m8 0h1m5 0h1m45 0h1m58 0h1m8 0h1m-923 7h1m31 0h1m8 0h1m3 0h3m4 0h2m5 0h3m10 0h1m20 0h2m1 0h1m3 0h1m1 0h1m15 0h1m4 0h1m2 0h1m7 0h1m1 0h2m7 0h2m2 0h1m11 0h1m4 0h1m3 0h1m8 0h1m2 0h2m3 0h2m1 0h1m3 0h1m2 0h2m6 0h1m5 0h1m7 0h3m1 0h1m6 0h1m5 0h1m2 0h2m8 0h3m9 0h1m4 0h1m3 0h1m2 0h1m2 0h1m6 0h1m2 0h1m7 0h1m1 0h1m3 0h2m5 0h1m7 0h3m1 0h1m9 0h1m6 0h1m4 0h1m4 0h1m8 0h1m1 0h1m3 0h1m3 0h1m7 0h1m2 0h1m7 0h1m3 0h1m4 0h1m2 0h2m4 0h1m2 0h1m5 0h1m1 0h1m2 0h1m2 0h1m11 0h2m1 0h3m1 0h1m10 0h1m2 0h2m2 0h2m1 0h2m2 0h1m9 0h2m1 0h1m7 0h1m4 0h1m2 0h1m6 0h1m4 0h1m2 0h1m4 0h1m6 0h1m16 0h1m1 0h1m9 0h1m3 0h1m4 0h2m3 0h2m1 0h4m2 0h1m4 0h1m5 0h1m6 0h3m4 0h2m1 0h3m6 0h1m2 0h1m4 0h1m4 0h1m3 0h1m4 0h1m3 0h1m3 0h1m5 0h1m11 0h1m8 0h1m2 0h1m8 0h1m4 0h2m7 0h4m6 0h1m2 0h1m6 0h2m1 0h1m4 0h2m19 0h1m7 0h2m7 0h1m1 0h1m2 0h1m3 0h1m23 0h1m9 0h3m1 0h2m6 0h2m3 0h1m8 0h3m28 0h1m11 0h1m7 0h1m11 0h1m28 0h1m3 0h1m-929 7h1m21 0h1m2 0h1m2 0h1m6 0h1m2 0h1m4 0h1m2 0h1m17 0h3m1 0h1m1 0h3m4 0h1m2 0h1m5 0h1m7 0h2m5 0h1m4 0h1m4 0h1m4 0h1m10 0h1m2 0h1m4 0h2m3 0h2m2 0h1m7 0h1m3 0h1m4 0h1m3 0h1m2 0h1m12 0h1m3 0h1m2 0h1m2 0h1m6 0h1m3 0h1m6 0h1m1 0h1m2 0h1m4 0h4m13 0h1m9 0h1m2 0h1m3 0h1m1 0h1m1 0h3m1 0h2m2 0h1m1 0h1m4 0h2m1 0h1m1 0h1m1 0h1m1 0h1m13 0h2m6 0h1m1 0h5m14 0h2m1 0h1m1 0h1m7 0h1m1 0h1m3 0h1m7 0h2m6 0h1m2 0h5m4 0h1m2 0h1m4 0h1m4 0h1m4 0h1m5 0h1m1 0h2m2 0h2m7 0h2m1 0h1m1 0h1m4 0h1m2 0h1m2 0h3m2 0h4m1 0h2m1 0h2m2 0h2m6 0h1m3 0h4m2 0h1m1 0h2m2 0h1m4 0h2m5 0h1m3 0h1m1 0h2m1 0h2m2 0h1m1 0h1m3 0h1m1 0h1m2 0h1m1 0h1m6 0h1m3 0h1m4 0h2m3 0h1m1 0h1m1 0h2m1 0h1m2 0h1m11 0h1m10 0h2m2 0h1m9 0h1m1 0h1m2 0h1m3 0h2m4 0h1m4 0h2m7 0h1m1 0h1m2 0h1m3 0h1m3 0h1m2 0h2m3 0h1m1 0h2m2 0h1m9 0h1m1 0h1m8 0h4m5 0h2m4 0h1m4 0h1m2 0h1m1 0h2m2 0h1m3 0h1m5 0h1m9 0h1m4 0h1m1 0h1m10 0h4m2 0h1m1 0h1m5 0h1m10 0h1m1 0h1m9 0h1m1 0h1m12 0h1m3 0h1m5 0h1m3 0h1m7 0h1m5 0h1m2 0h1m2 0h1m5 0h2m23 0h1m12 0h1m6 0h2m4 0h2m2 0h1m2 0h1m2 0h1m3 0h1m7 0h2m25 0h1m2 0h1m6 0h1m-921 7h2m25 0h2m12 0h1m3 0h1m2 0h1m1 0h1m1 0h2m6 0h1m1 0h1m4 0h4m1 0h1m3 0h2m8 0h1m4 0h1m3 0h2m1 0h1m5 0h2m1 0h2m5 0h1m2 0h1m5 0h1m6 0h1m2 0h1m5 0h1m14 0h1m1 0h1m3 0h3m5 0h1m8 0h4m1 0h1m6 0h2m1 0h1m1 0h2m2 0h2m4 0h4m2 0h1m6 0h1m8 0h1m1 0h1m3 0h1m7 0h2m8 0h1m3 0h3m2 0h1m3 0h1m5 0h2m1 0h1m2 0h1m7 0h1m4 0h1m3 0h1m2 0h1m1 0h1m2 0h1m2 0h2m6 0h3m8 0h1m4 0h1m2 0h1m1 0h3m2 0h2m1 0h2m1 0h2m1 0h1m1 0h1m2 0h1m1 0h1m3 0h1m1 0h1m1 0h4m7 0h1m2 0h1m5 0h1m3 0h1m1 0h1m2 0h1m1 0h1m2 0h1m11 0h3m4 0h1m1 0h1m3 0h2m7 0h1m6 0h1m2 0h1m9 0h1m2 0h1m1 0h4m1 0h1m2 0h1m7 0h1m5 0h1m8 0h3m8 0h1m2 0h1m1 0h1m4 0h1m3 0h1m2 0h1m1 0h1m2 0h1m1 0h1m1 0h1m12 0h2m2 0h3m2 0h10m3 0h1m1 0h2m1 0h2m1 0h1m3 0h1m5 0h1m2 0h3m8 0h2m3 0h1m3 0h1m1 0h1m2 0h2m1 0h1m6 0h2m3 0h1m4 0h1m3 0h4m1 0h1m1 0h1m4 0h2m2 0h1m4 0h4m1 0h2m3 0h1m2 0h1m2 0h1m1 0h1m7 0h1m9 0h1m1 0h1m2 0h1m1 0h1m2 0h2m2 0h1m3 0h1m1 0h1m1 0h2m3 0h1m3 0h2m3 0h1m16 0h1m12 0h2m1 0h1m2 0h1m7 0h1m4 0h1m1 0h1m9 0h1m3 0h2m2 0h1m15 0h1m2 0h1m1 0h1m1 0h1m1 0h2m1 0h1m1 0h1m3 0h1m6 0h1m7 0h1m2 0h1m3 0h1m16 0h1m1 0h1m8 0h1m1 0h1m8 0h1m2 0h1m4 0h1m17 0h1m18 0h1m-946 13h1m16 0h1m2 0h1m1 0h1m2 0h1m3 0h1m7 0h1m3 0h1m3 0h2m6 0h2m2 0h1m2 0h1m7 0h1m2 0h1m5 0h1m2 0h1m1 0h3m3 0h1m4 0h1m1 0h1m8 0h2m1 0h1m3 0h1m4 0h1m1 0h1m4 0h1m5 0h1m2 0h1m3 0h1m5 0h1m1 0h1m2 0h1m6 0h1m1 0h1m2 0h2m9 0h2m2 0h1m7 0h1m1 0h2m3 0h1m1 0h1m2 0h1m5 0h1m4 0h1m6 0h1m1 0h2m2 0h3m1 0h1m4 0h3m3 0h2m2 0h1m2 0h2m1 0h2m2 0h1m1 0h1m3 0h1m8 0h1m7 0h4m3 0h1m1 0h1m5 0h1m5 0h4m3 0h1m2 0h2m12 0h1m3 0h1m1 0h2m1 0h1m1 0h2m11 0h1m2 0h5m2 0h1m4 0h2m4 0h2m1 0h2m1 0h1m3 0h1m4 0h1m2 0h1m1 0h1m2 0h1m9 0h1m1 0h1m2 0h4m1 0h1m2 0h1m6 0h1m7 0h1m1 0h1m6 0h2m5 0h1m3 0h1m3 0h1m1 0h1m1 0h1m1 0h1m2 0h1m4 0h1m1 0h2m1 0h1m4 0h1m1 0h1m5 0h2m9 0h1m1 0h2m3 0h1m7 0h2m9 0h1m2 0h1m2 0h2m13 0h1m2 0h1m2 0h1m4 0h1m3 0h1m4 0h1m3 0h2m1 0h2m2 0h1m2 0h1m2 0h2m1 0h2m1 0h1m3 0h1m2 0h1m2 0h1m1 0h1m1 0h1m9 0h2m1 0h1m2 0h1m5 0h2m1 0h1m5 0h1m3 0h1m5 0h1m2 0h1m1 0h1m1 0h1m3 0h1m1 0h1m1 0h1m1 0h1m3 0h1m3 0h1m2 0h1m4 0h1m9 0h1m2 0h3m11 0h1m5 0h1m7 0h1m1 0h1m2 0h1m1 0h1m8 0h1m1 0h2m1 0h1m2 0h2m13 0h1m6 0h1m3 0h2m4 0h2m7 0h1m2 0h1m3 0h1m1 0h2m3 0h1m5 0h2m5 0h1m1 0h2m4 0h1m1 0h2m2 0h1m6 0h1m3 0h1m4 0h1m1 0h1m8 0h1m2 0h1m5 0h1m2 0h1m8 0h1m9 0h2m8 0h1m2 0h1m13 0h1m7 0h1m3 0h1m-891 7h1m1 0h1m11 0h1m1 0h1m14 0h1m4 0h1m18 0h1m14 0h1m1 0h1m9 0h1m1 0h1m2 0h1m6 0h1m8 0h1m9 0h2m3 0h2m6 0h1m2 0h1m5 0h2m5 0h2m4 0h1m9 0h1m6 0h1m3 0h1m1 0h1m6 0h2m6 0h1m4 0h1m3 0h1m2 0h2m5 0h1m15 0h1m7 0h1m5 0h2m8 0h1m8 0h1m6 0h1m11 0h1m19 0h1m3 0h1m4 0h1m15 0h1m9 0h2m8 0h1m5 0h1m6 0h2m5 0h1m4 0h1m6 0h1m15 0h1m1 0h1m19 0h1m1 0h1m4 0h1m1 0h1m12 0h1m2 0h1m3 0h1m6 0h1m4 0h1m4 0h1m4 0h1m6 0h1m2 0h1m12 0h1m6 0h1m2 0h1m7 0h1m7 0h1m1 0h1m7 0h1m12 0h1m13 0h1m9 0h2m4 0h2m3 0h1m3 0h1m9 0h1m4 0h1m1 0h1m5 0h1m4 0h2m2 0h1m4 0h1m3 0h1m5 0h1m3 0h2m1 0h1m3 0h1m6 0h1m3 0h1m4 0h1m7 0h1m26 0h1m9 0h2m3 0h1m7 0h1m4 0h1m3 0h1m8 0h1m1 0h2m6 0h2m6 0h1m5 0h1m14 0h1m7 0h1m2 0h1m3 0h1m1 0h1m3 0h1m5 0h1m6 0h1m10 0h2m5 0h1m10 0h2m9 0h1m24 0h1m6 0h1m16 0h1m15 0h1m-911 7h1m40 0h1m3 0h1m2 0h1m1 0h1m1 0h1m1 0h1m8 0h1m6 0h1m3 0h2m2 0h1m1 0h1m1 0h1m9 0h2m10 0h1m5 0h3m2 0h1m5 0h2m6 0h1m16 0h1m4 0h2m6 0h1m4 0h2m3 0h1m4 0h1m10 0h2m7 0h1m2 0h1m2 0h1m2 0h2m2 0h1m4 0h4m6 0h1m2 0h1m7 0h1m1 0h1m3 0h1m2 0h1m8 0h1m1 0h1m1 0h1m15 0h1m5 0h2m2 0h2m3 0h3m6 0h1m7 0h1m7 0h1m1 0h2m2 0h1m1 0h2m7 0h1m2 0h1m2 0h1m2 0h2m2 0h1m9 0h1m3 0h1m1 0h3m1 0h1m11 0h2m1 0h2m2 0h1m4 0h1m1 0h3m3 0h1m6 0h1m1 0h2m8 0h2m2 0h1m7 0h1m7 0h3m2 0h2m1 0h3m19 0h1m3 0h1m1 0h1m11 0h1m1 0h1m1 0h1m3 0h2m6 0h1m1 0h1m3 0h1m11 0h1m2 0h1m3 0h2m2 0h1m7 0h1m3 0h1m2 0h1m2 0h1m3 0h1m3 0h1m8 0h3m1 0h1m4 0h1m7 0h1m1 0h1m4 0h1m6 0h1m2 0h1m5 0h2m9 0h1m2 0h2m9 0h1m1 0h2m1 0h1m2 0h1m1 0h1m2 0h1m1 0h1m2 0h1m1 0h2m2 0h1m1 0h1m2 0h1m1 0h3m5 0h1m9 0h1m6 0h1m1 0h1m1 0h1m6 0h1m4 0h3m2 0h1m2 0h4m3 0h1m1 0h1m2 0h1m1 0h2m3 0h1m4 0h1m2 0h1m1 0h1m6 0h1m14 0h2m2 0h2m13 0h5m3 0h4m5 0h1m13 0h1m4 0h1m7 0h1m5 0h1m1 0h1m2 0h1m9 0h1m14 0h1m34 0h1m14 0h1m12 0h1m9 0h1m8 0h1m-948 7h1m6 0h1m12 0h1m5 0h1m8 0h1m6 0h1m9 0h1m4 0h1m2 0h1m1 0h1m1 0h1m3 0h1m3 0h1m14 0h1m1 0h2m1 0h1m4 0h1m2 0h1m5 0h1m2 0h1m4 0h1m2 0h3m2 0h1m2 0h1m1 0h1m1 0h2m2 0h1m2 0h1m3 0h1m1 0h2m1 0h1m2 0h1m1 0h1m7 0h2m5 0h2m11 0h2m32 0h1m1 0h2m4 0h1m6 0h1m2 0h1m2 0h2m4 0h1m4 0h1m3 0h1m2 0h2m3 0h1m1 0h1m4 0h1m3 0h2m9 0h2m1 0h1m2 0h1m4 0h2m1 0h1m3 0h1m2 0h1m3 0h3m7 0h1m1 0h1m2 0h1m1 0h1m3 0h1m2 0h1m3 0h1m1 0h2m4 0h1m1 0h1m3 0h1m1 0h2m1 0h1m3 0h3m1 0h2m2 0h2m1 0h1m5 0h1m9 0h2m4 0h1m1 0h1m3 0h1m1 0h1m1 0h1m4 0h2m3 0h1m4 0h1m1 0h2m2 0h2m1 0h1m2 0h1m4 0h2m7 0h1m5 0h1m1 0h3m1 0h1m3 0h1m1 0h1m1 0h1m4 0h1m2 0h1m2 0h1m7 0h1m2 0h1m1 0h1m1 0h1m6 0h2m3 0h2m1 0h1m2 0h1m1 0h2m3 0h1m1 0h5m4 0h2m1 0h1m7 0h2m3 0h4m6 0h5m5 0h1m3 0h1m4 0h1m3 0h2m3 0h1m7 0h1m1 0h1m2 0h1m1 0h1m3 0h2m1 0h1m2 0h1m3 0h1m1 0h1m5 0h1m9 0h4m5 0h1m2 0h1m8 0h1m1 0h1m2 0h1m15 0h1m7 0h1m6 0h2m9 0h1m6 0h1m7 0h4m3 0h1m1 0h1m6 0h1m6 0h1m1 0h1m17 0h1m2 0h2m1 0h2m6 0h1m3 0h1m3 0h2m1 0h1m1 0h1m1 0h2m5 0h1m1 0h1m5 0h1m6 0h2m2 0h1m1 0h1m4 0h3m5 0h2m6 0h1m1 0h3m3 0h1m9 0h1m3 0h1m12 0h1m13 0h1m1 0h1m2 0h2m6 0h1m10 0h1m2 0h2m17 0h1m20 0h1m18 0h1m-963 7h1m11 0h1m3 0h1m3 0h1m3 0h1m1 0h1m12 0h1m6 0h1m3 0h1m7 0h1m3 0h1m4 0h4m1 0h2m5 0h2m2 0h1m8 0h1m4 0h1m3 0h1m2 0h1m6 0h1m6 0h1m9 0h1m10 0h1m3 0h1m10 0h3m1 0h1m1 0h1m5 0h2m2 0h1m1 0h1m1 0h3m18 0h1m1 0h1m4 0h1m2 0h1m8 0h1m1 0h3m7 0h2m1 0h2m3 0h1m1 0h1m5 0h2m3 0h1m4 0h1m1 0h2m1 0h1m1 0h1m1 0h1m4 0h1m4 0h1m12 0h2m1 0h1m6 0h3m6 0h1m13 0h1m1 0h1m1 0h2m3 0h2m3 0h1m5 0h1m4 0h1m2 0h1m4 0h1m1 0h1m17 0h2m4 0h2m4 0h4m1 0h1m7 0h1m1 0h1m2 0h1m4 0h1m2 0h1m2 0h1m3 0h2m3 0h1m1 0h4m1 0h2m2 0h1m9 0h1m3 0h1m1 0h1m1 0h1m3 0h1m1 0h1m5 0h1m3 0h1m2 0h1m2 0h4m1 0h1m7 0h2m4 0h1m1 0h1m3 0h2m1 0h1m1 0h1m5 0h1m2 0h2m2 0h1m1 0h1m1 0h2m2 0h1m1 0h1m6 0h1m7 0h1m4 0h1m3 0h1m1 0h1m2 0h1m3 0h1m3 0h1m1 0h1m13 0h2m5 0h2m1 0h3m4 0h1m2 0h1m1 0h5m2 0h3m7 0h1m6 0h1m4 0h1m5 0h1m3 0h1m3 0h1m2 0h1m1 0h1m2 0h1m3 0h1m1 0h1m3 0h2m3 0h1m4 0h2m4 0h1m2 0h1m5 0h1m8 0h1m1 0h3m5 0h1m2 0h1m2 0h1m9 0h2m1 0h2m3 0h1m4 0h1m2 0h1m8 0h1m5 0h1m1 0h2m2 0h1m5 0h1m1 0h1m4 0h1m4 0h1m2 0h1m2 0h1m1 0h1m1 0h1m1 0h1m3 0h3m2 0h1m7 0h2m2 0h1m4 0h1m4 0h1m3 0h1m1 0h1m2 0h2m1 0h1m4 0h1m1 0h2m3 0h1m7 0h1m1 0h1m7 0h1m1 0h1m2 0h1m11 0h1m3 0h1m7 0h1m17 0h1m1 0h1m5 0h1m7 0h1m16 0h1m4 0h1m3 0h2m6 0h1"/><path stroke="#ecf21a" stroke-width="1" d="M24 237.5h2m9 0h1m9 0h1m4 0h1m20 0h1m1 0h1m3 0h1m1 0h1m2 0h1m5 0h1m3 0h1m3 0h1m1 0h1m3 0h1m2 0h1m1 0h1m8 0h1m1 0h2m10 0h1m1 0h1m7 0h1m6 0h2m1 0h1m4 0h1m2 0h2m2 0h2m10 0h1m1 0h1m2 0h1m1 0h1m2 0h2m1 0h1m2 0h1m2 0h1m4 0h2m8 0h1m2 0h1m1 0h1m7 0h1m6 0h1m2 0h1m3 0h1m7 0h1m7 0h1m6 0h1m4 0h1m2 0h2m1 0h1m4 0h1m10 0h1m5 0h1m4 0h1m2 0h1m3 0h3m1 0h2m3 0h1m8 0h1m3 0h1m4 0h1m1 0h1m1 0h1m2 0h2m1 0h2m1 0h1m2 0h1m4 0h3m1 0h1m8 0h1m13 0h2m9 0h2m8 0h2m2 0h1m12 0h1m3 0h2m1 0h1m5 0h1m4 0h1m2 0h1m6 0h3m1 0h2m3 0h2m1 0h1m2 0h2m2 0h3m4 0h1m1 0h1m6 0h2m6 0h3m8 0h1m2 0h1m3 0h2m5 0h2m3 0h1m3 0h2m2 0h3m2 0h1m1 0h2m2 0h1m2 0h1m5 0h1m1 0h1m3 0h1m1 0h1m5 0h1m6 0h1m1 0h4m5 0h1m1 0h1m9 0h1m5 0h1m3 0h1m3 0h2m2 0h1m8 0h2m4 0h1m2 0h3m6 0h1m2 0h1m6 0h3m2 0h1m4 0h1m3 0h2m2 0h1m11 0h2m5 0h1m10 0h1m2 0h1m1 0h2m17 0h1m7 0h1m1 0h1m3 0h1m3 0h2m6 0h3m2 0h1m1 0h1m1 0h1m5 0h1m6 0h1m2 0h1m7 0h1m5 0h1m1 0h1m2 0h1m4 0h1m1 0h1m10 0h1m25 0h3m1 0h1m5 0h1m12 0h1m1 0h1m4 0h1m14 0h1m5 0h1m5 0h1m4 0h1m1 0h1m5 0h1m5 0h1m10 0h1m1 0h1m4 0h1m8 0h1m26 0h1"/><path stroke="#fbfc05" stroke-width="5" d="M69 2.5h2m13 0h1m3 0h1m90 0h1m27 0h1m42 0h1m49 0h2m15 0h1m32 0h1m7 0h1m9 0h1m120 0h1m11 0h1m5 0h1m9 0h1m12 0h1m20 0h1m35 0h1m20 0h1m2 0h1m10 0h1m15 0h1m18 0h1m71 0h1m2 0h1m1 0h1m10 0h1m7 0h1m31 0h1m43 0h1"/><path stroke="#fbfc05" stroke-width="6" d="M34 8h1m25 0h2m27 0h1m20 0h1m175 0h1m6 0h1m8 0h1m28 0h1m24 0h1m91 0h1m11 0h1m89 0h1m5 0h1m14 0h2m11 0h1m2 0h1m32 0h1m18 0h1m153 0h1m18 0h1m33 0h1m113 0h1m-882 48h1m9 0h1m13 0h1m24 0h1m4 0h2m13 0h1m21 0h1m69 0h1m45 0h1m64 0h1m7 0h1m8 0h1m12 0h1m23 0h1m17 0h1m106 0h1m74 0h1m33 0h1m43 0h1m31 0h1m3 0h1m22 0h1m6 0h1m43 0h1m38 0h1m-799 41h1m91 0h1m1 0h1m118 0h1m29 0h1m8 0h1m19 0h1m85 0h1m7 0h1m22 0h1m9 0h1m12 0h1m86 0h1m93 0h1m11 0h1m34 0h1m13 0h1m53 0h1m10 0h1m29 0h1m45 0h1m2 0h1m4 0h1m-804 48h1m49 0h1m43 0h1m23 0h1m26 0h1m61 0h1m62 0h1m82 0h1m1 0h1m10 0h1m3 0h2m2 0h1m4 0h1m7 0h1m17 0h1m5 0h2m13 0h1m6 0h1m28 0h1m22 0h1m38 0h1m12 0h1m33 0h1m59 0h1m18 0h1m-617 48h1m13 0h1m24 0h1m2 0h1m26 0h2m9 0h1m1 0h1m4 0h1m12 0h1m10 0h1m5 0h1m4 0h1m9 0h1m20 0h1m36 0h2m6 0h2m30 0h1m7 0h1m4 0h1m5 0h1m8 0h1m2 0h2m1 0h1m4 0h1m20 0h1m6 0h1m9 0h2m4 0h1m10 0h1m1 0h1m10 0h1m6 0h1m10 0h3m5 0h2m6 0h1m6 0h1m3 0h1m20 0h1m5 0h1m8 0h1m1 0h1m19 0h1m3 0h1m6 0h1m15 0h1m1 0h1m7 0h1m3 0h1m6 0h1m6 0h1m2 0h2m4 0h1m6 0h1m20 0h1m1 0h1m8 0h1m18 0h1m8 0h1m14 0h1m3 0h1m4 0h1m5 0h1m4 0h1m1 0h2m12 0h1m6 0h1m26 0h1m3 0h2m27 0h1m42 0h1m16 0h1m33 0h1m81 0h1m26 0h1m-876 41h1m6 0h1m16 0h2m8 0h1m27 0h1m21 0h3m11 0h1m9 0h1m24 0h1m6 0h1m5 0h1m41 0h1m4 0h1m6 0h2m18 0h1m6 0h1m28 0h1m3 0h1m4 0h1m2 0h1m22 0h1m10 0h1m35 0h1m3 0h1m3 0h1m11 0h1m2 0h1m13 0h1m4 0h1m7 0h2m2 0h1m18 0h1m15 0h1m32 0h1m4 0h1m5 0h1m3 0h1m9 0h1m7 0h1m20 0h1m1 0h1m3 0h1m3 0h1m10 0h1m18 0h1m10 0h1m2 0h1m3 0h1m4 0h1m2 0h1m8 0h1m1 0h1m2 0h1m2 0h1m46 0h1m9 0h1m2 0h1m26 0h1m27 0h1m34 0h1m5 0h1m3 0h1m3 0h2m38 0h1"/><path stroke="#fbfc05" stroke-width="7" d="M34 14.5h1m93 0h1m9 0h2m25 0h1m3 0h2m4 0h1m6 0h1m11 0h1m54 0h1m50 0h1m1 0h1m28 0h1m4 0h1m16 0h1m30 0h1m3 0h1m16 0h1m17 0h1m9 0h1m62 0h1m22 0h1m100 0h1m3 0h1m36 0h1m12 0h2m64 0h1m28 0h1m19 0h1m3 0h1m6 0h1m31 0h1m127 0h1m-863 7h1m4 0h1m66 0h1m25 0h1m105 0h1m102 0h1m91 0h1m17 0h1m5 0h1m17 0h1m5 0h1m26 0h1m33 0h1m67 0h1m79 0h1m38 0h1m28 0h1m-695 7h1m19 0h1m9 0h1m106 0h1m172 0h1m20 0h1m62 0h1m1 0h1m31 0h1m53 0h1m23 0h1m49 0h1m4 0h1m55 0h1m3 0h1m3 0h1m78 0h1m-799 7h1m242 0h1m9 0h1m4 0h1m1 0h1m5 0h1m50 0h1m20 0h1m11 0h1m27 0h1m42 0h1m4 0h1m44 0h1m18 0h1m20 0h1m76 0h1m51 0h1m39 0h1m38 0h1m3 0h1m35 0h1m37 0h1m-798 7h1m15 0h1m38 0h1m20 0h1m17 0h2m40 0h1m20 0h1m2 0h1m24 0h1m109 0h1m70 0h1m4 0h1m17 0h1m115 0h1m28 0h1m57 0h1m38 0h1m87 0h1m39 0h1m166 0h1m-927 7h1m34 0h1m9 0h1m30 0h1m17 0h1m156 0h1m8 0h1m5 0h1m63 0h1m23 0h1m55 0h1m5 0h1m39 0h1m23 0h1m33 0h1m14 0h1m56 0h1m156 0h1m15 0h1m14 0h1m-749 13h1m67 0h1m50 0h1m12 0h1m1 0h1m12 0h1m50 0h1m35 0h1m6 0h2m29 0h1m39 0h1m2 0h1m29 0h1m4 0h1m83 0h1m10 0h1m8 0h1m15 0h1m39 0h1m89 0h1m35 0h1m56 0h1m3 0h1m27 0h1m26 0h1m16 0h1m-796 7h1m23 0h1m30 0h1m7 0h1m19 0h1m16 0h1m35 0h1m115 0h1m101 0h1m3 0h1m29 0h1m22 0h1m110 0h1m82 0h1m5 0h1m12 0h1m53 0h1m2 0h1m77 0h1m-760 7h1m25 0h1m67 0h1m10 0h1m21 0h1m8 0h1m7 0h1m17 0h1m95 0h1m7 0h1m33 0h1m21 0h1m3 0h1m44 0h1m29 0h1m10 0h1m70 0h1m17 0h1m20 0h1m65 0h1m74 0h1m3 0h1m7 0h1m43 0h1m39 0h1m38 0h1m-707 7h1m38 0h1m4 0h1m23 0h1m11 0h1m14 0h1m36 0h1m41 0h2m43 0h1m7 0h1m59 0h1m2 0h1m62 0h1m3 0h1m10 0h1m27 0h1m10 0h1m11 0h1m1 0h1m8 0h1m57 0h1m24 0h1m36 0h1m76 0h1m3 0h1m64 0h1m73 0h1m-863 7h1m93 0h1m41 0h1m7 0h1m28 0h1m42 0h1m36 0h1m5 0h1m1 0h1m4 0h1m121 0h1m13 0h1m2 0h1m6 0h1m7 0h1m34 0h1m5 0h1m16 0h1m40 0h1m2 0h1m28 0h1m39 0h1m13 0h1m48 0h2m19 0h1m2 0h1m32 0h1m7 0h1m39 0h1m38 0h1m9 0h1m-787 13h1m32 0h1m80 0h1m23 0h1m52 0h1m15 0h1m30 0h1m6 0h2m50 0h1m4 0h1m71 0h1m206 0h1m36 0h1m6 0h1m56 0h1m14 0h1m114 0h1m-835 7h1m135 0h1m23 0h1m1 0h1m77 0h1m20 0h1m5 0h1m49 0h1m53 0h1m259 0h1m42 0h1m84 0h1m11 0h1m-636 7h1m4 0h1m22 0h1m96 0h1m5 0h1m189 0h1m64 0h1m82 0h1m68 0h1m84 0h1m-760 7h1m4 0h1m39 0h1m101 0h1m48 0h1m4 0h1m11 0h1m13 0h1m12 0h1m18 0h2m6 0h3m47 0h1m107 0h2m34 0h2m14 0h1m95 0h1m29 0h1m1 0h1m68 0h1m3 0h1m66 0h1m13 0h1m3 0h1m34 0h1m127 0h1m-927 7h1m44 0h1m9 0h1m38 0h1m88 0h1m32 0h1m51 0h1m5 0h1m44 0h1m58 0h1m3 0h1m28 0h1m73 0h1m50 0h1m21 0h1m44 0h1m19 0h1m34 0h1m105 0h1m-720 7h1m3 0h1m26 0h1m17 0h1m145 0h1m26 0h2m66 0h1m18 0h1m6 0h1m9 0h1m29 0h1m3 0h1m8 0h1m11 0h1m3 0h1m12 0h1m5 0h1m21 0h1m41 0h1m15 0h1m53 0h1m18 0h1m8 0h1m4 0h1m12 0h1m10 0h1m113 0h1m1 0h1m11 0h1m9 0h1m19 0h1m-799 13h1m44 0h1m42 0h1m5 0h1m9 0h1m67 0h1m39 0h1m27 0h1m1 0h2m24 0h1m86 0h1m49 0h1m6 0h1m13 0h1m6 0h1m9 0h1m84 0h1m5 0h1m53 0h1m49 0h1m9 0h1m1 0h1m100 0h1m7 0h1m-711 7h1m5 0h1m37 0h2m17 0h1m3 0h1m13 0h1m5 0h1m5 0h1m31 0h1m41 0h1m23 0h1m11 0h1m7 0h1m31 0h1m17 0h1m8 0h1m58 0h1m41 0h1m22 0h1m11 0h1m13 0h1m105 0h1m24 0h1m30 0h2m41 0h1m44 0h1m39 0h1m85 0h1m-820 7h1m18 0h1m58 0h1m14 0h1m31 0h1m8 0h1m11 0h1m6 0h1m33 0h1m34 0h1m3 0h1m4 0h1m4 0h1m31 0h1m32 0h1m7 0h1m19 0h1m5 0h1m44 0h1m23 0h1m1 0h1m23 0h1m17 0h1m4 0h1m31 0h1m77 0h1m37 0h1m3 0h2m67 0h1m18 0h1m25 0h1m13 0h1m10 0h1m15 0h1m11 0h1m69 0h1m61 0h1m-908 7h1m2 0h1m19 0h1m7 0h1m30 0h1m8 0h1m6 0h1m16 0h1m18 0h1m1 0h1m19 0h1m29 0h1m3 0h1m17 0h1m18 0h1m7 0h1m13 0h1m15 0h1m9 0h1m23 0h1m3 0h1m7 0h1m9 0h1m4 0h1m1 0h1m15 0h1m9 0h1m13 0h1m35 0h1m4 0h1m9 0h1m3 0h1m5 0h1m10 0h1m18 0h1m7 0h1m12 0h1m6 0h1m28 0h1m2 0h1m6 0h1m6 0h1m1 0h1m29 0h1m12 0h1m6 0h2m1 0h1m10 0h1m8 0h1m11 0h1m7 0h2m14 0h1m10 0h1m31 0h1m9 0h1m3 0h1m1 0h1m28 0h1m23 0h2m7 0h1m29 0h2m12 0h1m6 0h1m33 0h1m45 0h1m-900 7h1m2 0h1m12 0h1m32 0h2m3 0h2m3 0h1m5 0h1m23 0h1m4 0h1m10 0h1m14 0h1m2 0h1m6 0h1m5 0h2m3 0h1m28 0h1m1 0h1m1 0h1m2 0h1m14 0h1m11 0h1m47 0h1m13 0h1m16 0h1m8 0h1m9 0h1m8 0h1m7 0h1m9 0h1m4 0h1m3 0h1m17 0h1m1 0h2m11 0h1m8 0h1m4 0h1m3 0h1m7 0h1m5 0h1m13 0h1m49 0h1m26 0h1m4 0h1m7 0h1m3 0h1m10 0h1m9 0h1m5 0h1m5 0h1m23 0h1m9 0h1m16 0h1m7 0h1m27 0h3m4 0h1m1 0h1m1 0h1m4 0h1m12 0h1m8 0h1m15 0h1m4 0h1m15 0h1m4 0h1m2 0h1m21 0h1m14 0h1m3 0h1m2 0h1m1 0h1m2 0h1m9 0h1m10 0h1m2 0h1m21 0h1m2 0h1m113 0h1m-886 7h1m12 0h1m8 0h1m12 0h1m8 0h1m12 0h1m45 0h1m11 0h1m23 0h1m4 0h1m7 0h1m16 0h1m6 0h1m1 0h1m11 0h1m2 0h1m5 0h1m27 0h1m14 0h1m14 0h1m4 0h1m1 0h1m19 0h2m26 0h1m1 0h1m56 0h1m8 0h1m3 0h1m11 0h1m5 0h2m10 0h1m1 0h1m3 0h2m15 0h1m6 0h1m1 0h1m2 0h1m1 0h1m18 0h1m10 0h1m30 0h1m14 0h1m2 0h1m1 0h1m4 0h1m1 0h1m7 0h2m3 0h1m11 0h1m3 0h1m2 0h1m8 0h1m1 0h1m14 0h1m35 0h1m3 0h1m6 0h1m1 0h1m6 0h1m23 0h2m29 0h1m2 0h1m9 0h1m16 0h1m4 0h1m9 0h1m91 0h1m-917 13h1m58 0h1m15 0h1m2 0h1m52 0h1m3 0h1m8 0h1m4 0h1m9 0h1m15 0h1m7 0h1m14 0h2m7 0h1m2 0h1m8 0h1m2 0h1m30 0h1m12 0h1m2 0h1m2 0h1m25 0h1m17 0h1m4 0h2m4 0h1m8 0h1m12 0h1m9 0h1m4 0h1m27 0h1m3 0h1m1 0h1m2 0h1m6 0h1m10 0h1m7 0h1m3 0h1m3 0h1m11 0h1m7 0h1m7 0h1m28 0h1m1 0h1m35 0h1m9 0h2m1 0h3m18 0h2m31 0h1m4 0h1m15 0h1m14 0h1m7 0h2m9 0h1m1 0h1m7 0h1m3 0h3m1 0h1m11 0h1m10 0h1m4 0h1m2 0h1m9 0h1m1 0h1m32 0h1m2 0h1m21 0h1m17 0h1m9 0h1m17 0h1m7 0h1m2 0h1m5 0h1m3 0h1m10 0h1m3 0h1m21 0h1m61 0h1m18 0h1m-911 7h1m32 0h1m26 0h1m17 0h1m10 0h1m6 0h1m5 0h1m16 0h1m12 0h1m2 0h1m16 0h1m82 0h2m15 0h1m3 0h1m34 0h1m14 0h1m80 0h2m38 0h1m13 0h1m15 0h1m10 0h2m6 0h1m15 0h1m38 0h1m37 0h1m63 0h1m37 0h1m31 0h1m39 0h1m38 0h1m20 0h1m31 0h1m-852 7h1m8 0h1m5 0h1m11 0h1m8 0h1m7 0h2m42 0h1m3 0h1m12 0h1m6 0h1m1 0h1m12 0h1m2 0h1m14 0h1m5 0h1m5 0h1m1 0h1m9 0h1m9 0h2m14 0h1m1 0h1m15 0h1m11 0h1m8 0h1m4 0h1m8 0h1m4 0h1m3 0h1m4 0h1m2 0h1m2 0h1m4 0h1m8 0h1m4 0h1m3 0h1m5 0h2m17 0h1m12 0h1m8 0h1m19 0h1m2 0h1m32 0h1m14 0h1m1 0h2m6 0h1m17 0h1m1 0h1m3 0h1m5 0h1m2 0h1m5 0h1m1 0h1m9 0h1m12 0h2m5 0h1m10 0h1m13 0h1m3 0h1m5 0h1m7 0h1m37 0h2m4 0h1m13 0h1m10 0h1m2 0h1m2 0h1m2 0h2m10 0h1m26 0h1m7 0h1m31 0h1m13 0h1m6 0h2m6 0h1m43 0h1m20 0h1m9 0h1m3 0h1m10 0h1m17 0h1m30 0h2m8 0h1m-879 7h1m9 0h1m15 0h1m20 0h1m10 0h1m1 0h1m1 0h1m6 0h1m32 0h1m2 0h1m22 0h1m22 0h1m11 0h1m6 0h1m2 0h1m8 0h1m4 0h1m2 0h2m2 0h1m2 0h1m8 0h1m5 0h1m19 0h1m10 0h1m5 0h1m3 0h1m4 0h1m3 0h2m33 0h1m12 0h1m1 0h1m14 0h1m1 0h1m1 0h1m3 0h1m2 0h1m16 0h2m15 0h1m6 0h1m1 0h1m6 0h1m5 0h1m3 0h1m22 0h2m9 0h1m13 0h1m1 0h1m7 0h1m2 0h1m10 0h1m6 0h1m5 0h1m8 0h1m12 0h1m5 0h1m3 0h1m1 0h1m6 0h1m4 0h1m13 0h1m2 0h1m4 0h1m1 0h1m3 0h1m7 0h1m15 0h1m5 0h1m8 0h1m5 0h1m24 0h1m11 0h1m10 0h1m6 0h1m3 0h1m9 0h1m8 0h1m5 0h1m3 0h1m13 0h2m11 0h1m3 0h1m11 0h1m11 0h1m9 0h1m17 0h1m4 0h1m29 0h1m1 0h1m12 0h1m1 0h1m18 0h1m6 0h1m14 0h1m5 0h1m28 0h1m-866 7h1m27 0h1m9 0h1m8 0h1m30 0h1m7 0h1m1 0h1m3 0h1m4 0h2m1 0h2m1 0h2m5 0h1m4 0h1m12 0h1m8 0h1m11 0h1m7 0h1m8 0h1m4 0h1m11 0h2m11 0h1m3 0h1m6 0h1m5 0h2m6 0h1m4 0h1m1 0h2m1 0h1m2 0h1m4 0h1m2 0h1m1 0h1m11 0h2m8 0h1m4 0h1m2 0h1m8 0h2m1 0h1m4 0h1m7 0h2m1 0h1m4 0h1m4 0h1m2 0h1m2 0h1m10 0h1m2 0h1m7 0h1m8 0h2m3 0h1m8 0h1m13 0h1m7 0h1m15 0h1m15 0h1m8 0h1m3 0h2m5 0h1m4 0h1m2 0h1m5 0h1m12 0h1m1 0h1m12 0h1m1 0h1m3 0h1m7 0h1m2 0h1m6 0h1m2 0h1m3 0h1m7 0h1m6 0h1m6 0h1m9 0h1m27 0h1m5 0h2m5 0h2m12 0h1m8 0h1m7 0h1m4 0h1m4 0h1m29 0h1m13 0h2m8 0h1m3 0h1m2 0h2m1 0h1m1 0h1m19 0h1m7 0h1m6 0h1m1 0h1m12 0h1m16 0h1m10 0h1m3 0h1m1 0h1m33 0h1m42 0h1m5 0h1m5 0h1m17 0h1"/><path stroke="#fbfc05" stroke-width="1" d="M58 237.5h1m24 0h2m18 0h1m13 0h1m10 0h1m28 0h1m3 0h1m2 0h1m5 0h1m2 0h1m1 0h1m10 0h1m4 0h1m14 0h1m10 0h1m2 0h1m9 0h1m21 0h1m11 0h1m18 0h1m2 0h2m14 0h1m3 0h1m4 0h1m1 0h1m12 0h1m6 0h1m1 0h1m22 0h1m2 0h1m6 0h1m3 0h1m2 0h2m4 0h1m10 0h1m5 0h1m6 0h1m2 0h1m4 0h1m5 0h1m2 0h1m2 0h1m1 0h1m3 0h1m7 0h1m31 0h1m5 0h1m18 0h1m6 0h1m12 0h1m1 0h1m5 0h1m10 0h1m6 0h1m13 0h1m8 0h1m6 0h1m5 0h1m1 0h2m27 0h1m4 0h1m18 0h1m2 0h1m2 0h1m8 0h1m3 0h1m3 0h1m3 0h1m4 0h2m2 0h1m1 0h2m11 0h1m3 0h1m13 0h1m9 0h1m32 0h1m13 0h1m9 0h1m45 0h1m1 0h1m10 0h1m14 0h1m7 0h1"/><path stroke="#fff000" stroke-width="5" d="M89 2.5h1m104 0h1m1 0h1m191 0h1m250 0h1m2 0h1m58 0h1"/><path stroke="#fff000" stroke-width="6" d="M128 8h1m12 0h1m52 0h1m1 0h1m10 0h1m86 0h1m4 0h1m399 0h1m53 0h1m-720 48h1m172 0h1m42 0h1m14 0h1m29 0h1m4 0h1m187 0h1m212 0h1m-508 41h1m1 0h1m10 0h1m42 0h1m44 0h1m4 0h1m1 0h1m398 0h1m-614 48h2m104 0h1m1 0h1m10 0h1m42 0h1m44 0h1m5 0h1m399 0h1m51 0h1m-720 48h1m54 0h1m104 0h1m107 0h1m69 0h1m116 0h1m248 0h1m14 0h1m39 0h1m24 0h1m27 0h1m-813 41h1m54 0h1m38 0h1m67 0h1m10 0h1m167 0h1m29 0h1m293 0h1m53 0h1m64 0h1"/><path stroke="#fff000" stroke-width="7" d="M89 14.5h1m71 0h1m88 0h1m43 0h1m404 0h1m1 0h1m51 0h1m-720 7h1m106 0h1m52 0h1m12 0h1m42 0h1m43 0h1m4 0h1m401 0h1m51 0h1m-665 7h1m104 0h1m1 0h1m10 0h1m42 0h1m43 0h1m5 0h1m400 0h1m-613 7h1m38 0h1m65 0h1m1 0h1m10 0h1m42 0h1m51 0h1m398 0h1m-506 7h1m10 0h1m86 0h1m404 0h1m1 0h1m-613 7h1m104 0h1m12 0h1m42 0h1m450 0h1m51 0h1m-720 13h1m54 0h1m106 0h1m53 0h1m49 0h1m400 0h1m91 0h1m-666 7h1m65 0h1m1 0h1m10 0h1m42 0h1m26 0h1m17 0h1m4 0h1m1 0h1m398 0h1m51 0h1m-670 7h1m56 0h1m52 0h1m12 0h1m42 0h1m44 0h1m294 0h1m-502 7h1m38 0h1m78 0h1m42 0h1m44 0h1m403 0h1m1 0h1m-613 7h1m104 0h1m107 0h1m398 0h1m-561 13h1m108 0h1m44 0h1m405 0h1m46 0h1m44 0h1m166 0h1m-872 7h1m51 0h1m65 0h1m42 0h1m49 0h1m1 0h1m398 0h1m51 0h1m-626 7h1m12 0h1m52 0h1m1 0h1m10 0h1m42 0h1m51 0h1m396 0h1m1 0h1m-613 7h1m38 0h1m41 0h1m23 0h1m12 0h1m42 0h1m44 0h2m108 0h1m293 0h1m-559 7h1m52 0h1m1 0h1m10 0h1m88 0h1m4 0h1m399 0h1m91 0h1m-705 7h1m104 0h1m55 0h1m45 0h1m313 0h1m90 0h1m51 0h1m39 0h1m-705 13h1m51 0h1m28 0h1m79 0h1m45 0h1m4 0h1m372 0h1m24 0h1m1 0h1m-668 7h1m159 0h1m1 0h1m99 0h1m4 0h2m-269 7h1m54 0h1m38 0h1m41 0h1m25 0h1m10 0h1m42 0h1m51 0h1m317 0h1m-587 7h1m54 0h1m80 0h1m23 0h1m1 0h1m10 0h1m42 0h1m159 0h1m78 0h1m16 0h1m59 0h1m134 0h1m51 0h1m30 0h1m33 0h1m-685 7h1m59 0h1m107 0h1m174 0h1m99 0h1m260 0h1m94 0h1m-900 7h1m54 0h1m38 0h1m17 0h1m49 0h1m53 0h1m154 0h1m270 0h1m24 0h1m91 0h1m38 0h1m100 0h1m-900 13h1m15 0h1m37 0h2m38 0h1m41 0h1m25 0h1m53 0h1m120 0h1m71 0h1m195 0h1m178 0h1m29 0h1m84 0h1m-900 7h1m54 0h1m51 0h1m54 0h1m10 0h1m42 0h1m195 0h1m254 0h1m116 0h1m-730 7h1m38 0h1m41 0h1m25 0h1m9 0h1m128 0h1m69 0h1m110 0h1m184 0h1m91 0h1m139 0h1m-845 7h1m38 0h1m28 0h1m319 0h1m11 0h1m66 0h1m82 0h1m43 0h1m69 0h1m39 0h1m24 0h1m141 0h1m-927 7h1m93 0h1m65 0h1m12 0h1m42 0h1m36 0h1m117 0h1m131 0h1m71 0h1m10 0h1m3 0h1m21 0h1m56 0h1m49 0h1m3 0h1m35 0h1m24 0h1m114 0h1"/><path stroke="#fff000" stroke-width="1" d="M34 237.5h1m54 0h1m88 0h1m1 0h1m13 0h1m1 0h1m388 0h1m143 0h1m8 0h1m63 0h1m15 0h1"/><path stroke="#ffd900" stroke-width="5" d="M141 2.5h1m152 0h1m3 0h2m399 0h1"/><path stroke="#ffd900" stroke-width="6" d="M250 8h1m450 0h1m-561 48h1m52 0h1m1 0h1m102 0h1m399 0h1m-559 41h1m557 0h1m-559 48h1m154 0h1m5 0h1m396 0h1m-559 48h1m54 0h1m10 0h1m42 0h1m448 0h1m1 0h1m-561 41h1m52 0h1m55 0h1m450 0h1m91 0h1"/><path stroke="#ffd900" stroke-width="7" d="M141 14.5h1m54 0h1m10 0h1m91 0h1m-5 7h1m403 0h1m-559 7h1m156 0h2m399 0h1m-559 7h1m153 0h1m3 0h1m399 0h1m-559 7h1m108 0h1m48 0h1m-159 7h1m54 0h1m98 0h1m3 0h1m399 0h1m-559 13h1m153 0h1m3 0h1m399 0h1m-559 7h1m157 0h1m399 0h1m-401 7h1m399 0h1m-559 7h1m154 0h1m-156 7h1m54 0h1m502 0h1m-504 13h1m10 0h1m88 0h1m3 0h1m398 0h1m-404 7h1m402 0h1m-404 7h1m3 0h1m-160 7h1m54 0h1m103 0h1m400 0h1m-402 7h1m398 0h1m-666 7h1m106 0h1m54 0h1m10 0h1m491 0h1m-506 13h1m1 0h1m10 0h1m-67 7h1m65 0h1m89 0h1m401 0h1m1 0h1m-561 7h1m159 0h1m397 0h1m1 0h1m-561 7h1m498 0h1m58 0h1m-559 7h1m54 0h1m10 0h1m42 0h1m448 0h1m1 0h1m51 0h1m39 0h1m-653 7h1m52 0h1m12 0h1m491 0h1m-559 13h1m52 0h1m12 0h1m491 0h1m1 0h1m-508 7h1m445 0h1m58 0h1m-559 7h1m52 0h1m12 0h1m42 0h1m448 0h1m-559 7h1m28 0h1m25 0h1m10 0h1m42 0h1m389 0h1m58 0h1m1 0h1m-613 7h1m51 0h1m54 0h1m443 0h1m58 0h1m1 0h1"/><path stroke="#ffd900" stroke-width="1" d="M141 237.5h1m65 0h1m42 0h1m389 0h1m58 0h1m53 0h1"/><path stroke="#ffb800" stroke-width="5" d="M295 2.5h1"/><path stroke="#ffb800" stroke-width="6" d="M298 8h1m-3 89h1m2 0h1m-3 48h1m2 0h1m339 48h1m-1 41h1"/><path stroke="#ffb800" stroke-width="7" d="M295 14.5h1m2 0h1m-1 7h1m-4 7h1m2 7h1m401 0h1m-406 7h1m2 7h1m-3 20h1m-1 7h1m2 7h1m-4 7h1m0 20h1m-1 28h1m2 0h1m-4 13h1m2 0h1m-1 7h1m-4 7h1m342 14h1m-1 7h1m-1 13h1m-1 14h1"/><path stroke="#ffb800" stroke-width="1" d="M701 237.5h1"/><path stroke="#ff9400" stroke-width="5" d="M297 2.5h1m402 0h1"/><path stroke="#ff9400" stroke-width="6" d="M295 8h1m1 0h1m-2 48h1m1 0h1m401 0h1m-404 41h1m402 0h1m-403 48h1m401 48h1m-1 41h1"/><path stroke="#ff9400" stroke-width="7" d="M700 14.5h1m-1 7h1m-405 7h1m403 0h1m-405 7h2m-2 7h1m1 0h1m401 0h1m-405 7h1m403 0h1m-405 13h1m1 0h1m401 0h1m-1 7h1m-404 7h2m401 0h1m-403 7h1m401 0h1m-402 7h1m400 0h1m-404 13h1m1 0h1m400 0h1m-403 7h2m400 0h1m-404 7h3m400 0h1m-404 7h1m1 0h1m400 0h1m-404 7h1m1 0h1m400 0h1m-1 7h1m-403 13h2m-2 7h1m401 0h1m-401 7h1m399 0h1m-1 21h1m-1 13h1m-1 7h1m-1 7h1m-1 14h1"/><path stroke="#ff9400" stroke-width="1" d="M700 237.5h1"/><path stroke="#ff7800" stroke-width="5" d="M296 2.5h1"/><path stroke="#ff7800" stroke-width="6" d="M296 8h1m403 0h1m-404 48h1m0 41h1m0 48h1m400 0h1"/><path stroke="#ff7800" stroke-width="7" d="M296 14.5h2m-2 7h2m-1 7h1m-1 14h1m-1 7h1m-1 13h1m-1 7h2m-2 14h1m-1 7h2m-1 13h1m-1 21h1m-1 7h1m-1 7h2m400 13h1m-402 7h1m-2 7h2m400 7h1m-1 7h1m-1 41h1"/><path stroke="#ff5900" stroke-width="7" d="M195 14.5h1m-1 7h1m-1 28h1m-1 27h1m-1 7h1m-1 20h1m-1 7h1m-1 7h1m-1 34h1m-1 14h1"/><path stroke="#ff5900" stroke-width="6" d="M195 234h1"/><path stroke="#ff2600" stroke-width="5" d="M195 2.5h1"/><path stroke="#ff2600" stroke-width="6" d="M195 8h1m-1 48h1m-1 41h1m-1 48h1m-1 48h1"/><path stroke="#ff2600" stroke-width="7" d="M195 28.5h1m-1 7h1m-1 7h1m-1 20h1m-1 7h1m-1 21h1m-1 34h1m-1 7h1m-1 7h1m-1 20h1m-1 14h1m-1 7h1m-1 7h1m-1 13h1m-1 7h1m-1 7h1m-1 7h1m-1 7h1"/><path stroke="#ff2600" stroke-width="1" d="M195 237.5h1"/></g>
 
 <rect x="986" y="0" width="1" height="238" fill="#101010"/>
</svg>

<svg class="a" style="left:986px;top:240px" width="6" height="280" viewBox="986 240 6 280">
 <g fill="#ffffff" opacity="0.8"><circle cx="989.5" cy="250.5" r="0.7"/><circle cx="989.5" cy="253.5" r="0.7"/><circle cx="989.5" cy="256.5" r="0.7"/><circle cx="989.5" cy="500.5" r="0.7"/><circle cx="989.5" cy="503.5" r="0.7"/><circle cx="989.5" cy="506.5" r="0.7"/></g>
 <g fill="#5a5a5a"><circle cx="988.5" cy="249.5" r="0.75"/><circle cx="988.5" cy="252.5" r="0.75"/><circle cx="988.5" cy="255.5" r="0.75"/><circle cx="988.5" cy="499.5" r="0.75"/><circle cx="988.5" cy="502.5" r="0.75"/><circle cx="988.5" cy="505.5" r="0.75"/></g>
</svg>

<!-- right dock: Input controls -->
<div class="frame" style="left:991px;top:50px;width:288px;height:281px;background:linear-gradient(#e3e3e3,#d9d9d9 45%,#d3d3d3)"></div>
<div class="t" style="left:997px;top:52px">Input controls</div>
<svg class="a" style="left:1236px;top:50px" width="40" height="18">
 <circle cx="8.8" cy="8.5" r="6" fill="#ececec"/><path d="M8.8 5.2 L12 8.5 L8.8 11.8 L5.6 8.5z" fill="none" stroke="#222" stroke-width="1.2"/>
 <circle cx="27.8" cy="8.5" r="6" fill="#ececec"/><path d="M25 5.7 L30.6 11.3 M30.6 5.7 L25 11.3" stroke="#222" stroke-width="1.2"/>
</svg>
<div class="t" style="left:997px;top:78px;letter-spacing:0.11px">LNB LO</div>
<div class="a" style="left:1045px;top:77px;width:226px;height:18px;border-radius:3px;background:#fff;box-shadow:inset 0 1px 1px rgba(0,0,0,0.35),0 0 0 1px #c8c8c8"></div>
<div class="t" style="left:1168px;top:79px">0.000000 MHz</div>
<svg class="a" style="left:1255px;top:78px" width="14" height="16"><path d="M2.4 7 L6.6 2.6 L10.8 7 M2.4 9.2 L6.6 13.6 L10.8 9.2" fill="none" stroke="#2a2a2a" stroke-width="1.55"/></svg>

<div class="chk" style="left:1000px;top:103px"></div>
<svg class="a" style="left:1000px;top:103px" width="16" height="16"><path d="M2.6 8.2 L6.4 12 L13.2 3.9" fill="none" stroke="#303030" stroke-width="2.1"/></svg>
<div class="t" style="left:1022px;top:104px">Hardware AGC</div>

<div class="t" style="left:997px;top:130px">LNA gain</div>
<div class="a" style="left:1100px;top:135px;width:71px;height:5px;border-radius:3px;background:linear-gradient(#b4b4b4,#c8c8c8);box-shadow:inset 0 1px 1px rgba(0,0,0,0.15),0 1px 0 #ececec"></div>
<div class="a" style="left:1097px;top:131px;width:13px;height:13px;border-radius:50%;background:radial-gradient(circle at 50% 35%,#fbfbfb,#dcdcdc);box-shadow:0 0 0 1px #bcbcbc,0 1px 1px rgba(0,0,0,0.3)"></div>
<div class="t" style="left:1184px;top:130px">0.0 dB</div>

<div class="chk" style="left:1000px;top:155px"></div><div class="t" style="left:1022px;top:156px;letter-spacing:0.4px">Swap I/Q</div>
<div class="chk" style="left:1080px;top:155px"></div><div class="t" style="left:1102px;top:156px">No limits</div>
<div class="chk" style="left:1004px;top:180px"></div><div class="t" style="left:1026px;top:181px">DC rem.</div>
<div class="chk" style="left:1080px;top:180px"></div><div class="t" style="left:1102px;top:181px">IQ bal.</div>

<div class="t" style="left:998px;top:206px">Freq. correction</div>
<div class="a" style="left:1094px;top:205px;width:84px;height:18px;border-radius:3px;background:#fff;box-shadow:inset 0 1px 1px rgba(0,0,0,0.35),0 0 0 1px #c8c8c8"></div>
<div class="t" style="left:1098px;top:207px;letter-spacing:0.85px">-27 ppm</div>
<svg class="a" style="left:1162px;top:206px" width="14" height="16"><path d="M2.4 7 L6.6 2.6 L10.8 7 M2.4 9.2 L6.6 13.6 L10.8 9.2" fill="none" stroke="#2a2a2a" stroke-width="1.55"/></svg>

<div class="t" style="left:1040px;top:232px">Antenna</div>
<div class="combo" style="left:1093px;top:231px;width:178px;height:17px"></div>
<div class="t" style="left:1097px;top:231px">RX</div>
<svg class="a" style="left:1254px;top:233px" width="14" height="12"><path d="M2.8 4 L7.3 8.5 L11.8 4" fill="none" stroke="#2a2a2a" stroke-width="1.7"/></svg>

<!-- tabs 1 -->
<div class="a" style="left:991px;top:335px;width:289px;height:1px;background:#f4f4f4"></div>
<div class="a" style="left:1084px;top:336px;width:196px;height:1px;background:#b8b8b8"></div>
<div class="a" style="left:992px;top:336px;width:92px;height:21px;border-radius:0 0 4px 4px;background:linear-gradient(#d9d9d9,#e9e9e9);box-shadow:0 1px 1px rgba(0,0,0,0.28),-1px 0 0 #f0f0f0,1px 0 0 #f8f8f8"></div>
<div class="t" style="left:999px;top:339px">Input controls</div>
<div class="a" style="left:1088px;top:336px;width:112px;height:18px;border-radius:0 0 4px 4px;background:linear-gradient(#c8c8c8,#d6d6d6);box-shadow:0 1px 1px rgba(0,0,0,0.3),-1px 0 0 #f2f2f2,1px 0 0 #c4c4c4,inset 0 1px 1px rgba(0,0,0,0.15)"></div>
<div class="t" style="left:1095px;top:338px">Receiver Options</div>
<div class="a" style="left:1131px;top:359px;width:10px;height:2px;border-top:1px dotted #999"></div>

<!-- right dock: FFT settings -->
<div class="frame" style="left:991px;top:363px;width:288px;height:313px;background:linear-gradient(#d5d5d5,#d2d2d2)"></div>
<div class="t" style="left:997px;top:365px;letter-spacing:0.28px">FFT Settings</div>
<svg class="a" style="left:1236px;top:363px" width="40" height="18">
 <circle cx="8.8" cy="8.5" r="6" fill="#ececec"/><path d="M8.8 5.2 L12 8.5 L8.8 11.8 L5.6 8.5z" fill="none" stroke="#222" stroke-width="1.2"/>
 <circle cx="27.8" cy="8.5" r="6" fill="#ececec"/><path d="M25 5.7 L30.6 11.3 M30.6 5.7 L25 11.3" stroke="#222" stroke-width="1.2"/>
</svg>

<div class="t" style="left:1020px;top:391px;letter-spacing:0.17px">FFT size</div>
<div class="combo" style="left:1080px;top:390px;width:131px;height:16px"></div>
<div class="t" style="left:1084px;top:390px;letter-spacing:0.82px">16384</div>
<svg class="a" style="left:1194px;top:392px" width="14" height="12"><path d="M2.8 4 L7.3 8.5 L11.8 4" fill="none" stroke="#2a2a2a" stroke-width="1.7"/></svg>

<div class="t" style="left:1039px;top:417px;letter-spacing:0.87px">Rate</div>
<div class="combo" style="left:1080px;top:416px;width:131px;height:16px"></div>
<div class="t" style="left:1084px;top:416px;letter-spacing:0.77px">60 fps</div>
<svg class="a" style="left:1194px;top:418px" width="14" height="12"><path d="M2.8 4 L7.3 8.5 L11.8 4" fill="none" stroke="#2a2a2a" stroke-width="1.7"/></svg>

<div class="t" style="left:1006px;top:444px">Averaging</div>
<div class="a" style="left:1084px;top:449px;width:123px;height:5px;border-radius:3px;background:linear-gradient(#b4b4b4,#c8c8c8);box-shadow:inset 0 1px 1px rgba(0,0,0,0.15),0 1px 0 #ececec"></div>
<div class="a" style="left:1170px;top:445px;width:13px;height:13px;border-radius:50%;background:radial-gradient(circle at 50% 35%,#fbfbfb,#dcdcdc);box-shadow:0 0 0 1px #bcbcbc,0 1px 1px rgba(0,0,0,0.3)"></div>

<div class="t" style="left:1007px;top:471px">Pandapter</div>
<div class="a" style="left:1084px;top:476px;width:123px;height:5px;border-radius:3px;background:linear-gradient(#b4b4b4,#c8c8c8);box-shadow:inset 0 1px 1px rgba(0,0,0,0.15),0 1px 0 #ececec"></div>
<div class="a" style="left:1152px;top:472px;width:13px;height:13px;border-radius:50%;background:radial-gradient(circle at 50% 35%,#fbfbfb,#dcdcdc);box-shadow:0 0 0 1px #bcbcbc,0 1px 1px rgba(0,0,0,0.3)"></div>
<div class="t" style="left:1233px;top:471px;letter-spacing:0px">WF</div>

<div class="t" style="left:1038px;top:500px">Peak</div>
<div class="btn" style="left:1080px;top:496px;width:28px;height:22px">D</div>
<div class="btn" style="left:1125px;top:496px;width:28px;height:22px;box-shadow:0 0 0 1px #9ab0cc,0 1px 1px rgba(0,0,0,0.25)">H</div>

<div class="t" style="left:1032px;top:532px;letter-spacing:1.3px">Zoom</div>
<div class="btn" style="left:1080px;top:528px;width:28px;height:22px">R</div>
<div class="btn" style="left:1125px;top:528px;width:28px;height:22px">C</div>
<div class="btn" style="left:1170px;top:528px;width:28px;height:22px">D</div>

<div class="t" style="left:1035px;top:564px;letter-spacing:0.95px">Color</div>
<div class="a" style="left:1078px;top:558px;width:122px;height:28px;background:#e4e4e4"></div>
<div class="btn" style="left:1080px;top:560px;width:118px;height:22px"></div>
<div class="a" style="left:1106px;top:563px;width:16px;height:15px;background:#dedede"></div><div class="a" style="left:1108px;top:565px;width:12px;height:12px;background:#f9dc88;border:1px solid #a4a4a4"></div>
<div class="t" style="left:1128px;top:564px;letter-spacing:0.85px">Custom</div>
<div class="btn" style="left:1228px;top:561px;width:27px;height:21px;line-height:20px;background:linear-gradient(#dcdcdc,#d4d4d4);box-shadow:0 0 0 1px #c0c0c0">F</div>

<!-- tabs 2 -->
<div class="a" style="left:991px;top:681px;width:289px;height:1px;background:#f0f0f0"></div>
<div class="a" style="left:1075px;top:682px;width:205px;height:1px;background:#b8b8b8"></div>
<div class="a" style="left:992px;top:682px;width:83px;height:20px;border-radius:0 0 4px 4px;background:linear-gradient(#d8d8d8,#e8e8e8);box-shadow:0 1px 1px rgba(0,0,0,0.28),-1px 0 0 #f0f0f0,1px 0 0 #f8f8f8"></div>
<div class="t" style="left:999px;top:685px;letter-spacing:0.3px">FFT Settings</div>
<div class="a" style="left:1080px;top:682px;width:46px;height:18px;border-radius:0 0 4px 4px;background:linear-gradient(#c8c8c8,#d6d6d6);box-shadow:0 1px 1px rgba(0,0,0,0.3),-1px 0 0 #f2f2f2,1px 0 0 #c4c4c4,inset 0 1px 1px rgba(0,0,0,0.15)"></div>
<div class="t" style="left:1086px;top:684px">Audio</div>

</body></html>
